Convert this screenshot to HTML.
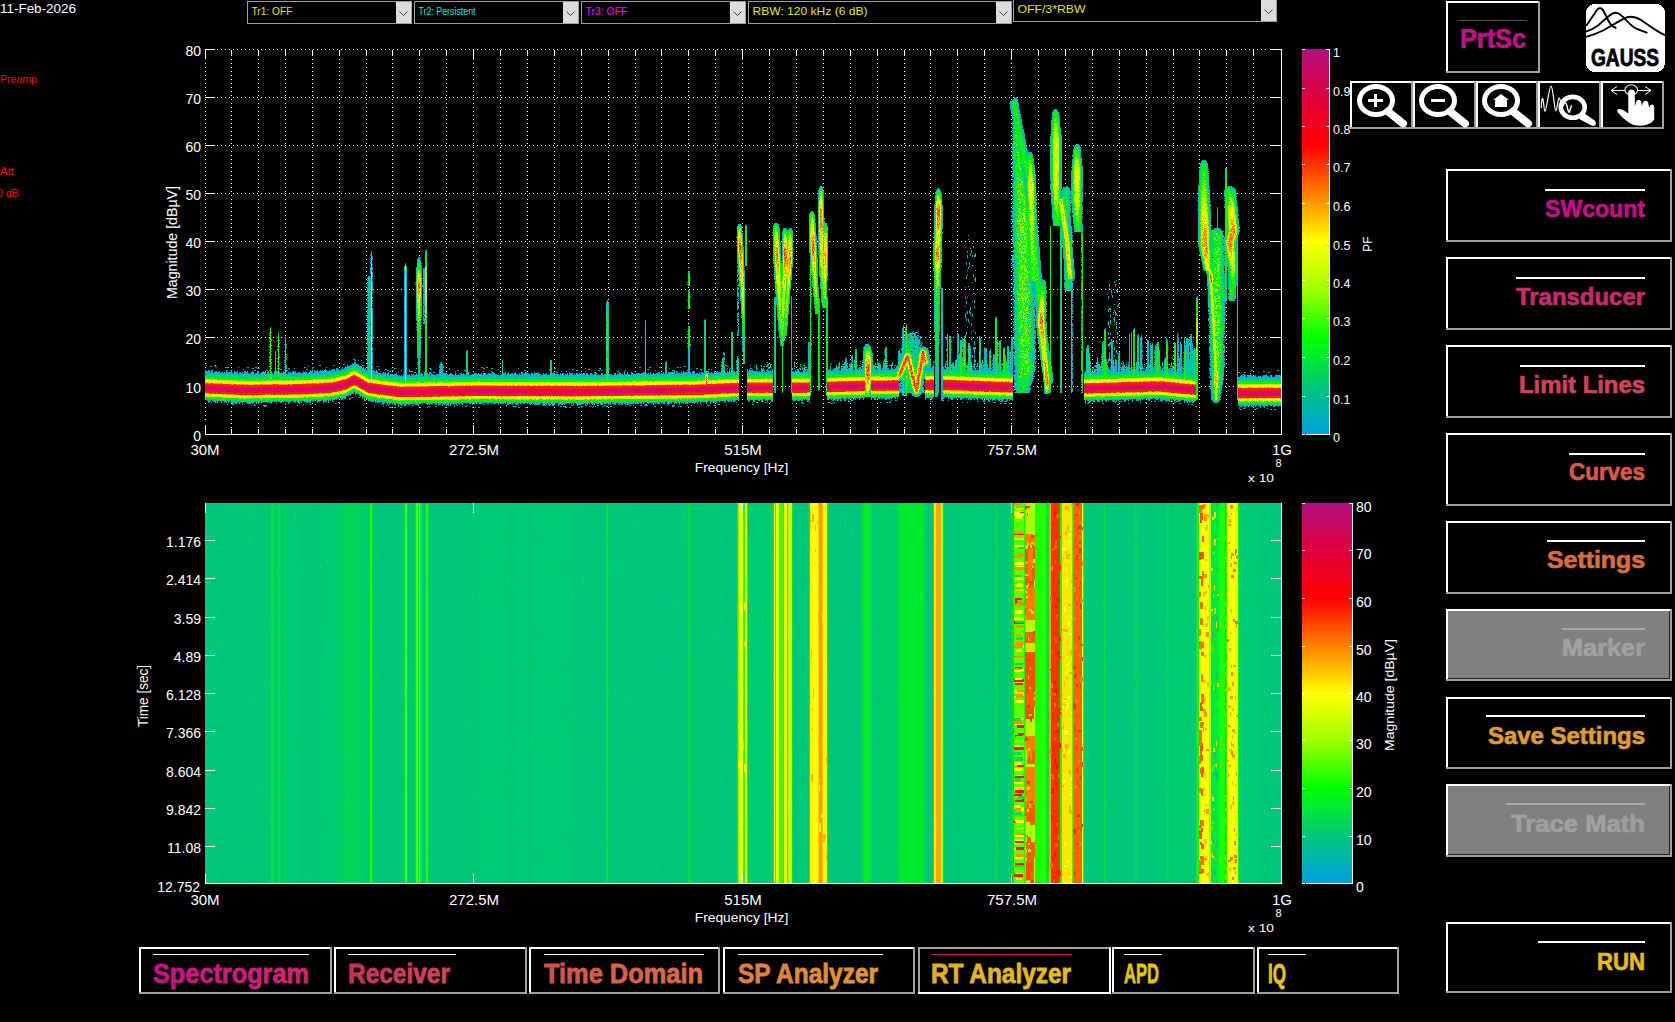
<!DOCTYPE html><html><head><meta charset="utf-8"><style>html,body{margin:0;padding:0;background:#000;width:1675px;height:1022px;overflow:hidden}svg{display:block}</style></head><body>
<svg width="1675" height="1022" viewBox="0 0 1675 1022" font-family='"Liberation Sans", sans-serif' shape-rendering="crispEdges">
<defs>
<linearGradient id="cb" x1="0" y1="0" x2="0" y2="1"><stop offset="0.000" stop-color="#b01080"/><stop offset="0.062" stop-color="#c8085e"/><stop offset="0.125" stop-color="#e0003c"/><stop offset="0.188" stop-color="#f0001e"/><stop offset="0.250" stop-color="#ff0000"/><stop offset="0.312" stop-color="#ff4000"/><stop offset="0.375" stop-color="#ff8000"/><stop offset="0.438" stop-color="#ffc000"/><stop offset="0.500" stop-color="#ffff00"/><stop offset="0.562" stop-color="#d0ff00"/><stop offset="0.625" stop-color="#a0ff00"/><stop offset="0.688" stop-color="#50ff00"/><stop offset="0.750" stop-color="#00ff00"/><stop offset="0.812" stop-color="#00e43c"/><stop offset="0.875" stop-color="#00c878"/><stop offset="0.938" stop-color="#00b4ac"/><stop offset="1.000" stop-color="#00a0e0"/></linearGradient>
<linearGradient id="tabg" gradientUnits="userSpaceOnUse" x1="150" y1="0" x2="1290" y2="0"><stop offset="0.000" stop-color="#c4108c"/><stop offset="0.140" stop-color="#cc2870"/><stop offset="0.175" stop-color="#c83064"/><stop offset="0.263" stop-color="#d04858"/><stop offset="0.346" stop-color="#d45050"/><stop offset="0.482" stop-color="#dc7040"/><stop offset="0.518" stop-color="#e07c3c"/><stop offset="0.640" stop-color="#e09c30"/><stop offset="0.684" stop-color="#e0b024"/><stop offset="0.807" stop-color="#e4c018"/><stop offset="0.855" stop-color="#e8c410"/><stop offset="1.000" stop-color="#e8c810"/></linearGradient>
<linearGradient id="rpg" gradientUnits="userSpaceOnUse" x1="0" y1="200" x2="0" y2="975"><stop offset="0" stop-color="#c40c8c"/><stop offset="0.12" stop-color="#c82870"/><stop offset="0.23" stop-color="#d0405c"/><stop offset="0.35" stop-color="#d85848"/><stop offset="0.46" stop-color="#d86c3c"/><stop offset="0.69" stop-color="#e09c2c"/><stop offset="1" stop-color="#e4c010"/></linearGradient>
</defs>
<text x="0" y="13" font-size="13.5" fill="#fff" text-anchor="start" font-weight="normal" textLength="76" lengthAdjust="spacingAndGlyphs" >11-Feb-2026</text>
<text x="0" y="83" font-size="10.5" fill="#f00" text-anchor="start" font-weight="normal" textLength="37" lengthAdjust="spacingAndGlyphs" >Preamp</text>
<text x="0" y="175" font-size="10.5" fill="#f00" text-anchor="start" font-weight="normal" textLength="14" lengthAdjust="spacingAndGlyphs" >Att</text>
<text x="-3" y="197" font-size="10.5" fill="#f00" text-anchor="start" font-weight="normal" textLength="22" lengthAdjust="spacingAndGlyphs" >0 dB</text>
<rect x="247.5" y="1.5" width="164.0" height="22.0" fill="#000" stroke="#a0a0a0" stroke-width="1"/>
<rect x="395.5" y="2.0" width="15.5" height="21.0" fill="#dcdcdc"/>
<path d="M399.5 11.5 L403.5 15.5 L407.5 11.5" stroke="#404040" stroke-width="1" fill="none" shape-rendering="auto"/>
<text x="251.5" y="15.0" font-size="11" fill="#e8e800" text-anchor="start" font-weight="normal" textLength="41" lengthAdjust="spacingAndGlyphs" >Tr1: OFF</text>
<rect x="414.5" y="1.5" width="164.0" height="22.0" fill="#000" stroke="#a0a0a0" stroke-width="1"/>
<rect x="562.5" y="2.0" width="15.5" height="21.0" fill="#dcdcdc"/>
<path d="M566.5 11.5 L570.5 15.5 L574.5 11.5" stroke="#404040" stroke-width="1" fill="none" shape-rendering="auto"/>
<text x="418.5" y="15.0" font-size="11" fill="#00e8e8" text-anchor="start" font-weight="normal" textLength="57" lengthAdjust="spacingAndGlyphs" >Tr2: Persistent</text>
<rect x="581.5" y="1.5" width="164.0" height="22.0" fill="#000" stroke="#a0a0a0" stroke-width="1"/>
<rect x="729.5" y="2.0" width="15.5" height="21.0" fill="#dcdcdc"/>
<path d="M733.5 11.5 L737.5 15.5 L741.5 11.5" stroke="#404040" stroke-width="1" fill="none" shape-rendering="auto"/>
<text x="585.5" y="15.0" font-size="11" fill="#ff00ff" text-anchor="start" font-weight="normal" textLength="42" lengthAdjust="spacingAndGlyphs" >Tr3: OFF</text>
<rect x="748.5" y="1.5" width="263.0" height="22.0" fill="#000" stroke="#a0a0a0" stroke-width="1"/>
<rect x="995.5" y="2.0" width="15.5" height="21.0" fill="#dcdcdc"/>
<path d="M999.5 11.5 L1003.5 15.5 L1007.5 11.5" stroke="#404040" stroke-width="1" fill="none" shape-rendering="auto"/>
<text x="752.5" y="15.0" font-size="11" fill="#e8e800" text-anchor="start" font-weight="normal" textLength="115" lengthAdjust="spacingAndGlyphs" >RBW: 120 kHz (6 dB)</text>
<rect x="1013.5" y="-0.5" width="263.0" height="22.0" fill="#000" stroke="#a0a0a0" stroke-width="1"/>
<rect x="1260.5" y="0.0" width="15.5" height="21.0" fill="#dcdcdc"/>
<path d="M1264.5 9.5 L1268.5 13.5 L1272.5 9.5" stroke="#404040" stroke-width="1" fill="none" shape-rendering="auto"/>
<text x="1017.5" y="13.0" font-size="11" fill="#e8e800" text-anchor="start" font-weight="normal" textLength="68" lengthAdjust="spacingAndGlyphs" >OFF/3*RBW</text>
<g fill="#fff">
<path d="M231 59h1v1h-1zM231 63h1v1h-1zM231 67h1v1h-1zM231 71h1v1h-1zM231 75h1v1h-1zM231 79h1v1h-1zM231 83h1v1h-1zM231 87h1v1h-1zM231 91h1v1h-1zM231 95h1v1h-1zM231 99h1v1h-1zM231 103h1v1h-1zM231 107h1v1h-1zM231 111h1v1h-1zM231 115h1v1h-1zM231 119h1v1h-1zM231 123h1v1h-1zM231 127h1v1h-1zM231 131h1v1h-1zM231 135h1v1h-1zM231 139h1v1h-1zM231 143h1v1h-1zM231 147h1v1h-1zM231 151h1v1h-1zM231 155h1v1h-1zM231 159h1v1h-1zM231 163h1v1h-1zM231 167h1v1h-1zM231 171h1v1h-1zM231 175h1v1h-1zM231 179h1v1h-1zM231 183h1v1h-1zM231 187h1v1h-1zM231 191h1v1h-1zM231 195h1v1h-1zM231 199h1v1h-1zM231 203h1v1h-1zM231 207h1v1h-1zM231 211h1v1h-1zM231 215h1v1h-1zM231 219h1v1h-1zM231 223h1v1h-1zM231 227h1v1h-1zM231 231h1v1h-1zM231 235h1v1h-1zM231 239h1v1h-1zM231 243h1v1h-1zM231 247h1v1h-1zM231 251h1v1h-1zM231 255h1v1h-1zM231 259h1v1h-1zM231 263h1v1h-1zM231 267h1v1h-1zM231 271h1v1h-1zM231 275h1v1h-1zM231 279h1v1h-1zM231 283h1v1h-1zM231 287h1v1h-1zM231 291h1v1h-1zM231 295h1v1h-1zM231 299h1v1h-1zM231 303h1v1h-1zM231 307h1v1h-1zM231 311h1v1h-1zM231 315h1v1h-1zM231 319h1v1h-1zM231 323h1v1h-1zM231 327h1v1h-1zM231 331h1v1h-1zM231 335h1v1h-1zM231 339h1v1h-1zM231 343h1v1h-1zM231 347h1v1h-1zM231 351h1v1h-1zM231 355h1v1h-1zM231 359h1v1h-1zM231 363h1v1h-1zM231 367h1v1h-1zM231 371h1v1h-1zM231 375h1v1h-1zM231 379h1v1h-1zM231 383h1v1h-1zM231 387h1v1h-1zM231 391h1v1h-1zM231 395h1v1h-1zM231 399h1v1h-1zM231 403h1v1h-1zM231 407h1v1h-1zM231 411h1v1h-1zM231 415h1v1h-1zM231 419h1v1h-1zM231 423h1v1h-1zM231 427h1v1h-1zM231 431h1v1h-1zM258 59h1v1h-1zM258 63h1v1h-1zM258 67h1v1h-1zM258 71h1v1h-1zM258 75h1v1h-1zM258 79h1v1h-1zM258 83h1v1h-1zM258 87h1v1h-1zM258 91h1v1h-1zM258 95h1v1h-1zM258 99h1v1h-1zM258 103h1v1h-1zM258 107h1v1h-1zM258 111h1v1h-1zM258 115h1v1h-1zM258 119h1v1h-1zM258 123h1v1h-1zM258 127h1v1h-1zM258 131h1v1h-1zM258 135h1v1h-1zM258 139h1v1h-1zM258 143h1v1h-1zM258 147h1v1h-1zM258 151h1v1h-1zM258 155h1v1h-1zM258 159h1v1h-1zM258 163h1v1h-1zM258 167h1v1h-1zM258 171h1v1h-1zM258 175h1v1h-1zM258 179h1v1h-1zM258 183h1v1h-1zM258 187h1v1h-1zM258 191h1v1h-1zM258 195h1v1h-1zM258 199h1v1h-1zM258 203h1v1h-1zM258 207h1v1h-1zM258 211h1v1h-1zM258 215h1v1h-1zM258 219h1v1h-1zM258 223h1v1h-1zM258 227h1v1h-1zM258 231h1v1h-1zM258 235h1v1h-1zM258 239h1v1h-1zM258 243h1v1h-1zM258 247h1v1h-1zM258 251h1v1h-1zM258 255h1v1h-1zM258 259h1v1h-1zM258 263h1v1h-1zM258 267h1v1h-1zM258 271h1v1h-1zM258 275h1v1h-1zM258 279h1v1h-1zM258 283h1v1h-1zM258 287h1v1h-1zM258 291h1v1h-1zM258 295h1v1h-1zM258 299h1v1h-1zM258 303h1v1h-1zM258 307h1v1h-1zM258 311h1v1h-1zM258 315h1v1h-1zM258 319h1v1h-1zM258 323h1v1h-1zM258 327h1v1h-1zM258 331h1v1h-1zM258 335h1v1h-1zM258 339h1v1h-1zM258 343h1v1h-1zM258 347h1v1h-1zM258 351h1v1h-1zM258 355h1v1h-1zM258 359h1v1h-1zM258 363h1v1h-1zM258 367h1v1h-1zM258 371h1v1h-1zM258 375h1v1h-1zM258 379h1v1h-1zM258 383h1v1h-1zM258 387h1v1h-1zM258 391h1v1h-1zM258 395h1v1h-1zM258 399h1v1h-1zM258 403h1v1h-1zM258 407h1v1h-1zM258 411h1v1h-1zM258 415h1v1h-1zM258 419h1v1h-1zM258 423h1v1h-1zM258 427h1v1h-1zM258 431h1v1h-1zM285 59h1v1h-1zM285 63h1v1h-1zM285 67h1v1h-1zM285 71h1v1h-1zM285 75h1v1h-1zM285 79h1v1h-1zM285 83h1v1h-1zM285 87h1v1h-1zM285 91h1v1h-1zM285 95h1v1h-1zM285 99h1v1h-1zM285 103h1v1h-1zM285 107h1v1h-1zM285 111h1v1h-1zM285 115h1v1h-1zM285 119h1v1h-1zM285 123h1v1h-1zM285 127h1v1h-1zM285 131h1v1h-1zM285 135h1v1h-1zM285 139h1v1h-1zM285 143h1v1h-1zM285 147h1v1h-1zM285 151h1v1h-1zM285 155h1v1h-1zM285 159h1v1h-1zM285 163h1v1h-1zM285 167h1v1h-1zM285 171h1v1h-1zM285 175h1v1h-1zM285 179h1v1h-1zM285 183h1v1h-1zM285 187h1v1h-1zM285 191h1v1h-1zM285 195h1v1h-1zM285 199h1v1h-1zM285 203h1v1h-1zM285 207h1v1h-1zM285 211h1v1h-1zM285 215h1v1h-1zM285 219h1v1h-1zM285 223h1v1h-1zM285 227h1v1h-1zM285 231h1v1h-1zM285 235h1v1h-1zM285 239h1v1h-1zM285 243h1v1h-1zM285 247h1v1h-1zM285 251h1v1h-1zM285 255h1v1h-1zM285 259h1v1h-1zM285 263h1v1h-1zM285 267h1v1h-1zM285 271h1v1h-1zM285 275h1v1h-1zM285 279h1v1h-1zM285 283h1v1h-1zM285 287h1v1h-1zM285 291h1v1h-1zM285 295h1v1h-1zM285 299h1v1h-1zM285 303h1v1h-1zM285 307h1v1h-1zM285 311h1v1h-1zM285 315h1v1h-1zM285 319h1v1h-1zM285 323h1v1h-1zM285 327h1v1h-1zM285 331h1v1h-1zM285 335h1v1h-1zM285 339h1v1h-1zM285 343h1v1h-1zM285 347h1v1h-1zM285 351h1v1h-1zM285 355h1v1h-1zM285 359h1v1h-1zM285 363h1v1h-1zM285 367h1v1h-1zM285 371h1v1h-1zM285 375h1v1h-1zM285 379h1v1h-1zM285 383h1v1h-1zM285 387h1v1h-1zM285 391h1v1h-1zM285 395h1v1h-1zM285 399h1v1h-1zM285 403h1v1h-1zM285 407h1v1h-1zM285 411h1v1h-1zM285 415h1v1h-1zM285 419h1v1h-1zM285 423h1v1h-1zM285 427h1v1h-1zM285 431h1v1h-1zM312 59h1v1h-1zM312 63h1v1h-1zM312 67h1v1h-1zM312 71h1v1h-1zM312 75h1v1h-1zM312 79h1v1h-1zM312 83h1v1h-1zM312 87h1v1h-1zM312 91h1v1h-1zM312 95h1v1h-1zM312 99h1v1h-1zM312 103h1v1h-1zM312 107h1v1h-1zM312 111h1v1h-1zM312 115h1v1h-1zM312 119h1v1h-1zM312 123h1v1h-1zM312 127h1v1h-1zM312 131h1v1h-1zM312 135h1v1h-1zM312 139h1v1h-1zM312 143h1v1h-1zM312 147h1v1h-1zM312 151h1v1h-1zM312 155h1v1h-1zM312 159h1v1h-1zM312 163h1v1h-1zM312 167h1v1h-1zM312 171h1v1h-1zM312 175h1v1h-1zM312 179h1v1h-1zM312 183h1v1h-1zM312 187h1v1h-1zM312 191h1v1h-1zM312 195h1v1h-1zM312 199h1v1h-1zM312 203h1v1h-1zM312 207h1v1h-1zM312 211h1v1h-1zM312 215h1v1h-1zM312 219h1v1h-1zM312 223h1v1h-1zM312 227h1v1h-1zM312 231h1v1h-1zM312 235h1v1h-1zM312 239h1v1h-1zM312 243h1v1h-1zM312 247h1v1h-1zM312 251h1v1h-1zM312 255h1v1h-1zM312 259h1v1h-1zM312 263h1v1h-1zM312 267h1v1h-1zM312 271h1v1h-1zM312 275h1v1h-1zM312 279h1v1h-1zM312 283h1v1h-1zM312 287h1v1h-1zM312 291h1v1h-1zM312 295h1v1h-1zM312 299h1v1h-1zM312 303h1v1h-1zM312 307h1v1h-1zM312 311h1v1h-1zM312 315h1v1h-1zM312 319h1v1h-1zM312 323h1v1h-1zM312 327h1v1h-1zM312 331h1v1h-1zM312 335h1v1h-1zM312 339h1v1h-1zM312 343h1v1h-1zM312 347h1v1h-1zM312 351h1v1h-1zM312 355h1v1h-1zM312 359h1v1h-1zM312 363h1v1h-1zM312 367h1v1h-1zM312 371h1v1h-1zM312 375h1v1h-1zM312 379h1v1h-1zM312 383h1v1h-1zM312 387h1v1h-1zM312 391h1v1h-1zM312 395h1v1h-1zM312 399h1v1h-1zM312 403h1v1h-1zM312 407h1v1h-1zM312 411h1v1h-1zM312 415h1v1h-1zM312 419h1v1h-1zM312 423h1v1h-1zM312 427h1v1h-1zM312 431h1v1h-1zM339 59h1v1h-1zM339 63h1v1h-1zM339 67h1v1h-1zM339 71h1v1h-1zM339 75h1v1h-1zM339 79h1v1h-1zM339 83h1v1h-1zM339 87h1v1h-1zM339 91h1v1h-1zM339 95h1v1h-1zM339 99h1v1h-1zM339 103h1v1h-1zM339 107h1v1h-1zM339 111h1v1h-1zM339 115h1v1h-1zM339 119h1v1h-1zM339 123h1v1h-1zM339 127h1v1h-1zM339 131h1v1h-1zM339 135h1v1h-1zM339 139h1v1h-1zM339 143h1v1h-1zM339 147h1v1h-1zM339 151h1v1h-1zM339 155h1v1h-1zM339 159h1v1h-1zM339 163h1v1h-1zM339 167h1v1h-1zM339 171h1v1h-1zM339 175h1v1h-1zM339 179h1v1h-1zM339 183h1v1h-1zM339 187h1v1h-1zM339 191h1v1h-1zM339 195h1v1h-1zM339 199h1v1h-1zM339 203h1v1h-1zM339 207h1v1h-1zM339 211h1v1h-1zM339 215h1v1h-1zM339 219h1v1h-1zM339 223h1v1h-1zM339 227h1v1h-1zM339 231h1v1h-1zM339 235h1v1h-1zM339 239h1v1h-1zM339 243h1v1h-1zM339 247h1v1h-1zM339 251h1v1h-1zM339 255h1v1h-1zM339 259h1v1h-1zM339 263h1v1h-1zM339 267h1v1h-1zM339 271h1v1h-1zM339 275h1v1h-1zM339 279h1v1h-1zM339 283h1v1h-1zM339 287h1v1h-1zM339 291h1v1h-1zM339 295h1v1h-1zM339 299h1v1h-1zM339 303h1v1h-1zM339 307h1v1h-1zM339 311h1v1h-1zM339 315h1v1h-1zM339 319h1v1h-1zM339 323h1v1h-1zM339 327h1v1h-1zM339 331h1v1h-1zM339 335h1v1h-1zM339 339h1v1h-1zM339 343h1v1h-1zM339 347h1v1h-1zM339 351h1v1h-1zM339 355h1v1h-1zM339 359h1v1h-1zM339 363h1v1h-1zM339 367h1v1h-1zM339 371h1v1h-1zM339 375h1v1h-1zM339 379h1v1h-1zM339 383h1v1h-1zM339 387h1v1h-1zM339 391h1v1h-1zM339 395h1v1h-1zM339 399h1v1h-1zM339 403h1v1h-1zM339 407h1v1h-1zM339 411h1v1h-1zM339 415h1v1h-1zM339 419h1v1h-1zM339 423h1v1h-1zM339 427h1v1h-1zM339 431h1v1h-1zM366 59h1v1h-1zM366 63h1v1h-1zM366 67h1v1h-1zM366 71h1v1h-1zM366 75h1v1h-1zM366 79h1v1h-1zM366 83h1v1h-1zM366 87h1v1h-1zM366 91h1v1h-1zM366 95h1v1h-1zM366 99h1v1h-1zM366 103h1v1h-1zM366 107h1v1h-1zM366 111h1v1h-1zM366 115h1v1h-1zM366 119h1v1h-1zM366 123h1v1h-1zM366 127h1v1h-1zM366 131h1v1h-1zM366 135h1v1h-1zM366 139h1v1h-1zM366 143h1v1h-1zM366 147h1v1h-1zM366 151h1v1h-1zM366 155h1v1h-1zM366 159h1v1h-1zM366 163h1v1h-1zM366 167h1v1h-1zM366 171h1v1h-1zM366 175h1v1h-1zM366 179h1v1h-1zM366 183h1v1h-1zM366 187h1v1h-1zM366 191h1v1h-1zM366 195h1v1h-1zM366 199h1v1h-1zM366 203h1v1h-1zM366 207h1v1h-1zM366 211h1v1h-1zM366 215h1v1h-1zM366 219h1v1h-1zM366 223h1v1h-1zM366 227h1v1h-1zM366 231h1v1h-1zM366 235h1v1h-1zM366 239h1v1h-1zM366 243h1v1h-1zM366 247h1v1h-1zM366 251h1v1h-1zM366 255h1v1h-1zM366 259h1v1h-1zM366 263h1v1h-1zM366 267h1v1h-1zM366 271h1v1h-1zM366 275h1v1h-1zM366 279h1v1h-1zM366 283h1v1h-1zM366 287h1v1h-1zM366 291h1v1h-1zM366 295h1v1h-1zM366 299h1v1h-1zM366 303h1v1h-1zM366 307h1v1h-1zM366 311h1v1h-1zM366 315h1v1h-1zM366 319h1v1h-1zM366 323h1v1h-1zM366 327h1v1h-1zM366 331h1v1h-1zM366 335h1v1h-1zM366 339h1v1h-1zM366 343h1v1h-1zM366 347h1v1h-1zM366 351h1v1h-1zM366 355h1v1h-1zM366 359h1v1h-1zM366 363h1v1h-1zM366 367h1v1h-1zM366 371h1v1h-1zM366 375h1v1h-1zM366 379h1v1h-1zM366 383h1v1h-1zM366 387h1v1h-1zM366 391h1v1h-1zM366 395h1v1h-1zM366 399h1v1h-1zM366 403h1v1h-1zM366 407h1v1h-1zM366 411h1v1h-1zM366 415h1v1h-1zM366 419h1v1h-1zM366 423h1v1h-1zM366 427h1v1h-1zM366 431h1v1h-1zM392 59h1v1h-1zM392 63h1v1h-1zM392 67h1v1h-1zM392 71h1v1h-1zM392 75h1v1h-1zM392 79h1v1h-1zM392 83h1v1h-1zM392 87h1v1h-1zM392 91h1v1h-1zM392 95h1v1h-1zM392 99h1v1h-1zM392 103h1v1h-1zM392 107h1v1h-1zM392 111h1v1h-1zM392 115h1v1h-1zM392 119h1v1h-1zM392 123h1v1h-1zM392 127h1v1h-1zM392 131h1v1h-1zM392 135h1v1h-1zM392 139h1v1h-1zM392 143h1v1h-1zM392 147h1v1h-1zM392 151h1v1h-1zM392 155h1v1h-1zM392 159h1v1h-1zM392 163h1v1h-1zM392 167h1v1h-1zM392 171h1v1h-1zM392 175h1v1h-1zM392 179h1v1h-1zM392 183h1v1h-1zM392 187h1v1h-1zM392 191h1v1h-1zM392 195h1v1h-1zM392 199h1v1h-1zM392 203h1v1h-1zM392 207h1v1h-1zM392 211h1v1h-1zM392 215h1v1h-1zM392 219h1v1h-1zM392 223h1v1h-1zM392 227h1v1h-1zM392 231h1v1h-1zM392 235h1v1h-1zM392 239h1v1h-1zM392 243h1v1h-1zM392 247h1v1h-1zM392 251h1v1h-1zM392 255h1v1h-1zM392 259h1v1h-1zM392 263h1v1h-1zM392 267h1v1h-1zM392 271h1v1h-1zM392 275h1v1h-1zM392 279h1v1h-1zM392 283h1v1h-1zM392 287h1v1h-1zM392 291h1v1h-1zM392 295h1v1h-1zM392 299h1v1h-1zM392 303h1v1h-1zM392 307h1v1h-1zM392 311h1v1h-1zM392 315h1v1h-1zM392 319h1v1h-1zM392 323h1v1h-1zM392 327h1v1h-1zM392 331h1v1h-1zM392 335h1v1h-1zM392 339h1v1h-1zM392 343h1v1h-1zM392 347h1v1h-1zM392 351h1v1h-1zM392 355h1v1h-1zM392 359h1v1h-1zM392 363h1v1h-1zM392 367h1v1h-1zM392 371h1v1h-1zM392 375h1v1h-1zM392 379h1v1h-1zM392 383h1v1h-1zM392 387h1v1h-1zM392 391h1v1h-1zM392 395h1v1h-1zM392 399h1v1h-1zM392 403h1v1h-1zM392 407h1v1h-1zM392 411h1v1h-1zM392 415h1v1h-1zM392 419h1v1h-1zM392 423h1v1h-1zM392 427h1v1h-1zM392 431h1v1h-1zM419 59h1v1h-1zM419 63h1v1h-1zM419 67h1v1h-1zM419 71h1v1h-1zM419 75h1v1h-1zM419 79h1v1h-1zM419 83h1v1h-1zM419 87h1v1h-1zM419 91h1v1h-1zM419 95h1v1h-1zM419 99h1v1h-1zM419 103h1v1h-1zM419 107h1v1h-1zM419 111h1v1h-1zM419 115h1v1h-1zM419 119h1v1h-1zM419 123h1v1h-1zM419 127h1v1h-1zM419 131h1v1h-1zM419 135h1v1h-1zM419 139h1v1h-1zM419 143h1v1h-1zM419 147h1v1h-1zM419 151h1v1h-1zM419 155h1v1h-1zM419 159h1v1h-1zM419 163h1v1h-1zM419 167h1v1h-1zM419 171h1v1h-1zM419 175h1v1h-1zM419 179h1v1h-1zM419 183h1v1h-1zM419 187h1v1h-1zM419 191h1v1h-1zM419 195h1v1h-1zM419 199h1v1h-1zM419 203h1v1h-1zM419 207h1v1h-1zM419 211h1v1h-1zM419 215h1v1h-1zM419 219h1v1h-1zM419 223h1v1h-1zM419 227h1v1h-1zM419 231h1v1h-1zM419 235h1v1h-1zM419 239h1v1h-1zM419 243h1v1h-1zM419 247h1v1h-1zM419 251h1v1h-1zM419 255h1v1h-1zM419 259h1v1h-1zM419 263h1v1h-1zM419 267h1v1h-1zM419 271h1v1h-1zM419 275h1v1h-1zM419 279h1v1h-1zM419 283h1v1h-1zM419 287h1v1h-1zM419 291h1v1h-1zM419 295h1v1h-1zM419 299h1v1h-1zM419 303h1v1h-1zM419 307h1v1h-1zM419 311h1v1h-1zM419 315h1v1h-1zM419 319h1v1h-1zM419 323h1v1h-1zM419 327h1v1h-1zM419 331h1v1h-1zM419 335h1v1h-1zM419 339h1v1h-1zM419 343h1v1h-1zM419 347h1v1h-1zM419 351h1v1h-1zM419 355h1v1h-1zM419 359h1v1h-1zM419 363h1v1h-1zM419 367h1v1h-1zM419 371h1v1h-1zM419 375h1v1h-1zM419 379h1v1h-1zM419 383h1v1h-1zM419 387h1v1h-1zM419 391h1v1h-1zM419 395h1v1h-1zM419 399h1v1h-1zM419 403h1v1h-1zM419 407h1v1h-1zM419 411h1v1h-1zM419 415h1v1h-1zM419 419h1v1h-1zM419 423h1v1h-1zM419 427h1v1h-1zM419 431h1v1h-1zM446 59h1v1h-1zM446 63h1v1h-1zM446 67h1v1h-1zM446 71h1v1h-1zM446 75h1v1h-1zM446 79h1v1h-1zM446 83h1v1h-1zM446 87h1v1h-1zM446 91h1v1h-1zM446 95h1v1h-1zM446 99h1v1h-1zM446 103h1v1h-1zM446 107h1v1h-1zM446 111h1v1h-1zM446 115h1v1h-1zM446 119h1v1h-1zM446 123h1v1h-1zM446 127h1v1h-1zM446 131h1v1h-1zM446 135h1v1h-1zM446 139h1v1h-1zM446 143h1v1h-1zM446 147h1v1h-1zM446 151h1v1h-1zM446 155h1v1h-1zM446 159h1v1h-1zM446 163h1v1h-1zM446 167h1v1h-1zM446 171h1v1h-1zM446 175h1v1h-1zM446 179h1v1h-1zM446 183h1v1h-1zM446 187h1v1h-1zM446 191h1v1h-1zM446 195h1v1h-1zM446 199h1v1h-1zM446 203h1v1h-1zM446 207h1v1h-1zM446 211h1v1h-1zM446 215h1v1h-1zM446 219h1v1h-1zM446 223h1v1h-1zM446 227h1v1h-1zM446 231h1v1h-1zM446 235h1v1h-1zM446 239h1v1h-1zM446 243h1v1h-1zM446 247h1v1h-1zM446 251h1v1h-1zM446 255h1v1h-1zM446 259h1v1h-1zM446 263h1v1h-1zM446 267h1v1h-1zM446 271h1v1h-1zM446 275h1v1h-1zM446 279h1v1h-1zM446 283h1v1h-1zM446 287h1v1h-1zM446 291h1v1h-1zM446 295h1v1h-1zM446 299h1v1h-1zM446 303h1v1h-1zM446 307h1v1h-1zM446 311h1v1h-1zM446 315h1v1h-1zM446 319h1v1h-1zM446 323h1v1h-1zM446 327h1v1h-1zM446 331h1v1h-1zM446 335h1v1h-1zM446 339h1v1h-1zM446 343h1v1h-1zM446 347h1v1h-1zM446 351h1v1h-1zM446 355h1v1h-1zM446 359h1v1h-1zM446 363h1v1h-1zM446 367h1v1h-1zM446 371h1v1h-1zM446 375h1v1h-1zM446 379h1v1h-1zM446 383h1v1h-1zM446 387h1v1h-1zM446 391h1v1h-1zM446 395h1v1h-1zM446 399h1v1h-1zM446 403h1v1h-1zM446 407h1v1h-1zM446 411h1v1h-1zM446 415h1v1h-1zM446 419h1v1h-1zM446 423h1v1h-1zM446 427h1v1h-1zM446 431h1v1h-1zM473 59h1v1h-1zM473 63h1v1h-1zM473 67h1v1h-1zM473 71h1v1h-1zM473 75h1v1h-1zM473 79h1v1h-1zM473 83h1v1h-1zM473 87h1v1h-1zM473 91h1v1h-1zM473 95h1v1h-1zM473 99h1v1h-1zM473 103h1v1h-1zM473 107h1v1h-1zM473 111h1v1h-1zM473 115h1v1h-1zM473 119h1v1h-1zM473 123h1v1h-1zM473 127h1v1h-1zM473 131h1v1h-1zM473 135h1v1h-1zM473 139h1v1h-1zM473 143h1v1h-1zM473 147h1v1h-1zM473 151h1v1h-1zM473 155h1v1h-1zM473 159h1v1h-1zM473 163h1v1h-1zM473 167h1v1h-1zM473 171h1v1h-1zM473 175h1v1h-1zM473 179h1v1h-1zM473 183h1v1h-1zM473 187h1v1h-1zM473 191h1v1h-1zM473 195h1v1h-1zM473 199h1v1h-1zM473 203h1v1h-1zM473 207h1v1h-1zM473 211h1v1h-1zM473 215h1v1h-1zM473 219h1v1h-1zM473 223h1v1h-1zM473 227h1v1h-1zM473 231h1v1h-1zM473 235h1v1h-1zM473 239h1v1h-1zM473 243h1v1h-1zM473 247h1v1h-1zM473 251h1v1h-1zM473 255h1v1h-1zM473 259h1v1h-1zM473 263h1v1h-1zM473 267h1v1h-1zM473 271h1v1h-1zM473 275h1v1h-1zM473 279h1v1h-1zM473 283h1v1h-1zM473 287h1v1h-1zM473 291h1v1h-1zM473 295h1v1h-1zM473 299h1v1h-1zM473 303h1v1h-1zM473 307h1v1h-1zM473 311h1v1h-1zM473 315h1v1h-1zM473 319h1v1h-1zM473 323h1v1h-1zM473 327h1v1h-1zM473 331h1v1h-1zM473 335h1v1h-1zM473 339h1v1h-1zM473 343h1v1h-1zM473 347h1v1h-1zM473 351h1v1h-1zM473 355h1v1h-1zM473 359h1v1h-1zM473 363h1v1h-1zM473 367h1v1h-1zM473 371h1v1h-1zM473 375h1v1h-1zM473 379h1v1h-1zM473 383h1v1h-1zM473 387h1v1h-1zM473 391h1v1h-1zM473 395h1v1h-1zM473 399h1v1h-1zM473 403h1v1h-1zM473 407h1v1h-1zM473 411h1v1h-1zM473 415h1v1h-1zM473 419h1v1h-1zM473 423h1v1h-1zM473 427h1v1h-1zM473 431h1v1h-1zM500 59h1v1h-1zM500 63h1v1h-1zM500 67h1v1h-1zM500 71h1v1h-1zM500 75h1v1h-1zM500 79h1v1h-1zM500 83h1v1h-1zM500 87h1v1h-1zM500 91h1v1h-1zM500 95h1v1h-1zM500 99h1v1h-1zM500 103h1v1h-1zM500 107h1v1h-1zM500 111h1v1h-1zM500 115h1v1h-1zM500 119h1v1h-1zM500 123h1v1h-1zM500 127h1v1h-1zM500 131h1v1h-1zM500 135h1v1h-1zM500 139h1v1h-1zM500 143h1v1h-1zM500 147h1v1h-1zM500 151h1v1h-1zM500 155h1v1h-1zM500 159h1v1h-1zM500 163h1v1h-1zM500 167h1v1h-1zM500 171h1v1h-1zM500 175h1v1h-1zM500 179h1v1h-1zM500 183h1v1h-1zM500 187h1v1h-1zM500 191h1v1h-1zM500 195h1v1h-1zM500 199h1v1h-1zM500 203h1v1h-1zM500 207h1v1h-1zM500 211h1v1h-1zM500 215h1v1h-1zM500 219h1v1h-1zM500 223h1v1h-1zM500 227h1v1h-1zM500 231h1v1h-1zM500 235h1v1h-1zM500 239h1v1h-1zM500 243h1v1h-1zM500 247h1v1h-1zM500 251h1v1h-1zM500 255h1v1h-1zM500 259h1v1h-1zM500 263h1v1h-1zM500 267h1v1h-1zM500 271h1v1h-1zM500 275h1v1h-1zM500 279h1v1h-1zM500 283h1v1h-1zM500 287h1v1h-1zM500 291h1v1h-1zM500 295h1v1h-1zM500 299h1v1h-1zM500 303h1v1h-1zM500 307h1v1h-1zM500 311h1v1h-1zM500 315h1v1h-1zM500 319h1v1h-1zM500 323h1v1h-1zM500 327h1v1h-1zM500 331h1v1h-1zM500 335h1v1h-1zM500 339h1v1h-1zM500 343h1v1h-1zM500 347h1v1h-1zM500 351h1v1h-1zM500 355h1v1h-1zM500 359h1v1h-1zM500 363h1v1h-1zM500 367h1v1h-1zM500 371h1v1h-1zM500 375h1v1h-1zM500 379h1v1h-1zM500 383h1v1h-1zM500 387h1v1h-1zM500 391h1v1h-1zM500 395h1v1h-1zM500 399h1v1h-1zM500 403h1v1h-1zM500 407h1v1h-1zM500 411h1v1h-1zM500 415h1v1h-1zM500 419h1v1h-1zM500 423h1v1h-1zM500 427h1v1h-1zM500 431h1v1h-1zM527 59h1v1h-1zM527 63h1v1h-1zM527 67h1v1h-1zM527 71h1v1h-1zM527 75h1v1h-1zM527 79h1v1h-1zM527 83h1v1h-1zM527 87h1v1h-1zM527 91h1v1h-1zM527 95h1v1h-1zM527 99h1v1h-1zM527 103h1v1h-1zM527 107h1v1h-1zM527 111h1v1h-1zM527 115h1v1h-1zM527 119h1v1h-1zM527 123h1v1h-1zM527 127h1v1h-1zM527 131h1v1h-1zM527 135h1v1h-1zM527 139h1v1h-1zM527 143h1v1h-1zM527 147h1v1h-1zM527 151h1v1h-1zM527 155h1v1h-1zM527 159h1v1h-1zM527 163h1v1h-1zM527 167h1v1h-1zM527 171h1v1h-1zM527 175h1v1h-1zM527 179h1v1h-1zM527 183h1v1h-1zM527 187h1v1h-1zM527 191h1v1h-1zM527 195h1v1h-1zM527 199h1v1h-1zM527 203h1v1h-1zM527 207h1v1h-1zM527 211h1v1h-1zM527 215h1v1h-1zM527 219h1v1h-1zM527 223h1v1h-1zM527 227h1v1h-1zM527 231h1v1h-1zM527 235h1v1h-1zM527 239h1v1h-1zM527 243h1v1h-1zM527 247h1v1h-1zM527 251h1v1h-1zM527 255h1v1h-1zM527 259h1v1h-1zM527 263h1v1h-1zM527 267h1v1h-1zM527 271h1v1h-1zM527 275h1v1h-1zM527 279h1v1h-1zM527 283h1v1h-1zM527 287h1v1h-1zM527 291h1v1h-1zM527 295h1v1h-1zM527 299h1v1h-1zM527 303h1v1h-1zM527 307h1v1h-1zM527 311h1v1h-1zM527 315h1v1h-1zM527 319h1v1h-1zM527 323h1v1h-1zM527 327h1v1h-1zM527 331h1v1h-1zM527 335h1v1h-1zM527 339h1v1h-1zM527 343h1v1h-1zM527 347h1v1h-1zM527 351h1v1h-1zM527 355h1v1h-1zM527 359h1v1h-1zM527 363h1v1h-1zM527 367h1v1h-1zM527 371h1v1h-1zM527 375h1v1h-1zM527 379h1v1h-1zM527 383h1v1h-1zM527 387h1v1h-1zM527 391h1v1h-1zM527 395h1v1h-1zM527 399h1v1h-1zM527 403h1v1h-1zM527 407h1v1h-1zM527 411h1v1h-1zM527 415h1v1h-1zM527 419h1v1h-1zM527 423h1v1h-1zM527 427h1v1h-1zM527 431h1v1h-1zM554 59h1v1h-1zM554 63h1v1h-1zM554 67h1v1h-1zM554 71h1v1h-1zM554 75h1v1h-1zM554 79h1v1h-1zM554 83h1v1h-1zM554 87h1v1h-1zM554 91h1v1h-1zM554 95h1v1h-1zM554 99h1v1h-1zM554 103h1v1h-1zM554 107h1v1h-1zM554 111h1v1h-1zM554 115h1v1h-1zM554 119h1v1h-1zM554 123h1v1h-1zM554 127h1v1h-1zM554 131h1v1h-1zM554 135h1v1h-1zM554 139h1v1h-1zM554 143h1v1h-1zM554 147h1v1h-1zM554 151h1v1h-1zM554 155h1v1h-1zM554 159h1v1h-1zM554 163h1v1h-1zM554 167h1v1h-1zM554 171h1v1h-1zM554 175h1v1h-1zM554 179h1v1h-1zM554 183h1v1h-1zM554 187h1v1h-1zM554 191h1v1h-1zM554 195h1v1h-1zM554 199h1v1h-1zM554 203h1v1h-1zM554 207h1v1h-1zM554 211h1v1h-1zM554 215h1v1h-1zM554 219h1v1h-1zM554 223h1v1h-1zM554 227h1v1h-1zM554 231h1v1h-1zM554 235h1v1h-1zM554 239h1v1h-1zM554 243h1v1h-1zM554 247h1v1h-1zM554 251h1v1h-1zM554 255h1v1h-1zM554 259h1v1h-1zM554 263h1v1h-1zM554 267h1v1h-1zM554 271h1v1h-1zM554 275h1v1h-1zM554 279h1v1h-1zM554 283h1v1h-1zM554 287h1v1h-1zM554 291h1v1h-1zM554 295h1v1h-1zM554 299h1v1h-1zM554 303h1v1h-1zM554 307h1v1h-1zM554 311h1v1h-1zM554 315h1v1h-1zM554 319h1v1h-1zM554 323h1v1h-1zM554 327h1v1h-1zM554 331h1v1h-1zM554 335h1v1h-1zM554 339h1v1h-1zM554 343h1v1h-1zM554 347h1v1h-1zM554 351h1v1h-1zM554 355h1v1h-1zM554 359h1v1h-1zM554 363h1v1h-1zM554 367h1v1h-1zM554 371h1v1h-1zM554 375h1v1h-1zM554 379h1v1h-1zM554 383h1v1h-1zM554 387h1v1h-1zM554 391h1v1h-1zM554 395h1v1h-1zM554 399h1v1h-1zM554 403h1v1h-1zM554 407h1v1h-1zM554 411h1v1h-1zM554 415h1v1h-1zM554 419h1v1h-1zM554 423h1v1h-1zM554 427h1v1h-1zM554 431h1v1h-1zM581 59h1v1h-1zM581 63h1v1h-1zM581 67h1v1h-1zM581 71h1v1h-1zM581 75h1v1h-1zM581 79h1v1h-1zM581 83h1v1h-1zM581 87h1v1h-1zM581 91h1v1h-1zM581 95h1v1h-1zM581 99h1v1h-1zM581 103h1v1h-1zM581 107h1v1h-1zM581 111h1v1h-1zM581 115h1v1h-1zM581 119h1v1h-1zM581 123h1v1h-1zM581 127h1v1h-1zM581 131h1v1h-1zM581 135h1v1h-1zM581 139h1v1h-1zM581 143h1v1h-1zM581 147h1v1h-1zM581 151h1v1h-1zM581 155h1v1h-1zM581 159h1v1h-1zM581 163h1v1h-1zM581 167h1v1h-1zM581 171h1v1h-1zM581 175h1v1h-1zM581 179h1v1h-1zM581 183h1v1h-1zM581 187h1v1h-1zM581 191h1v1h-1zM581 195h1v1h-1zM581 199h1v1h-1zM581 203h1v1h-1zM581 207h1v1h-1zM581 211h1v1h-1zM581 215h1v1h-1zM581 219h1v1h-1zM581 223h1v1h-1zM581 227h1v1h-1zM581 231h1v1h-1zM581 235h1v1h-1zM581 239h1v1h-1zM581 243h1v1h-1zM581 247h1v1h-1zM581 251h1v1h-1zM581 255h1v1h-1zM581 259h1v1h-1zM581 263h1v1h-1zM581 267h1v1h-1zM581 271h1v1h-1zM581 275h1v1h-1zM581 279h1v1h-1zM581 283h1v1h-1zM581 287h1v1h-1zM581 291h1v1h-1zM581 295h1v1h-1zM581 299h1v1h-1zM581 303h1v1h-1zM581 307h1v1h-1zM581 311h1v1h-1zM581 315h1v1h-1zM581 319h1v1h-1zM581 323h1v1h-1zM581 327h1v1h-1zM581 331h1v1h-1zM581 335h1v1h-1zM581 339h1v1h-1zM581 343h1v1h-1zM581 347h1v1h-1zM581 351h1v1h-1zM581 355h1v1h-1zM581 359h1v1h-1zM581 363h1v1h-1zM581 367h1v1h-1zM581 371h1v1h-1zM581 375h1v1h-1zM581 379h1v1h-1zM581 383h1v1h-1zM581 387h1v1h-1zM581 391h1v1h-1zM581 395h1v1h-1zM581 399h1v1h-1zM581 403h1v1h-1zM581 407h1v1h-1zM581 411h1v1h-1zM581 415h1v1h-1zM581 419h1v1h-1zM581 423h1v1h-1zM581 427h1v1h-1zM581 431h1v1h-1zM608 59h1v1h-1zM608 63h1v1h-1zM608 67h1v1h-1zM608 71h1v1h-1zM608 75h1v1h-1zM608 79h1v1h-1zM608 83h1v1h-1zM608 87h1v1h-1zM608 91h1v1h-1zM608 95h1v1h-1zM608 99h1v1h-1zM608 103h1v1h-1zM608 107h1v1h-1zM608 111h1v1h-1zM608 115h1v1h-1zM608 119h1v1h-1zM608 123h1v1h-1zM608 127h1v1h-1zM608 131h1v1h-1zM608 135h1v1h-1zM608 139h1v1h-1zM608 143h1v1h-1zM608 147h1v1h-1zM608 151h1v1h-1zM608 155h1v1h-1zM608 159h1v1h-1zM608 163h1v1h-1zM608 167h1v1h-1zM608 171h1v1h-1zM608 175h1v1h-1zM608 179h1v1h-1zM608 183h1v1h-1zM608 187h1v1h-1zM608 191h1v1h-1zM608 195h1v1h-1zM608 199h1v1h-1zM608 203h1v1h-1zM608 207h1v1h-1zM608 211h1v1h-1zM608 215h1v1h-1zM608 219h1v1h-1zM608 223h1v1h-1zM608 227h1v1h-1zM608 231h1v1h-1zM608 235h1v1h-1zM608 239h1v1h-1zM608 243h1v1h-1zM608 247h1v1h-1zM608 251h1v1h-1zM608 255h1v1h-1zM608 259h1v1h-1zM608 263h1v1h-1zM608 267h1v1h-1zM608 271h1v1h-1zM608 275h1v1h-1zM608 279h1v1h-1zM608 283h1v1h-1zM608 287h1v1h-1zM608 291h1v1h-1zM608 295h1v1h-1zM608 299h1v1h-1zM608 303h1v1h-1zM608 307h1v1h-1zM608 311h1v1h-1zM608 315h1v1h-1zM608 319h1v1h-1zM608 323h1v1h-1zM608 327h1v1h-1zM608 331h1v1h-1zM608 335h1v1h-1zM608 339h1v1h-1zM608 343h1v1h-1zM608 347h1v1h-1zM608 351h1v1h-1zM608 355h1v1h-1zM608 359h1v1h-1zM608 363h1v1h-1zM608 367h1v1h-1zM608 371h1v1h-1zM608 375h1v1h-1zM608 379h1v1h-1zM608 383h1v1h-1zM608 387h1v1h-1zM608 391h1v1h-1zM608 395h1v1h-1zM608 399h1v1h-1zM608 403h1v1h-1zM608 407h1v1h-1zM608 411h1v1h-1zM608 415h1v1h-1zM608 419h1v1h-1zM608 423h1v1h-1zM608 427h1v1h-1zM608 431h1v1h-1zM635 59h1v1h-1zM635 63h1v1h-1zM635 67h1v1h-1zM635 71h1v1h-1zM635 75h1v1h-1zM635 79h1v1h-1zM635 83h1v1h-1zM635 87h1v1h-1zM635 91h1v1h-1zM635 95h1v1h-1zM635 99h1v1h-1zM635 103h1v1h-1zM635 107h1v1h-1zM635 111h1v1h-1zM635 115h1v1h-1zM635 119h1v1h-1zM635 123h1v1h-1zM635 127h1v1h-1zM635 131h1v1h-1zM635 135h1v1h-1zM635 139h1v1h-1zM635 143h1v1h-1zM635 147h1v1h-1zM635 151h1v1h-1zM635 155h1v1h-1zM635 159h1v1h-1zM635 163h1v1h-1zM635 167h1v1h-1zM635 171h1v1h-1zM635 175h1v1h-1zM635 179h1v1h-1zM635 183h1v1h-1zM635 187h1v1h-1zM635 191h1v1h-1zM635 195h1v1h-1zM635 199h1v1h-1zM635 203h1v1h-1zM635 207h1v1h-1zM635 211h1v1h-1zM635 215h1v1h-1zM635 219h1v1h-1zM635 223h1v1h-1zM635 227h1v1h-1zM635 231h1v1h-1zM635 235h1v1h-1zM635 239h1v1h-1zM635 243h1v1h-1zM635 247h1v1h-1zM635 251h1v1h-1zM635 255h1v1h-1zM635 259h1v1h-1zM635 263h1v1h-1zM635 267h1v1h-1zM635 271h1v1h-1zM635 275h1v1h-1zM635 279h1v1h-1zM635 283h1v1h-1zM635 287h1v1h-1zM635 291h1v1h-1zM635 295h1v1h-1zM635 299h1v1h-1zM635 303h1v1h-1zM635 307h1v1h-1zM635 311h1v1h-1zM635 315h1v1h-1zM635 319h1v1h-1zM635 323h1v1h-1zM635 327h1v1h-1zM635 331h1v1h-1zM635 335h1v1h-1zM635 339h1v1h-1zM635 343h1v1h-1zM635 347h1v1h-1zM635 351h1v1h-1zM635 355h1v1h-1zM635 359h1v1h-1zM635 363h1v1h-1zM635 367h1v1h-1zM635 371h1v1h-1zM635 375h1v1h-1zM635 379h1v1h-1zM635 383h1v1h-1zM635 387h1v1h-1zM635 391h1v1h-1zM635 395h1v1h-1zM635 399h1v1h-1zM635 403h1v1h-1zM635 407h1v1h-1zM635 411h1v1h-1zM635 415h1v1h-1zM635 419h1v1h-1zM635 423h1v1h-1zM635 427h1v1h-1zM635 431h1v1h-1zM661 59h1v1h-1zM661 63h1v1h-1zM661 67h1v1h-1zM661 71h1v1h-1zM661 75h1v1h-1zM661 79h1v1h-1zM661 83h1v1h-1zM661 87h1v1h-1zM661 91h1v1h-1zM661 95h1v1h-1zM661 99h1v1h-1zM661 103h1v1h-1zM661 107h1v1h-1zM661 111h1v1h-1zM661 115h1v1h-1zM661 119h1v1h-1zM661 123h1v1h-1zM661 127h1v1h-1zM661 131h1v1h-1zM661 135h1v1h-1zM661 139h1v1h-1zM661 143h1v1h-1zM661 147h1v1h-1zM661 151h1v1h-1zM661 155h1v1h-1zM661 159h1v1h-1zM661 163h1v1h-1zM661 167h1v1h-1zM661 171h1v1h-1zM661 175h1v1h-1zM661 179h1v1h-1zM661 183h1v1h-1zM661 187h1v1h-1zM661 191h1v1h-1zM661 195h1v1h-1zM661 199h1v1h-1zM661 203h1v1h-1zM661 207h1v1h-1zM661 211h1v1h-1zM661 215h1v1h-1zM661 219h1v1h-1zM661 223h1v1h-1zM661 227h1v1h-1zM661 231h1v1h-1zM661 235h1v1h-1zM661 239h1v1h-1zM661 243h1v1h-1zM661 247h1v1h-1zM661 251h1v1h-1zM661 255h1v1h-1zM661 259h1v1h-1zM661 263h1v1h-1zM661 267h1v1h-1zM661 271h1v1h-1zM661 275h1v1h-1zM661 279h1v1h-1zM661 283h1v1h-1zM661 287h1v1h-1zM661 291h1v1h-1zM661 295h1v1h-1zM661 299h1v1h-1zM661 303h1v1h-1zM661 307h1v1h-1zM661 311h1v1h-1zM661 315h1v1h-1zM661 319h1v1h-1zM661 323h1v1h-1zM661 327h1v1h-1zM661 331h1v1h-1zM661 335h1v1h-1zM661 339h1v1h-1zM661 343h1v1h-1zM661 347h1v1h-1zM661 351h1v1h-1zM661 355h1v1h-1zM661 359h1v1h-1zM661 363h1v1h-1zM661 367h1v1h-1zM661 371h1v1h-1zM661 375h1v1h-1zM661 379h1v1h-1zM661 383h1v1h-1zM661 387h1v1h-1zM661 391h1v1h-1zM661 395h1v1h-1zM661 399h1v1h-1zM661 403h1v1h-1zM661 407h1v1h-1zM661 411h1v1h-1zM661 415h1v1h-1zM661 419h1v1h-1zM661 423h1v1h-1zM661 427h1v1h-1zM661 431h1v1h-1zM688 59h1v1h-1zM688 63h1v1h-1zM688 67h1v1h-1zM688 71h1v1h-1zM688 75h1v1h-1zM688 79h1v1h-1zM688 83h1v1h-1zM688 87h1v1h-1zM688 91h1v1h-1zM688 95h1v1h-1zM688 99h1v1h-1zM688 103h1v1h-1zM688 107h1v1h-1zM688 111h1v1h-1zM688 115h1v1h-1zM688 119h1v1h-1zM688 123h1v1h-1zM688 127h1v1h-1zM688 131h1v1h-1zM688 135h1v1h-1zM688 139h1v1h-1zM688 143h1v1h-1zM688 147h1v1h-1zM688 151h1v1h-1zM688 155h1v1h-1zM688 159h1v1h-1zM688 163h1v1h-1zM688 167h1v1h-1zM688 171h1v1h-1zM688 175h1v1h-1zM688 179h1v1h-1zM688 183h1v1h-1zM688 187h1v1h-1zM688 191h1v1h-1zM688 195h1v1h-1zM688 199h1v1h-1zM688 203h1v1h-1zM688 207h1v1h-1zM688 211h1v1h-1zM688 215h1v1h-1zM688 219h1v1h-1zM688 223h1v1h-1zM688 227h1v1h-1zM688 231h1v1h-1zM688 235h1v1h-1zM688 239h1v1h-1zM688 243h1v1h-1zM688 247h1v1h-1zM688 251h1v1h-1zM688 255h1v1h-1zM688 259h1v1h-1zM688 263h1v1h-1zM688 267h1v1h-1zM688 271h1v1h-1zM688 275h1v1h-1zM688 279h1v1h-1zM688 283h1v1h-1zM688 287h1v1h-1zM688 291h1v1h-1zM688 295h1v1h-1zM688 299h1v1h-1zM688 303h1v1h-1zM688 307h1v1h-1zM688 311h1v1h-1zM688 315h1v1h-1zM688 319h1v1h-1zM688 323h1v1h-1zM688 327h1v1h-1zM688 331h1v1h-1zM688 335h1v1h-1zM688 339h1v1h-1zM688 343h1v1h-1zM688 347h1v1h-1zM688 351h1v1h-1zM688 355h1v1h-1zM688 359h1v1h-1zM688 363h1v1h-1zM688 367h1v1h-1zM688 371h1v1h-1zM688 375h1v1h-1zM688 379h1v1h-1zM688 383h1v1h-1zM688 387h1v1h-1zM688 391h1v1h-1zM688 395h1v1h-1zM688 399h1v1h-1zM688 403h1v1h-1zM688 407h1v1h-1zM688 411h1v1h-1zM688 415h1v1h-1zM688 419h1v1h-1zM688 423h1v1h-1zM688 427h1v1h-1zM688 431h1v1h-1zM715 59h1v1h-1zM715 63h1v1h-1zM715 67h1v1h-1zM715 71h1v1h-1zM715 75h1v1h-1zM715 79h1v1h-1zM715 83h1v1h-1zM715 87h1v1h-1zM715 91h1v1h-1zM715 95h1v1h-1zM715 99h1v1h-1zM715 103h1v1h-1zM715 107h1v1h-1zM715 111h1v1h-1zM715 115h1v1h-1zM715 119h1v1h-1zM715 123h1v1h-1zM715 127h1v1h-1zM715 131h1v1h-1zM715 135h1v1h-1zM715 139h1v1h-1zM715 143h1v1h-1zM715 147h1v1h-1zM715 151h1v1h-1zM715 155h1v1h-1zM715 159h1v1h-1zM715 163h1v1h-1zM715 167h1v1h-1zM715 171h1v1h-1zM715 175h1v1h-1zM715 179h1v1h-1zM715 183h1v1h-1zM715 187h1v1h-1zM715 191h1v1h-1zM715 195h1v1h-1zM715 199h1v1h-1zM715 203h1v1h-1zM715 207h1v1h-1zM715 211h1v1h-1zM715 215h1v1h-1zM715 219h1v1h-1zM715 223h1v1h-1zM715 227h1v1h-1zM715 231h1v1h-1zM715 235h1v1h-1zM715 239h1v1h-1zM715 243h1v1h-1zM715 247h1v1h-1zM715 251h1v1h-1zM715 255h1v1h-1zM715 259h1v1h-1zM715 263h1v1h-1zM715 267h1v1h-1zM715 271h1v1h-1zM715 275h1v1h-1zM715 279h1v1h-1zM715 283h1v1h-1zM715 287h1v1h-1zM715 291h1v1h-1zM715 295h1v1h-1zM715 299h1v1h-1zM715 303h1v1h-1zM715 307h1v1h-1zM715 311h1v1h-1zM715 315h1v1h-1zM715 319h1v1h-1zM715 323h1v1h-1zM715 327h1v1h-1zM715 331h1v1h-1zM715 335h1v1h-1zM715 339h1v1h-1zM715 343h1v1h-1zM715 347h1v1h-1zM715 351h1v1h-1zM715 355h1v1h-1zM715 359h1v1h-1zM715 363h1v1h-1zM715 367h1v1h-1zM715 371h1v1h-1zM715 375h1v1h-1zM715 379h1v1h-1zM715 383h1v1h-1zM715 387h1v1h-1zM715 391h1v1h-1zM715 395h1v1h-1zM715 399h1v1h-1zM715 403h1v1h-1zM715 407h1v1h-1zM715 411h1v1h-1zM715 415h1v1h-1zM715 419h1v1h-1zM715 423h1v1h-1zM715 427h1v1h-1zM715 431h1v1h-1zM742 59h1v1h-1zM742 63h1v1h-1zM742 67h1v1h-1zM742 71h1v1h-1zM742 75h1v1h-1zM742 79h1v1h-1zM742 83h1v1h-1zM742 87h1v1h-1zM742 91h1v1h-1zM742 95h1v1h-1zM742 99h1v1h-1zM742 103h1v1h-1zM742 107h1v1h-1zM742 111h1v1h-1zM742 115h1v1h-1zM742 119h1v1h-1zM742 123h1v1h-1zM742 127h1v1h-1zM742 131h1v1h-1zM742 135h1v1h-1zM742 139h1v1h-1zM742 143h1v1h-1zM742 147h1v1h-1zM742 151h1v1h-1zM742 155h1v1h-1zM742 159h1v1h-1zM742 163h1v1h-1zM742 167h1v1h-1zM742 171h1v1h-1zM742 175h1v1h-1zM742 179h1v1h-1zM742 183h1v1h-1zM742 187h1v1h-1zM742 191h1v1h-1zM742 195h1v1h-1zM742 199h1v1h-1zM742 203h1v1h-1zM742 207h1v1h-1zM742 211h1v1h-1zM742 215h1v1h-1zM742 219h1v1h-1zM742 223h1v1h-1zM742 227h1v1h-1zM742 231h1v1h-1zM742 235h1v1h-1zM742 239h1v1h-1zM742 243h1v1h-1zM742 247h1v1h-1zM742 251h1v1h-1zM742 255h1v1h-1zM742 259h1v1h-1zM742 263h1v1h-1zM742 267h1v1h-1zM742 271h1v1h-1zM742 275h1v1h-1zM742 279h1v1h-1zM742 283h1v1h-1zM742 287h1v1h-1zM742 291h1v1h-1zM742 295h1v1h-1zM742 299h1v1h-1zM742 303h1v1h-1zM742 307h1v1h-1zM742 311h1v1h-1zM742 315h1v1h-1zM742 319h1v1h-1zM742 323h1v1h-1zM742 327h1v1h-1zM742 331h1v1h-1zM742 335h1v1h-1zM742 339h1v1h-1zM742 343h1v1h-1zM742 347h1v1h-1zM742 351h1v1h-1zM742 355h1v1h-1zM742 359h1v1h-1zM742 363h1v1h-1zM742 367h1v1h-1zM742 371h1v1h-1zM742 375h1v1h-1zM742 379h1v1h-1zM742 383h1v1h-1zM742 387h1v1h-1zM742 391h1v1h-1zM742 395h1v1h-1zM742 399h1v1h-1zM742 403h1v1h-1zM742 407h1v1h-1zM742 411h1v1h-1zM742 415h1v1h-1zM742 419h1v1h-1zM742 423h1v1h-1zM742 427h1v1h-1zM742 431h1v1h-1zM769 59h1v1h-1zM769 63h1v1h-1zM769 67h1v1h-1zM769 71h1v1h-1zM769 75h1v1h-1zM769 79h1v1h-1zM769 83h1v1h-1zM769 87h1v1h-1zM769 91h1v1h-1zM769 95h1v1h-1zM769 99h1v1h-1zM769 103h1v1h-1zM769 107h1v1h-1zM769 111h1v1h-1zM769 115h1v1h-1zM769 119h1v1h-1zM769 123h1v1h-1zM769 127h1v1h-1zM769 131h1v1h-1zM769 135h1v1h-1zM769 139h1v1h-1zM769 143h1v1h-1zM769 147h1v1h-1zM769 151h1v1h-1zM769 155h1v1h-1zM769 159h1v1h-1zM769 163h1v1h-1zM769 167h1v1h-1zM769 171h1v1h-1zM769 175h1v1h-1zM769 179h1v1h-1zM769 183h1v1h-1zM769 187h1v1h-1zM769 191h1v1h-1zM769 195h1v1h-1zM769 199h1v1h-1zM769 203h1v1h-1zM769 207h1v1h-1zM769 211h1v1h-1zM769 215h1v1h-1zM769 219h1v1h-1zM769 223h1v1h-1zM769 227h1v1h-1zM769 231h1v1h-1zM769 235h1v1h-1zM769 239h1v1h-1zM769 243h1v1h-1zM769 247h1v1h-1zM769 251h1v1h-1zM769 255h1v1h-1zM769 259h1v1h-1zM769 263h1v1h-1zM769 267h1v1h-1zM769 271h1v1h-1zM769 275h1v1h-1zM769 279h1v1h-1zM769 283h1v1h-1zM769 287h1v1h-1zM769 291h1v1h-1zM769 295h1v1h-1zM769 299h1v1h-1zM769 303h1v1h-1zM769 307h1v1h-1zM769 311h1v1h-1zM769 315h1v1h-1zM769 319h1v1h-1zM769 323h1v1h-1zM769 327h1v1h-1zM769 331h1v1h-1zM769 335h1v1h-1zM769 339h1v1h-1zM769 343h1v1h-1zM769 347h1v1h-1zM769 351h1v1h-1zM769 355h1v1h-1zM769 359h1v1h-1zM769 363h1v1h-1zM769 367h1v1h-1zM769 371h1v1h-1zM769 375h1v1h-1zM769 379h1v1h-1zM769 383h1v1h-1zM769 387h1v1h-1zM769 391h1v1h-1zM769 395h1v1h-1zM769 399h1v1h-1zM769 403h1v1h-1zM769 407h1v1h-1zM769 411h1v1h-1zM769 415h1v1h-1zM769 419h1v1h-1zM769 423h1v1h-1zM769 427h1v1h-1zM769 431h1v1h-1zM796 59h1v1h-1zM796 63h1v1h-1zM796 67h1v1h-1zM796 71h1v1h-1zM796 75h1v1h-1zM796 79h1v1h-1zM796 83h1v1h-1zM796 87h1v1h-1zM796 91h1v1h-1zM796 95h1v1h-1zM796 99h1v1h-1zM796 103h1v1h-1zM796 107h1v1h-1zM796 111h1v1h-1zM796 115h1v1h-1zM796 119h1v1h-1zM796 123h1v1h-1zM796 127h1v1h-1zM796 131h1v1h-1zM796 135h1v1h-1zM796 139h1v1h-1zM796 143h1v1h-1zM796 147h1v1h-1zM796 151h1v1h-1zM796 155h1v1h-1zM796 159h1v1h-1zM796 163h1v1h-1zM796 167h1v1h-1zM796 171h1v1h-1zM796 175h1v1h-1zM796 179h1v1h-1zM796 183h1v1h-1zM796 187h1v1h-1zM796 191h1v1h-1zM796 195h1v1h-1zM796 199h1v1h-1zM796 203h1v1h-1zM796 207h1v1h-1zM796 211h1v1h-1zM796 215h1v1h-1zM796 219h1v1h-1zM796 223h1v1h-1zM796 227h1v1h-1zM796 231h1v1h-1zM796 235h1v1h-1zM796 239h1v1h-1zM796 243h1v1h-1zM796 247h1v1h-1zM796 251h1v1h-1zM796 255h1v1h-1zM796 259h1v1h-1zM796 263h1v1h-1zM796 267h1v1h-1zM796 271h1v1h-1zM796 275h1v1h-1zM796 279h1v1h-1zM796 283h1v1h-1zM796 287h1v1h-1zM796 291h1v1h-1zM796 295h1v1h-1zM796 299h1v1h-1zM796 303h1v1h-1zM796 307h1v1h-1zM796 311h1v1h-1zM796 315h1v1h-1zM796 319h1v1h-1zM796 323h1v1h-1zM796 327h1v1h-1zM796 331h1v1h-1zM796 335h1v1h-1zM796 339h1v1h-1zM796 343h1v1h-1zM796 347h1v1h-1zM796 351h1v1h-1zM796 355h1v1h-1zM796 359h1v1h-1zM796 363h1v1h-1zM796 367h1v1h-1zM796 371h1v1h-1zM796 375h1v1h-1zM796 379h1v1h-1zM796 383h1v1h-1zM796 387h1v1h-1zM796 391h1v1h-1zM796 395h1v1h-1zM796 399h1v1h-1zM796 403h1v1h-1zM796 407h1v1h-1zM796 411h1v1h-1zM796 415h1v1h-1zM796 419h1v1h-1zM796 423h1v1h-1zM796 427h1v1h-1zM796 431h1v1h-1zM823 59h1v1h-1zM823 63h1v1h-1zM823 67h1v1h-1zM823 71h1v1h-1zM823 75h1v1h-1zM823 79h1v1h-1zM823 83h1v1h-1zM823 87h1v1h-1zM823 91h1v1h-1zM823 95h1v1h-1zM823 99h1v1h-1zM823 103h1v1h-1zM823 107h1v1h-1zM823 111h1v1h-1zM823 115h1v1h-1zM823 119h1v1h-1zM823 123h1v1h-1zM823 127h1v1h-1zM823 131h1v1h-1zM823 135h1v1h-1zM823 139h1v1h-1zM823 143h1v1h-1zM823 147h1v1h-1zM823 151h1v1h-1zM823 155h1v1h-1zM823 159h1v1h-1zM823 163h1v1h-1zM823 167h1v1h-1zM823 171h1v1h-1zM823 175h1v1h-1zM823 179h1v1h-1zM823 183h1v1h-1zM823 187h1v1h-1zM823 191h1v1h-1zM823 195h1v1h-1zM823 199h1v1h-1zM823 203h1v1h-1zM823 207h1v1h-1zM823 211h1v1h-1zM823 215h1v1h-1zM823 219h1v1h-1zM823 223h1v1h-1zM823 227h1v1h-1zM823 231h1v1h-1zM823 235h1v1h-1zM823 239h1v1h-1zM823 243h1v1h-1zM823 247h1v1h-1zM823 251h1v1h-1zM823 255h1v1h-1zM823 259h1v1h-1zM823 263h1v1h-1zM823 267h1v1h-1zM823 271h1v1h-1zM823 275h1v1h-1zM823 279h1v1h-1zM823 283h1v1h-1zM823 287h1v1h-1zM823 291h1v1h-1zM823 295h1v1h-1zM823 299h1v1h-1zM823 303h1v1h-1zM823 307h1v1h-1zM823 311h1v1h-1zM823 315h1v1h-1zM823 319h1v1h-1zM823 323h1v1h-1zM823 327h1v1h-1zM823 331h1v1h-1zM823 335h1v1h-1zM823 339h1v1h-1zM823 343h1v1h-1zM823 347h1v1h-1zM823 351h1v1h-1zM823 355h1v1h-1zM823 359h1v1h-1zM823 363h1v1h-1zM823 367h1v1h-1zM823 371h1v1h-1zM823 375h1v1h-1zM823 379h1v1h-1zM823 383h1v1h-1zM823 387h1v1h-1zM823 391h1v1h-1zM823 395h1v1h-1zM823 399h1v1h-1zM823 403h1v1h-1zM823 407h1v1h-1zM823 411h1v1h-1zM823 415h1v1h-1zM823 419h1v1h-1zM823 423h1v1h-1zM823 427h1v1h-1zM823 431h1v1h-1zM850 59h1v1h-1zM850 63h1v1h-1zM850 67h1v1h-1zM850 71h1v1h-1zM850 75h1v1h-1zM850 79h1v1h-1zM850 83h1v1h-1zM850 87h1v1h-1zM850 91h1v1h-1zM850 95h1v1h-1zM850 99h1v1h-1zM850 103h1v1h-1zM850 107h1v1h-1zM850 111h1v1h-1zM850 115h1v1h-1zM850 119h1v1h-1zM850 123h1v1h-1zM850 127h1v1h-1zM850 131h1v1h-1zM850 135h1v1h-1zM850 139h1v1h-1zM850 143h1v1h-1zM850 147h1v1h-1zM850 151h1v1h-1zM850 155h1v1h-1zM850 159h1v1h-1zM850 163h1v1h-1zM850 167h1v1h-1zM850 171h1v1h-1zM850 175h1v1h-1zM850 179h1v1h-1zM850 183h1v1h-1zM850 187h1v1h-1zM850 191h1v1h-1zM850 195h1v1h-1zM850 199h1v1h-1zM850 203h1v1h-1zM850 207h1v1h-1zM850 211h1v1h-1zM850 215h1v1h-1zM850 219h1v1h-1zM850 223h1v1h-1zM850 227h1v1h-1zM850 231h1v1h-1zM850 235h1v1h-1zM850 239h1v1h-1zM850 243h1v1h-1zM850 247h1v1h-1zM850 251h1v1h-1zM850 255h1v1h-1zM850 259h1v1h-1zM850 263h1v1h-1zM850 267h1v1h-1zM850 271h1v1h-1zM850 275h1v1h-1zM850 279h1v1h-1zM850 283h1v1h-1zM850 287h1v1h-1zM850 291h1v1h-1zM850 295h1v1h-1zM850 299h1v1h-1zM850 303h1v1h-1zM850 307h1v1h-1zM850 311h1v1h-1zM850 315h1v1h-1zM850 319h1v1h-1zM850 323h1v1h-1zM850 327h1v1h-1zM850 331h1v1h-1zM850 335h1v1h-1zM850 339h1v1h-1zM850 343h1v1h-1zM850 347h1v1h-1zM850 351h1v1h-1zM850 355h1v1h-1zM850 359h1v1h-1zM850 363h1v1h-1zM850 367h1v1h-1zM850 371h1v1h-1zM850 375h1v1h-1zM850 379h1v1h-1zM850 383h1v1h-1zM850 387h1v1h-1zM850 391h1v1h-1zM850 395h1v1h-1zM850 399h1v1h-1zM850 403h1v1h-1zM850 407h1v1h-1zM850 411h1v1h-1zM850 415h1v1h-1zM850 419h1v1h-1zM850 423h1v1h-1zM850 427h1v1h-1zM850 431h1v1h-1zM877 59h1v1h-1zM877 63h1v1h-1zM877 67h1v1h-1zM877 71h1v1h-1zM877 75h1v1h-1zM877 79h1v1h-1zM877 83h1v1h-1zM877 87h1v1h-1zM877 91h1v1h-1zM877 95h1v1h-1zM877 99h1v1h-1zM877 103h1v1h-1zM877 107h1v1h-1zM877 111h1v1h-1zM877 115h1v1h-1zM877 119h1v1h-1zM877 123h1v1h-1zM877 127h1v1h-1zM877 131h1v1h-1zM877 135h1v1h-1zM877 139h1v1h-1zM877 143h1v1h-1zM877 147h1v1h-1zM877 151h1v1h-1zM877 155h1v1h-1zM877 159h1v1h-1zM877 163h1v1h-1zM877 167h1v1h-1zM877 171h1v1h-1zM877 175h1v1h-1zM877 179h1v1h-1zM877 183h1v1h-1zM877 187h1v1h-1zM877 191h1v1h-1zM877 195h1v1h-1zM877 199h1v1h-1zM877 203h1v1h-1zM877 207h1v1h-1zM877 211h1v1h-1zM877 215h1v1h-1zM877 219h1v1h-1zM877 223h1v1h-1zM877 227h1v1h-1zM877 231h1v1h-1zM877 235h1v1h-1zM877 239h1v1h-1zM877 243h1v1h-1zM877 247h1v1h-1zM877 251h1v1h-1zM877 255h1v1h-1zM877 259h1v1h-1zM877 263h1v1h-1zM877 267h1v1h-1zM877 271h1v1h-1zM877 275h1v1h-1zM877 279h1v1h-1zM877 283h1v1h-1zM877 287h1v1h-1zM877 291h1v1h-1zM877 295h1v1h-1zM877 299h1v1h-1zM877 303h1v1h-1zM877 307h1v1h-1zM877 311h1v1h-1zM877 315h1v1h-1zM877 319h1v1h-1zM877 323h1v1h-1zM877 327h1v1h-1zM877 331h1v1h-1zM877 335h1v1h-1zM877 339h1v1h-1zM877 343h1v1h-1zM877 347h1v1h-1zM877 351h1v1h-1zM877 355h1v1h-1zM877 359h1v1h-1zM877 363h1v1h-1zM877 367h1v1h-1zM877 371h1v1h-1zM877 375h1v1h-1zM877 379h1v1h-1zM877 383h1v1h-1zM877 387h1v1h-1zM877 391h1v1h-1zM877 395h1v1h-1zM877 399h1v1h-1zM877 403h1v1h-1zM877 407h1v1h-1zM877 411h1v1h-1zM877 415h1v1h-1zM877 419h1v1h-1zM877 423h1v1h-1zM877 427h1v1h-1zM877 431h1v1h-1zM904 59h1v1h-1zM904 63h1v1h-1zM904 67h1v1h-1zM904 71h1v1h-1zM904 75h1v1h-1zM904 79h1v1h-1zM904 83h1v1h-1zM904 87h1v1h-1zM904 91h1v1h-1zM904 95h1v1h-1zM904 99h1v1h-1zM904 103h1v1h-1zM904 107h1v1h-1zM904 111h1v1h-1zM904 115h1v1h-1zM904 119h1v1h-1zM904 123h1v1h-1zM904 127h1v1h-1zM904 131h1v1h-1zM904 135h1v1h-1zM904 139h1v1h-1zM904 143h1v1h-1zM904 147h1v1h-1zM904 151h1v1h-1zM904 155h1v1h-1zM904 159h1v1h-1zM904 163h1v1h-1zM904 167h1v1h-1zM904 171h1v1h-1zM904 175h1v1h-1zM904 179h1v1h-1zM904 183h1v1h-1zM904 187h1v1h-1zM904 191h1v1h-1zM904 195h1v1h-1zM904 199h1v1h-1zM904 203h1v1h-1zM904 207h1v1h-1zM904 211h1v1h-1zM904 215h1v1h-1zM904 219h1v1h-1zM904 223h1v1h-1zM904 227h1v1h-1zM904 231h1v1h-1zM904 235h1v1h-1zM904 239h1v1h-1zM904 243h1v1h-1zM904 247h1v1h-1zM904 251h1v1h-1zM904 255h1v1h-1zM904 259h1v1h-1zM904 263h1v1h-1zM904 267h1v1h-1zM904 271h1v1h-1zM904 275h1v1h-1zM904 279h1v1h-1zM904 283h1v1h-1zM904 287h1v1h-1zM904 291h1v1h-1zM904 295h1v1h-1zM904 299h1v1h-1zM904 303h1v1h-1zM904 307h1v1h-1zM904 311h1v1h-1zM904 315h1v1h-1zM904 319h1v1h-1zM904 323h1v1h-1zM904 327h1v1h-1zM904 331h1v1h-1zM904 335h1v1h-1zM904 339h1v1h-1zM904 343h1v1h-1zM904 347h1v1h-1zM904 351h1v1h-1zM904 355h1v1h-1zM904 359h1v1h-1zM904 363h1v1h-1zM904 367h1v1h-1zM904 371h1v1h-1zM904 375h1v1h-1zM904 379h1v1h-1zM904 383h1v1h-1zM904 387h1v1h-1zM904 391h1v1h-1zM904 395h1v1h-1zM904 399h1v1h-1zM904 403h1v1h-1zM904 407h1v1h-1zM904 411h1v1h-1zM904 415h1v1h-1zM904 419h1v1h-1zM904 423h1v1h-1zM904 427h1v1h-1zM904 431h1v1h-1zM930 59h1v1h-1zM930 63h1v1h-1zM930 67h1v1h-1zM930 71h1v1h-1zM930 75h1v1h-1zM930 79h1v1h-1zM930 83h1v1h-1zM930 87h1v1h-1zM930 91h1v1h-1zM930 95h1v1h-1zM930 99h1v1h-1zM930 103h1v1h-1zM930 107h1v1h-1zM930 111h1v1h-1zM930 115h1v1h-1zM930 119h1v1h-1zM930 123h1v1h-1zM930 127h1v1h-1zM930 131h1v1h-1zM930 135h1v1h-1zM930 139h1v1h-1zM930 143h1v1h-1zM930 147h1v1h-1zM930 151h1v1h-1zM930 155h1v1h-1zM930 159h1v1h-1zM930 163h1v1h-1zM930 167h1v1h-1zM930 171h1v1h-1zM930 175h1v1h-1zM930 179h1v1h-1zM930 183h1v1h-1zM930 187h1v1h-1zM930 191h1v1h-1zM930 195h1v1h-1zM930 199h1v1h-1zM930 203h1v1h-1zM930 207h1v1h-1zM930 211h1v1h-1zM930 215h1v1h-1zM930 219h1v1h-1zM930 223h1v1h-1zM930 227h1v1h-1zM930 231h1v1h-1zM930 235h1v1h-1zM930 239h1v1h-1zM930 243h1v1h-1zM930 247h1v1h-1zM930 251h1v1h-1zM930 255h1v1h-1zM930 259h1v1h-1zM930 263h1v1h-1zM930 267h1v1h-1zM930 271h1v1h-1zM930 275h1v1h-1zM930 279h1v1h-1zM930 283h1v1h-1zM930 287h1v1h-1zM930 291h1v1h-1zM930 295h1v1h-1zM930 299h1v1h-1zM930 303h1v1h-1zM930 307h1v1h-1zM930 311h1v1h-1zM930 315h1v1h-1zM930 319h1v1h-1zM930 323h1v1h-1zM930 327h1v1h-1zM930 331h1v1h-1zM930 335h1v1h-1zM930 339h1v1h-1zM930 343h1v1h-1zM930 347h1v1h-1zM930 351h1v1h-1zM930 355h1v1h-1zM930 359h1v1h-1zM930 363h1v1h-1zM930 367h1v1h-1zM930 371h1v1h-1zM930 375h1v1h-1zM930 379h1v1h-1zM930 383h1v1h-1zM930 387h1v1h-1zM930 391h1v1h-1zM930 395h1v1h-1zM930 399h1v1h-1zM930 403h1v1h-1zM930 407h1v1h-1zM930 411h1v1h-1zM930 415h1v1h-1zM930 419h1v1h-1zM930 423h1v1h-1zM930 427h1v1h-1zM930 431h1v1h-1zM957 59h1v1h-1zM957 63h1v1h-1zM957 67h1v1h-1zM957 71h1v1h-1zM957 75h1v1h-1zM957 79h1v1h-1zM957 83h1v1h-1zM957 87h1v1h-1zM957 91h1v1h-1zM957 95h1v1h-1zM957 99h1v1h-1zM957 103h1v1h-1zM957 107h1v1h-1zM957 111h1v1h-1zM957 115h1v1h-1zM957 119h1v1h-1zM957 123h1v1h-1zM957 127h1v1h-1zM957 131h1v1h-1zM957 135h1v1h-1zM957 139h1v1h-1zM957 143h1v1h-1zM957 147h1v1h-1zM957 151h1v1h-1zM957 155h1v1h-1zM957 159h1v1h-1zM957 163h1v1h-1zM957 167h1v1h-1zM957 171h1v1h-1zM957 175h1v1h-1zM957 179h1v1h-1zM957 183h1v1h-1zM957 187h1v1h-1zM957 191h1v1h-1zM957 195h1v1h-1zM957 199h1v1h-1zM957 203h1v1h-1zM957 207h1v1h-1zM957 211h1v1h-1zM957 215h1v1h-1zM957 219h1v1h-1zM957 223h1v1h-1zM957 227h1v1h-1zM957 231h1v1h-1zM957 235h1v1h-1zM957 239h1v1h-1zM957 243h1v1h-1zM957 247h1v1h-1zM957 251h1v1h-1zM957 255h1v1h-1zM957 259h1v1h-1zM957 263h1v1h-1zM957 267h1v1h-1zM957 271h1v1h-1zM957 275h1v1h-1zM957 279h1v1h-1zM957 283h1v1h-1zM957 287h1v1h-1zM957 291h1v1h-1zM957 295h1v1h-1zM957 299h1v1h-1zM957 303h1v1h-1zM957 307h1v1h-1zM957 311h1v1h-1zM957 315h1v1h-1zM957 319h1v1h-1zM957 323h1v1h-1zM957 327h1v1h-1zM957 331h1v1h-1zM957 335h1v1h-1zM957 339h1v1h-1zM957 343h1v1h-1zM957 347h1v1h-1zM957 351h1v1h-1zM957 355h1v1h-1zM957 359h1v1h-1zM957 363h1v1h-1zM957 367h1v1h-1zM957 371h1v1h-1zM957 375h1v1h-1zM957 379h1v1h-1zM957 383h1v1h-1zM957 387h1v1h-1zM957 391h1v1h-1zM957 395h1v1h-1zM957 399h1v1h-1zM957 403h1v1h-1zM957 407h1v1h-1zM957 411h1v1h-1zM957 415h1v1h-1zM957 419h1v1h-1zM957 423h1v1h-1zM957 427h1v1h-1zM957 431h1v1h-1zM984 59h1v1h-1zM984 63h1v1h-1zM984 67h1v1h-1zM984 71h1v1h-1zM984 75h1v1h-1zM984 79h1v1h-1zM984 83h1v1h-1zM984 87h1v1h-1zM984 91h1v1h-1zM984 95h1v1h-1zM984 99h1v1h-1zM984 103h1v1h-1zM984 107h1v1h-1zM984 111h1v1h-1zM984 115h1v1h-1zM984 119h1v1h-1zM984 123h1v1h-1zM984 127h1v1h-1zM984 131h1v1h-1zM984 135h1v1h-1zM984 139h1v1h-1zM984 143h1v1h-1zM984 147h1v1h-1zM984 151h1v1h-1zM984 155h1v1h-1zM984 159h1v1h-1zM984 163h1v1h-1zM984 167h1v1h-1zM984 171h1v1h-1zM984 175h1v1h-1zM984 179h1v1h-1zM984 183h1v1h-1zM984 187h1v1h-1zM984 191h1v1h-1zM984 195h1v1h-1zM984 199h1v1h-1zM984 203h1v1h-1zM984 207h1v1h-1zM984 211h1v1h-1zM984 215h1v1h-1zM984 219h1v1h-1zM984 223h1v1h-1zM984 227h1v1h-1zM984 231h1v1h-1zM984 235h1v1h-1zM984 239h1v1h-1zM984 243h1v1h-1zM984 247h1v1h-1zM984 251h1v1h-1zM984 255h1v1h-1zM984 259h1v1h-1zM984 263h1v1h-1zM984 267h1v1h-1zM984 271h1v1h-1zM984 275h1v1h-1zM984 279h1v1h-1zM984 283h1v1h-1zM984 287h1v1h-1zM984 291h1v1h-1zM984 295h1v1h-1zM984 299h1v1h-1zM984 303h1v1h-1zM984 307h1v1h-1zM984 311h1v1h-1zM984 315h1v1h-1zM984 319h1v1h-1zM984 323h1v1h-1zM984 327h1v1h-1zM984 331h1v1h-1zM984 335h1v1h-1zM984 339h1v1h-1zM984 343h1v1h-1zM984 347h1v1h-1zM984 351h1v1h-1zM984 355h1v1h-1zM984 359h1v1h-1zM984 363h1v1h-1zM984 367h1v1h-1zM984 371h1v1h-1zM984 375h1v1h-1zM984 379h1v1h-1zM984 383h1v1h-1zM984 387h1v1h-1zM984 391h1v1h-1zM984 395h1v1h-1zM984 399h1v1h-1zM984 403h1v1h-1zM984 407h1v1h-1zM984 411h1v1h-1zM984 415h1v1h-1zM984 419h1v1h-1zM984 423h1v1h-1zM984 427h1v1h-1zM984 431h1v1h-1zM1011 59h1v1h-1zM1011 63h1v1h-1zM1011 67h1v1h-1zM1011 71h1v1h-1zM1011 75h1v1h-1zM1011 79h1v1h-1zM1011 83h1v1h-1zM1011 87h1v1h-1zM1011 91h1v1h-1zM1011 95h1v1h-1zM1011 99h1v1h-1zM1011 103h1v1h-1zM1011 107h1v1h-1zM1011 111h1v1h-1zM1011 115h1v1h-1zM1011 119h1v1h-1zM1011 123h1v1h-1zM1011 127h1v1h-1zM1011 131h1v1h-1zM1011 135h1v1h-1zM1011 139h1v1h-1zM1011 143h1v1h-1zM1011 147h1v1h-1zM1011 151h1v1h-1zM1011 155h1v1h-1zM1011 159h1v1h-1zM1011 163h1v1h-1zM1011 167h1v1h-1zM1011 171h1v1h-1zM1011 175h1v1h-1zM1011 179h1v1h-1zM1011 183h1v1h-1zM1011 187h1v1h-1zM1011 191h1v1h-1zM1011 195h1v1h-1zM1011 199h1v1h-1zM1011 203h1v1h-1zM1011 207h1v1h-1zM1011 211h1v1h-1zM1011 215h1v1h-1zM1011 219h1v1h-1zM1011 223h1v1h-1zM1011 227h1v1h-1zM1011 231h1v1h-1zM1011 235h1v1h-1zM1011 239h1v1h-1zM1011 243h1v1h-1zM1011 247h1v1h-1zM1011 251h1v1h-1zM1011 255h1v1h-1zM1011 259h1v1h-1zM1011 263h1v1h-1zM1011 267h1v1h-1zM1011 271h1v1h-1zM1011 275h1v1h-1zM1011 279h1v1h-1zM1011 283h1v1h-1zM1011 287h1v1h-1zM1011 291h1v1h-1zM1011 295h1v1h-1zM1011 299h1v1h-1zM1011 303h1v1h-1zM1011 307h1v1h-1zM1011 311h1v1h-1zM1011 315h1v1h-1zM1011 319h1v1h-1zM1011 323h1v1h-1zM1011 327h1v1h-1zM1011 331h1v1h-1zM1011 335h1v1h-1zM1011 339h1v1h-1zM1011 343h1v1h-1zM1011 347h1v1h-1zM1011 351h1v1h-1zM1011 355h1v1h-1zM1011 359h1v1h-1zM1011 363h1v1h-1zM1011 367h1v1h-1zM1011 371h1v1h-1zM1011 375h1v1h-1zM1011 379h1v1h-1zM1011 383h1v1h-1zM1011 387h1v1h-1zM1011 391h1v1h-1zM1011 395h1v1h-1zM1011 399h1v1h-1zM1011 403h1v1h-1zM1011 407h1v1h-1zM1011 411h1v1h-1zM1011 415h1v1h-1zM1011 419h1v1h-1zM1011 423h1v1h-1zM1011 427h1v1h-1zM1011 431h1v1h-1zM1038 59h1v1h-1zM1038 63h1v1h-1zM1038 67h1v1h-1zM1038 71h1v1h-1zM1038 75h1v1h-1zM1038 79h1v1h-1zM1038 83h1v1h-1zM1038 87h1v1h-1zM1038 91h1v1h-1zM1038 95h1v1h-1zM1038 99h1v1h-1zM1038 103h1v1h-1zM1038 107h1v1h-1zM1038 111h1v1h-1zM1038 115h1v1h-1zM1038 119h1v1h-1zM1038 123h1v1h-1zM1038 127h1v1h-1zM1038 131h1v1h-1zM1038 135h1v1h-1zM1038 139h1v1h-1zM1038 143h1v1h-1zM1038 147h1v1h-1zM1038 151h1v1h-1zM1038 155h1v1h-1zM1038 159h1v1h-1zM1038 163h1v1h-1zM1038 167h1v1h-1zM1038 171h1v1h-1zM1038 175h1v1h-1zM1038 179h1v1h-1zM1038 183h1v1h-1zM1038 187h1v1h-1zM1038 191h1v1h-1zM1038 195h1v1h-1zM1038 199h1v1h-1zM1038 203h1v1h-1zM1038 207h1v1h-1zM1038 211h1v1h-1zM1038 215h1v1h-1zM1038 219h1v1h-1zM1038 223h1v1h-1zM1038 227h1v1h-1zM1038 231h1v1h-1zM1038 235h1v1h-1zM1038 239h1v1h-1zM1038 243h1v1h-1zM1038 247h1v1h-1zM1038 251h1v1h-1zM1038 255h1v1h-1zM1038 259h1v1h-1zM1038 263h1v1h-1zM1038 267h1v1h-1zM1038 271h1v1h-1zM1038 275h1v1h-1zM1038 279h1v1h-1zM1038 283h1v1h-1zM1038 287h1v1h-1zM1038 291h1v1h-1zM1038 295h1v1h-1zM1038 299h1v1h-1zM1038 303h1v1h-1zM1038 307h1v1h-1zM1038 311h1v1h-1zM1038 315h1v1h-1zM1038 319h1v1h-1zM1038 323h1v1h-1zM1038 327h1v1h-1zM1038 331h1v1h-1zM1038 335h1v1h-1zM1038 339h1v1h-1zM1038 343h1v1h-1zM1038 347h1v1h-1zM1038 351h1v1h-1zM1038 355h1v1h-1zM1038 359h1v1h-1zM1038 363h1v1h-1zM1038 367h1v1h-1zM1038 371h1v1h-1zM1038 375h1v1h-1zM1038 379h1v1h-1zM1038 383h1v1h-1zM1038 387h1v1h-1zM1038 391h1v1h-1zM1038 395h1v1h-1zM1038 399h1v1h-1zM1038 403h1v1h-1zM1038 407h1v1h-1zM1038 411h1v1h-1zM1038 415h1v1h-1zM1038 419h1v1h-1zM1038 423h1v1h-1zM1038 427h1v1h-1zM1038 431h1v1h-1zM1065 59h1v1h-1zM1065 63h1v1h-1zM1065 67h1v1h-1zM1065 71h1v1h-1zM1065 75h1v1h-1zM1065 79h1v1h-1zM1065 83h1v1h-1zM1065 87h1v1h-1zM1065 91h1v1h-1zM1065 95h1v1h-1zM1065 99h1v1h-1zM1065 103h1v1h-1zM1065 107h1v1h-1zM1065 111h1v1h-1zM1065 115h1v1h-1zM1065 119h1v1h-1zM1065 123h1v1h-1zM1065 127h1v1h-1zM1065 131h1v1h-1zM1065 135h1v1h-1zM1065 139h1v1h-1zM1065 143h1v1h-1zM1065 147h1v1h-1zM1065 151h1v1h-1zM1065 155h1v1h-1zM1065 159h1v1h-1zM1065 163h1v1h-1zM1065 167h1v1h-1zM1065 171h1v1h-1zM1065 175h1v1h-1zM1065 179h1v1h-1zM1065 183h1v1h-1zM1065 187h1v1h-1zM1065 191h1v1h-1zM1065 195h1v1h-1zM1065 199h1v1h-1zM1065 203h1v1h-1zM1065 207h1v1h-1zM1065 211h1v1h-1zM1065 215h1v1h-1zM1065 219h1v1h-1zM1065 223h1v1h-1zM1065 227h1v1h-1zM1065 231h1v1h-1zM1065 235h1v1h-1zM1065 239h1v1h-1zM1065 243h1v1h-1zM1065 247h1v1h-1zM1065 251h1v1h-1zM1065 255h1v1h-1zM1065 259h1v1h-1zM1065 263h1v1h-1zM1065 267h1v1h-1zM1065 271h1v1h-1zM1065 275h1v1h-1zM1065 279h1v1h-1zM1065 283h1v1h-1zM1065 287h1v1h-1zM1065 291h1v1h-1zM1065 295h1v1h-1zM1065 299h1v1h-1zM1065 303h1v1h-1zM1065 307h1v1h-1zM1065 311h1v1h-1zM1065 315h1v1h-1zM1065 319h1v1h-1zM1065 323h1v1h-1zM1065 327h1v1h-1zM1065 331h1v1h-1zM1065 335h1v1h-1zM1065 339h1v1h-1zM1065 343h1v1h-1zM1065 347h1v1h-1zM1065 351h1v1h-1zM1065 355h1v1h-1zM1065 359h1v1h-1zM1065 363h1v1h-1zM1065 367h1v1h-1zM1065 371h1v1h-1zM1065 375h1v1h-1zM1065 379h1v1h-1zM1065 383h1v1h-1zM1065 387h1v1h-1zM1065 391h1v1h-1zM1065 395h1v1h-1zM1065 399h1v1h-1zM1065 403h1v1h-1zM1065 407h1v1h-1zM1065 411h1v1h-1zM1065 415h1v1h-1zM1065 419h1v1h-1zM1065 423h1v1h-1zM1065 427h1v1h-1zM1065 431h1v1h-1zM1092 59h1v1h-1zM1092 63h1v1h-1zM1092 67h1v1h-1zM1092 71h1v1h-1zM1092 75h1v1h-1zM1092 79h1v1h-1zM1092 83h1v1h-1zM1092 87h1v1h-1zM1092 91h1v1h-1zM1092 95h1v1h-1zM1092 99h1v1h-1zM1092 103h1v1h-1zM1092 107h1v1h-1zM1092 111h1v1h-1zM1092 115h1v1h-1zM1092 119h1v1h-1zM1092 123h1v1h-1zM1092 127h1v1h-1zM1092 131h1v1h-1zM1092 135h1v1h-1zM1092 139h1v1h-1zM1092 143h1v1h-1zM1092 147h1v1h-1zM1092 151h1v1h-1zM1092 155h1v1h-1zM1092 159h1v1h-1zM1092 163h1v1h-1zM1092 167h1v1h-1zM1092 171h1v1h-1zM1092 175h1v1h-1zM1092 179h1v1h-1zM1092 183h1v1h-1zM1092 187h1v1h-1zM1092 191h1v1h-1zM1092 195h1v1h-1zM1092 199h1v1h-1zM1092 203h1v1h-1zM1092 207h1v1h-1zM1092 211h1v1h-1zM1092 215h1v1h-1zM1092 219h1v1h-1zM1092 223h1v1h-1zM1092 227h1v1h-1zM1092 231h1v1h-1zM1092 235h1v1h-1zM1092 239h1v1h-1zM1092 243h1v1h-1zM1092 247h1v1h-1zM1092 251h1v1h-1zM1092 255h1v1h-1zM1092 259h1v1h-1zM1092 263h1v1h-1zM1092 267h1v1h-1zM1092 271h1v1h-1zM1092 275h1v1h-1zM1092 279h1v1h-1zM1092 283h1v1h-1zM1092 287h1v1h-1zM1092 291h1v1h-1zM1092 295h1v1h-1zM1092 299h1v1h-1zM1092 303h1v1h-1zM1092 307h1v1h-1zM1092 311h1v1h-1zM1092 315h1v1h-1zM1092 319h1v1h-1zM1092 323h1v1h-1zM1092 327h1v1h-1zM1092 331h1v1h-1zM1092 335h1v1h-1zM1092 339h1v1h-1zM1092 343h1v1h-1zM1092 347h1v1h-1zM1092 351h1v1h-1zM1092 355h1v1h-1zM1092 359h1v1h-1zM1092 363h1v1h-1zM1092 367h1v1h-1zM1092 371h1v1h-1zM1092 375h1v1h-1zM1092 379h1v1h-1zM1092 383h1v1h-1zM1092 387h1v1h-1zM1092 391h1v1h-1zM1092 395h1v1h-1zM1092 399h1v1h-1zM1092 403h1v1h-1zM1092 407h1v1h-1zM1092 411h1v1h-1zM1092 415h1v1h-1zM1092 419h1v1h-1zM1092 423h1v1h-1zM1092 427h1v1h-1zM1092 431h1v1h-1zM1119 59h1v1h-1zM1119 63h1v1h-1zM1119 67h1v1h-1zM1119 71h1v1h-1zM1119 75h1v1h-1zM1119 79h1v1h-1zM1119 83h1v1h-1zM1119 87h1v1h-1zM1119 91h1v1h-1zM1119 95h1v1h-1zM1119 99h1v1h-1zM1119 103h1v1h-1zM1119 107h1v1h-1zM1119 111h1v1h-1zM1119 115h1v1h-1zM1119 119h1v1h-1zM1119 123h1v1h-1zM1119 127h1v1h-1zM1119 131h1v1h-1zM1119 135h1v1h-1zM1119 139h1v1h-1zM1119 143h1v1h-1zM1119 147h1v1h-1zM1119 151h1v1h-1zM1119 155h1v1h-1zM1119 159h1v1h-1zM1119 163h1v1h-1zM1119 167h1v1h-1zM1119 171h1v1h-1zM1119 175h1v1h-1zM1119 179h1v1h-1zM1119 183h1v1h-1zM1119 187h1v1h-1zM1119 191h1v1h-1zM1119 195h1v1h-1zM1119 199h1v1h-1zM1119 203h1v1h-1zM1119 207h1v1h-1zM1119 211h1v1h-1zM1119 215h1v1h-1zM1119 219h1v1h-1zM1119 223h1v1h-1zM1119 227h1v1h-1zM1119 231h1v1h-1zM1119 235h1v1h-1zM1119 239h1v1h-1zM1119 243h1v1h-1zM1119 247h1v1h-1zM1119 251h1v1h-1zM1119 255h1v1h-1zM1119 259h1v1h-1zM1119 263h1v1h-1zM1119 267h1v1h-1zM1119 271h1v1h-1zM1119 275h1v1h-1zM1119 279h1v1h-1zM1119 283h1v1h-1zM1119 287h1v1h-1zM1119 291h1v1h-1zM1119 295h1v1h-1zM1119 299h1v1h-1zM1119 303h1v1h-1zM1119 307h1v1h-1zM1119 311h1v1h-1zM1119 315h1v1h-1zM1119 319h1v1h-1zM1119 323h1v1h-1zM1119 327h1v1h-1zM1119 331h1v1h-1zM1119 335h1v1h-1zM1119 339h1v1h-1zM1119 343h1v1h-1zM1119 347h1v1h-1zM1119 351h1v1h-1zM1119 355h1v1h-1zM1119 359h1v1h-1zM1119 363h1v1h-1zM1119 367h1v1h-1zM1119 371h1v1h-1zM1119 375h1v1h-1zM1119 379h1v1h-1zM1119 383h1v1h-1zM1119 387h1v1h-1zM1119 391h1v1h-1zM1119 395h1v1h-1zM1119 399h1v1h-1zM1119 403h1v1h-1zM1119 407h1v1h-1zM1119 411h1v1h-1zM1119 415h1v1h-1zM1119 419h1v1h-1zM1119 423h1v1h-1zM1119 427h1v1h-1zM1119 431h1v1h-1zM1146 59h1v1h-1zM1146 63h1v1h-1zM1146 67h1v1h-1zM1146 71h1v1h-1zM1146 75h1v1h-1zM1146 79h1v1h-1zM1146 83h1v1h-1zM1146 87h1v1h-1zM1146 91h1v1h-1zM1146 95h1v1h-1zM1146 99h1v1h-1zM1146 103h1v1h-1zM1146 107h1v1h-1zM1146 111h1v1h-1zM1146 115h1v1h-1zM1146 119h1v1h-1zM1146 123h1v1h-1zM1146 127h1v1h-1zM1146 131h1v1h-1zM1146 135h1v1h-1zM1146 139h1v1h-1zM1146 143h1v1h-1zM1146 147h1v1h-1zM1146 151h1v1h-1zM1146 155h1v1h-1zM1146 159h1v1h-1zM1146 163h1v1h-1zM1146 167h1v1h-1zM1146 171h1v1h-1zM1146 175h1v1h-1zM1146 179h1v1h-1zM1146 183h1v1h-1zM1146 187h1v1h-1zM1146 191h1v1h-1zM1146 195h1v1h-1zM1146 199h1v1h-1zM1146 203h1v1h-1zM1146 207h1v1h-1zM1146 211h1v1h-1zM1146 215h1v1h-1zM1146 219h1v1h-1zM1146 223h1v1h-1zM1146 227h1v1h-1zM1146 231h1v1h-1zM1146 235h1v1h-1zM1146 239h1v1h-1zM1146 243h1v1h-1zM1146 247h1v1h-1zM1146 251h1v1h-1zM1146 255h1v1h-1zM1146 259h1v1h-1zM1146 263h1v1h-1zM1146 267h1v1h-1zM1146 271h1v1h-1zM1146 275h1v1h-1zM1146 279h1v1h-1zM1146 283h1v1h-1zM1146 287h1v1h-1zM1146 291h1v1h-1zM1146 295h1v1h-1zM1146 299h1v1h-1zM1146 303h1v1h-1zM1146 307h1v1h-1zM1146 311h1v1h-1zM1146 315h1v1h-1zM1146 319h1v1h-1zM1146 323h1v1h-1zM1146 327h1v1h-1zM1146 331h1v1h-1zM1146 335h1v1h-1zM1146 339h1v1h-1zM1146 343h1v1h-1zM1146 347h1v1h-1zM1146 351h1v1h-1zM1146 355h1v1h-1zM1146 359h1v1h-1zM1146 363h1v1h-1zM1146 367h1v1h-1zM1146 371h1v1h-1zM1146 375h1v1h-1zM1146 379h1v1h-1zM1146 383h1v1h-1zM1146 387h1v1h-1zM1146 391h1v1h-1zM1146 395h1v1h-1zM1146 399h1v1h-1zM1146 403h1v1h-1zM1146 407h1v1h-1zM1146 411h1v1h-1zM1146 415h1v1h-1zM1146 419h1v1h-1zM1146 423h1v1h-1zM1146 427h1v1h-1zM1146 431h1v1h-1zM1173 59h1v1h-1zM1173 63h1v1h-1zM1173 67h1v1h-1zM1173 71h1v1h-1zM1173 75h1v1h-1zM1173 79h1v1h-1zM1173 83h1v1h-1zM1173 87h1v1h-1zM1173 91h1v1h-1zM1173 95h1v1h-1zM1173 99h1v1h-1zM1173 103h1v1h-1zM1173 107h1v1h-1zM1173 111h1v1h-1zM1173 115h1v1h-1zM1173 119h1v1h-1zM1173 123h1v1h-1zM1173 127h1v1h-1zM1173 131h1v1h-1zM1173 135h1v1h-1zM1173 139h1v1h-1zM1173 143h1v1h-1zM1173 147h1v1h-1zM1173 151h1v1h-1zM1173 155h1v1h-1zM1173 159h1v1h-1zM1173 163h1v1h-1zM1173 167h1v1h-1zM1173 171h1v1h-1zM1173 175h1v1h-1zM1173 179h1v1h-1zM1173 183h1v1h-1zM1173 187h1v1h-1zM1173 191h1v1h-1zM1173 195h1v1h-1zM1173 199h1v1h-1zM1173 203h1v1h-1zM1173 207h1v1h-1zM1173 211h1v1h-1zM1173 215h1v1h-1zM1173 219h1v1h-1zM1173 223h1v1h-1zM1173 227h1v1h-1zM1173 231h1v1h-1zM1173 235h1v1h-1zM1173 239h1v1h-1zM1173 243h1v1h-1zM1173 247h1v1h-1zM1173 251h1v1h-1zM1173 255h1v1h-1zM1173 259h1v1h-1zM1173 263h1v1h-1zM1173 267h1v1h-1zM1173 271h1v1h-1zM1173 275h1v1h-1zM1173 279h1v1h-1zM1173 283h1v1h-1zM1173 287h1v1h-1zM1173 291h1v1h-1zM1173 295h1v1h-1zM1173 299h1v1h-1zM1173 303h1v1h-1zM1173 307h1v1h-1zM1173 311h1v1h-1zM1173 315h1v1h-1zM1173 319h1v1h-1zM1173 323h1v1h-1zM1173 327h1v1h-1zM1173 331h1v1h-1zM1173 335h1v1h-1zM1173 339h1v1h-1zM1173 343h1v1h-1zM1173 347h1v1h-1zM1173 351h1v1h-1zM1173 355h1v1h-1zM1173 359h1v1h-1zM1173 363h1v1h-1zM1173 367h1v1h-1zM1173 371h1v1h-1zM1173 375h1v1h-1zM1173 379h1v1h-1zM1173 383h1v1h-1zM1173 387h1v1h-1zM1173 391h1v1h-1zM1173 395h1v1h-1zM1173 399h1v1h-1zM1173 403h1v1h-1zM1173 407h1v1h-1zM1173 411h1v1h-1zM1173 415h1v1h-1zM1173 419h1v1h-1zM1173 423h1v1h-1zM1173 427h1v1h-1zM1173 431h1v1h-1zM1199 59h1v1h-1zM1199 63h1v1h-1zM1199 67h1v1h-1zM1199 71h1v1h-1zM1199 75h1v1h-1zM1199 79h1v1h-1zM1199 83h1v1h-1zM1199 87h1v1h-1zM1199 91h1v1h-1zM1199 95h1v1h-1zM1199 99h1v1h-1zM1199 103h1v1h-1zM1199 107h1v1h-1zM1199 111h1v1h-1zM1199 115h1v1h-1zM1199 119h1v1h-1zM1199 123h1v1h-1zM1199 127h1v1h-1zM1199 131h1v1h-1zM1199 135h1v1h-1zM1199 139h1v1h-1zM1199 143h1v1h-1zM1199 147h1v1h-1zM1199 151h1v1h-1zM1199 155h1v1h-1zM1199 159h1v1h-1zM1199 163h1v1h-1zM1199 167h1v1h-1zM1199 171h1v1h-1zM1199 175h1v1h-1zM1199 179h1v1h-1zM1199 183h1v1h-1zM1199 187h1v1h-1zM1199 191h1v1h-1zM1199 195h1v1h-1zM1199 199h1v1h-1zM1199 203h1v1h-1zM1199 207h1v1h-1zM1199 211h1v1h-1zM1199 215h1v1h-1zM1199 219h1v1h-1zM1199 223h1v1h-1zM1199 227h1v1h-1zM1199 231h1v1h-1zM1199 235h1v1h-1zM1199 239h1v1h-1zM1199 243h1v1h-1zM1199 247h1v1h-1zM1199 251h1v1h-1zM1199 255h1v1h-1zM1199 259h1v1h-1zM1199 263h1v1h-1zM1199 267h1v1h-1zM1199 271h1v1h-1zM1199 275h1v1h-1zM1199 279h1v1h-1zM1199 283h1v1h-1zM1199 287h1v1h-1zM1199 291h1v1h-1zM1199 295h1v1h-1zM1199 299h1v1h-1zM1199 303h1v1h-1zM1199 307h1v1h-1zM1199 311h1v1h-1zM1199 315h1v1h-1zM1199 319h1v1h-1zM1199 323h1v1h-1zM1199 327h1v1h-1zM1199 331h1v1h-1zM1199 335h1v1h-1zM1199 339h1v1h-1zM1199 343h1v1h-1zM1199 347h1v1h-1zM1199 351h1v1h-1zM1199 355h1v1h-1zM1199 359h1v1h-1zM1199 363h1v1h-1zM1199 367h1v1h-1zM1199 371h1v1h-1zM1199 375h1v1h-1zM1199 379h1v1h-1zM1199 383h1v1h-1zM1199 387h1v1h-1zM1199 391h1v1h-1zM1199 395h1v1h-1zM1199 399h1v1h-1zM1199 403h1v1h-1zM1199 407h1v1h-1zM1199 411h1v1h-1zM1199 415h1v1h-1zM1199 419h1v1h-1zM1199 423h1v1h-1zM1199 427h1v1h-1zM1199 431h1v1h-1zM1226 59h1v1h-1zM1226 63h1v1h-1zM1226 67h1v1h-1zM1226 71h1v1h-1zM1226 75h1v1h-1zM1226 79h1v1h-1zM1226 83h1v1h-1zM1226 87h1v1h-1zM1226 91h1v1h-1zM1226 95h1v1h-1zM1226 99h1v1h-1zM1226 103h1v1h-1zM1226 107h1v1h-1zM1226 111h1v1h-1zM1226 115h1v1h-1zM1226 119h1v1h-1zM1226 123h1v1h-1zM1226 127h1v1h-1zM1226 131h1v1h-1zM1226 135h1v1h-1zM1226 139h1v1h-1zM1226 143h1v1h-1zM1226 147h1v1h-1zM1226 151h1v1h-1zM1226 155h1v1h-1zM1226 159h1v1h-1zM1226 163h1v1h-1zM1226 167h1v1h-1zM1226 171h1v1h-1zM1226 175h1v1h-1zM1226 179h1v1h-1zM1226 183h1v1h-1zM1226 187h1v1h-1zM1226 191h1v1h-1zM1226 195h1v1h-1zM1226 199h1v1h-1zM1226 203h1v1h-1zM1226 207h1v1h-1zM1226 211h1v1h-1zM1226 215h1v1h-1zM1226 219h1v1h-1zM1226 223h1v1h-1zM1226 227h1v1h-1zM1226 231h1v1h-1zM1226 235h1v1h-1zM1226 239h1v1h-1zM1226 243h1v1h-1zM1226 247h1v1h-1zM1226 251h1v1h-1zM1226 255h1v1h-1zM1226 259h1v1h-1zM1226 263h1v1h-1zM1226 267h1v1h-1zM1226 271h1v1h-1zM1226 275h1v1h-1zM1226 279h1v1h-1zM1226 283h1v1h-1zM1226 287h1v1h-1zM1226 291h1v1h-1zM1226 295h1v1h-1zM1226 299h1v1h-1zM1226 303h1v1h-1zM1226 307h1v1h-1zM1226 311h1v1h-1zM1226 315h1v1h-1zM1226 319h1v1h-1zM1226 323h1v1h-1zM1226 327h1v1h-1zM1226 331h1v1h-1zM1226 335h1v1h-1zM1226 339h1v1h-1zM1226 343h1v1h-1zM1226 347h1v1h-1zM1226 351h1v1h-1zM1226 355h1v1h-1zM1226 359h1v1h-1zM1226 363h1v1h-1zM1226 367h1v1h-1zM1226 371h1v1h-1zM1226 375h1v1h-1zM1226 379h1v1h-1zM1226 383h1v1h-1zM1226 387h1v1h-1zM1226 391h1v1h-1zM1226 395h1v1h-1zM1226 399h1v1h-1zM1226 403h1v1h-1zM1226 407h1v1h-1zM1226 411h1v1h-1zM1226 415h1v1h-1zM1226 419h1v1h-1zM1226 423h1v1h-1zM1226 427h1v1h-1zM1226 431h1v1h-1zM1253 59h1v1h-1zM1253 63h1v1h-1zM1253 67h1v1h-1zM1253 71h1v1h-1zM1253 75h1v1h-1zM1253 79h1v1h-1zM1253 83h1v1h-1zM1253 87h1v1h-1zM1253 91h1v1h-1zM1253 95h1v1h-1zM1253 99h1v1h-1zM1253 103h1v1h-1zM1253 107h1v1h-1zM1253 111h1v1h-1zM1253 115h1v1h-1zM1253 119h1v1h-1zM1253 123h1v1h-1zM1253 127h1v1h-1zM1253 131h1v1h-1zM1253 135h1v1h-1zM1253 139h1v1h-1zM1253 143h1v1h-1zM1253 147h1v1h-1zM1253 151h1v1h-1zM1253 155h1v1h-1zM1253 159h1v1h-1zM1253 163h1v1h-1zM1253 167h1v1h-1zM1253 171h1v1h-1zM1253 175h1v1h-1zM1253 179h1v1h-1zM1253 183h1v1h-1zM1253 187h1v1h-1zM1253 191h1v1h-1zM1253 195h1v1h-1zM1253 199h1v1h-1zM1253 203h1v1h-1zM1253 207h1v1h-1zM1253 211h1v1h-1zM1253 215h1v1h-1zM1253 219h1v1h-1zM1253 223h1v1h-1zM1253 227h1v1h-1zM1253 231h1v1h-1zM1253 235h1v1h-1zM1253 239h1v1h-1zM1253 243h1v1h-1zM1253 247h1v1h-1zM1253 251h1v1h-1zM1253 255h1v1h-1zM1253 259h1v1h-1zM1253 263h1v1h-1zM1253 267h1v1h-1zM1253 271h1v1h-1zM1253 275h1v1h-1zM1253 279h1v1h-1zM1253 283h1v1h-1zM1253 287h1v1h-1zM1253 291h1v1h-1zM1253 295h1v1h-1zM1253 299h1v1h-1zM1253 303h1v1h-1zM1253 307h1v1h-1zM1253 311h1v1h-1zM1253 315h1v1h-1zM1253 319h1v1h-1zM1253 323h1v1h-1zM1253 327h1v1h-1zM1253 331h1v1h-1zM1253 335h1v1h-1zM1253 339h1v1h-1zM1253 343h1v1h-1zM1253 347h1v1h-1zM1253 351h1v1h-1zM1253 355h1v1h-1zM1253 359h1v1h-1zM1253 363h1v1h-1zM1253 367h1v1h-1zM1253 371h1v1h-1zM1253 375h1v1h-1zM1253 379h1v1h-1zM1253 383h1v1h-1zM1253 387h1v1h-1zM1253 391h1v1h-1zM1253 395h1v1h-1zM1253 399h1v1h-1zM1253 403h1v1h-1zM1253 407h1v1h-1zM1253 411h1v1h-1zM1253 415h1v1h-1zM1253 419h1v1h-1zM1253 423h1v1h-1zM1253 427h1v1h-1zM1253 431h1v1h-1zM209 49h1v1h-1zM213 49h1v1h-1zM217 49h1v1h-1zM221 49h1v1h-1zM225 49h1v1h-1zM229 49h1v1h-1zM233 49h1v1h-1zM237 49h1v1h-1zM241 49h1v1h-1zM245 49h1v1h-1zM249 49h1v1h-1zM253 49h1v1h-1zM257 49h1v1h-1zM261 49h1v1h-1zM265 49h1v1h-1zM269 49h1v1h-1zM273 49h1v1h-1zM277 49h1v1h-1zM281 49h1v1h-1zM285 49h1v1h-1zM289 49h1v1h-1zM293 49h1v1h-1zM297 49h1v1h-1zM301 49h1v1h-1zM305 49h1v1h-1zM309 49h1v1h-1zM313 49h1v1h-1zM317 49h1v1h-1zM321 49h1v1h-1zM325 49h1v1h-1zM329 49h1v1h-1zM333 49h1v1h-1zM337 49h1v1h-1zM341 49h1v1h-1zM345 49h1v1h-1zM349 49h1v1h-1zM353 49h1v1h-1zM357 49h1v1h-1zM361 49h1v1h-1zM365 49h1v1h-1zM369 49h1v1h-1zM373 49h1v1h-1zM377 49h1v1h-1zM381 49h1v1h-1zM385 49h1v1h-1zM389 49h1v1h-1zM393 49h1v1h-1zM397 49h1v1h-1zM401 49h1v1h-1zM405 49h1v1h-1zM409 49h1v1h-1zM413 49h1v1h-1zM417 49h1v1h-1zM421 49h1v1h-1zM425 49h1v1h-1zM429 49h1v1h-1zM433 49h1v1h-1zM437 49h1v1h-1zM441 49h1v1h-1zM445 49h1v1h-1zM449 49h1v1h-1zM453 49h1v1h-1zM457 49h1v1h-1zM461 49h1v1h-1zM465 49h1v1h-1zM469 49h1v1h-1zM473 49h1v1h-1zM477 49h1v1h-1zM481 49h1v1h-1zM485 49h1v1h-1zM489 49h1v1h-1zM493 49h1v1h-1zM497 49h1v1h-1zM501 49h1v1h-1zM505 49h1v1h-1zM509 49h1v1h-1zM513 49h1v1h-1zM517 49h1v1h-1zM521 49h1v1h-1zM525 49h1v1h-1zM529 49h1v1h-1zM533 49h1v1h-1zM537 49h1v1h-1zM541 49h1v1h-1zM545 49h1v1h-1zM549 49h1v1h-1zM553 49h1v1h-1zM557 49h1v1h-1zM561 49h1v1h-1zM565 49h1v1h-1zM569 49h1v1h-1zM573 49h1v1h-1zM577 49h1v1h-1zM581 49h1v1h-1zM585 49h1v1h-1zM589 49h1v1h-1zM593 49h1v1h-1zM597 49h1v1h-1zM601 49h1v1h-1zM605 49h1v1h-1zM609 49h1v1h-1zM613 49h1v1h-1zM617 49h1v1h-1zM621 49h1v1h-1zM625 49h1v1h-1zM629 49h1v1h-1zM633 49h1v1h-1zM637 49h1v1h-1zM641 49h1v1h-1zM645 49h1v1h-1zM649 49h1v1h-1zM653 49h1v1h-1zM657 49h1v1h-1zM661 49h1v1h-1zM665 49h1v1h-1zM669 49h1v1h-1zM673 49h1v1h-1zM677 49h1v1h-1zM681 49h1v1h-1zM685 49h1v1h-1zM689 49h1v1h-1zM693 49h1v1h-1zM697 49h1v1h-1zM701 49h1v1h-1zM705 49h1v1h-1zM709 49h1v1h-1zM713 49h1v1h-1zM717 49h1v1h-1zM721 49h1v1h-1zM725 49h1v1h-1zM729 49h1v1h-1zM733 49h1v1h-1zM737 49h1v1h-1zM741 49h1v1h-1zM745 49h1v1h-1zM749 49h1v1h-1zM753 49h1v1h-1zM757 49h1v1h-1zM761 49h1v1h-1zM765 49h1v1h-1zM769 49h1v1h-1zM773 49h1v1h-1zM777 49h1v1h-1zM781 49h1v1h-1zM785 49h1v1h-1zM789 49h1v1h-1zM793 49h1v1h-1zM797 49h1v1h-1zM801 49h1v1h-1zM805 49h1v1h-1zM809 49h1v1h-1zM813 49h1v1h-1zM817 49h1v1h-1zM821 49h1v1h-1zM825 49h1v1h-1zM829 49h1v1h-1zM833 49h1v1h-1zM837 49h1v1h-1zM841 49h1v1h-1zM845 49h1v1h-1zM849 49h1v1h-1zM853 49h1v1h-1zM857 49h1v1h-1zM861 49h1v1h-1zM865 49h1v1h-1zM869 49h1v1h-1zM873 49h1v1h-1zM877 49h1v1h-1zM881 49h1v1h-1zM885 49h1v1h-1zM889 49h1v1h-1zM893 49h1v1h-1zM897 49h1v1h-1zM901 49h1v1h-1zM905 49h1v1h-1zM909 49h1v1h-1zM913 49h1v1h-1zM917 49h1v1h-1zM921 49h1v1h-1zM925 49h1v1h-1zM929 49h1v1h-1zM933 49h1v1h-1zM937 49h1v1h-1zM941 49h1v1h-1zM945 49h1v1h-1zM949 49h1v1h-1zM953 49h1v1h-1zM957 49h1v1h-1zM961 49h1v1h-1zM965 49h1v1h-1zM969 49h1v1h-1zM973 49h1v1h-1zM977 49h1v1h-1zM981 49h1v1h-1zM985 49h1v1h-1zM989 49h1v1h-1zM993 49h1v1h-1zM997 49h1v1h-1zM1001 49h1v1h-1zM1005 49h1v1h-1zM1009 49h1v1h-1zM1013 49h1v1h-1zM1017 49h1v1h-1zM1021 49h1v1h-1zM1025 49h1v1h-1zM1029 49h1v1h-1zM1033 49h1v1h-1zM1037 49h1v1h-1zM1041 49h1v1h-1zM1045 49h1v1h-1zM1049 49h1v1h-1zM1053 49h1v1h-1zM1057 49h1v1h-1zM1061 49h1v1h-1zM1065 49h1v1h-1zM1069 49h1v1h-1zM1073 49h1v1h-1zM1077 49h1v1h-1zM1081 49h1v1h-1zM1085 49h1v1h-1zM1089 49h1v1h-1zM1093 49h1v1h-1zM1097 49h1v1h-1zM1101 49h1v1h-1zM1105 49h1v1h-1zM1109 49h1v1h-1zM1113 49h1v1h-1zM1117 49h1v1h-1zM1121 49h1v1h-1zM1125 49h1v1h-1zM1129 49h1v1h-1zM1133 49h1v1h-1zM1137 49h1v1h-1zM1141 49h1v1h-1zM1145 49h1v1h-1zM1149 49h1v1h-1zM1153 49h1v1h-1zM1157 49h1v1h-1zM1161 49h1v1h-1zM1165 49h1v1h-1zM1169 49h1v1h-1zM1173 49h1v1h-1zM1177 49h1v1h-1zM1181 49h1v1h-1zM1185 49h1v1h-1zM1189 49h1v1h-1zM1193 49h1v1h-1zM1197 49h1v1h-1zM1201 49h1v1h-1zM1205 49h1v1h-1zM1209 49h1v1h-1zM1213 49h1v1h-1zM1217 49h1v1h-1zM1221 49h1v1h-1zM1225 49h1v1h-1zM1229 49h1v1h-1zM1233 49h1v1h-1zM1237 49h1v1h-1zM1241 49h1v1h-1zM1245 49h1v1h-1zM1249 49h1v1h-1zM1253 49h1v1h-1zM1257 49h1v1h-1zM1261 49h1v1h-1zM1265 49h1v1h-1zM209 97h1v1h-1zM213 97h1v1h-1zM217 97h1v1h-1zM221 97h1v1h-1zM225 97h1v1h-1zM229 97h1v1h-1zM233 97h1v1h-1zM237 97h1v1h-1zM241 97h1v1h-1zM245 97h1v1h-1zM249 97h1v1h-1zM253 97h1v1h-1zM257 97h1v1h-1zM261 97h1v1h-1zM265 97h1v1h-1zM269 97h1v1h-1zM273 97h1v1h-1zM277 97h1v1h-1zM281 97h1v1h-1zM285 97h1v1h-1zM289 97h1v1h-1zM293 97h1v1h-1zM297 97h1v1h-1zM301 97h1v1h-1zM305 97h1v1h-1zM309 97h1v1h-1zM313 97h1v1h-1zM317 97h1v1h-1zM321 97h1v1h-1zM325 97h1v1h-1zM329 97h1v1h-1zM333 97h1v1h-1zM337 97h1v1h-1zM341 97h1v1h-1zM345 97h1v1h-1zM349 97h1v1h-1zM353 97h1v1h-1zM357 97h1v1h-1zM361 97h1v1h-1zM365 97h1v1h-1zM369 97h1v1h-1zM373 97h1v1h-1zM377 97h1v1h-1zM381 97h1v1h-1zM385 97h1v1h-1zM389 97h1v1h-1zM393 97h1v1h-1zM397 97h1v1h-1zM401 97h1v1h-1zM405 97h1v1h-1zM409 97h1v1h-1zM413 97h1v1h-1zM417 97h1v1h-1zM421 97h1v1h-1zM425 97h1v1h-1zM429 97h1v1h-1zM433 97h1v1h-1zM437 97h1v1h-1zM441 97h1v1h-1zM445 97h1v1h-1zM449 97h1v1h-1zM453 97h1v1h-1zM457 97h1v1h-1zM461 97h1v1h-1zM465 97h1v1h-1zM469 97h1v1h-1zM473 97h1v1h-1zM477 97h1v1h-1zM481 97h1v1h-1zM485 97h1v1h-1zM489 97h1v1h-1zM493 97h1v1h-1zM497 97h1v1h-1zM501 97h1v1h-1zM505 97h1v1h-1zM509 97h1v1h-1zM513 97h1v1h-1zM517 97h1v1h-1zM521 97h1v1h-1zM525 97h1v1h-1zM529 97h1v1h-1zM533 97h1v1h-1zM537 97h1v1h-1zM541 97h1v1h-1zM545 97h1v1h-1zM549 97h1v1h-1zM553 97h1v1h-1zM557 97h1v1h-1zM561 97h1v1h-1zM565 97h1v1h-1zM569 97h1v1h-1zM573 97h1v1h-1zM577 97h1v1h-1zM581 97h1v1h-1zM585 97h1v1h-1zM589 97h1v1h-1zM593 97h1v1h-1zM597 97h1v1h-1zM601 97h1v1h-1zM605 97h1v1h-1zM609 97h1v1h-1zM613 97h1v1h-1zM617 97h1v1h-1zM621 97h1v1h-1zM625 97h1v1h-1zM629 97h1v1h-1zM633 97h1v1h-1zM637 97h1v1h-1zM641 97h1v1h-1zM645 97h1v1h-1zM649 97h1v1h-1zM653 97h1v1h-1zM657 97h1v1h-1zM661 97h1v1h-1zM665 97h1v1h-1zM669 97h1v1h-1zM673 97h1v1h-1zM677 97h1v1h-1zM681 97h1v1h-1zM685 97h1v1h-1zM689 97h1v1h-1zM693 97h1v1h-1zM697 97h1v1h-1zM701 97h1v1h-1zM705 97h1v1h-1zM709 97h1v1h-1zM713 97h1v1h-1zM717 97h1v1h-1zM721 97h1v1h-1zM725 97h1v1h-1zM729 97h1v1h-1zM733 97h1v1h-1zM737 97h1v1h-1zM741 97h1v1h-1zM745 97h1v1h-1zM749 97h1v1h-1zM753 97h1v1h-1zM757 97h1v1h-1zM761 97h1v1h-1zM765 97h1v1h-1zM769 97h1v1h-1zM773 97h1v1h-1zM777 97h1v1h-1zM781 97h1v1h-1zM785 97h1v1h-1zM789 97h1v1h-1zM793 97h1v1h-1zM797 97h1v1h-1zM801 97h1v1h-1zM805 97h1v1h-1zM809 97h1v1h-1zM813 97h1v1h-1zM817 97h1v1h-1zM821 97h1v1h-1zM825 97h1v1h-1zM829 97h1v1h-1zM833 97h1v1h-1zM837 97h1v1h-1zM841 97h1v1h-1zM845 97h1v1h-1zM849 97h1v1h-1zM853 97h1v1h-1zM857 97h1v1h-1zM861 97h1v1h-1zM865 97h1v1h-1zM869 97h1v1h-1zM873 97h1v1h-1zM877 97h1v1h-1zM881 97h1v1h-1zM885 97h1v1h-1zM889 97h1v1h-1zM893 97h1v1h-1zM897 97h1v1h-1zM901 97h1v1h-1zM905 97h1v1h-1zM909 97h1v1h-1zM913 97h1v1h-1zM917 97h1v1h-1zM921 97h1v1h-1zM925 97h1v1h-1zM929 97h1v1h-1zM933 97h1v1h-1zM937 97h1v1h-1zM941 97h1v1h-1zM945 97h1v1h-1zM949 97h1v1h-1zM953 97h1v1h-1zM957 97h1v1h-1zM961 97h1v1h-1zM965 97h1v1h-1zM969 97h1v1h-1zM973 97h1v1h-1zM977 97h1v1h-1zM981 97h1v1h-1zM985 97h1v1h-1zM989 97h1v1h-1zM993 97h1v1h-1zM997 97h1v1h-1zM1001 97h1v1h-1zM1005 97h1v1h-1zM1009 97h1v1h-1zM1013 97h1v1h-1zM1017 97h1v1h-1zM1021 97h1v1h-1zM1025 97h1v1h-1zM1029 97h1v1h-1zM1033 97h1v1h-1zM1037 97h1v1h-1zM1041 97h1v1h-1zM1045 97h1v1h-1zM1049 97h1v1h-1zM1053 97h1v1h-1zM1057 97h1v1h-1zM1061 97h1v1h-1zM1065 97h1v1h-1zM1069 97h1v1h-1zM1073 97h1v1h-1zM1077 97h1v1h-1zM1081 97h1v1h-1zM1085 97h1v1h-1zM1089 97h1v1h-1zM1093 97h1v1h-1zM1097 97h1v1h-1zM1101 97h1v1h-1zM1105 97h1v1h-1zM1109 97h1v1h-1zM1113 97h1v1h-1zM1117 97h1v1h-1zM1121 97h1v1h-1zM1125 97h1v1h-1zM1129 97h1v1h-1zM1133 97h1v1h-1zM1137 97h1v1h-1zM1141 97h1v1h-1zM1145 97h1v1h-1zM1149 97h1v1h-1zM1153 97h1v1h-1zM1157 97h1v1h-1zM1161 97h1v1h-1zM1165 97h1v1h-1zM1169 97h1v1h-1zM1173 97h1v1h-1zM1177 97h1v1h-1zM1181 97h1v1h-1zM1185 97h1v1h-1zM1189 97h1v1h-1zM1193 97h1v1h-1zM1197 97h1v1h-1zM1201 97h1v1h-1zM1205 97h1v1h-1zM1209 97h1v1h-1zM1213 97h1v1h-1zM1217 97h1v1h-1zM1221 97h1v1h-1zM1225 97h1v1h-1zM1229 97h1v1h-1zM1233 97h1v1h-1zM1237 97h1v1h-1zM1241 97h1v1h-1zM1245 97h1v1h-1zM1249 97h1v1h-1zM1253 97h1v1h-1zM1257 97h1v1h-1zM1261 97h1v1h-1zM1265 97h1v1h-1zM209 145h1v1h-1zM213 145h1v1h-1zM217 145h1v1h-1zM221 145h1v1h-1zM225 145h1v1h-1zM229 145h1v1h-1zM233 145h1v1h-1zM237 145h1v1h-1zM241 145h1v1h-1zM245 145h1v1h-1zM249 145h1v1h-1zM253 145h1v1h-1zM257 145h1v1h-1zM261 145h1v1h-1zM265 145h1v1h-1zM269 145h1v1h-1zM273 145h1v1h-1zM277 145h1v1h-1zM281 145h1v1h-1zM285 145h1v1h-1zM289 145h1v1h-1zM293 145h1v1h-1zM297 145h1v1h-1zM301 145h1v1h-1zM305 145h1v1h-1zM309 145h1v1h-1zM313 145h1v1h-1zM317 145h1v1h-1zM321 145h1v1h-1zM325 145h1v1h-1zM329 145h1v1h-1zM333 145h1v1h-1zM337 145h1v1h-1zM341 145h1v1h-1zM345 145h1v1h-1zM349 145h1v1h-1zM353 145h1v1h-1zM357 145h1v1h-1zM361 145h1v1h-1zM365 145h1v1h-1zM369 145h1v1h-1zM373 145h1v1h-1zM377 145h1v1h-1zM381 145h1v1h-1zM385 145h1v1h-1zM389 145h1v1h-1zM393 145h1v1h-1zM397 145h1v1h-1zM401 145h1v1h-1zM405 145h1v1h-1zM409 145h1v1h-1zM413 145h1v1h-1zM417 145h1v1h-1zM421 145h1v1h-1zM425 145h1v1h-1zM429 145h1v1h-1zM433 145h1v1h-1zM437 145h1v1h-1zM441 145h1v1h-1zM445 145h1v1h-1zM449 145h1v1h-1zM453 145h1v1h-1zM457 145h1v1h-1zM461 145h1v1h-1zM465 145h1v1h-1zM469 145h1v1h-1zM473 145h1v1h-1zM477 145h1v1h-1zM481 145h1v1h-1zM485 145h1v1h-1zM489 145h1v1h-1zM493 145h1v1h-1zM497 145h1v1h-1zM501 145h1v1h-1zM505 145h1v1h-1zM509 145h1v1h-1zM513 145h1v1h-1zM517 145h1v1h-1zM521 145h1v1h-1zM525 145h1v1h-1zM529 145h1v1h-1zM533 145h1v1h-1zM537 145h1v1h-1zM541 145h1v1h-1zM545 145h1v1h-1zM549 145h1v1h-1zM553 145h1v1h-1zM557 145h1v1h-1zM561 145h1v1h-1zM565 145h1v1h-1zM569 145h1v1h-1zM573 145h1v1h-1zM577 145h1v1h-1zM581 145h1v1h-1zM585 145h1v1h-1zM589 145h1v1h-1zM593 145h1v1h-1zM597 145h1v1h-1zM601 145h1v1h-1zM605 145h1v1h-1zM609 145h1v1h-1zM613 145h1v1h-1zM617 145h1v1h-1zM621 145h1v1h-1zM625 145h1v1h-1zM629 145h1v1h-1zM633 145h1v1h-1zM637 145h1v1h-1zM641 145h1v1h-1zM645 145h1v1h-1zM649 145h1v1h-1zM653 145h1v1h-1zM657 145h1v1h-1zM661 145h1v1h-1zM665 145h1v1h-1zM669 145h1v1h-1zM673 145h1v1h-1zM677 145h1v1h-1zM681 145h1v1h-1zM685 145h1v1h-1zM689 145h1v1h-1zM693 145h1v1h-1zM697 145h1v1h-1zM701 145h1v1h-1zM705 145h1v1h-1zM709 145h1v1h-1zM713 145h1v1h-1zM717 145h1v1h-1zM721 145h1v1h-1zM725 145h1v1h-1zM729 145h1v1h-1zM733 145h1v1h-1zM737 145h1v1h-1zM741 145h1v1h-1zM745 145h1v1h-1zM749 145h1v1h-1zM753 145h1v1h-1zM757 145h1v1h-1zM761 145h1v1h-1zM765 145h1v1h-1zM769 145h1v1h-1zM773 145h1v1h-1zM777 145h1v1h-1zM781 145h1v1h-1zM785 145h1v1h-1zM789 145h1v1h-1zM793 145h1v1h-1zM797 145h1v1h-1zM801 145h1v1h-1zM805 145h1v1h-1zM809 145h1v1h-1zM813 145h1v1h-1zM817 145h1v1h-1zM821 145h1v1h-1zM825 145h1v1h-1zM829 145h1v1h-1zM833 145h1v1h-1zM837 145h1v1h-1zM841 145h1v1h-1zM845 145h1v1h-1zM849 145h1v1h-1zM853 145h1v1h-1zM857 145h1v1h-1zM861 145h1v1h-1zM865 145h1v1h-1zM869 145h1v1h-1zM873 145h1v1h-1zM877 145h1v1h-1zM881 145h1v1h-1zM885 145h1v1h-1zM889 145h1v1h-1zM893 145h1v1h-1zM897 145h1v1h-1zM901 145h1v1h-1zM905 145h1v1h-1zM909 145h1v1h-1zM913 145h1v1h-1zM917 145h1v1h-1zM921 145h1v1h-1zM925 145h1v1h-1zM929 145h1v1h-1zM933 145h1v1h-1zM937 145h1v1h-1zM941 145h1v1h-1zM945 145h1v1h-1zM949 145h1v1h-1zM953 145h1v1h-1zM957 145h1v1h-1zM961 145h1v1h-1zM965 145h1v1h-1zM969 145h1v1h-1zM973 145h1v1h-1zM977 145h1v1h-1zM981 145h1v1h-1zM985 145h1v1h-1zM989 145h1v1h-1zM993 145h1v1h-1zM997 145h1v1h-1zM1001 145h1v1h-1zM1005 145h1v1h-1zM1009 145h1v1h-1zM1013 145h1v1h-1zM1017 145h1v1h-1zM1021 145h1v1h-1zM1025 145h1v1h-1zM1029 145h1v1h-1zM1033 145h1v1h-1zM1037 145h1v1h-1zM1041 145h1v1h-1zM1045 145h1v1h-1zM1049 145h1v1h-1zM1053 145h1v1h-1zM1057 145h1v1h-1zM1061 145h1v1h-1zM1065 145h1v1h-1zM1069 145h1v1h-1zM1073 145h1v1h-1zM1077 145h1v1h-1zM1081 145h1v1h-1zM1085 145h1v1h-1zM1089 145h1v1h-1zM1093 145h1v1h-1zM1097 145h1v1h-1zM1101 145h1v1h-1zM1105 145h1v1h-1zM1109 145h1v1h-1zM1113 145h1v1h-1zM1117 145h1v1h-1zM1121 145h1v1h-1zM1125 145h1v1h-1zM1129 145h1v1h-1zM1133 145h1v1h-1zM1137 145h1v1h-1zM1141 145h1v1h-1zM1145 145h1v1h-1zM1149 145h1v1h-1zM1153 145h1v1h-1zM1157 145h1v1h-1zM1161 145h1v1h-1zM1165 145h1v1h-1zM1169 145h1v1h-1zM1173 145h1v1h-1zM1177 145h1v1h-1zM1181 145h1v1h-1zM1185 145h1v1h-1zM1189 145h1v1h-1zM1193 145h1v1h-1zM1197 145h1v1h-1zM1201 145h1v1h-1zM1205 145h1v1h-1zM1209 145h1v1h-1zM1213 145h1v1h-1zM1217 145h1v1h-1zM1221 145h1v1h-1zM1225 145h1v1h-1zM1229 145h1v1h-1zM1233 145h1v1h-1zM1237 145h1v1h-1zM1241 145h1v1h-1zM1245 145h1v1h-1zM1249 145h1v1h-1zM1253 145h1v1h-1zM1257 145h1v1h-1zM1261 145h1v1h-1zM1265 145h1v1h-1zM209 193h1v1h-1zM213 193h1v1h-1zM217 193h1v1h-1zM221 193h1v1h-1zM225 193h1v1h-1zM229 193h1v1h-1zM233 193h1v1h-1zM237 193h1v1h-1zM241 193h1v1h-1zM245 193h1v1h-1zM249 193h1v1h-1zM253 193h1v1h-1zM257 193h1v1h-1zM261 193h1v1h-1zM265 193h1v1h-1zM269 193h1v1h-1zM273 193h1v1h-1zM277 193h1v1h-1zM281 193h1v1h-1zM285 193h1v1h-1zM289 193h1v1h-1zM293 193h1v1h-1zM297 193h1v1h-1zM301 193h1v1h-1zM305 193h1v1h-1zM309 193h1v1h-1zM313 193h1v1h-1zM317 193h1v1h-1zM321 193h1v1h-1zM325 193h1v1h-1zM329 193h1v1h-1zM333 193h1v1h-1zM337 193h1v1h-1zM341 193h1v1h-1zM345 193h1v1h-1zM349 193h1v1h-1zM353 193h1v1h-1zM357 193h1v1h-1zM361 193h1v1h-1zM365 193h1v1h-1zM369 193h1v1h-1zM373 193h1v1h-1zM377 193h1v1h-1zM381 193h1v1h-1zM385 193h1v1h-1zM389 193h1v1h-1zM393 193h1v1h-1zM397 193h1v1h-1zM401 193h1v1h-1zM405 193h1v1h-1zM409 193h1v1h-1zM413 193h1v1h-1zM417 193h1v1h-1zM421 193h1v1h-1zM425 193h1v1h-1zM429 193h1v1h-1zM433 193h1v1h-1zM437 193h1v1h-1zM441 193h1v1h-1zM445 193h1v1h-1zM449 193h1v1h-1zM453 193h1v1h-1zM457 193h1v1h-1zM461 193h1v1h-1zM465 193h1v1h-1zM469 193h1v1h-1zM473 193h1v1h-1zM477 193h1v1h-1zM481 193h1v1h-1zM485 193h1v1h-1zM489 193h1v1h-1zM493 193h1v1h-1zM497 193h1v1h-1zM501 193h1v1h-1zM505 193h1v1h-1zM509 193h1v1h-1zM513 193h1v1h-1zM517 193h1v1h-1zM521 193h1v1h-1zM525 193h1v1h-1zM529 193h1v1h-1zM533 193h1v1h-1zM537 193h1v1h-1zM541 193h1v1h-1zM545 193h1v1h-1zM549 193h1v1h-1zM553 193h1v1h-1zM557 193h1v1h-1zM561 193h1v1h-1zM565 193h1v1h-1zM569 193h1v1h-1zM573 193h1v1h-1zM577 193h1v1h-1zM581 193h1v1h-1zM585 193h1v1h-1zM589 193h1v1h-1zM593 193h1v1h-1zM597 193h1v1h-1zM601 193h1v1h-1zM605 193h1v1h-1zM609 193h1v1h-1zM613 193h1v1h-1zM617 193h1v1h-1zM621 193h1v1h-1zM625 193h1v1h-1zM629 193h1v1h-1zM633 193h1v1h-1zM637 193h1v1h-1zM641 193h1v1h-1zM645 193h1v1h-1zM649 193h1v1h-1zM653 193h1v1h-1zM657 193h1v1h-1zM661 193h1v1h-1zM665 193h1v1h-1zM669 193h1v1h-1zM673 193h1v1h-1zM677 193h1v1h-1zM681 193h1v1h-1zM685 193h1v1h-1zM689 193h1v1h-1zM693 193h1v1h-1zM697 193h1v1h-1zM701 193h1v1h-1zM705 193h1v1h-1zM709 193h1v1h-1zM713 193h1v1h-1zM717 193h1v1h-1zM721 193h1v1h-1zM725 193h1v1h-1zM729 193h1v1h-1zM733 193h1v1h-1zM737 193h1v1h-1zM741 193h1v1h-1zM745 193h1v1h-1zM749 193h1v1h-1zM753 193h1v1h-1zM757 193h1v1h-1zM761 193h1v1h-1zM765 193h1v1h-1zM769 193h1v1h-1zM773 193h1v1h-1zM777 193h1v1h-1zM781 193h1v1h-1zM785 193h1v1h-1zM789 193h1v1h-1zM793 193h1v1h-1zM797 193h1v1h-1zM801 193h1v1h-1zM805 193h1v1h-1zM809 193h1v1h-1zM813 193h1v1h-1zM817 193h1v1h-1zM821 193h1v1h-1zM825 193h1v1h-1zM829 193h1v1h-1zM833 193h1v1h-1zM837 193h1v1h-1zM841 193h1v1h-1zM845 193h1v1h-1zM849 193h1v1h-1zM853 193h1v1h-1zM857 193h1v1h-1zM861 193h1v1h-1zM865 193h1v1h-1zM869 193h1v1h-1zM873 193h1v1h-1zM877 193h1v1h-1zM881 193h1v1h-1zM885 193h1v1h-1zM889 193h1v1h-1zM893 193h1v1h-1zM897 193h1v1h-1zM901 193h1v1h-1zM905 193h1v1h-1zM909 193h1v1h-1zM913 193h1v1h-1zM917 193h1v1h-1zM921 193h1v1h-1zM925 193h1v1h-1zM929 193h1v1h-1zM933 193h1v1h-1zM937 193h1v1h-1zM941 193h1v1h-1zM945 193h1v1h-1zM949 193h1v1h-1zM953 193h1v1h-1zM957 193h1v1h-1zM961 193h1v1h-1zM965 193h1v1h-1zM969 193h1v1h-1zM973 193h1v1h-1zM977 193h1v1h-1zM981 193h1v1h-1zM985 193h1v1h-1zM989 193h1v1h-1zM993 193h1v1h-1zM997 193h1v1h-1zM1001 193h1v1h-1zM1005 193h1v1h-1zM1009 193h1v1h-1zM1013 193h1v1h-1zM1017 193h1v1h-1zM1021 193h1v1h-1zM1025 193h1v1h-1zM1029 193h1v1h-1zM1033 193h1v1h-1zM1037 193h1v1h-1zM1041 193h1v1h-1zM1045 193h1v1h-1zM1049 193h1v1h-1zM1053 193h1v1h-1zM1057 193h1v1h-1zM1061 193h1v1h-1zM1065 193h1v1h-1zM1069 193h1v1h-1zM1073 193h1v1h-1zM1077 193h1v1h-1zM1081 193h1v1h-1zM1085 193h1v1h-1zM1089 193h1v1h-1zM1093 193h1v1h-1zM1097 193h1v1h-1zM1101 193h1v1h-1zM1105 193h1v1h-1zM1109 193h1v1h-1zM1113 193h1v1h-1zM1117 193h1v1h-1zM1121 193h1v1h-1zM1125 193h1v1h-1zM1129 193h1v1h-1zM1133 193h1v1h-1zM1137 193h1v1h-1zM1141 193h1v1h-1zM1145 193h1v1h-1zM1149 193h1v1h-1zM1153 193h1v1h-1zM1157 193h1v1h-1zM1161 193h1v1h-1zM1165 193h1v1h-1zM1169 193h1v1h-1zM1173 193h1v1h-1zM1177 193h1v1h-1zM1181 193h1v1h-1zM1185 193h1v1h-1zM1189 193h1v1h-1zM1193 193h1v1h-1zM1197 193h1v1h-1zM1201 193h1v1h-1zM1205 193h1v1h-1zM1209 193h1v1h-1zM1213 193h1v1h-1zM1217 193h1v1h-1zM1221 193h1v1h-1zM1225 193h1v1h-1zM1229 193h1v1h-1zM1233 193h1v1h-1zM1237 193h1v1h-1zM1241 193h1v1h-1zM1245 193h1v1h-1zM1249 193h1v1h-1zM1253 193h1v1h-1zM1257 193h1v1h-1zM1261 193h1v1h-1zM1265 193h1v1h-1zM209 241h1v1h-1zM213 241h1v1h-1zM217 241h1v1h-1zM221 241h1v1h-1zM225 241h1v1h-1zM229 241h1v1h-1zM233 241h1v1h-1zM237 241h1v1h-1zM241 241h1v1h-1zM245 241h1v1h-1zM249 241h1v1h-1zM253 241h1v1h-1zM257 241h1v1h-1zM261 241h1v1h-1zM265 241h1v1h-1zM269 241h1v1h-1zM273 241h1v1h-1zM277 241h1v1h-1zM281 241h1v1h-1zM285 241h1v1h-1zM289 241h1v1h-1zM293 241h1v1h-1zM297 241h1v1h-1zM301 241h1v1h-1zM305 241h1v1h-1zM309 241h1v1h-1zM313 241h1v1h-1zM317 241h1v1h-1zM321 241h1v1h-1zM325 241h1v1h-1zM329 241h1v1h-1zM333 241h1v1h-1zM337 241h1v1h-1zM341 241h1v1h-1zM345 241h1v1h-1zM349 241h1v1h-1zM353 241h1v1h-1zM357 241h1v1h-1zM361 241h1v1h-1zM365 241h1v1h-1zM369 241h1v1h-1zM373 241h1v1h-1zM377 241h1v1h-1zM381 241h1v1h-1zM385 241h1v1h-1zM389 241h1v1h-1zM393 241h1v1h-1zM397 241h1v1h-1zM401 241h1v1h-1zM405 241h1v1h-1zM409 241h1v1h-1zM413 241h1v1h-1zM417 241h1v1h-1zM421 241h1v1h-1zM425 241h1v1h-1zM429 241h1v1h-1zM433 241h1v1h-1zM437 241h1v1h-1zM441 241h1v1h-1zM445 241h1v1h-1zM449 241h1v1h-1zM453 241h1v1h-1zM457 241h1v1h-1zM461 241h1v1h-1zM465 241h1v1h-1zM469 241h1v1h-1zM473 241h1v1h-1zM477 241h1v1h-1zM481 241h1v1h-1zM485 241h1v1h-1zM489 241h1v1h-1zM493 241h1v1h-1zM497 241h1v1h-1zM501 241h1v1h-1zM505 241h1v1h-1zM509 241h1v1h-1zM513 241h1v1h-1zM517 241h1v1h-1zM521 241h1v1h-1zM525 241h1v1h-1zM529 241h1v1h-1zM533 241h1v1h-1zM537 241h1v1h-1zM541 241h1v1h-1zM545 241h1v1h-1zM549 241h1v1h-1zM553 241h1v1h-1zM557 241h1v1h-1zM561 241h1v1h-1zM565 241h1v1h-1zM569 241h1v1h-1zM573 241h1v1h-1zM577 241h1v1h-1zM581 241h1v1h-1zM585 241h1v1h-1zM589 241h1v1h-1zM593 241h1v1h-1zM597 241h1v1h-1zM601 241h1v1h-1zM605 241h1v1h-1zM609 241h1v1h-1zM613 241h1v1h-1zM617 241h1v1h-1zM621 241h1v1h-1zM625 241h1v1h-1zM629 241h1v1h-1zM633 241h1v1h-1zM637 241h1v1h-1zM641 241h1v1h-1zM645 241h1v1h-1zM649 241h1v1h-1zM653 241h1v1h-1zM657 241h1v1h-1zM661 241h1v1h-1zM665 241h1v1h-1zM669 241h1v1h-1zM673 241h1v1h-1zM677 241h1v1h-1zM681 241h1v1h-1zM685 241h1v1h-1zM689 241h1v1h-1zM693 241h1v1h-1zM697 241h1v1h-1zM701 241h1v1h-1zM705 241h1v1h-1zM709 241h1v1h-1zM713 241h1v1h-1zM717 241h1v1h-1zM721 241h1v1h-1zM725 241h1v1h-1zM729 241h1v1h-1zM733 241h1v1h-1zM737 241h1v1h-1zM741 241h1v1h-1zM745 241h1v1h-1zM749 241h1v1h-1zM753 241h1v1h-1zM757 241h1v1h-1zM761 241h1v1h-1zM765 241h1v1h-1zM769 241h1v1h-1zM773 241h1v1h-1zM777 241h1v1h-1zM781 241h1v1h-1zM785 241h1v1h-1zM789 241h1v1h-1zM793 241h1v1h-1zM797 241h1v1h-1zM801 241h1v1h-1zM805 241h1v1h-1zM809 241h1v1h-1zM813 241h1v1h-1zM817 241h1v1h-1zM821 241h1v1h-1zM825 241h1v1h-1zM829 241h1v1h-1zM833 241h1v1h-1zM837 241h1v1h-1zM841 241h1v1h-1zM845 241h1v1h-1zM849 241h1v1h-1zM853 241h1v1h-1zM857 241h1v1h-1zM861 241h1v1h-1zM865 241h1v1h-1zM869 241h1v1h-1zM873 241h1v1h-1zM877 241h1v1h-1zM881 241h1v1h-1zM885 241h1v1h-1zM889 241h1v1h-1zM893 241h1v1h-1zM897 241h1v1h-1zM901 241h1v1h-1zM905 241h1v1h-1zM909 241h1v1h-1zM913 241h1v1h-1zM917 241h1v1h-1zM921 241h1v1h-1zM925 241h1v1h-1zM929 241h1v1h-1zM933 241h1v1h-1zM937 241h1v1h-1zM941 241h1v1h-1zM945 241h1v1h-1zM949 241h1v1h-1zM953 241h1v1h-1zM957 241h1v1h-1zM961 241h1v1h-1zM965 241h1v1h-1zM969 241h1v1h-1zM973 241h1v1h-1zM977 241h1v1h-1zM981 241h1v1h-1zM985 241h1v1h-1zM989 241h1v1h-1zM993 241h1v1h-1zM997 241h1v1h-1zM1001 241h1v1h-1zM1005 241h1v1h-1zM1009 241h1v1h-1zM1013 241h1v1h-1zM1017 241h1v1h-1zM1021 241h1v1h-1zM1025 241h1v1h-1zM1029 241h1v1h-1zM1033 241h1v1h-1zM1037 241h1v1h-1zM1041 241h1v1h-1zM1045 241h1v1h-1zM1049 241h1v1h-1zM1053 241h1v1h-1zM1057 241h1v1h-1zM1061 241h1v1h-1zM1065 241h1v1h-1zM1069 241h1v1h-1zM1073 241h1v1h-1zM1077 241h1v1h-1zM1081 241h1v1h-1zM1085 241h1v1h-1zM1089 241h1v1h-1zM1093 241h1v1h-1zM1097 241h1v1h-1zM1101 241h1v1h-1zM1105 241h1v1h-1zM1109 241h1v1h-1zM1113 241h1v1h-1zM1117 241h1v1h-1zM1121 241h1v1h-1zM1125 241h1v1h-1zM1129 241h1v1h-1zM1133 241h1v1h-1zM1137 241h1v1h-1zM1141 241h1v1h-1zM1145 241h1v1h-1zM1149 241h1v1h-1zM1153 241h1v1h-1zM1157 241h1v1h-1zM1161 241h1v1h-1zM1165 241h1v1h-1zM1169 241h1v1h-1zM1173 241h1v1h-1zM1177 241h1v1h-1zM1181 241h1v1h-1zM1185 241h1v1h-1zM1189 241h1v1h-1zM1193 241h1v1h-1zM1197 241h1v1h-1zM1201 241h1v1h-1zM1205 241h1v1h-1zM1209 241h1v1h-1zM1213 241h1v1h-1zM1217 241h1v1h-1zM1221 241h1v1h-1zM1225 241h1v1h-1zM1229 241h1v1h-1zM1233 241h1v1h-1zM1237 241h1v1h-1zM1241 241h1v1h-1zM1245 241h1v1h-1zM1249 241h1v1h-1zM1253 241h1v1h-1zM1257 241h1v1h-1zM1261 241h1v1h-1zM1265 241h1v1h-1zM209 289h1v1h-1zM213 289h1v1h-1zM217 289h1v1h-1zM221 289h1v1h-1zM225 289h1v1h-1zM229 289h1v1h-1zM233 289h1v1h-1zM237 289h1v1h-1zM241 289h1v1h-1zM245 289h1v1h-1zM249 289h1v1h-1zM253 289h1v1h-1zM257 289h1v1h-1zM261 289h1v1h-1zM265 289h1v1h-1zM269 289h1v1h-1zM273 289h1v1h-1zM277 289h1v1h-1zM281 289h1v1h-1zM285 289h1v1h-1zM289 289h1v1h-1zM293 289h1v1h-1zM297 289h1v1h-1zM301 289h1v1h-1zM305 289h1v1h-1zM309 289h1v1h-1zM313 289h1v1h-1zM317 289h1v1h-1zM321 289h1v1h-1zM325 289h1v1h-1zM329 289h1v1h-1zM333 289h1v1h-1zM337 289h1v1h-1zM341 289h1v1h-1zM345 289h1v1h-1zM349 289h1v1h-1zM353 289h1v1h-1zM357 289h1v1h-1zM361 289h1v1h-1zM365 289h1v1h-1zM369 289h1v1h-1zM373 289h1v1h-1zM377 289h1v1h-1zM381 289h1v1h-1zM385 289h1v1h-1zM389 289h1v1h-1zM393 289h1v1h-1zM397 289h1v1h-1zM401 289h1v1h-1zM405 289h1v1h-1zM409 289h1v1h-1zM413 289h1v1h-1zM417 289h1v1h-1zM421 289h1v1h-1zM425 289h1v1h-1zM429 289h1v1h-1zM433 289h1v1h-1zM437 289h1v1h-1zM441 289h1v1h-1zM445 289h1v1h-1zM449 289h1v1h-1zM453 289h1v1h-1zM457 289h1v1h-1zM461 289h1v1h-1zM465 289h1v1h-1zM469 289h1v1h-1zM473 289h1v1h-1zM477 289h1v1h-1zM481 289h1v1h-1zM485 289h1v1h-1zM489 289h1v1h-1zM493 289h1v1h-1zM497 289h1v1h-1zM501 289h1v1h-1zM505 289h1v1h-1zM509 289h1v1h-1zM513 289h1v1h-1zM517 289h1v1h-1zM521 289h1v1h-1zM525 289h1v1h-1zM529 289h1v1h-1zM533 289h1v1h-1zM537 289h1v1h-1zM541 289h1v1h-1zM545 289h1v1h-1zM549 289h1v1h-1zM553 289h1v1h-1zM557 289h1v1h-1zM561 289h1v1h-1zM565 289h1v1h-1zM569 289h1v1h-1zM573 289h1v1h-1zM577 289h1v1h-1zM581 289h1v1h-1zM585 289h1v1h-1zM589 289h1v1h-1zM593 289h1v1h-1zM597 289h1v1h-1zM601 289h1v1h-1zM605 289h1v1h-1zM609 289h1v1h-1zM613 289h1v1h-1zM617 289h1v1h-1zM621 289h1v1h-1zM625 289h1v1h-1zM629 289h1v1h-1zM633 289h1v1h-1zM637 289h1v1h-1zM641 289h1v1h-1zM645 289h1v1h-1zM649 289h1v1h-1zM653 289h1v1h-1zM657 289h1v1h-1zM661 289h1v1h-1zM665 289h1v1h-1zM669 289h1v1h-1zM673 289h1v1h-1zM677 289h1v1h-1zM681 289h1v1h-1zM685 289h1v1h-1zM689 289h1v1h-1zM693 289h1v1h-1zM697 289h1v1h-1zM701 289h1v1h-1zM705 289h1v1h-1zM709 289h1v1h-1zM713 289h1v1h-1zM717 289h1v1h-1zM721 289h1v1h-1zM725 289h1v1h-1zM729 289h1v1h-1zM733 289h1v1h-1zM737 289h1v1h-1zM741 289h1v1h-1zM745 289h1v1h-1zM749 289h1v1h-1zM753 289h1v1h-1zM757 289h1v1h-1zM761 289h1v1h-1zM765 289h1v1h-1zM769 289h1v1h-1zM773 289h1v1h-1zM777 289h1v1h-1zM781 289h1v1h-1zM785 289h1v1h-1zM789 289h1v1h-1zM793 289h1v1h-1zM797 289h1v1h-1zM801 289h1v1h-1zM805 289h1v1h-1zM809 289h1v1h-1zM813 289h1v1h-1zM817 289h1v1h-1zM821 289h1v1h-1zM825 289h1v1h-1zM829 289h1v1h-1zM833 289h1v1h-1zM837 289h1v1h-1zM841 289h1v1h-1zM845 289h1v1h-1zM849 289h1v1h-1zM853 289h1v1h-1zM857 289h1v1h-1zM861 289h1v1h-1zM865 289h1v1h-1zM869 289h1v1h-1zM873 289h1v1h-1zM877 289h1v1h-1zM881 289h1v1h-1zM885 289h1v1h-1zM889 289h1v1h-1zM893 289h1v1h-1zM897 289h1v1h-1zM901 289h1v1h-1zM905 289h1v1h-1zM909 289h1v1h-1zM913 289h1v1h-1zM917 289h1v1h-1zM921 289h1v1h-1zM925 289h1v1h-1zM929 289h1v1h-1zM933 289h1v1h-1zM937 289h1v1h-1zM941 289h1v1h-1zM945 289h1v1h-1zM949 289h1v1h-1zM953 289h1v1h-1zM957 289h1v1h-1zM961 289h1v1h-1zM965 289h1v1h-1zM969 289h1v1h-1zM973 289h1v1h-1zM977 289h1v1h-1zM981 289h1v1h-1zM985 289h1v1h-1zM989 289h1v1h-1zM993 289h1v1h-1zM997 289h1v1h-1zM1001 289h1v1h-1zM1005 289h1v1h-1zM1009 289h1v1h-1zM1013 289h1v1h-1zM1017 289h1v1h-1zM1021 289h1v1h-1zM1025 289h1v1h-1zM1029 289h1v1h-1zM1033 289h1v1h-1zM1037 289h1v1h-1zM1041 289h1v1h-1zM1045 289h1v1h-1zM1049 289h1v1h-1zM1053 289h1v1h-1zM1057 289h1v1h-1zM1061 289h1v1h-1zM1065 289h1v1h-1zM1069 289h1v1h-1zM1073 289h1v1h-1zM1077 289h1v1h-1zM1081 289h1v1h-1zM1085 289h1v1h-1zM1089 289h1v1h-1zM1093 289h1v1h-1zM1097 289h1v1h-1zM1101 289h1v1h-1zM1105 289h1v1h-1zM1109 289h1v1h-1zM1113 289h1v1h-1zM1117 289h1v1h-1zM1121 289h1v1h-1zM1125 289h1v1h-1zM1129 289h1v1h-1zM1133 289h1v1h-1zM1137 289h1v1h-1zM1141 289h1v1h-1zM1145 289h1v1h-1zM1149 289h1v1h-1zM1153 289h1v1h-1zM1157 289h1v1h-1zM1161 289h1v1h-1zM1165 289h1v1h-1zM1169 289h1v1h-1zM1173 289h1v1h-1zM1177 289h1v1h-1zM1181 289h1v1h-1zM1185 289h1v1h-1zM1189 289h1v1h-1zM1193 289h1v1h-1zM1197 289h1v1h-1zM1201 289h1v1h-1zM1205 289h1v1h-1zM1209 289h1v1h-1zM1213 289h1v1h-1zM1217 289h1v1h-1zM1221 289h1v1h-1zM1225 289h1v1h-1zM1229 289h1v1h-1zM1233 289h1v1h-1zM1237 289h1v1h-1zM1241 289h1v1h-1zM1245 289h1v1h-1zM1249 289h1v1h-1zM1253 289h1v1h-1zM1257 289h1v1h-1zM1261 289h1v1h-1zM1265 289h1v1h-1zM209 337h1v1h-1zM213 337h1v1h-1zM217 337h1v1h-1zM221 337h1v1h-1zM225 337h1v1h-1zM229 337h1v1h-1zM233 337h1v1h-1zM237 337h1v1h-1zM241 337h1v1h-1zM245 337h1v1h-1zM249 337h1v1h-1zM253 337h1v1h-1zM257 337h1v1h-1zM261 337h1v1h-1zM265 337h1v1h-1zM269 337h1v1h-1zM273 337h1v1h-1zM277 337h1v1h-1zM281 337h1v1h-1zM285 337h1v1h-1zM289 337h1v1h-1zM293 337h1v1h-1zM297 337h1v1h-1zM301 337h1v1h-1zM305 337h1v1h-1zM309 337h1v1h-1zM313 337h1v1h-1zM317 337h1v1h-1zM321 337h1v1h-1zM325 337h1v1h-1zM329 337h1v1h-1zM333 337h1v1h-1zM337 337h1v1h-1zM341 337h1v1h-1zM345 337h1v1h-1zM349 337h1v1h-1zM353 337h1v1h-1zM357 337h1v1h-1zM361 337h1v1h-1zM365 337h1v1h-1zM369 337h1v1h-1zM373 337h1v1h-1zM377 337h1v1h-1zM381 337h1v1h-1zM385 337h1v1h-1zM389 337h1v1h-1zM393 337h1v1h-1zM397 337h1v1h-1zM401 337h1v1h-1zM405 337h1v1h-1zM409 337h1v1h-1zM413 337h1v1h-1zM417 337h1v1h-1zM421 337h1v1h-1zM425 337h1v1h-1zM429 337h1v1h-1zM433 337h1v1h-1zM437 337h1v1h-1zM441 337h1v1h-1zM445 337h1v1h-1zM449 337h1v1h-1zM453 337h1v1h-1zM457 337h1v1h-1zM461 337h1v1h-1zM465 337h1v1h-1zM469 337h1v1h-1zM473 337h1v1h-1zM477 337h1v1h-1zM481 337h1v1h-1zM485 337h1v1h-1zM489 337h1v1h-1zM493 337h1v1h-1zM497 337h1v1h-1zM501 337h1v1h-1zM505 337h1v1h-1zM509 337h1v1h-1zM513 337h1v1h-1zM517 337h1v1h-1zM521 337h1v1h-1zM525 337h1v1h-1zM529 337h1v1h-1zM533 337h1v1h-1zM537 337h1v1h-1zM541 337h1v1h-1zM545 337h1v1h-1zM549 337h1v1h-1zM553 337h1v1h-1zM557 337h1v1h-1zM561 337h1v1h-1zM565 337h1v1h-1zM569 337h1v1h-1zM573 337h1v1h-1zM577 337h1v1h-1zM581 337h1v1h-1zM585 337h1v1h-1zM589 337h1v1h-1zM593 337h1v1h-1zM597 337h1v1h-1zM601 337h1v1h-1zM605 337h1v1h-1zM609 337h1v1h-1zM613 337h1v1h-1zM617 337h1v1h-1zM621 337h1v1h-1zM625 337h1v1h-1zM629 337h1v1h-1zM633 337h1v1h-1zM637 337h1v1h-1zM641 337h1v1h-1zM645 337h1v1h-1zM649 337h1v1h-1zM653 337h1v1h-1zM657 337h1v1h-1zM661 337h1v1h-1zM665 337h1v1h-1zM669 337h1v1h-1zM673 337h1v1h-1zM677 337h1v1h-1zM681 337h1v1h-1zM685 337h1v1h-1zM689 337h1v1h-1zM693 337h1v1h-1zM697 337h1v1h-1zM701 337h1v1h-1zM705 337h1v1h-1zM709 337h1v1h-1zM713 337h1v1h-1zM717 337h1v1h-1zM721 337h1v1h-1zM725 337h1v1h-1zM729 337h1v1h-1zM733 337h1v1h-1zM737 337h1v1h-1zM741 337h1v1h-1zM745 337h1v1h-1zM749 337h1v1h-1zM753 337h1v1h-1zM757 337h1v1h-1zM761 337h1v1h-1zM765 337h1v1h-1zM769 337h1v1h-1zM773 337h1v1h-1zM777 337h1v1h-1zM781 337h1v1h-1zM785 337h1v1h-1zM789 337h1v1h-1zM793 337h1v1h-1zM797 337h1v1h-1zM801 337h1v1h-1zM805 337h1v1h-1zM809 337h1v1h-1zM813 337h1v1h-1zM817 337h1v1h-1zM821 337h1v1h-1zM825 337h1v1h-1zM829 337h1v1h-1zM833 337h1v1h-1zM837 337h1v1h-1zM841 337h1v1h-1zM845 337h1v1h-1zM849 337h1v1h-1zM853 337h1v1h-1zM857 337h1v1h-1zM861 337h1v1h-1zM865 337h1v1h-1zM869 337h1v1h-1zM873 337h1v1h-1zM877 337h1v1h-1zM881 337h1v1h-1zM885 337h1v1h-1zM889 337h1v1h-1zM893 337h1v1h-1zM897 337h1v1h-1zM901 337h1v1h-1zM905 337h1v1h-1zM909 337h1v1h-1zM913 337h1v1h-1zM917 337h1v1h-1zM921 337h1v1h-1zM925 337h1v1h-1zM929 337h1v1h-1zM933 337h1v1h-1zM937 337h1v1h-1zM941 337h1v1h-1zM945 337h1v1h-1zM949 337h1v1h-1zM953 337h1v1h-1zM957 337h1v1h-1zM961 337h1v1h-1zM965 337h1v1h-1zM969 337h1v1h-1zM973 337h1v1h-1zM977 337h1v1h-1zM981 337h1v1h-1zM985 337h1v1h-1zM989 337h1v1h-1zM993 337h1v1h-1zM997 337h1v1h-1zM1001 337h1v1h-1zM1005 337h1v1h-1zM1009 337h1v1h-1zM1013 337h1v1h-1zM1017 337h1v1h-1zM1021 337h1v1h-1zM1025 337h1v1h-1zM1029 337h1v1h-1zM1033 337h1v1h-1zM1037 337h1v1h-1zM1041 337h1v1h-1zM1045 337h1v1h-1zM1049 337h1v1h-1zM1053 337h1v1h-1zM1057 337h1v1h-1zM1061 337h1v1h-1zM1065 337h1v1h-1zM1069 337h1v1h-1zM1073 337h1v1h-1zM1077 337h1v1h-1zM1081 337h1v1h-1zM1085 337h1v1h-1zM1089 337h1v1h-1zM1093 337h1v1h-1zM1097 337h1v1h-1zM1101 337h1v1h-1zM1105 337h1v1h-1zM1109 337h1v1h-1zM1113 337h1v1h-1zM1117 337h1v1h-1zM1121 337h1v1h-1zM1125 337h1v1h-1zM1129 337h1v1h-1zM1133 337h1v1h-1zM1137 337h1v1h-1zM1141 337h1v1h-1zM1145 337h1v1h-1zM1149 337h1v1h-1zM1153 337h1v1h-1zM1157 337h1v1h-1zM1161 337h1v1h-1zM1165 337h1v1h-1zM1169 337h1v1h-1zM1173 337h1v1h-1zM1177 337h1v1h-1zM1181 337h1v1h-1zM1185 337h1v1h-1zM1189 337h1v1h-1zM1193 337h1v1h-1zM1197 337h1v1h-1zM1201 337h1v1h-1zM1205 337h1v1h-1zM1209 337h1v1h-1zM1213 337h1v1h-1zM1217 337h1v1h-1zM1221 337h1v1h-1zM1225 337h1v1h-1zM1229 337h1v1h-1zM1233 337h1v1h-1zM1237 337h1v1h-1zM1241 337h1v1h-1zM1245 337h1v1h-1zM1249 337h1v1h-1zM1253 337h1v1h-1zM1257 337h1v1h-1zM1261 337h1v1h-1zM1265 337h1v1h-1zM209 386h1v1h-1zM213 386h1v1h-1zM217 386h1v1h-1zM221 386h1v1h-1zM225 386h1v1h-1zM229 386h1v1h-1zM233 386h1v1h-1zM237 386h1v1h-1zM241 386h1v1h-1zM245 386h1v1h-1zM249 386h1v1h-1zM253 386h1v1h-1zM257 386h1v1h-1zM261 386h1v1h-1zM265 386h1v1h-1zM269 386h1v1h-1zM273 386h1v1h-1zM277 386h1v1h-1zM281 386h1v1h-1zM285 386h1v1h-1zM289 386h1v1h-1zM293 386h1v1h-1zM297 386h1v1h-1zM301 386h1v1h-1zM305 386h1v1h-1zM309 386h1v1h-1zM313 386h1v1h-1zM317 386h1v1h-1zM321 386h1v1h-1zM325 386h1v1h-1zM329 386h1v1h-1zM333 386h1v1h-1zM337 386h1v1h-1zM341 386h1v1h-1zM345 386h1v1h-1zM349 386h1v1h-1zM353 386h1v1h-1zM357 386h1v1h-1zM361 386h1v1h-1zM365 386h1v1h-1zM369 386h1v1h-1zM373 386h1v1h-1zM377 386h1v1h-1zM381 386h1v1h-1zM385 386h1v1h-1zM389 386h1v1h-1zM393 386h1v1h-1zM397 386h1v1h-1zM401 386h1v1h-1zM405 386h1v1h-1zM409 386h1v1h-1zM413 386h1v1h-1zM417 386h1v1h-1zM421 386h1v1h-1zM425 386h1v1h-1zM429 386h1v1h-1zM433 386h1v1h-1zM437 386h1v1h-1zM441 386h1v1h-1zM445 386h1v1h-1zM449 386h1v1h-1zM453 386h1v1h-1zM457 386h1v1h-1zM461 386h1v1h-1zM465 386h1v1h-1zM469 386h1v1h-1zM473 386h1v1h-1zM477 386h1v1h-1zM481 386h1v1h-1zM485 386h1v1h-1zM489 386h1v1h-1zM493 386h1v1h-1zM497 386h1v1h-1zM501 386h1v1h-1zM505 386h1v1h-1zM509 386h1v1h-1zM513 386h1v1h-1zM517 386h1v1h-1zM521 386h1v1h-1zM525 386h1v1h-1zM529 386h1v1h-1zM533 386h1v1h-1zM537 386h1v1h-1zM541 386h1v1h-1zM545 386h1v1h-1zM549 386h1v1h-1zM553 386h1v1h-1zM557 386h1v1h-1zM561 386h1v1h-1zM565 386h1v1h-1zM569 386h1v1h-1zM573 386h1v1h-1zM577 386h1v1h-1zM581 386h1v1h-1zM585 386h1v1h-1zM589 386h1v1h-1zM593 386h1v1h-1zM597 386h1v1h-1zM601 386h1v1h-1zM605 386h1v1h-1zM609 386h1v1h-1zM613 386h1v1h-1zM617 386h1v1h-1zM621 386h1v1h-1zM625 386h1v1h-1zM629 386h1v1h-1zM633 386h1v1h-1zM637 386h1v1h-1zM641 386h1v1h-1zM645 386h1v1h-1zM649 386h1v1h-1zM653 386h1v1h-1zM657 386h1v1h-1zM661 386h1v1h-1zM665 386h1v1h-1zM669 386h1v1h-1zM673 386h1v1h-1zM677 386h1v1h-1zM681 386h1v1h-1zM685 386h1v1h-1zM689 386h1v1h-1zM693 386h1v1h-1zM697 386h1v1h-1zM701 386h1v1h-1zM705 386h1v1h-1zM709 386h1v1h-1zM713 386h1v1h-1zM717 386h1v1h-1zM721 386h1v1h-1zM725 386h1v1h-1zM729 386h1v1h-1zM733 386h1v1h-1zM737 386h1v1h-1zM741 386h1v1h-1zM745 386h1v1h-1zM749 386h1v1h-1zM753 386h1v1h-1zM757 386h1v1h-1zM761 386h1v1h-1zM765 386h1v1h-1zM769 386h1v1h-1zM773 386h1v1h-1zM777 386h1v1h-1zM781 386h1v1h-1zM785 386h1v1h-1zM789 386h1v1h-1zM793 386h1v1h-1zM797 386h1v1h-1zM801 386h1v1h-1zM805 386h1v1h-1zM809 386h1v1h-1zM813 386h1v1h-1zM817 386h1v1h-1zM821 386h1v1h-1zM825 386h1v1h-1zM829 386h1v1h-1zM833 386h1v1h-1zM837 386h1v1h-1zM841 386h1v1h-1zM845 386h1v1h-1zM849 386h1v1h-1zM853 386h1v1h-1zM857 386h1v1h-1zM861 386h1v1h-1zM865 386h1v1h-1zM869 386h1v1h-1zM873 386h1v1h-1zM877 386h1v1h-1zM881 386h1v1h-1zM885 386h1v1h-1zM889 386h1v1h-1zM893 386h1v1h-1zM897 386h1v1h-1zM901 386h1v1h-1zM905 386h1v1h-1zM909 386h1v1h-1zM913 386h1v1h-1zM917 386h1v1h-1zM921 386h1v1h-1zM925 386h1v1h-1zM929 386h1v1h-1zM933 386h1v1h-1zM937 386h1v1h-1zM941 386h1v1h-1zM945 386h1v1h-1zM949 386h1v1h-1zM953 386h1v1h-1zM957 386h1v1h-1zM961 386h1v1h-1zM965 386h1v1h-1zM969 386h1v1h-1zM973 386h1v1h-1zM977 386h1v1h-1zM981 386h1v1h-1zM985 386h1v1h-1zM989 386h1v1h-1zM993 386h1v1h-1zM997 386h1v1h-1zM1001 386h1v1h-1zM1005 386h1v1h-1zM1009 386h1v1h-1zM1013 386h1v1h-1zM1017 386h1v1h-1zM1021 386h1v1h-1zM1025 386h1v1h-1zM1029 386h1v1h-1zM1033 386h1v1h-1zM1037 386h1v1h-1zM1041 386h1v1h-1zM1045 386h1v1h-1zM1049 386h1v1h-1zM1053 386h1v1h-1zM1057 386h1v1h-1zM1061 386h1v1h-1zM1065 386h1v1h-1zM1069 386h1v1h-1zM1073 386h1v1h-1zM1077 386h1v1h-1zM1081 386h1v1h-1zM1085 386h1v1h-1zM1089 386h1v1h-1zM1093 386h1v1h-1zM1097 386h1v1h-1zM1101 386h1v1h-1zM1105 386h1v1h-1zM1109 386h1v1h-1zM1113 386h1v1h-1zM1117 386h1v1h-1zM1121 386h1v1h-1zM1125 386h1v1h-1zM1129 386h1v1h-1zM1133 386h1v1h-1zM1137 386h1v1h-1zM1141 386h1v1h-1zM1145 386h1v1h-1zM1149 386h1v1h-1zM1153 386h1v1h-1zM1157 386h1v1h-1zM1161 386h1v1h-1zM1165 386h1v1h-1zM1169 386h1v1h-1zM1173 386h1v1h-1zM1177 386h1v1h-1zM1181 386h1v1h-1zM1185 386h1v1h-1zM1189 386h1v1h-1zM1193 386h1v1h-1zM1197 386h1v1h-1zM1201 386h1v1h-1zM1205 386h1v1h-1zM1209 386h1v1h-1zM1213 386h1v1h-1zM1217 386h1v1h-1zM1221 386h1v1h-1zM1225 386h1v1h-1zM1229 386h1v1h-1zM1233 386h1v1h-1zM1237 386h1v1h-1zM1241 386h1v1h-1zM1245 386h1v1h-1zM1249 386h1v1h-1zM1253 386h1v1h-1zM1257 386h1v1h-1zM1261 386h1v1h-1zM1265 386h1v1h-1z"/>
<path d="M205 63h1v1h-1zM205 67h1v1h-1zM205 71h1v1h-1zM205 75h1v1h-1zM205 79h1v1h-1zM205 83h1v1h-1zM205 87h1v1h-1zM205 91h1v1h-1zM205 95h1v1h-1zM205 99h1v1h-1zM205 103h1v1h-1zM205 107h1v1h-1zM205 111h1v1h-1zM205 115h1v1h-1zM205 119h1v1h-1zM205 123h1v1h-1zM205 127h1v1h-1zM205 131h1v1h-1zM205 135h1v1h-1zM205 139h1v1h-1zM205 143h1v1h-1zM205 147h1v1h-1zM205 151h1v1h-1zM205 155h1v1h-1zM205 159h1v1h-1zM205 163h1v1h-1zM205 167h1v1h-1zM205 171h1v1h-1zM205 175h1v1h-1zM205 179h1v1h-1zM205 183h1v1h-1zM205 187h1v1h-1zM205 191h1v1h-1zM205 195h1v1h-1zM205 199h1v1h-1zM205 203h1v1h-1zM205 207h1v1h-1zM205 211h1v1h-1zM205 215h1v1h-1zM205 219h1v1h-1zM205 223h1v1h-1zM205 227h1v1h-1zM205 231h1v1h-1zM205 235h1v1h-1zM205 239h1v1h-1zM205 243h1v1h-1zM205 247h1v1h-1zM205 251h1v1h-1zM205 255h1v1h-1zM205 259h1v1h-1zM205 263h1v1h-1zM205 267h1v1h-1zM205 271h1v1h-1zM205 275h1v1h-1zM205 279h1v1h-1zM205 283h1v1h-1zM205 287h1v1h-1zM205 291h1v1h-1zM205 295h1v1h-1zM205 299h1v1h-1zM205 303h1v1h-1zM205 307h1v1h-1zM205 311h1v1h-1zM205 315h1v1h-1zM205 319h1v1h-1zM205 323h1v1h-1zM205 327h1v1h-1zM205 331h1v1h-1zM205 335h1v1h-1zM205 339h1v1h-1zM205 343h1v1h-1zM205 347h1v1h-1zM205 351h1v1h-1zM205 355h1v1h-1zM205 359h1v1h-1zM205 363h1v1h-1zM205 367h1v1h-1zM205 371h1v1h-1zM205 375h1v1h-1zM205 379h1v1h-1zM205 383h1v1h-1zM205 387h1v1h-1zM205 391h1v1h-1zM205 395h1v1h-1zM205 399h1v1h-1zM205 403h1v1h-1zM205 407h1v1h-1zM205 411h1v1h-1zM205 415h1v1h-1zM205 419h1v1h-1z"/>
</g>
<g fill="#fff">
<rect x="205" y="49" width="1" height="10"/>
<rect x="205" y="425" width="1" height="10"/>
<rect x="231" y="50" width="1" height="6"/>
<rect x="231" y="429" width="1" height="6"/>
<rect x="258" y="50" width="1" height="6"/>
<rect x="258" y="429" width="1" height="6"/>
<rect x="285" y="50" width="1" height="6"/>
<rect x="285" y="429" width="1" height="6"/>
<rect x="312" y="50" width="1" height="6"/>
<rect x="312" y="429" width="1" height="6"/>
<rect x="339" y="50" width="1" height="6"/>
<rect x="339" y="429" width="1" height="6"/>
<rect x="366" y="50" width="1" height="6"/>
<rect x="366" y="429" width="1" height="6"/>
<rect x="392" y="50" width="1" height="6"/>
<rect x="392" y="429" width="1" height="6"/>
<rect x="419" y="50" width="1" height="6"/>
<rect x="419" y="429" width="1" height="6"/>
<rect x="446" y="50" width="1" height="6"/>
<rect x="446" y="429" width="1" height="6"/>
<rect x="473" y="49" width="1" height="10"/>
<rect x="473" y="425" width="1" height="10"/>
<rect x="500" y="50" width="1" height="6"/>
<rect x="500" y="429" width="1" height="6"/>
<rect x="527" y="50" width="1" height="6"/>
<rect x="527" y="429" width="1" height="6"/>
<rect x="554" y="50" width="1" height="6"/>
<rect x="554" y="429" width="1" height="6"/>
<rect x="581" y="50" width="1" height="6"/>
<rect x="581" y="429" width="1" height="6"/>
<rect x="608" y="50" width="1" height="6"/>
<rect x="608" y="429" width="1" height="6"/>
<rect x="635" y="50" width="1" height="6"/>
<rect x="635" y="429" width="1" height="6"/>
<rect x="661" y="50" width="1" height="6"/>
<rect x="661" y="429" width="1" height="6"/>
<rect x="688" y="50" width="1" height="6"/>
<rect x="688" y="429" width="1" height="6"/>
<rect x="715" y="50" width="1" height="6"/>
<rect x="715" y="429" width="1" height="6"/>
<rect x="742" y="49" width="1" height="10"/>
<rect x="742" y="425" width="1" height="10"/>
<rect x="769" y="50" width="1" height="6"/>
<rect x="769" y="429" width="1" height="6"/>
<rect x="796" y="50" width="1" height="6"/>
<rect x="796" y="429" width="1" height="6"/>
<rect x="823" y="50" width="1" height="6"/>
<rect x="823" y="429" width="1" height="6"/>
<rect x="850" y="50" width="1" height="6"/>
<rect x="850" y="429" width="1" height="6"/>
<rect x="877" y="50" width="1" height="6"/>
<rect x="877" y="429" width="1" height="6"/>
<rect x="904" y="50" width="1" height="6"/>
<rect x="904" y="429" width="1" height="6"/>
<rect x="930" y="50" width="1" height="6"/>
<rect x="930" y="429" width="1" height="6"/>
<rect x="957" y="50" width="1" height="6"/>
<rect x="957" y="429" width="1" height="6"/>
<rect x="984" y="50" width="1" height="6"/>
<rect x="984" y="429" width="1" height="6"/>
<rect x="1011" y="49" width="1" height="10"/>
<rect x="1011" y="425" width="1" height="10"/>
<rect x="1038" y="50" width="1" height="6"/>
<rect x="1038" y="429" width="1" height="6"/>
<rect x="1065" y="50" width="1" height="6"/>
<rect x="1065" y="429" width="1" height="6"/>
<rect x="1092" y="50" width="1" height="6"/>
<rect x="1092" y="429" width="1" height="6"/>
<rect x="1119" y="50" width="1" height="6"/>
<rect x="1119" y="429" width="1" height="6"/>
<rect x="1146" y="50" width="1" height="6"/>
<rect x="1146" y="429" width="1" height="6"/>
<rect x="1173" y="50" width="1" height="6"/>
<rect x="1173" y="429" width="1" height="6"/>
<rect x="1199" y="50" width="1" height="6"/>
<rect x="1199" y="429" width="1" height="6"/>
<rect x="1226" y="50" width="1" height="6"/>
<rect x="1226" y="429" width="1" height="6"/>
<rect x="1253" y="50" width="1" height="6"/>
<rect x="1253" y="429" width="1" height="6"/>
<rect x="1281" y="49" width="1" height="10"/>
<rect x="1281" y="425" width="1" height="10"/>
<rect x="205" y="49" width="10" height="1"/>
<rect x="1270" y="49" width="12" height="1"/>
<rect x="205" y="97" width="10" height="1"/>
<rect x="1270" y="97" width="12" height="1"/>
<rect x="205" y="145" width="10" height="1"/>
<rect x="1270" y="145" width="12" height="1"/>
<rect x="205" y="193" width="10" height="1"/>
<rect x="1270" y="193" width="12" height="1"/>
<rect x="205" y="241" width="10" height="1"/>
<rect x="1270" y="241" width="12" height="1"/>
<rect x="205" y="289" width="10" height="1"/>
<rect x="1270" y="289" width="12" height="1"/>
<rect x="205" y="337" width="10" height="1"/>
<rect x="1270" y="337" width="12" height="1"/>
<rect x="205" y="386" width="10" height="1"/>
<rect x="1270" y="386" width="12" height="1"/>
<rect x="205" y="434" width="10" height="1"/>
<rect x="1270" y="434" width="12" height="1"/>
</g>
<path d="M205 370H206V371H208V370H210V372H211V370H213V373H214V372H215V371H217V372H218V371H220V373H221V372H223V373H224V372H225V373H226V371H227V372H231V371H232V373H234V371H235V372H237V371H238V374H239V372H241V373H242V372H243V374H244V372H245V371H246V372H248V373H249V374H250V373H251V372H252V371H253V372H254V374H255V373H257V371H259V374H260V373H261V372H263V371H264V372H265V371H266V374H267V372H268V371H269V373H270V372H271V371H272V373H273V374H274V371H275V373H276V371H279V372H280V373H281V372H282V373H283V371H284V372H285V371H286V374H288V372H291V373H292V371H294V372H295V371H296V373H298V372H300V373H303V371H304V372H305V371H306V372H307V373H309V372H310V370H311V371H312V370H313V373H314V370H315V371H317V370H318V372H319V371H320V370H321V371H322V370H323V371H324V370H325V369H326V370H327V371H329V370H330V371H331V370H332V369H335V371H336V368H338V369H339V370H341V369H342V367H343V369H344V368H345V366H346V367H347V365H348V366H350V365H352V363H353V364H354V362H356V364H359V366H362V368H363V367H364V369H365V368H366V370H368V371H371V370H372V373H373V370H374V371H375V372H376V370H377V371H378V373H381V374H382V373H383V372H384V373H385V372H386V374H387V373H388V372H389V375H390V374H393V375H394V374H396V373H397V375H398V376H399V375H400V376H401V375H402V376H403V374H404V376H405V374H406V373H407V375H409V374H410V376H411V374H412V375H413V374H414V375H416V373H417V375H418V376H419V373H422V374H423V376H424V373H425V376H426V374H427V373H428V374H429V373H430V375H431V374H434V375H436V374H438V375H439V376H440V373H442V374H444V373H447V374H448V375H449V374H450V373H452V374H453V375H455V373H456V375H458V374H459V375H460V373H462V374H463V373H464V374H465V375H467V374H468V373H469V375H472V374H474V373H477V374H478V373H479V374H481V373H482V375H483V373H486V375H487V374H488V373H490V374H491V373H492V372H494V373H495V374H497V375H501V374H503V373H505V372H506V375H507V373H508V372H509V374H511V373H513V374H514V373H515V372H516V374H518V375H519V373H520V375H521V372H523V374H524V373H525V372H526V373H529V374H530V375H531V373H533V374H534V372H535V373H538V372H539V374H541V375H543V373H544V374H546V373H547V375H552V373H553V372H554V373H555V374H559V375H560V373H561V374H562V373H564V375H565V374H567V373H568V375H569V373H573V375H574V373H575V375H576V373H578V374H579V373H580V374H581V373H582V374H583V373H585V375H586V373H588V374H589V375H590V373H592V374H593V375H594V374H595V373H597V375H598V374H599V375H601V373H603V375H604V374H607V373H609V374H612V375H614V373H616V375H617V373H618V374H619V372H620V373H621V374H623V375H624V372H625V374H627V372H628V374H630V375H631V372H632V373H634V374H636V373H640V374H641V373H643V372H645V375H646V373H647V374H648V373H649V375H650V372H651V374H653V373H654V374H656V373H658V372H660V374H661V373H662V374H663V372H664V374H668V372H674V371H675V374H676V372H677V373H680V374H681V372H682V373H683V371H684V372H688V373H689V372H691V374H692V371H695V374H696V373H698V374H699V372H700V374H701V372H703V373H705V371H706V372H707V371H709V373H711V372H712V373H714V371H715V373H716V372H717V371H718V372H722V370H723V372H724V373H725V372H726V373H727V371H728V372H729V370H730V372H731V371H732V372H733V370H734V371H735V372H736V371H738V372H739V401H738V400H736V401H735V402H733V400H732V402H731V401H730V402H728V401H727V400H726V402H725V403H724V401H720V402H719V401H717V403H716V402H715V403H713V402H711V404H710V401H708V402H707V404H706V402H701V404H700V401H699V402H698V404H697V402H696V403H695V404H694V403H689V402H688V403H686V404H685V402H684V404H683V403H681V402H680V405H679V403H678V402H677V404H676V403H674V402H672V404H671V403H670V404H669V405H668V404H667V402H665V404H663V403H662V404H661V402H660V404H657V403H656V404H655V403H654V405H653V403H652V404H651V403H649V404H648V403H647V402H645V403H644V404H643V402H642V404H640V403H639V404H635V403H634V404H629V405H627V403H626V405H625V404H624V403H623V405H621V403H620V404H619V405H618V403H616V405H614V404H612V402H611V405H610V404H609V405H608V403H607V404H604V403H603V405H600V403H599V404H596V403H595V405H594V404H593V405H592V404H591V403H590V404H589V403H588V405H587V404H586V405H585V403H584V404H582V405H577V404H576V403H574V405H573V403H572V404H571V403H570V404H569V403H567V404H565V405H564V404H563V405H561V404H560V405H559V406H558V403H555V405H554V406H552V404H551V403H550V406H549V405H548V403H547V405H546V404H545V406H544V405H542V403H541V404H540V405H534V404H533V403H532V404H531V405H530V404H529V403H528V404H527V403H525V404H523V403H522V404H520V403H519V404H518V405H516V404H515V403H513V405H512V404H509V405H507V402H506V404H505V403H504V404H500V403H499V405H498V403H496V404H493V403H492V404H491V403H489V404H487V403H483V404H479V403H477V404H476V403H475V404H474V403H473V405H472V403H471V404H469V403H467V404H466V403H463V405H462V404H461V403H460V404H458V403H457V405H456V404H454V405H453V404H451V405H450V403H449V406H448V405H447V406H446V404H445V405H444V404H443V406H442V403H441V405H438V403H437V405H435V404H434V403H433V404H430V405H429V404H428V405H427V404H426V403H423V404H422V403H421V404H419V406H418V405H415V404H410V405H408V404H407V405H406V406H404V404H403V405H402V406H401V405H400V404H399V406H398V404H397V403H396V405H394V403H393V404H392V403H391V404H390V405H389V403H388V405H387V403H386V402H385V404H382V402H380V403H377V402H376V403H375V401H374V402H371V401H368V399H366V398H365V400H364V397H363V399H362V396H361V397H360V396H359V394H356V395H355V392H354V394H351V396H350V395H349V396H346V399H344V398H343V400H341V398H339V399H337V400H336V399H335V400H333V401H332V399H331V401H330V400H329V402H328V400H327V402H323V400H322V401H320V402H318V403H317V400H316V401H313V402H312V401H311V402H310V403H309V402H308V403H306V402H304V401H302V403H301V402H300V403H298V402H297V401H296V403H295V402H293V401H291V402H290V403H289V404H288V402H285V401H284V402H282V403H280V402H278V401H277V402H274V401H273V402H272V404H271V403H269V402H268V403H267V402H263V403H261V401H260V403H259V404H258V402H257V404H256V402H254V403H253V404H252V403H251V404H247V403H246V402H243V403H242V402H241V403H240V404H239V402H238V403H237V404H235V403H234V404H232V403H231V401H230V402H229V403H228V401H227V403H226V402H225V403H224V401H222V403H221V401H218V403H217V401H216V402H213V401H212V400H211V401H210V402H209V403H208V401H207V400H205ZM747 369H748V371H749V369H750V371H751V370H752V369H753V371H758V372H759V371H760V372H761V369H763V372H764V370H765V372H767V371H768V370H769V371H772V369H773V402H771V400H768V402H767V400H766V401H765V399H763V402H761V400H760V401H758V400H755V402H753V400H750V401H748V400H747ZM792 371H794V372H795V370H796V371H797V369H799V371H800V372H803V370H805V372H806V371H807V369H809V370H810V400H809V402H807V400H806V399H805V400H804V399H803V401H801V400H800V401H797V400H796V401H794V402H793V400H792ZM827 370H829V369H830V370H831V371H832V370H834V369H835V368H836V369H838V368H839V370H840V371H841V370H844V369H846V370H847V369H848V368H850V369H851V370H852V368H853V369H854V370H855V368H856V370H857V369H858V370H859V367H860V368H861V369H862V368H863V369H865V398H864V400H863V398H861V399H860V400H859V398H858V399H857V398H856V400H855V399H854V400H853V398H852V399H851V398H850V400H849V399H848V398H847V399H846V401H844V399H843V398H842V399H841V401H840V399H839V401H837V399H836V401H835V400H833V399H832V400H831V399H829V400H827ZM871 370H873V369H874V367H875V368H876V369H877V368H879V367H881V370H882V368H883V367H884V368H885V369H888V368H889V370H890V369H891V367H892V369H895V368H899V397H898V399H897V397H896V399H895V398H894V397H893V398H892V399H891V398H890V400H889V399H887V400H885V399H884V398H883V399H881V398H880V399H878V398H877V397H876V400H874V398H872V400H871ZM925 369H926V367H929V369H931V368H932V366H933V367H934V397H933V399H932V400H931V398H930V399H929V398H926V400H925ZM943 367H944V369H946V367H947V366H948V368H949V369H950V367H951V369H952V368H953V369H954V367H956V369H957V367H958V370H959V367H961V368H962V370H963V368H964V367H966V369H967V367H968V370H971V368H973V370H975V369H976V370H980V369H982V370H983V368H984V370H986V368H989V371H990V370H991V371H992V369H996V368H997V370H998V369H999V371H1000V369H1001V370H1002V369H1003V371H1004V369H1005V370H1006V371H1009V370H1010V369H1012V371H1013V401H1012V400H1010V401H1009V399H1008V401H1007V402H1006V399H1004V400H1003V402H1002V401H1001V400H1000V401H998V400H997V399H996V401H995V400H993V401H992V399H991V400H990V399H989V400H986V399H984V398H983V400H982V399H980V398H978V400H977V399H976V398H975V400H974V399H973V398H972V400H970V399H969V400H968V398H967V399H966V398H964V399H962V400H960V398H958V397H957V399H956V398H954V399H953V400H951V399H950V398H949V399H948V397H945V398H944V399H943ZM1084 372H1085V371H1087V372H1088V370H1089V372H1090V370H1091V372H1094V370H1095V371H1096V372H1097V371H1098V372H1099V370H1101V369H1102V371H1103V372H1104V370H1105V372H1106V370H1107V371H1108V370H1109V369H1110V371H1111V370H1112V372H1113V371H1114V372H1115V370H1116V371H1117V372H1118V369H1119V370H1120V371H1122V369H1123V370H1124V369H1125V370H1126V369H1127V371H1128V369H1129V371H1132V369H1134V370H1135V369H1136V370H1137V368H1138V369H1139V371H1140V369H1141V371H1143V370H1144V371H1145V370H1146V368H1147V369H1151V370H1152V369H1153V370H1154V368H1156V369H1158V368H1159V369H1160V370H1162V368H1163V371H1164V370H1166V369H1170V370H1172V372H1173V371H1174V369H1175V370H1176V371H1178V370H1179V371H1180V370H1181V371H1182V373H1183V371H1184V370H1185V371H1187V373H1188V372H1189V371H1190V373H1192V372H1194V371H1195V373H1196V401H1195V402H1194V403H1192V402H1190V403H1189V401H1188V403H1187V402H1186V401H1185V403H1184V400H1181V401H1180V402H1179V401H1178V402H1177V400H1176V401H1175V402H1174V400H1173V399H1172V401H1171V399H1170V401H1165V400H1163V401H1162V400H1161V401H1160V398H1159V399H1158V400H1156V399H1154V398H1153V399H1150V401H1148V399H1146V398H1145V399H1143V400H1142V399H1141V401H1140V400H1139V401H1136V399H1133V402H1132V399H1131V400H1130V399H1129V401H1128V400H1126V402H1124V400H1122V399H1121V400H1119V401H1118V400H1117V402H1116V400H1115V402H1113V401H1112V400H1109V401H1108V400H1107V402H1106V401H1105V400H1103V402H1102V401H1101V400H1100V402H1098V401H1097V400H1095V402H1093V401H1091V402H1089V401H1087V400H1086V403H1085V400H1084ZM1238 377H1240V376H1241V375H1243V376H1244V374H1245V375H1246V377H1247V375H1250V374H1251V375H1252V376H1255V375H1256V377H1258V376H1261V377H1262V376H1263V375H1266V374H1267V376H1269V377H1270V375H1272V377H1275V375H1281V406H1279V407H1278V406H1275V407H1273V405H1272V406H1270V405H1268V407H1267V406H1265V408H1264V407H1263V406H1262V405H1261V408H1260V406H1259V407H1258V405H1257V406H1256V407H1255V405H1254V406H1253V407H1251V405H1250V406H1249V407H1248V406H1246V408H1245V407H1244V406H1242V407H1240V406H1238Z" fill="#00b4d0"/>
<path d="M205 375H206V374H207V375H209V374H212V375H215V374H217V376H218V374H219V375H221V374H222V375H224V376H228V375H229V376H231V375H232V376H233V375H234V376H235V375H237V376H239V377H240V376H245V377H246V376H247V377H248V375H249V376H250V377H251V376H253V377H254V376H257V377H259V376H260V375H261V376H262V375H263V376H264V377H265V375H267V376H272V377H273V376H274V375H275V376H279V375H280V376H287V375H290V376H301V375H303V376H304V375H308V374H309V376H310V375H312V376H313V375H318V374H320V375H322V374H326V375H327V374H333V373H335V372H336V373H338V372H341V371H342V372H344V371H346V370H347V369H349V368H352V366H355V367H357V368H358V369H361V371H362V370H363V372H366V373H368V374H370V375H375V376H376V375H378V376H379V375H380V376H384V377H388V376H389V377H390V378H391V377H396V379H397V378H399V379H401V378H410V379H411V378H417V377H418V379H419V378H420V377H421V379H422V377H423V378H425V377H426V378H429V377H430V378H433V377H435V378H436V377H437V378H440V377H441V378H442V377H444V378H445V377H446V378H448V377H449V378H450V377H451V378H452V377H454V378H455V377H457V378H458V377H462V378H464V377H469V378H470V377H474V376H475V378H477V377H478V378H479V377H484V376H485V378H486V377H490V378H491V377H493V376H495V377H499V378H500V377H502V378H507V377H508V378H509V376H510V378H511V377H515V378H518V377H521V378H522V376H523V377H525V378H527V377H528V378H529V377H530V378H531V377H537V378H539V377H545V378H546V377H547V378H548V377H555V378H556V377H558V378H559V377H561V378H562V377H563V378H565V377H568V378H570V377H575V378H581V377H582V378H583V377H585V378H586V377H588V378H589V377H593V378H594V377H595V378H596V377H597V378H599V377H600V378H601V377H604V376H605V377H607V378H609V377H610V378H611V377H614V378H615V377H616V376H617V378H618V377H620V376H621V377H627V376H628V377H636V376H637V377H639V376H640V377H643V376H645V377H647V376H649V377H652V376H653V377H655V376H658V377H659V376H661V377H664V376H665V377H666V376H667V377H671V376H674V377H675V376H677V375H678V376H689V375H690V377H691V376H694V375H695V377H698V376H699V377H700V376H702V375H703V376H710V375H714V376H715V375H717V376H718V374H719V375H721V374H722V375H727V374H729V375H730V374H732V375H733V374H734V375H735V374H737V373H738V374H739V400H738V399H736V400H724V401H722V400H721V401H720V400H717V401H705V402H704V401H701V402H700V401H697V402H695V401H694V402H693V401H689V402H688V401H685V402H681V401H680V402H677V401H676V402H672V401H671V402H668V401H667V402H665V401H664V402H659V401H658V402H657V403H656V402H654V403H653V402H647V401H646V402H638V403H637V402H633V403H632V402H622V403H621V402H617V403H615V402H613V403H612V402H611V403H610V402H607V403H604V402H602V403H599V402H598V403H597V402H596V403H595V402H593V403H591V402H589V403H588V402H587V403H584V402H583V403H578V402H577V403H570V402H569V403H566V402H562V403H559V402H558V403H556V402H555V403H554V402H553V403H552V402H551V403H549V402H548V403H543V402H541V403H539V402H538V403H537V402H535V403H534V402H533V403H532V402H531V403H527V402H526V403H522V402H520V403H519V402H518V403H517V402H514V403H512V402H511V403H508V402H504V403H502V402H501V403H500V402H499V403H497V402H495V403H494V402H493V403H492V402H489V403H488V402H486V403H483V402H481V403H480V402H479V403H478V402H477V403H476V402H474V403H473V402H471V403H469V402H468V403H467V402H463V403H453V402H452V403H439V404H438V403H433V404H431V403H420V404H419V403H417V404H416V403H415V404H414V403H411V404H404V403H403V404H399V403H391V402H384V401H383V402H382V401H378V400H376V401H375V400H374V401H373V399H372V400H369V399H367V398H365V397H362V396H361V394H358V393H357V392H352V393H350V394H348V395H346V397H345V396H344V397H339V398H338V397H337V398H336V399H333V398H332V399H331V400H319V401H318V400H314V401H313V400H311V401H302V400H300V401H281V402H280V401H273V402H272V401H270V402H264V401H263V402H261V401H260V402H258V401H257V402H255V401H253V402H252V401H251V402H250V401H248V402H246V401H245V402H241V401H234V402H233V401H230V400H229V401H225V400H224V401H222V400H221V401H219V400H208V399H207V400H205ZM747 374H748V375H749V374H752V375H753V374H756V375H758V374H759V373H760V374H761V375H762V374H764V373H765V374H771V375H772V374H773V399H767V400H766V399H763V400H761V399H760V400H758V399H757V400H756V399H755V400H754V399H753V400H751V399H749V400H748V399H747ZM792 375H793V374H795V375H796V374H799V373H800V374H803V373H804V374H807V373H810V399H808V400H807V399H805V400H804V399H800V400H799V399H796V400H792ZM827 373H829V374H830V373H831V372H833V374H834V373H836V372H837V373H840V372H841V373H844V372H845V373H846V372H847V373H850V372H851V373H858V372H859V373H860V372H861V373H862V372H865V397H860V398H858V397H854V398H840V399H839V398H837V399H834V398H832V399H828V398H827ZM871 373H872V372H877V373H878V371H879V372H880V371H881V372H884V373H885V371H886V372H887V371H889V372H892V371H893V372H894V371H895V372H896V371H897V372H899V397H895V398H894V397H893V398H892V397H884V398H883V397H882V398H878V397H875V398H873V397H871ZM925 372H926V371H930V372H931V371H933V372H934V397H927V396H926V397H925ZM943 371H948V372H949V371H951V372H952V371H955V372H959V371H960V372H962V371H963V373H964V371H965V372H967V373H969V372H973V373H974V372H975V373H976V372H981V373H985V372H988V373H990V372H992V373H998V374H999V373H1000V374H1001V373H1005V374H1006V373H1007V374H1008V373H1010V374H1013V399H1009V398H1008V399H1007V398H1006V399H1001V398H1000V399H998V398H997V399H996V398H995V399H991V398H989V399H988V398H986V399H985V398H982V397H981V398H979V397H978V398H977V397H975V398H969V397H964V398H963V397H957V398H956V397H950V396H949V397H947V396H946V397H945V396H944V397H943ZM1084 375H1085V374H1086V375H1087V374H1088V375H1090V374H1091V375H1092V374H1093V375H1094V374H1096V375H1098V374H1100V375H1101V374H1104V375H1106V374H1107V375H1108V374H1110V373H1111V374H1112V373H1113V374H1115V373H1116V375H1117V374H1118V373H1120V374H1121V373H1123V374H1126V373H1131V374H1133V373H1136V374H1138V373H1139V374H1140V373H1141V372H1142V373H1147V372H1149V373H1152V374H1154V373H1155V372H1156V373H1162V372H1163V373H1164V372H1166V373H1169V374H1170V373H1171V374H1173V373H1174V375H1176V374H1178V375H1180V374H1182V375H1183V374H1184V375H1185V376H1188V375H1191V376H1194V375H1195V376H1196V401H1193V402H1192V401H1189V400H1186V401H1185V400H1176V399H1175V400H1174V399H1167V398H1166V399H1162V398H1157V399H1156V398H1149V399H1148V398H1144V399H1143V398H1141V399H1138V398H1137V399H1135V398H1133V399H1127V398H1126V399H1125V400H1124V399H1117V400H1116V399H1109V400H1108V399H1107V400H1101V399H1099V400H1096V399H1093V400H1092V399H1091V400H1084ZM1238 380H1240V379H1242V380H1244V379H1246V380H1247V379H1248V380H1250V379H1251V380H1252V379H1256V380H1257V379H1258V380H1259V379H1263V380H1266V379H1270V380H1271V379H1272V380H1274V379H1276V380H1277V379H1281V405H1280V404H1279V405H1278V404H1277V405H1273V404H1270V405H1268V404H1267V405H1264V404H1262V405H1261V404H1258V405H1257V404H1255V405H1250V404H1249V405H1247V404H1246V405H1242V404H1240V405H1239V404H1238Z" fill="#00d278"/>
<path d="M205 377H212V376H214V377H221V378H223V377H227V378H228V377H229V378H231V377H232V378H236V377H237V378H243V379H246V378H249V379H250V378H254V379H255V378H273V377H274V378H282V377H283V378H285V377H286V378H290V377H291V378H302V377H307V378H308V377H309V378H310V377H320V376H321V377H323V376H324V377H326V376H327V377H328V376H334V375H337V374H342V373H343V374H344V373H345V372H349V371H350V370H352V369H353V368H354V369H355V368H356V370H359V371H361V372H362V373H363V374H364V373H365V374H366V375H368V377H369V376H370V377H376V378H377V377H381V378H386V379H391V380H392V379H393V380H394V379H395V380H396V379H397V380H404V381H405V380H416V381H417V380H424V379H425V380H433V379H436V380H439V379H440V380H445V379H446V380H447V379H449V380H451V379H452V380H453V379H455V380H457V379H458V380H459V379H461V380H462V379H464V380H465V379H469V380H470V379H500V380H501V379H517V380H518V379H520V380H521V379H524V380H525V379H526V380H527V379H532V380H533V379H539V380H540V379H542V380H543V379H545V380H546V379H547V380H548V379H556V380H557V379H558V380H559V379H562V380H563V379H566V380H567V379H569V380H571V379H573V380H574V379H576V380H578V379H580V380H582V379H584V380H585V379H588V380H589V379H591V380H593V379H594V380H595V379H599V380H601V379H634V378H635V379H642V378H643V379H644V378H645V379H647V378H648V379H652V378H653V379H654V378H657V379H659V378H662V379H666V378H668V379H669V378H674V379H675V378H676V379H677V378H689V379H690V378H691V379H692V378H693V379H694V378H702V377H704V378H707V377H708V378H710V377H711V378H713V377H714V378H715V377H726V376H727V377H730V376H731V377H732V376H739V398H738V399H736V398H730V399H729V398H728V399H713V400H712V399H708V400H706V399H704V400H703V399H702V400H701V401H700V400H687V401H686V400H683V401H681V400H679V401H678V400H676V401H675V400H674V401H672V400H671V401H670V400H669V401H667V400H665V401H664V400H663V401H662V400H661V401H656V400H655V401H654V400H652V401H650V400H649V401H647V400H645V401H615V402H614V401H607V402H606V401H605V402H604V401H600V402H599V401H596V402H594V401H593V402H591V401H587V402H584V401H580V402H579V401H576V402H575V401H574V402H569V401H568V402H566V401H565V402H564V401H563V402H561V401H558V402H555V401H553V402H552V401H548V402H546V401H544V402H542V401H539V402H537V401H536V402H534V401H532V402H530V401H528V402H527V401H521V402H520V401H517V402H515V401H509V402H505V401H491V402H489V401H485V402H484V401H475V402H474V401H466V402H463V401H457V402H451V401H450V402H447V401H446V402H413V403H411V402H409V403H406V402H401V403H400V402H394V401H392V402H390V401H388V400H379V399H377V400H376V399H374V398H373V399H370V398H369V399H368V398H367V397H366V396H363V395H362V394H360V393H358V392H356V391H355V390H354V391H352V392H350V393H348V394H346V395H344V396H342V395H341V396H339V397H338V396H337V397H334V398H326V399H325V398H324V399H322V398H321V399H320V398H319V399H308V400H307V399H303V400H302V399H301V400H300V399H298V400H295V399H294V400H293V399H289V400H268V401H267V400H264V401H263V400H257V401H256V400H253V401H252V400H245V401H243V400H234V399H232V400H228V399H226V400H222V399H208V398H205ZM747 376H773V398H768V399H767V398H766V399H765V398H755V399H754V398H753V399H752V398H747ZM792 376H803V375H805V376H808V375H809V376H810V397H809V398H792ZM827 375H845V374H846V375H848V374H849V375H851V374H854V375H855V374H863V375H864V374H865V396H864V397H862V396H860V397H858V396H857V397H854V396H853V397H851V396H849V397H827ZM871 374H879V373H880V374H888V373H889V374H891V373H892V374H893V373H894V374H896V373H897V374H899V396H892V395H891V396H884V395H883V396H874V397H873V396H871ZM925 373H927V374H930V373H932V374H933V373H934V395H932V396H929V395H925ZM943 374H944V373H946V374H947V373H948V374H949V373H954V374H955V373H956V374H957V373H958V374H960V373H961V374H969V375H970V374H972V375H973V374H976V375H980V374H981V375H983V374H984V375H998V376H1000V375H1001V376H1002V375H1007V376H1010V375H1011V376H1012V375H1013V398H1011V397H1010V398H1008V397H1007V398H1005V397H1004V398H1002V397H1000V398H998V397H997V398H996V397H995V398H994V397H981V396H980V397H978V396H974V397H972V396H970V397H969V396H968V397H967V396H959V395H956V396H954V395H951V396H950V395H943ZM1084 377H1085V376H1086V377H1087V376H1089V377H1090V376H1092V377H1094V376H1099V377H1100V376H1116V375H1117V376H1119V375H1121V376H1122V375H1123V376H1124V375H1127V376H1129V375H1130V376H1131V375H1133V376H1134V375H1151V374H1152V375H1154V374H1156V375H1157V374H1158V375H1160V374H1162V375H1164V376H1165V375H1167V376H1168V375H1170V376H1175V377H1176V376H1178V377H1189V378H1191V377H1192V378H1196V400H1192V399H1191V400H1190V399H1189V400H1188V399H1180V398H1179V399H1178V398H1177V399H1176V398H1167V397H1161V396H1159V397H1139V398H1138V397H1137V398H1136V397H1135V398H1133V397H1132V398H1130V397H1127V398H1125V397H1124V398H1122V397H1118V398H1102V399H1101V398H1100V399H1098V398H1097V399H1096V398H1095V399H1093V398H1090V399H1088V398H1087V399H1086V398H1085V399H1084ZM1238 381H1240V382H1241V381H1243V382H1244V381H1245V382H1247V381H1250V382H1251V381H1254V382H1255V381H1259V382H1263V381H1267V382H1268V381H1269V382H1270V381H1279V382H1280V381H1281V404H1280V403H1279V404H1278V403H1277V404H1276V403H1274V404H1273V403H1271V404H1269V403H1263V404H1262V403H1261V404H1260V403H1254V404H1253V403H1252V404H1250V403H1249V404H1247V403H1246V404H1245V403H1243V404H1242V403H1238Z" fill="#10f000"/>
<path d="M205 379H211V380H212V379H214V380H215V379H217V380H229V381H230V380H233V381H234V380H236V381H237V380H238V381H241V380H242V381H263V380H264V381H267V380H270V381H273V380H275V381H276V380H277V381H278V380H283V381H284V380H285V381H286V380H288V381H289V380H292V381H293V380H313V379H316V380H317V379H331V378H336V377H340V376H346V375H348V374H350V372H353V371H355V372H358V373H359V374H361V375H363V376H365V377H366V378H368V379H374V380H375V379H376V380H380V381H388V382H396V383H397V382H398V383H417V382H418V383H419V382H420V383H424V382H426V383H427V382H431V383H433V382H435V383H437V382H443V383H444V382H445V383H447V382H449V383H450V382H477V381H480V382H485V381H486V382H494V381H495V382H615V381H616V382H623V381H624V382H626V381H627V382H628V381H629V382H632V381H636V382H639V381H641V382H642V381H648V382H649V381H653V382H654V381H699V380H700V381H702V380H706V381H708V380H719V379H720V380H721V379H722V380H724V379H725V380H726V379H739V396H737V397H736V396H734V397H733V396H731V397H716V398H714V397H713V398H712V397H711V398H696V399H695V398H692V399H691V398H690V399H689V398H688V399H687V398H685V399H684V398H682V399H680V398H678V399H670V398H669V399H665V398H664V399H613V400H611V399H607V400H606V399H605V400H604V399H601V400H600V399H599V400H596V399H593V400H592V399H590V400H587V399H585V400H575V399H574V400H573V399H572V400H570V399H568V400H564V399H563V400H561V399H560V400H559V399H558V400H556V399H555V400H550V399H548V400H547V399H546V400H543V399H539V400H536V399H535V400H532V399H529V400H525V399H524V400H522V399H521V400H518V399H517V400H516V399H515V400H514V399H511V400H509V399H508V400H506V399H505V400H504V399H501V400H500V399H497V400H495V399H490V400H489V399H479V400H478V399H476V400H475V399H471V400H469V399H466V400H465V399H461V400H459V399H458V400H446V399H445V400H416V401H415V400H405V401H404V400H401V401H398V400H393V399H385V398H377V397H373V396H372V397H371V396H367V395H365V394H363V393H362V392H360V391H359V390H356V389H354V388H353V389H352V390H350V391H348V392H347V393H345V394H339V395H334V396H329V397H328V396H324V397H308V398H306V397H304V398H301V397H300V398H262V399H260V398H249V399H248V398H247V399H246V398H245V399H243V398H241V399H239V398H224V397H223V398H222V397H205ZM747 379H750V378H751V379H765V378H767V379H769V378H770V379H773V396H759V397H758V396H747ZM792 379H793V378H795V379H796V378H798V379H801V378H802V379H803V378H804V379H806V378H808V379H809V378H810V396H799V397H798V396H794V397H793V396H792ZM827 378H835V377H836V378H837V377H838V378H839V377H842V378H846V377H865V395H864V394H863V395H860V394H859V395H856V394H855V395H852V394H851V395H835V396H833V395H829V396H827ZM871 377H872V376H873V377H874V376H880V377H884V376H885V377H887V376H888V377H889V376H890V377H896V376H899V394H871ZM925 376H934V393H933V394H929V393H928V394H927V393H926V394H925ZM943 376H956V377H957V376H958V377H960V376H963V377H964V376H965V377H968V376H969V377H982V378H983V377H985V378H987V377H989V378H992V377H994V378H1009V379H1011V378H1013V396H1006V395H1001V396H999V395H974V394H949V393H948V394H946V393H945V394H944V393H943ZM1084 379H1086V380H1087V379H1088V380H1089V379H1109V378H1110V379H1118V378H1125V379H1126V378H1144V377H1145V378H1148V377H1149V378H1153V377H1157V378H1158V377H1162V378H1170V379H1171V378H1172V379H1173V378H1174V379H1183V380H1184V379H1185V380H1192V381H1196V398H1191V397H1188V398H1185V397H1176V396H1167V395H1143V396H1142V395H1140V396H1137V395H1135V396H1133V395H1132V396H1126V395H1125V396H1105V397H1101V396H1095V397H1093V396H1092V397H1084ZM1238 384H1281V402H1280V401H1279V402H1278V401H1277V402H1274V401H1271V402H1269V401H1264V402H1261V401H1259V402H1257V401H1256V402H1255V401H1253V402H1252V401H1251V402H1248V401H1244V402H1243V401H1242V402H1240V401H1238Z" fill="#a8f800"/>
<path d="M205 380H215V381H218V380H220V381H221V380H222V381H223V380H224V381H236V382H237V381H239V382H242V381H243V382H249V381H250V382H262V381H263V382H266V381H268V382H270V381H276V382H277V381H308V380H309V381H310V380H312V381H314V380H316V381H317V380H330V379H336V378H341V377H344V376H347V375H349V374H350V373H352V372H354V371H355V373H357V374H360V375H361V376H363V377H365V378H366V379H369V380H374V381H381V382H382V381H383V382H389V383H391V382H392V383H397V384H419V383H465V382H466V383H472V382H473V383H474V382H475V383H479V382H480V383H482V382H483V383H488V382H490V383H501V382H502V383H503V382H504V383H508V382H510V383H511V382H513V383H518V382H519V383H527V382H528V383H603V382H604V383H606V382H608V383H609V382H611V383H612V382H614V383H623V382H624V383H628V382H630V383H631V382H632V383H633V382H639V383H640V382H686V381H687V382H698V381H699V382H700V381H701V382H702V381H718V380H719V381H720V380H721V381H722V380H724V381H725V380H738V379H739V395H734V396H733V395H732V396H731V395H730V396H729V395H728V396H715V397H714V396H710V397H679V398H678V397H677V398H675V397H674V398H671V397H670V398H668V397H667V398H665V397H664V398H663V397H662V398H661V397H660V398H656V397H655V398H648V397H647V398H600V399H597V398H596V399H595V398H593V399H591V398H590V399H589V398H587V399H586V398H583V399H582V398H581V399H579V398H578V399H576V398H574V399H569V398H567V399H566V398H565V399H563V398H562V399H561V398H556V399H555V398H549V399H548V398H547V399H544V398H539V399H536V398H534V399H533V398H531V399H529V398H524V399H523V398H520V399H519V398H518V399H517V398H512V399H511V398H470V399H468V398H458V399H449V398H447V399H439V398H438V399H403V400H402V399H394V398H385V397H379V396H378V397H377V396H372V395H367V394H365V393H364V392H362V391H360V390H358V389H357V388H355V387H354V388H352V389H350V390H348V391H346V392H344V393H339V394H338V393H337V394H333V395H328V396H327V395H323V396H322V395H321V396H302V397H298V396H297V397H252V398H250V397H226V396H225V397H223V396H211V395H209V396H208V395H207V396H206V395H205ZM747 380H748V379H751V380H754V379H757V380H758V379H759V380H760V379H761V380H762V379H763V380H765V379H767V380H768V379H770V380H772V379H773V395H747ZM792 379H794V380H795V379H796V380H797V379H798V380H799V379H800V380H802V379H810V395H792ZM827 378H828V379H830V378H831V379H832V378H834V379H837V378H839V379H840V378H863V377H864V378H865V393H863V394H862V393H858V394H855V393H851V394H850V393H849V394H829V395H828V394H827ZM871 377H875V378H879V377H882V378H883V377H884V378H885V377H886V378H888V377H889V378H890V377H899V393H871ZM925 377H934V393H933V392H930V393H929V392H927V393H926V392H925ZM943 376H944V377H962V378H963V377H969V378H994V379H999V378H1000V379H1013V395H1011V394H1010V395H1007V394H1004V395H1002V394H999V395H998V394H984V393H983V394H979V393H976V394H974V393H954V392H953V393H950V392H945V393H944V392H943ZM1084 380H1101V379H1102V380H1104V379H1105V380H1108V379H1110V380H1112V379H1114V380H1115V379H1138V378H1139V379H1143V378H1163V379H1164V378H1165V379H1174V380H1176V379H1177V380H1184V381H1193V382H1194V381H1196V397H1190V396H1178V395H1177V396H1176V395H1169V394H1167V395H1165V394H1139V395H1138V394H1132V395H1130V394H1129V395H1127V394H1126V395H1125V394H1124V395H1099V396H1098V395H1097V396H1096V395H1095V396H1086V395H1085V396H1084ZM1238 384H1239V385H1281V400H1280V401H1278V400H1274V401H1273V400H1271V401H1267V400H1265V401H1263V400H1256V401H1255V400H1251V401H1250V400H1241V401H1240V400H1238Z" fill="#ffee00"/>
<path d="M205 383H206V382H207V383H208V382H209V383H223V384H245V385H246V384H249V385H251V384H252V385H253V384H258V385H259V384H303V383H304V384H305V383H319V382H321V383H324V382H333V381H334V382H335V381H339V380H342V379H347V378H348V377H350V376H352V375H354V374H355V375H356V376H358V377H360V378H361V379H363V380H365V381H367V382H368V383H369V382H371V383H377V384H383V385H393V386H400V387H401V386H402V387H404V386H455V385H457V386H458V385H459V386H460V385H464V386H465V385H471V386H472V385H498V386H499V385H500V386H501V385H508V386H509V385H511V386H512V385H515V386H517V385H520V386H521V385H525V386H526V385H530V386H533V385H536V386H538V385H540V386H542V385H543V386H544V385H546V386H547V385H550V386H554V385H557V386H558V385H559V386H561V385H563V386H565V385H567V386H576V385H577V386H579V385H580V386H583V385H584V386H587V385H589V386H590V385H591V386H593V385H594V386H596V385H599V386H601V385H602V386H603V385H604V386H605V385H661V384H662V385H665V384H666V385H667V384H668V385H669V384H670V385H672V384H673V385H674V384H675V385H677V384H679V385H682V384H689V385H691V384H693V385H694V384H711V383H712V384H716V383H737V382H738V383H739V393H738V394H735V393H734V394H733V393H732V394H717V395H715V394H714V395H687V396H686V395H684V396H683V395H681V396H680V395H676V396H674V395H673V396H671V395H669V396H667V395H666V396H665V395H664V396H663V395H662V396H657V395H656V396H612V397H611V396H608V397H607V396H603V397H602V396H597V397H596V396H595V397H594V396H591V397H588V396H587V397H586V396H585V397H584V396H583V397H581V396H580V397H577V396H576V397H569V396H568V397H564V396H563V397H562V396H561V397H559V396H557V397H556V396H555V397H554V396H551V397H550V396H549V397H548V396H546V397H545V396H544V397H543V396H542V397H539V396H537V397H536V396H531V397H530V396H529V397H528V396H526V397H525V396H523V397H522V396H518V397H517V396H516V397H514V396H511V397H510V396H509V397H508V396H507V397H506V396H503V397H502V396H501V397H500V396H498V397H497V396H492V397H491V396H489V397H488V396H471V397H470V396H465V397H461V396H460V397H459V396H458V397H454V396H452V397H404V398H403V397H402V398H401V397H392V396H385V395H377V394H371V393H367V392H365V391H364V390H362V389H360V388H358V387H356V386H352V387H350V388H348V389H347V390H343V391H339V392H333V393H329V394H328V393H326V394H321V393H320V394H309V395H308V394H307V395H305V394H303V395H258V396H256V395H255V396H252V395H247V396H245V395H241V396H240V395H226V394H224V395H222V394H208V393H207V394H206V393H205ZM747 382H773V393H747ZM792 382H810V393H792ZM827 381H828V382H829V381H856V380H857V381H860V380H861V381H862V380H864V381H865V391H859V392H858V391H857V392H831V393H830V392H827ZM871 380H899V391H871ZM925 379H926V380H929V379H933V380H934V391H933V390H932V391H928V390H926V391H925ZM943 379H945V380H947V379H949V380H950V379H951V380H969V381H971V380H975V381H977V380H979V381H996V382H997V381H998V382H999V381H1000V382H1001V381H1003V382H1005V381H1007V382H1008V381H1009V382H1013V393H1006V392H1005V393H1004V392H1003V393H1000V392H981V391H980V392H974V391H973V392H970V391H950V390H948V391H947V390H946V391H943ZM1084 383H1094V382H1095V383H1100V382H1101V383H1103V382H1107V383H1109V382H1128V381H1130V382H1134V381H1135V382H1136V381H1137V382H1139V381H1141V382H1142V381H1166V382H1167V381H1168V382H1176V383H1177V382H1179V383H1185V384H1187V383H1189V384H1196V395H1189V394H1186V395H1185V394H1177V393H1167V392H1166V393H1165V392H1143V393H1142V392H1141V393H1139V392H1137V393H1132V392H1131V393H1128V392H1126V393H1106V394H1105V393H1103V394H1101V393H1094V394H1084ZM1238 388H1239V387H1241V388H1246V387H1247V388H1248V387H1252V388H1257V387H1258V388H1259V387H1262V388H1264V387H1266V388H1267V387H1270V388H1271V387H1273V388H1274V387H1275V388H1277V387H1278V388H1279V387H1280V388H1281V399H1280V398H1274V399H1273V398H1265V399H1264V398H1263V399H1262V398H1258V399H1256V398H1254V399H1252V398H1250V399H1246V398H1245V399H1243V398H1242V399H1239V398H1238Z" fill="#ff8c00"/>
<path d="M205 383H206V384H207V383H208V384H210V383H213V384H229V385H230V384H231V385H234V384H236V385H273V384H275V385H276V384H278V385H288V384H289V385H293V384H312V383H313V384H315V383H316V384H320V383H321V384H322V383H333V382H337V381H341V380H345V379H348V378H350V377H351V376H353V375H355V376H357V377H359V378H361V379H363V380H364V381H366V382H367V383H373V384H381V385H387V386H397V387H421V386H422V387H428V386H430V387H431V386H433V387H434V386H448V387H450V386H575V387H576V386H579V387H580V386H623V385H624V386H625V385H626V386H632V385H634V386H646V385H649V386H650V385H655V386H656V385H661V386H662V385H702V384H703V385H706V384H724V383H726V384H727V383H728V384H729V383H739V393H728V394H727V393H721V394H704V395H659V396H658V395H655V396H654V395H643V396H642V395H640V396H639V395H634V396H630V395H628V396H627V395H626V396H625V395H624V396H623V395H622V396H440V397H438V396H437V397H436V396H434V397H433V396H432V397H429V396H428V397H427V396H426V397H423V396H421V397H396V396H389V395H383V394H382V395H381V394H380V395H379V394H375V393H374V394H373V393H368V392H366V391H365V390H363V389H361V388H359V387H358V386H356V385H353V386H351V387H349V388H348V389H345V390H341V391H337V392H332V393H318V394H317V393H316V394H315V393H314V394H311V393H310V394H290V395H289V394H288V395H287V394H285V395H283V394H281V395H280V394H279V395H278V394H276V395H273V394H272V395H271V394H269V395H268V394H265V395H237V394H236V395H235V394H217V393H216V394H214V393H212V394H210V393H205ZM747 383H773V393H768V392H766V393H758V392H757V393H752V392H751V393H750V392H749V393H747ZM792 383H809V382H810V392H807V393H804V392H803V393H793V392H792ZM827 382H837V381H838V382H839V381H840V382H841V381H843V382H844V381H845V382H846V381H847V382H848V381H865V391H845V392H827ZM871 381H872V380H873V381H888V380H889V381H892V380H895V381H897V380H898V381H899V391H898V390H897V391H895V390H893V391H892V390H890V391H889V390H886V391H882V390H881V391H880V390H879V391H878V390H877V391H875V390H874V391H872V390H871ZM925 380H934V390H925ZM943 380H957V381H959V380H960V381H961V380H962V381H982V382H983V381H984V382H987V381H988V382H989V381H990V382H1010V383H1012V382H1013V392H991V391H989V392H984V391H982V392H981V391H968V390H967V391H966V390H965V391H963V390H943ZM1084 384H1085V383H1118V382H1119V383H1121V382H1151V381H1152V382H1153V381H1154V382H1155V381H1156V382H1160V381H1161V382H1162V381H1164V382H1171V383H1173V382H1174V383H1180V384H1182V383H1183V384H1189V385H1190V384H1191V385H1192V384H1193V385H1196V395H1194V394H1192V395H1191V394H1181V393H1171V392H1161V391H1154V392H1152V391H1148V392H1125V393H1124V392H1122V393H1120V392H1116V393H1113V392H1111V393H1108V392H1107V393H1088V394H1087V393H1084ZM1238 388H1281V398H1238Z" fill="#ff1a00"/>
<path d="M205 386H211V387H212V386H216V387H218V386H220V387H234V388H235V387H237V388H263V387H266V388H268V387H269V388H270V387H272V388H275V387H276V388H277V387H280V388H282V387H313V386H314V387H316V386H330V385H336V384H339V383H341V384H342V383H345V382H347V381H348V380H351V379H352V378H356V379H357V380H360V381H361V382H362V383H364V384H367V385H369V386H374V387H375V386H376V387H381V388H390V389H398V390H411V389H413V390H417V389H418V390H420V389H421V390H425V389H426V390H427V389H434V390H436V389H437V390H438V389H473V388H474V389H475V388H478V389H480V388H481V389H487V388H489V389H490V388H491V389H498V388H499V389H502V388H503V389H610V388H611V389H612V388H613V389H621V388H624V389H625V388H626V389H627V388H628V389H630V388H632V389H633V388H634V389H635V388H636V389H637V388H645V389H646V388H699V387H705V388H706V387H718V386H721V387H723V386H737V385H739V391H738V390H737V391H735V390H734V391H722V392H721V391H718V392H717V391H716V392H694V393H693V392H692V393H691V392H684V393H683V392H682V393H680V392H678V393H677V392H673V393H670V392H669V393H619V394H618V393H616V394H615V393H612V394H611V393H610V394H609V393H608V394H607V393H605V394H604V393H603V394H602V393H600V394H598V393H596V394H595V393H594V394H591V393H590V394H588V393H587V394H557V393H556V394H555V393H554V394H552V393H551V394H548V393H547V394H546V393H545V394H541V393H539V394H537V393H536V394H531V393H530V394H529V393H527V394H526V393H525V394H524V393H518V394H516V393H515V394H513V393H511V394H509V393H508V394H506V393H498V394H497V393H496V394H495V393H488V394H487V393H484V394H483V393H481V394H479V393H474V394H473V393H470V394H421V395H420V394H419V395H418V394H416V395H415V394H411V395H409V394H408V395H407V394H406V395H405V394H403V395H400V394H398V395H397V394H392V393H386V392H385V393H384V392H378V391H370V390H367V389H365V388H363V387H362V386H360V385H358V384H356V383H354V382H353V383H352V384H350V385H348V386H346V387H344V388H339V389H335V390H331V391H330V390H328V391H310V392H309V391H305V392H303V391H302V392H269V393H268V392H264V393H262V392H256V393H255V392H254V393H253V392H250V393H247V392H243V393H240V392H225V391H224V392H221V391H220V392H219V391H205ZM747 386H748V385H750V386H751V385H752V386H754V385H755V386H772V385H773V390H762V391H760V390H758V391H757V390H752V391H751V390H748V391H747ZM792 385H793V386H798V385H801V386H802V385H804V386H805V385H808V386H809V385H810V390H792ZM827 385H834V384H837V385H841V384H842V385H843V384H865V388H864V389H862V388H861V389H860V388H859V389H831V390H829V389H828V390H827ZM871 384H877V383H880V384H881V383H882V384H883V383H885V384H886V383H887V384H888V383H890V384H892V383H894V384H895V383H899V388H871ZM925 383H934V388H933V387H929V388H925ZM943 383H961V384H963V383H964V384H988V385H994V384H996V385H1013V390H1003V389H1001V390H1000V389H974V388H971V389H970V388H969V389H968V388H944V387H943ZM1084 386H1108V385H1110V386H1111V385H1112V386H1113V385H1114V386H1117V385H1118V386H1119V385H1141V384H1142V385H1146V384H1147V385H1149V384H1153V385H1155V384H1156V385H1157V384H1160V385H1161V384H1166V385H1173V386H1174V385H1175V386H1182V387H1184V386H1185V387H1193V388H1196V392H1186V391H1177V390H1176V391H1175V390H1166V389H1145V390H1144V389H1142V390H1141V389H1140V390H1139V389H1138V390H1137V389H1136V390H1135V389H1133V390H1109V391H1108V390H1105V391H1104V390H1102V391H1101V390H1099V391H1097V390H1096V391H1084ZM1238 391H1281V396H1280V395H1279V396H1278V395H1277V396H1275V395H1274V396H1272V395H1271V396H1269V395H1268V396H1262V395H1261V396H1259V395H1258V396H1246V395H1244V396H1241V395H1238Z" fill="#d40a6e"/>
<path d="M206.5 365v1M210.5 366v1M211.5 366v1m0 35v1M214.5 365v1M215.5 365v2m0 35v1M216.5 366v1m0 35v1M225.5 367v1M226.5 367v1m0 2v1M227.5 367v1m0 2v1m0 33v1M228.5 367v1M230.5 370v1M231.5 370v1M232.5 404v1M233.5 404v1M238.5 367v1M242.5 404v1M243.5 369v1M244.5 371v1M247.5 367v1m0 3v1M248.5 367v1M251.5 405v1M252.5 368v1M253.5 368v1M254.5 370v1m0 33v2M255.5 367v1m0 2v1m0 34v1M256.5 367v1M257.5 368v1M258.5 368v1M263.5 405v1M264.5 405v2M265.5 405v2M266.5 370v1m0 34v1M267.5 370v1M269.5 333v1m0 1v1m0 2v1m0 2v1m0 2v1m0 1v2m0 1v1m0 2v2m0 2v2m0 1v3m0 2v1m0 1v1m0 3v1M270.5 327v51M271.5 332v1m0 6v2m0 4v1m0 2v1m0 2v1m0 2v1m0 4v1m0 2v2m0 1v1m0 2v1M275.5 351v27M276.5 403v1M277.5 337v1m0 2v1m0 5v1m0 2v2m0 7v1m0 2v1m0 4v1m0 1v1M278.5 332v46M279.5 340v1m0 2v1m0 2v1m0 7v1m0 1v2m0 4v1m0 1v1m0 3v1M280.5 369v1M281.5 369v1M284.5 344v1m0 6v1m0 5v1m0 2v1m0 1v1m0 1v1m0 2v1m0 1v1M285.5 337v40m0 26v2M286.5 344v1m0 1v2m0 6v1m0 1v1m0 1v2m0 5v4m0 1v2M287.5 370v1M288.5 368v1M289.5 368v1M294.5 368v1M297.5 405v1M299.5 403v1M303.5 404v1M304.5 367v1M305.5 367v1M306.5 369v1M307.5 369v1M308.5 366v1M310.5 402v1m0 1v1M312.5 367v2M313.5 367v1M315.5 404v1M319.5 365v1M320.5 365v1M323.5 402v1M326.5 367v1M328.5 402v1M332.5 401v1M333.5 365v1m0 35v1M334.5 365v1M335.5 403v1M336.5 403v1M338.5 402v1M339.5 402v1M343.5 364v1M344.5 364v1M349.5 398v2M350.5 398v1M351.5 397v1M352.5 397v1M353.5 359v1M354.5 359v2M355.5 360v1M358.5 360v1m0 36v1M359.5 397v1M361.5 360v1M362.5 365v1M363.5 362v1m0 2v1M364.5 400v1M365.5 400v1M367.5 278v1m0 1v1m0 1v1m0 1v2m0 1v6m0 1v2m0 1v2m0 1v2m0 1v2m0 1v2m0 1v5m0 1v7m0 1v9m0 1v13m0 1v4m0 1v18M368.5 276v100M369.5 276v99M370.5 255v1m0 2v1m0 1v1m0 1v2m0 1v1m0 1v7m0 2v1m0 1v12m0 1v33m0 1v10m0 1v35M371.5 251v128M372.5 256v1m0 1v2m0 4v1m0 2v3m0 2v7m0 2v10m0 1v2m0 3v2m0 1v2m0 1v1m0 1v1m0 2v34m0 1v1m0 3v4m0 1v12m0 1v4m0 1v3M374.5 405v1M377.5 366v1M378.5 366v1m0 2v1M379.5 369v1M381.5 404v1M383.5 404v1m0 1v1M385.5 369v1M386.5 369v1m0 35v1M387.5 370v1M388.5 370v1m0 34v1M389.5 371v1m0 35v1M390.5 371v1m0 35v1M391.5 407v1M392.5 370v1M393.5 370v1M394.5 368v1m0 38v1M395.5 368v1m0 38v1M398.5 372v1m0 33v1M400.5 407v1M401.5 370v1m0 36v1M403.5 372v1M404.5 266v110M405.5 263v120M406.5 266v107M409.5 370v2M410.5 371v1M411.5 371v1M412.5 371v1m0 33v1M413.5 405v1M414.5 372v1M415.5 282v1m0 1v1m0 87v1M416.5 267v54m0 2v1m0 3v1m0 1v1m0 38v1M417.5 259v99m0 4v1m0 1v1M418.5 257v122M419.5 257v121M420.5 258v1m0 1v95m0 1v2m0 2v1m0 1v1m0 4v1m0 1v1m0 37v1M421.5 263v1m0 1v53m0 1v1m0 2v1m0 2v1m0 2v1M422.5 278v1m0 6v2M423.5 268v24m0 1v11m0 1v10m0 1v5m0 1v2M424.5 268v40m0 1v4m0 1v3m0 1v6m0 48v1M425.5 250v130M426.5 250v130M427.5 407v1M428.5 406v1M429.5 368v1m0 3v1m0 33v1M430.5 368v2m0 2v2M431.5 369v1m0 3v1M433.5 372v1M434.5 372v1M435.5 406v1M436.5 406v1M438.5 374v1M439.5 364v1m0 1v2m0 1v7M440.5 363v10M441.5 362v11M442.5 364v10M443.5 366v2m0 2v1m0 2v1M445.5 407v1M449.5 368v2M450.5 405v1M454.5 405v2M455.5 371v1M457.5 370v1m0 34v1M458.5 370v1M462.5 406v1M464.5 370v1M465.5 370v1m0 35v1M466.5 351v25m0 30v1M467.5 350v26m0 29v1M468.5 372v1M469.5 372v1M472.5 407v1M475.5 407v1M478.5 407v1M479.5 407v1M481.5 367v1M482.5 367v1M483.5 368v1m0 2v1m0 32v1M484.5 368v1m0 35v1M486.5 367v1M487.5 367v1M491.5 368v1m0 2v1M492.5 368v1M498.5 369v1M502.5 360v18M506.5 405v2M513.5 406v1M514.5 406v1M515.5 406v1M516.5 406v1M518.5 368v1m0 36v1m0 1v1M519.5 407v1M524.5 370v1M525.5 370v1m0 36v1M526.5 372v1m0 34v1M543.5 405v1M545.5 405v1M549.5 369v1M550.5 360v17m0 27v1M551.5 360v17M554.5 368v1M555.5 368v1M556.5 372v1M557.5 372v1M560.5 406v1M561.5 371v1m0 34v1M563.5 406v1M564.5 406v1M565.5 406v2M566.5 371v1m0 35v1M569.5 372v1m0 34v1M570.5 407v1M571.5 405v1M572.5 369v1m0 35v1M573.5 369v1M576.5 370v1M577.5 370v1m0 34v1M578.5 407v1M579.5 407v1M581.5 406v2M582.5 406v1M585.5 368v1m0 2v1m0 33v1M586.5 405v1M588.5 369v1M589.5 369v1m0 36v1M591.5 406v1M592.5 407v1M593.5 406v1M594.5 372v1M595.5 372v1m0 33v1M597.5 405v1M598.5 370v1m0 34v1M599.5 368v1m0 1v1M600.5 368v2M601.5 370v1M602.5 406v1M603.5 406v1M604.5 405v1M605.5 405v1M606.5 302v75m0 29v1M607.5 300v79m0 27v1M608.5 302v76M609.5 368v1M610.5 406v1M611.5 406v1M617.5 371v1M618.5 371v1M620.5 404v1M624.5 371v1M625.5 370v1M629.5 405v1M630.5 405v1M633.5 405v1M639.5 367v1M640.5 367v1m0 37v1M641.5 405v1M644.5 405v1M645.5 320v59m0 25v2M646.5 404v2M647.5 369v1m0 35v1M648.5 369v1M649.5 367v1M650.5 367v1M654.5 406v1M655.5 370v1m0 35v1M659.5 367v1M660.5 367v1M665.5 362v13M666.5 361v13M667.5 405v1M669.5 368v1M672.5 370v1m0 34v2M673.5 370v1m0 34v2M674.5 370v1m0 32v1m0 1v1M676.5 371v1M677.5 367v1m0 3v1M678.5 367v1m0 38v1M680.5 367v1m0 38v1M681.5 406v1M684.5 366v1M685.5 366v1M686.5 403v1M687.5 282v1m0 1v1m0 15v1m0 6v1m0 23v1m0 2v1m0 2v2m0 4v1m0 2v1m0 23v1m0 32v1m0 1v1M688.5 271v15m0 4v19m0 17v47m0 30v1M689.5 271v15m0 4v19m0 17v46M690.5 278v1m0 17v1m0 10v1m0 22v1m0 5v1m0 7v2M691.5 405v1M696.5 368v1M697.5 368v1M700.5 369v1M701.5 369v2m0 33v1M704.5 320v53m0 1v2M705.5 319v62M706.5 371v13M707.5 373v8m0 1v1m0 21v1M708.5 369v1m0 35v1M709.5 369v1m0 35v1M711.5 369v1M714.5 405v1M715.5 405v1M718.5 404v1M719.5 404v1M721.5 362v1m0 1v3m0 1v4M722.5 358v17M723.5 352v3m0 2v15m0 2v1M724.5 353v3m0 1v3m0 1v1m0 2v1m0 1v7M725.5 365v1M726.5 365v1m0 3v1m0 34v1M727.5 366v1m0 1v1M728.5 366v1M729.5 369v1M730.5 368v1M731.5 332v42M732.5 332v43M736.5 237v1m0 3v1m0 3v1m0 114v3m0 1v2m0 1v2m0 33v1M737.5 226v38m0 2v2m0 1v4m0 1v3m0 2v3m0 1v1m0 1v1m0 1v10m0 2v1m0 1v9m0 3v5m0 1v2m0 1v1m0 2v1m0 4v1m0 1v4m0 20v20M738.5 224v51m0 2v3m0 4v2m0 1v3m0 2v5m0 1v1m0 1v1m0 1v2m0 1v4m0 3v3m0 1v1m0 1v4m0 1v2m0 1v7m0 1v2m0 22v16m0 30v1M739.5 224v63M740.5 224v77M741.5 226v88m0 1v3M742.5 233v113m0 1v5M743.5 247v117M744.5 266v1m0 1v1m0 1v94M745.5 225v41M746.5 225v41M748.5 401v1M750.5 365v1m0 2v1m0 1v1M751.5 368v1M752.5 402v1m0 1v1M753.5 404v1M754.5 366v1M756.5 364v6m0 32v1M757.5 368v1m0 33v1M761.5 365v2m0 1v3M763.5 366v1m0 1v3M764.5 366v1M765.5 402v1M766.5 366v1m0 3v1m0 31v1M767.5 362v1m0 1v3m0 2v2M768.5 364v2m0 1v2m0 1v1M769.5 368v1M770.5 364v4m0 2v1m0 31v1M771.5 364v1m0 4v1M772.5 232v1m0 2v1M773.5 225v39m0 2v1M774.5 223v57m0 2v1m0 14v96M775.5 223v71m0 3v96M776.5 223v82m0 1v1M777.5 223v95m0 1v1M778.5 224v107M779.5 228v110M780.5 242v3m0 1v100M781.5 261v1m0 1v83M782.5 231v162M783.5 228v114m0 1v3M784.5 228v113M785.5 228v108M786.5 228v108M787.5 230v97M788.5 229v86M789.5 228v76M790.5 228v62M791.5 228v52m0 16v97M792.5 230v38m0 100v2m0 33v1M793.5 249v1m0 8v1M794.5 362v5m0 1v1M795.5 370v1M797.5 366v1M799.5 368v1M800.5 364v1m0 1v1m0 1v2M801.5 402v1M802.5 367v3m0 32v2M803.5 365v1m0 2v1m0 34v1M804.5 363v1m0 1v6M805.5 367v1m0 1v2M806.5 367v1m0 1v1M808.5 342v28M809.5 213v40m0 13v1m0 7v1m0 4v1m0 7v1m0 7v1m0 15v1m0 25v1m0 4v28m0 32v1M810.5 212v184m0 6v1M811.5 211v64m0 1v1m0 4v1m0 3v1m0 2v1m0 1v1m0 2v2m0 1v1m0 2v1m0 1v1m0 6v1m0 4v2m0 1v1m0 6v1m0 7v1m0 2v1m0 5v1m0 2v3m0 3v1m0 3v1m0 9v1m0 2v1m0 9v1m0 5v1m0 6v1m0 1v1M812.5 211v76M813.5 212v85M814.5 214v91m0 1v2M815.5 219v1m0 3v91M816.5 234v1m0 1v78M817.5 211v1m0 39v1m0 1v1m0 4v56M818.5 190v59m0 1v2m0 1v2m0 2v1m0 27v1m0 1v103M819.5 187v90m0 21v92M820.5 186v103M821.5 186v117M822.5 187v121M823.5 190v118M824.5 218v2m0 1v87M825.5 223v85M826.5 223v173M827.5 226v51m0 1v3m0 16v78M828.5 402v1M829.5 402v1M830.5 363v1m0 2v4M831.5 364v1m0 38v1M832.5 400v1m0 2v1M833.5 369v1m0 30v1m0 1v1M834.5 368v1m0 33v1M836.5 365v4M837.5 367v2m0 2v2M838.5 364v1m0 1v2m0 1v1M839.5 362v7M841.5 366v4m0 30v1M842.5 361v1m0 2v1m0 1v1m0 1v2M843.5 364v1m0 1v4M844.5 362v3m0 1v3M845.5 357v1m0 1v11M846.5 358v12M847.5 363v1m0 1v3M848.5 400v2M849.5 364v3m0 34v1M850.5 363v9M851.5 356v3m0 1v1m0 1v11m0 27v1M852.5 355v8m0 1v4m0 32v1M854.5 360v3m0 1v4M855.5 349v24M856.5 349v24M857.5 365v1M858.5 368v1M859.5 365v1M860.5 361v1m0 5v1M861.5 366v1M862.5 360v1m0 1v1m0 1v4M863.5 347v2m0 1v19M864.5 346v28M865.5 344v53M866.5 344v53M867.5 344v53M868.5 344v53M869.5 345v52M870.5 346v51M871.5 350v24M872.5 353v17M873.5 365v4M874.5 365v4M875.5 363v2m0 1v2M876.5 366v1M877.5 360v1m0 1v3m0 1v1M878.5 363v7M879.5 363v9M880.5 364v4m0 34v1M883.5 361v7M884.5 349v1m0 1v2m0 1v1m0 4v3m0 1v6M885.5 347v24M886.5 347v22m0 1v2m0 30v1M887.5 361v1m0 1v1m0 1v2m0 1v1m0 33v1M889.5 365v1m0 35v2M890.5 365v1m0 36v1M891.5 364v4m0 32v1M892.5 362v4m0 2v1M894.5 365v1m0 1v1M895.5 365v1m0 34v1M896.5 366v2m0 32v1M897.5 365v11M898.5 351v26M899.5 350v32m0 1v10M900.5 348v1m0 4v28m0 1v5m0 1v5M901.5 345v1m0 2v3m0 2v31m0 1v8M902.5 328v68M903.5 325v71M904.5 334v1m0 2v1m0 1v54M905.5 327v69M906.5 324v72M907.5 334v59M908.5 334v3m0 1v55M909.5 333v60M910.5 332v9m0 1v51M911.5 333v18m0 1v42M912.5 332v3m0 1v60M913.5 331v1m0 1v1m0 2v60M914.5 333v5m0 2v8m0 1v48M915.5 332v12m0 1v52M916.5 332v1m0 3v61M917.5 332v1m0 2v1m0 1v60M918.5 333v1m0 1v1m0 1v1m0 1v58M919.5 336v1m0 2v6m0 1v50M920.5 336v3m0 2v1m0 1v1m0 1v50M921.5 342v1m0 1v2m0 1v47M922.5 343v1m0 2v47M923.5 346v39m0 2v6M924.5 347v32m0 3v1m0 2v1m0 4v1m0 1v1M925.5 347v22M926.5 348v19M927.5 348v19M928.5 350v17M929.5 354v15m0 1v1M930.5 360v9m0 32v1M932.5 401v1M933.5 233v1m0 3v1m0 5v22m0 1v1m0 1v3m0 90v2m0 1v4M934.5 204v128m0 3v3m0 1v1m0 5v1m0 16v1M935.5 192v2m0 1v190m0 1v11M936.5 190v207M937.5 188v209M938.5 188v205m0 1v1M939.5 189v133m0 1v9m0 1v2m0 4v2m0 1v1m0 8v1M940.5 190v99m0 2v1M941.5 193v70m0 2v3m0 20v113M942.5 205v24m0 3v2m0 3v1m0 50v113M943.5 400v1M944.5 366v1M945.5 363v5M946.5 337v3m0 9v2m0 4v1m0 5v2m0 1v1M947.5 334v32m0 1v4M948.5 367v1m0 32v1M949.5 336v33M950.5 336v35M951.5 341v1m0 7v1m0 14v4M952.5 363v8M953.5 362v9M954.5 366v1m0 1v1M955.5 360v7m0 1v4M956.5 359v13M957.5 333v36M958.5 334v19m0 1v16M959.5 353v16m0 1v1M960.5 340v33M961.5 340v34M962.5 338v9m0 2v3m0 1v1m0 3v16m0 29v1M963.5 339v29M964.5 336v38M965.5 247v1m0 39v1m0 9v2m0 7v1m0 7v4m0 17v2m0 2v29M966.5 262v3m0 11v3m0 22v3m0 9v1m0 4v3m0 11v3m0 28v1m0 1v3M967.5 251v2m0 2v3m0 12v1m0 4v1m0 21v1m0 13v3m0 13v1m0 21v1m0 12v1m0 1v5m0 33v1M968.5 235v1m0 3v1m0 27v2m0 17v1m0 32v3m0 21v31M969.5 262v3m0 1v1m0 43v3m0 9v1m0 20v32M970.5 248v1m0 4v3m0 51v3m0 2v3m0 31v26m0 29v1M971.5 250v3m0 70v3m0 5v1m0 5v3m0 22v10M972.5 243v1m0 11v2m0 8v2m0 15v1m0 18v1m0 12v3m0 38v3m0 8v1M973.5 246v2m0 26v3m0 16v1m0 36v1m0 16v3m0 14v1m0 1v2M974.5 255v2m0 22v1m0 20v3m0 3v2m0 33v4m0 2v7m0 1v3m0 1v10M975.5 253v4m0 13v1m0 6v5m0 12v1m0 37v2m0 13v2m0 11v2m0 2v1m0 3v1M976.5 366v1M977.5 363v4m0 1v1m0 32v1M978.5 401v1M979.5 336v39M980.5 338v34M981.5 363v7M982.5 360v4m0 1v5M983.5 362v1m0 1v3m0 33v2M984.5 347v23m0 30v2M985.5 348v22m0 1v1M986.5 348v21M987.5 364v4m0 1v1M988.5 400v2M989.5 351v20m0 29v2M990.5 349v23M991.5 356v1m0 8v1m0 2v1M992.5 360v1m0 2v2m0 2v1M993.5 354v17m0 1v1m0 29v1M994.5 355v14m0 33v1M995.5 317v58m0 27v1M996.5 317v58M997.5 340v33M998.5 343v2m0 1v1m0 2v1m0 1v1m0 2v2m0 2v1m0 4v6M999.5 341v32m0 2v1M1000.5 340v34m0 27v1m0 1v1M1001.5 364v1m0 2v2m0 32v1m0 1v1M1002.5 363v3M1003.5 348v27M1004.5 347v28m0 26v1m0 1v1M1005.5 355v15m0 31v1m0 1v1M1006.5 361v12m0 1v1M1007.5 346v28M1008.5 346v27M1009.5 103v1m0 246v1m0 1v2m0 1v1m0 1v2m0 1v4m0 1v5m0 33v1M1010.5 101v9m0 241v7m0 1v10m0 34v1M1011.5 101v13m0 101v2m0 10v1m0 86v1m0 22v32M1012.5 100v19m0 3v4m0 2v3m0 1v1m0 1v1m0 1v1m0 1v1m0 2v1m0 1v7m0 1v8m0 2v4m0 1v4m0 1v1m0 1v5m0 1v1m0 1v1m0 1v5m0 2v1m0 1v1m0 2v2m0 1v1m0 2v2m0 2v2m0 1v2m0 1v7m0 1v4m0 2v3m0 1v2m0 2v1m0 1v1m0 1v5m0 1v1m0 3v1m0 3v1m0 3v8m0 1v3m0 2v1m0 8v1m0 4v2m0 6v1m0 6v2m0 4v1m0 5v1m0 2v1m0 1v1m0 5v1m0 15v34M1013.5 99v79m0 1v68m0 2v4m0 1v9m0 1v5m0 1v1m0 1v6m0 1v4m0 2v1m0 1v2m0 1v5m0 1v1m0 1v2m0 1v2m0 3v2m0 1v1m0 1v2m0 1v1m0 3v2m0 2v1m0 1v2m0 2v3m0 1v1m0 5v1m0 2v1m0 1v1m0 1v1m0 1v1m0 4v1m0 2v1m0 4v1m0 10v1m0 3v1m0 14v1M1014.5 97v163m0 1v37m0 2v32m0 1v16m0 3v2m0 1v11m0 4v2m0 2v7m0 1v6m0 1v1m0 2v1M1015.5 98v142m0 1v84m0 1v64m0 2v1M1016.5 97v296M1017.5 99v294M1018.5 103v290M1019.5 109v265m0 1v18M1020.5 114v279M1021.5 119v274M1022.5 125v268M1023.5 129v264M1024.5 133v260M1025.5 139v254M1026.5 145v248M1027.5 150v164m0 1v78M1028.5 152v241M1029.5 152v155m0 1v85M1030.5 152v234m0 1v3M1031.5 152v175m0 1v56M1032.5 154v228M1033.5 158v143m0 1v45m0 1v27m0 1v1m0 1v1M1034.5 165v133m0 1v9m0 1v8m0 1v11m0 1v4m0 1v9m0 1v18m0 1v1m0 1v6m0 4v1M1035.5 174v133m0 1v1m0 1v1m0 4v3m0 1v2m0 4v1m0 1v1m0 2v9m0 3v3m0 4v4m0 1v1m0 1v4m0 2v2m0 1v1m0 1v1m0 1v1M1036.5 194v1m0 1v2m0 1v2m0 1v3m0 2v1m0 1v4m0 1v114m0 33v1M1037.5 225v111M1038.5 237v106M1039.5 247v104M1040.5 260v100M1041.5 273v94M1042.5 279v94M1043.5 280v102M1044.5 280v114M1045.5 281v113M1046.5 287v1m0 2v4m0 2v1m0 1v1m0 2v4m0 1v1m0 2v3m0 2v2m0 1v1m0 4v72M1047.5 335v1m0 1v57M1048.5 343v51M1049.5 351v42M1050.5 134v1m0 1v46m0 1v7m0 3v1m0 32v167M1051.5 118v1m0 1v85m0 161v18M1052.5 112v108m0 152v11M1053.5 110v116m0 153v1M1054.5 109v117M1055.5 109v117M1056.5 109v117M1057.5 110v116M1058.5 112v114M1059.5 115v2m0 1v108M1060.5 127v266M1061.5 135v54m0 2v202M1062.5 189v55m0 1v3M1063.5 187v72M1064.5 187v93m0 2v6m0 1v1M1065.5 187v104M1066.5 186v105M1067.5 186v105M1068.5 187v104M1069.5 188v103M1070.5 191v4m0 1v3m0 1v1m0 1v2m0 1v2m0 1v5m0 2v76M1071.5 167v1m0 2v34m0 1v1m0 20v167M1072.5 155v2m0 2v54m0 2v2m0 12v1m0 2v1m0 2v2m0 1v1m0 1v4m0 3v34m0 1v7m0 1v8m0 1v2m0 1v1m0 1v4m0 1v5m0 2v2m0 1v1m0 3v4m0 1v2m0 1v6m0 2v2m0 1v1m0 1v3m0 1v2m0 1v1m0 1v8m0 1v5m0 1v3m0 1v7m0 2v4m0 3v4M1073.5 149v75m0 1v1m0 32v23M1074.5 146v86m0 36v1m0 1v9M1075.5 145v87M1076.5 144v88M1077.5 144v88M1078.5 144v88M1079.5 145v87M1080.5 147v85M1081.5 158v74m0 1v10m0 1v2m0 1v6m0 2v1m0 1v4m0 1v1m0 1v2m0 3v4m0 1v1m0 1v3m0 1v1m0 1v9m0 1v8m0 2v1m0 3v3m0 1v5m0 1v3m0 1v2m0 1v3m0 1v5m0 1v1m0 1v2m0 2v1m0 1v2m0 1v1m0 1v3m0 1v21m0 3v9m0 1v1m0 1v2m0 2v1m0 1v1M1082.5 166v24m0 1v11m0 3v1m0 1v3m0 1v1m0 1v1m0 2v1m0 1v1m0 5v169M1085.5 403v1M1086.5 348v23M1087.5 345v31m0 27v1M1088.5 345v30m0 27v2M1089.5 353v23m0 26v1M1090.5 361v3m0 1v2m0 1v2m0 1v1M1092.5 369v2M1093.5 367v2M1094.5 366v1m0 2v1M1095.5 365v2m0 2v2M1096.5 362v2m0 1v3m0 1v2M1097.5 357v18m0 26v1M1098.5 362v1m0 1v8M1099.5 364v6M1100.5 366v4M1101.5 354v1m0 1v2m0 1v1m0 1v7m0 2v1M1102.5 342v32m0 29v1M1103.5 341v32m0 30v1M1104.5 329v47M1105.5 328v48M1106.5 359v15m0 1v1M1107.5 362v2m0 1v6M1108.5 296v3m0 7v1m0 2v3m0 9v5m0 6v3m0 2v2m0 5v3m0 12v3m0 5v4M1109.5 284v3m0 1v1m0 19v2m0 16v2m0 15v3m0 2v1m0 3v9m0 9v1M1110.5 289v1m0 18v2m0 1v1m0 3v3m0 2v4m0 9v2m0 7v3m0 14v2m0 6v2m0 1v1M1111.5 290v3m0 1v1m0 44v35M1112.5 295v3m0 43v31M1113.5 312v1m0 1v1m0 4v1m0 20v2m0 18v14M1114.5 281v2m0 9v1m0 11v1m0 5v2m0 5v5m0 2v1m0 22v3m0 5v2m0 6v1m0 2v6M1115.5 284v2m0 26v4m0 14v1m0 28v14m0 29v1M1116.5 280v1m0 9v2m0 21v2m0 7v3m0 1v3m0 11v3m0 7v3m0 7v11M1117.5 290v3m0 13v1m0 8v1m0 16v3m0 1v2m0 5v1m0 9v1m0 50v1M1118.5 304v3m0 46v16m0 1v1m0 1v1m0 31v1M1119.5 352v21m0 28v1M1120.5 365v1m0 1v1m0 1v1m0 31v1M1121.5 363v1m0 3v4m0 30v1M1122.5 361v1m0 2v1m0 1v4M1123.5 362v8M1124.5 365v6M1125.5 367v1m0 1v2M1126.5 364v1m0 1v3M1127.5 367v4M1128.5 362v1m0 1v9m0 30v1M1129.5 334v37M1130.5 368v1M1131.5 332v42M1132.5 367v1M1133.5 329v47M1134.5 328v47M1135.5 367v1m0 1v1M1136.5 362v8M1137.5 335v39M1138.5 334v39M1139.5 366v2M1140.5 337v32m0 33v1M1141.5 335v38M1142.5 338v1m0 7v1m0 3v2m0 3v2m0 1v1m0 5v1m0 1v4M1143.5 368v1M1144.5 364v1m0 1v1m0 1v1M1145.5 365v1m0 3v1m0 32v1M1146.5 402v1M1147.5 340v29M1148.5 340v29M1149.5 364v4M1150.5 343v27M1151.5 345v25m0 2v1m0 28v1M1152.5 343v31M1153.5 367v3M1154.5 350v1m0 1v2m0 2v2m0 2v1m0 1v1m0 1v1m0 1v2m0 33v1M1155.5 345v27m0 29v1M1156.5 344v1m0 1v27M1157.5 342v32M1158.5 342v33m0 26v1M1159.5 350v20m0 1v2M1160.5 366v4M1161.5 400v2M1162.5 362v5m0 2v1M1163.5 367v2M1164.5 359v12M1165.5 357v18M1166.5 338v37m0 26v1M1167.5 340v36M1168.5 364v1m0 4v1m0 33v1M1169.5 364v1m0 3v2m0 31v1M1170.5 366v1m0 1v1m0 32v1M1171.5 357v1m0 4v5m0 1v3m0 30v1M1172.5 358v1m0 7v6m0 29v1M1173.5 366v1m0 1v2M1174.5 342v34M1175.5 343v34m0 25v1M1176.5 365v1m0 35v1M1177.5 333v1m0 1v36M1178.5 334v1m0 2v6m0 1v8m0 1v9m0 1v7M1179.5 358v13m0 32v1M1180.5 342v28m0 33v1M1181.5 344v27M1182.5 367v2m0 1v2M1183.5 352v1m0 5v1m0 2v1m0 2v1m0 1v1m0 1v2M1184.5 337v40M1185.5 343v1m0 1v32M1186.5 338v33M1187.5 338v36m0 1v1M1188.5 339v37m0 28v1M1189.5 339v2m0 1v4m0 6v3m0 4v16M1190.5 334v1m0 1v37M1191.5 334v41m0 29v1M1192.5 343v30m0 31v1M1193.5 350v26m0 29v1M1194.5 348v26M1195.5 349v24m0 33v1M1196.5 297v103m0 6v1M1197.5 200v1m0 8v1m0 86v104M1198.5 185v62M1199.5 169v83M1200.5 163v93M1201.5 161v100M1202.5 160v105m0 1v1M1203.5 160v110M1204.5 160v111M1205.5 160v111M1206.5 161v113M1207.5 163v124m0 1v1M1208.5 169v1m0 1v1m0 1v135m0 1v3m0 1v1m0 4v3m0 4v1m0 9v1m0 2v1M1209.5 186v2m0 1v136m0 1v2m0 1v1m0 1v1m0 1v1m0 1v2m0 2v4m0 3v8m0 2v1m0 7v1m0 3v3m0 2v1m0 2v2M1210.5 201v1m0 2v3m0 1v1m0 1v142m0 1v14m0 1v8m0 1v1m0 2v5m0 1v3M1211.5 225v1m0 4v149m0 1v20M1212.5 230v27m0 1v143M1213.5 229v173M1214.5 228v175M1215.5 228v175M1216.5 228v175M1217.5 207v196M1218.5 228v174M1219.5 228v173M1220.5 229v166m0 1v2m0 1v1M1221.5 230v161m0 1v1m0 2v1M1222.5 231v154m0 1v1M1223.5 231v1m0 3v3m0 1v5m0 1v8m0 1v84m0 1v2m0 1v1m0 1v5m0 1v27m0 1v2M1224.5 190v7m0 1v1m0 1v1m0 3v1m0 1v2m0 29v14m0 1v2m0 1v2m0 1v2m0 1v5m0 1v1m0 3v1m0 1v15m0 1v41m0 1v4m0 2v1m0 1v1m0 1v1m0 3v8m0 3v1m0 1v3m0 1v5M1225.5 168v135m0 4v1m0 1v1m0 2v1m0 1v1m0 3v1m0 1v1m0 15v1m0 3v1M1226.5 168v133M1227.5 187v80m0 2v1M1228.5 186v104m0 3v2m0 1v3M1229.5 186v115M1230.5 186v115M1231.5 186v115M1232.5 187v114M1233.5 187v114M1234.5 188v113M1235.5 189v110M1236.5 193v2m0 1v1m0 1v1m0 1v86M1237.5 203v1m0 2v194M1238.5 214v2m0 2v17m0 137v1M1239.5 226v3m0 1v2m0 140v1m0 34v2M1240.5 409v1M1241.5 409v1M1243.5 374v1m0 33v1M1244.5 372v1m0 35v1M1245.5 372v1M1249.5 409v1M1250.5 373v1M1251.5 370v1M1252.5 370v1M1254.5 409v1M1255.5 409v1M1256.5 408v1M1257.5 408v1M1258.5 372v1M1263.5 371v1M1264.5 371v1M1267.5 408v1M1268.5 372v1M1269.5 372v1M1270.5 409v1M1271.5 409v1M1274.5 409v1M1275.5 409v1M1277.5 370v1M1278.5 370v1" stroke="#00b4d0" stroke-width="1" fill="none"/>
<path d="M270.5 328v50M275.5 352v26M278.5 333v45M285.5 338v39M368.5 278v2m0 2v15m0 1v11m0 1v66M369.5 278v9m0 1v5m0 1v81M371.5 252v127M405.5 264v119M406.5 271v1m0 28v1M416.5 272v27M417.5 262v73m0 1v1m0 1v2m0 1v1M418.5 259v120M419.5 260v118M420.5 262v1m0 1v72m0 1v1m0 4v1M421.5 271v1m0 1v25m0 1v1M425.5 252v128M426.5 251v129M466.5 352v1m0 1v2m0 1v1m0 3v3m0 1v3m0 1v7M467.5 353v2m0 2v2m0 1v7m0 1v8M502.5 362v16M550.5 362v15M551.5 362v15M606.5 307v2m0 1v3m0 1v63M607.5 301v78M608.5 307v1m0 1v2m0 4v63M645.5 322v57M665.5 364v1m0 1v1m0 1v1m0 2v1m0 1v2M666.5 366v1m0 2v5M688.5 273v13m0 6v17m0 18v21M689.5 273v13m0 6v17m0 18v21M704.5 321v15m0 1v10m0 1v25m0 1v2M705.5 321v20m0 1v9m0 1v10m0 1v1m0 1v16M706.5 372v12M707.5 373v8m0 1v1M722.5 360v15M723.5 366v3m0 2v1m0 2v1M731.5 333v5m0 1v7m0 1v16m0 1v10M732.5 334v17m0 1v6m0 1v16M737.5 227v26m0 32v1m0 2v1m0 15v1m0 17v1m0 35v18M738.5 226v41m0 29v1m0 34v1m0 29v4m0 1v8M739.5 225v55M740.5 225v67M741.5 227v84M742.5 238v95m0 1v1m0 2v1M743.5 254v1m0 1v108M744.5 281v1m0 3v79M745.5 226v40M746.5 226v40M750.5 365v1m0 2v1M756.5 364v1m0 2v1m0 1v1M761.5 366v1m0 2v2M763.5 368v1m0 1v1M766.5 366v1m0 3v1M767.5 364v1m0 5v1M768.5 364v2m0 1v2m0 1v1M770.5 365v1m0 1v1m0 2v1M773.5 226v23m0 3v1m0 1v1M774.5 224v46m0 29v94M775.5 224v60m0 1v3m0 11v33m0 1v36m0 1v23M776.5 224v74m0 1v1M777.5 224v87M778.5 226v96M779.5 235v98M780.5 254v87M781.5 276v69M782.5 233v2m0 1v1m0 1v8m0 1v1m0 1v2m0 5v137M783.5 230v111M784.5 229v109m0 1v1M785.5 229v107M786.5 230v104M787.5 232v90M788.5 230v79M789.5 229v68M790.5 229v57M791.5 230v44m0 25v31m0 1v62M792.5 232v1m0 1v28m0 1v1M794.5 366v1m0 1v1M795.5 370v1M800.5 364v1m0 3v2M802.5 367v1m0 1v1M803.5 365v1m0 2v1M804.5 368v3M805.5 370v1M808.5 364v2m0 1v3M809.5 215v1m0 2v1m0 2v3m0 1v1m0 1v7m0 2v1m0 1v3m0 1v5m0 118v2m0 1v2M810.5 213v44m0 6v133M811.5 212v60M812.5 212v70M813.5 213v78M814.5 215v87M815.5 230v80m0 1v1M816.5 247v2m0 1v64M817.5 274v1m0 2v37M818.5 201v24m0 1v1m0 1v1m0 1v2m0 63v95M819.5 189v78m0 109v1M820.5 188v93m0 2v1M821.5 187v108M822.5 189v119M823.5 202v106M824.5 225v83M825.5 224v84M826.5 225v71m0 1v99M827.5 227v37m0 1v2m0 31v77M830.5 363v1m0 2v1m0 1v1M833.5 369v1M836.5 365v4M837.5 368v1m0 2v2M838.5 364v1m0 1v2m0 1v1M839.5 362v1m0 1v1m0 2v2M841.5 369v1M842.5 361v1m0 2v1m0 1v1M843.5 367v3M844.5 363v1m0 3v2M845.5 360v10M847.5 366v2M849.5 364v1m0 1v1M850.5 365v7M851.5 364v9M852.5 364v4M854.5 361v1m0 2v1m0 1v2M855.5 351v22M856.5 351v22M858.5 368v1M862.5 362v1m0 1v1m0 1v1M864.5 351v23M865.5 347v50M866.5 346v51M867.5 346v51M868.5 346v51M869.5 347v50M870.5 348v49M871.5 353v21M872.5 364v2m0 2v1M873.5 366v2M874.5 367v2M875.5 363v2m0 2v1M877.5 360v1m0 2v2M878.5 368v2M879.5 365v7M880.5 365v1m0 1v1M883.5 361v1m0 1v5M884.5 366v3M885.5 349v13m0 1v8M886.5 350v1m0 1v1m0 5v3m0 1v2m0 1v3m0 2v2M887.5 361v1m0 3v1M891.5 364v4M892.5 362v1m0 1v2M897.5 368v8M898.5 361v1m0 3v12M899.5 352v28M900.5 361v19M901.5 358v21M902.5 332v1m0 1v1m0 2v1m0 1v1m0 6v1m0 1v2m0 6v24m0 1v5m0 3v4M903.5 326v70M904.5 349v1m0 3v24m0 1v4m0 3v1m0 1v2m0 3v1M905.5 346v1m0 5v22m0 1v3m0 1v2m0 2v1m0 1v2m0 1v5M906.5 325v71M907.5 338v1m0 2v5m0 2v2m0 1v38m0 1v3M908.5 336v1m0 7v37m0 1v5m0 1v5M909.5 337v1m0 3v3m0 5v1m0 1v38m0 2v2M910.5 335v1m0 4v1m0 1v2m0 1v2m0 1v42m0 1v2M911.5 335v1m0 1v2m0 2v6m0 1v3m0 1v39m0 1v1M912.5 336v1m0 1v1m0 1v2m0 2v3m0 2v2m0 1v42M913.5 336v1m0 2v1m0 1v3m0 4v1m0 2v4m0 1v39M914.5 334v2m0 5v1m0 1v3m0 1v1m0 2v2m0 1v1m0 2v5m0 1v33M915.5 339v1m0 2v1m0 2v2m0 1v1m0 1v3m0 2v4m0 1v35M916.5 344v4m0 2v3m0 2v1m0 1v1m0 3v1m0 1v33M917.5 347v1m0 3v2m0 2v41M918.5 341v1m0 5v1m0 3v44M919.5 348v46M920.5 348v45M921.5 348v41M922.5 348v35M923.5 348v28M924.5 348v23M925.5 348v19M926.5 349v17M927.5 351v16M928.5 357v8M929.5 361v4m0 1v3m0 1v1M930.5 364v1m0 1v1M933.5 366v2M934.5 226v1m0 2v3m0 1v42m0 1v1m0 1v6m0 1v4m0 4v1m0 3v1M935.5 199v149m0 1v3m0 1v1m0 1v1m0 1v1m0 3v1m0 6v1M936.5 191v206M937.5 190v194m0 1v12M938.5 190v164m0 1v4m0 2v1m0 1v1m0 2v2M939.5 190v108M940.5 192v82m0 1v1M941.5 198v45m0 1v4m0 1v1m0 40v1m0 2v1m0 1v1m0 8v1m0 3v2m0 16v1m0 2v1m0 2v1m0 7v1m0 10v1m0 9v1m0 3v1m0 26v1m0 3v1m0 1v1M942.5 211v1m0 79v1m0 20v1m0 1v1m0 6v1m0 3v2m0 5v1m0 1v1m0 3v2m0 15v1m0 9v1m0 8v1m0 3v2m0 4v2m0 1v1M945.5 367v1M946.5 361v1M947.5 337v4m0 2v1m0 2v1m0 3v1m0 2v1m0 1v1m0 1v1m0 1v3m0 2v2m0 1v4M949.5 340v2m0 1v2m0 7v2m0 1v2m0 1v1m0 2v3m0 2v2M950.5 337v4m0 1v29M951.5 364v1M952.5 365v6M953.5 364v7M954.5 366v1m0 1v1M955.5 362v5m0 1v4M956.5 361v11M957.5 364v2m0 1v2M958.5 366v1m0 1v1M959.5 356v3m0 1v9m0 1v1M960.5 342v31M961.5 342v32M962.5 359v14M963.5 361v1m0 1v1M964.5 337v37M965.5 365v1m0 1v1M966.5 366v1M967.5 362v1m0 1v1m0 1v3M968.5 345v29M969.5 344v31M970.5 359v13M971.5 365v7M973.5 364v1m0 2v1M974.5 364v1M975.5 361v1m0 2v1m0 3v1M976.5 366v1M977.5 363v1m0 1v2M979.5 337v38M980.5 339v33M981.5 366v1m0 2v1M982.5 360v1m0 2v1m0 3v1M983.5 366v1M984.5 366v1M985.5 351v1m0 4v1m0 3v1m0 3v2m0 1v3m0 1v1M986.5 351v1m0 8v3m0 5v1M987.5 364v1m0 4v1M990.5 351v21M993.5 360v1m0 1v1m0 1v2m0 1v4m0 1v1M995.5 318v57M996.5 319v56M997.5 346v2m0 2v2m0 1v4m0 1v15M999.5 343v30m0 2v1M1000.5 342v32M1001.5 368v1M1002.5 364v1M1003.5 348v27M1004.5 349v26M1005.5 359v1m0 4v1m0 3v1M1006.5 363v10m0 1v1M1007.5 353v3m0 2v2m0 2v3m0 1v8M1008.5 349v14m0 1v5m0 1v3M1011.5 103v3m0 236v2m0 3v1m0 1v3m0 4v1m0 3v1m0 5v1m0 1v1M1012.5 102v11M1013.5 101v17m0 1v1m0 1v2m0 2v1m0 1v2m0 3v1m0 2v2m0 1v3m0 1v2m0 1v5m0 1v2m0 1v1m0 1v4m0 1v1m0 1v1m0 2v1m0 1v1m0 2v1m0 3v2m0 17v1m0 9v1m0 11v2m0 1v1m0 5v1m0 5v1m0 20v1M1014.5 100v25m0 1v3m0 1v19m0 1v10m0 1v4m0 1v14m0 1v12m0 1v2m0 2v1m0 1v4m0 3v3m0 2v6m0 4v1m0 1v1m0 1v5m0 2v2m0 1v1m0 2v1m0 1v1m0 1v1m0 3v5m0 1v1m0 3v2m0 9v2m0 12v2m0 2v2m0 2v1m0 5v2m0 3v1m0 7v1M1015.5 99v49m0 1v11m0 1v37m0 2v11m0 1v4m0 1v23m0 1v7m0 1v2m0 1v9m0 2v1m0 1v1m0 2v2m0 1v2m0 2v3m0 1v2m0 2v4m0 1v2m0 1v2m0 2v1m0 1v1m0 1v1m0 1v2m0 2v2m0 1v1m0 1v1m0 2v1m0 1v6m0 1v3m0 7v2m0 1v1m0 2v2m0 4v1m0 5v1m0 2v2m0 23v1m0 6v1M1016.5 100v57m0 1v116m0 1v3m0 1v16m0 1v6m0 1v10m0 1v7m0 1v7m0 1v2m0 1v4m0 1v11m0 1v1m0 1v1m0 1v1m0 1v4m0 1v6m0 2v1m0 1v1m0 1v1m0 4v1m0 3v1m0 6v1m0 2v1M1017.5 100v1m0 1v99m0 1v51m0 1v28m0 1v42m0 1v17m0 1v1m0 1v12m0 1v3m0 1v2m0 1v2m0 1v4m0 2v11m0 1v1m0 1v4M1018.5 111v143m0 1v7m0 1v71m0 1v19m0 1v3m0 1v19m0 1v14M1019.5 116v33m0 1v1m0 1v12m0 1v6m0 1v13m0 1v149m0 1v38m0 1v18M1020.5 120v1m0 1v45m0 1v71m0 1v137m0 1v15M1021.5 126v31m0 1v1m0 1v7m0 1v35m0 1v76m0 1v112M1022.5 131v262M1023.5 137v30m0 4v140m0 1v9m0 1v71M1024.5 141v31m0 3v2m0 1v1m0 1v9m0 1v130m0 1v72M1025.5 146v32m0 6v3m0 1v2m0 1v26m0 1v85m0 1v87m0 1v1M1026.5 152v35m0 7v2m0 1v7m0 1v2m0 1v84m0 1v11m0 1v15m0 1v66m0 1v3m0 1v1M1027.5 155v66m0 1v8m0 1v37m0 1v45m0 1v66m0 1v8m0 2v1M1028.5 154v91m0 1v34m0 1v42m0 1v9m0 1v17m0 1v34m0 2v2m0 1v1M1029.5 154v115m0 1v11m0 1v25m0 1v70m0 1v5m0 5v1M1030.5 153v199m0 1v1m0 1v1m0 1v19m0 1v3m0 3v1M1031.5 154v130m0 1v15m0 1v2m0 1v2m0 1v10m0 1v9m0 1v3m0 1v41m0 1v4M1032.5 155v126m0 2v2m0 7v6m0 1v4m0 1v2m0 1v3m0 3v2m0 1v1m0 1v4m0 1v7m0 1v1m0 1v5m0 1v1m0 2v1m0 1v3m0 1v1m0 1v3m0 1v5m0 1v1m0 1v2m0 1v4m0 1v2M1033.5 165v116m0 14v1m0 2v2m0 8v1m0 3v1m0 7v1m0 8v1m0 1v2m0 1v1m0 1v1m0 3v4m0 1v1m0 6v1m0 1v1m0 3v1m0 1v2m0 1v1m0 2v1m0 1v4m0 1v1M1034.5 174v107m0 72v1M1035.5 190v2m0 1v7m0 1v87m0 1v2M1036.5 231v71m0 1v1m0 13v1m0 2v3M1037.5 240v1m0 1v88M1038.5 253v86M1039.5 265v79m0 1v1M1040.5 278v76M1041.5 282v79M1042.5 281v89M1043.5 281v96M1044.5 281v106M1045.5 285v109M1046.5 331v63M1047.5 345v49M1048.5 354v40M1049.5 361v26M1050.5 227v166M1051.5 130v1m0 2v58m0 1v1m0 183v5M1052.5 117v1m0 1v84m0 1v2m0 3v1M1053.5 112v110M1054.5 111v115M1055.5 110v116M1056.5 111v115M1057.5 112v114M1058.5 113v1m0 1v111M1059.5 124v102M1060.5 133v2m0 2v43m0 1v41m0 7v164M1061.5 197v196M1062.5 190v1m0 7v38M1063.5 189v56M1064.5 188v67m0 1v1M1065.5 188v83m0 1v13m0 1v2M1066.5 187v104M1067.5 188v103M1068.5 189v102M1069.5 197v1m0 4v1m0 1v1m0 4v6m0 1v2m0 1v1m0 1v3m0 1v2m0 2v62M1070.5 238v43m0 1v1m0 4v2M1071.5 227v166M1072.5 165v39m0 1v1m0 56v18M1073.5 154v1m0 2v60m0 55v4m0 1v2M1074.5 148v76m0 1v2M1075.5 146v86M1076.5 145v87M1077.5 146v86M1078.5 146v86M1079.5 147v85M1080.5 157v75M1081.5 165v1m0 1v47m0 1v1m0 1v1m0 3v1m0 2v1M1082.5 227v166M1087.5 347v29M1088.5 348v27M1089.5 356v20M1090.5 368v2m0 1v1M1093.5 368v1M1094.5 366v1m0 2v1M1095.5 370v1M1096.5 365v3M1097.5 359v16M1098.5 362v1m0 1v2M1099.5 365v2m0 2v1M1100.5 366v3M1101.5 367v1m0 2v1M1102.5 351v14m0 1v8M1103.5 344v1m0 7v1m0 1v5m0 1v1m0 1v1m0 2v1m0 1v6M1104.5 329v47M1105.5 330v46M1106.5 361v13m0 1v1M1107.5 365v1m0 2v1m0 1v1M1108.5 367v1m0 2v1M1109.5 370v1M1110.5 370v1M1111.5 341v8m0 1v24M1112.5 369v2M1113.5 362v12M1115.5 363v10M1118.5 355v2m0 1v6m0 1v1m0 1v1m0 2v1m0 1v1M1119.5 354v19M1120.5 367v1m0 1v1M1121.5 367v1M1122.5 364v1m0 3v2M1123.5 368v1M1124.5 365v1m0 3v2M1125.5 367v1m0 2v1M1126.5 364v1m0 2v2M1127.5 368v1m0 1v1M1128.5 367v6M1129.5 368v1M1130.5 368v1M1131.5 335v39M1133.5 330v46M1134.5 330v45M1135.5 369v1M1136.5 364v1m0 1v1M1137.5 337v37M1138.5 336v27m0 1v9M1139.5 366v1M1140.5 365v1M1141.5 337v36M1142.5 364v1m0 1v1m0 1v2M1144.5 364v1M1145.5 365v1m0 3v1M1148.5 351v1m0 16v1M1149.5 366v2M1150.5 360v1m0 3v1m0 1v1m0 1v2M1151.5 362v1m0 2v2m0 2v1m0 2v1M1152.5 345v29M1155.5 350v1m0 1v1m0 1v3m0 1v6m0 1v2m0 1v4M1156.5 350v1m0 1v21M1157.5 343v31M1158.5 344v31M1159.5 352v3m0 1v1m0 2v11m0 1v2M1160.5 367v1M1162.5 362v1m0 2v1m0 3v1M1163.5 367v2M1164.5 361v2m0 1v7M1165.5 359v16M1166.5 342v33M1167.5 342v34M1168.5 369v1M1169.5 369v1M1170.5 366v1M1171.5 362v1m0 7v1M1172.5 369v1M1173.5 369v1M1174.5 344v32M1175.5 344v33M1177.5 369v1M1178.5 368v1M1179.5 366v1m0 1v1M1182.5 367v1M1183.5 366v1m0 1v2M1184.5 338v1m0 1v37M1185.5 346v31M1187.5 339v1m0 1v1m0 3v3m0 1v2m0 2v2m0 1v1m0 1v4m0 1v2m0 1v2m0 2v4m0 1v1M1188.5 347v29M1189.5 361v6m0 1v7M1190.5 366v1m0 1v1m0 2v1M1191.5 345v1m0 2v2m0 5v4m0 2v3m0 1v1m0 3v6M1192.5 365v1m0 1v1m0 4v1M1193.5 362v14M1194.5 350v1m0 1v5m0 1v16M1195.5 352v1m0 1v1m0 7v2m0 1v1m0 2v1m0 2v1M1196.5 298v102M1197.5 298v102M1198.5 205v1m0 7v1M1199.5 185v3m0 1v58M1200.5 167v1m0 1v83M1201.5 163v93M1202.5 161v100M1203.5 161v106M1204.5 162v109M1205.5 162v109M1206.5 163v108M1207.5 166v1m0 1v1m0 2v102M1208.5 186v4m0 1v3m0 1v89m0 2v1M1209.5 205v99m0 1v2m0 12v1M1210.5 228v1m0 3v1m0 1v89m0 1v1m0 1v2m0 3v2m0 1v3m0 1v1m0 3v2m0 3v1m0 11v1m0 11v1M1211.5 233v1m0 1v1m0 1v2m0 1v1m0 1v1m0 1v1m0 2v8m0 1v88m0 2v1m0 1v1m0 2v1m0 5v1m0 1v1m0 1v2m0 2v2m0 1v1m0 3v1m0 9v1M1212.5 230v7m0 1v19m0 1v2m0 1v5m0 1v96m0 1v21m0 1v7m0 1v1m0 3v1M1213.5 230v16m0 1v154M1214.5 230v172M1215.5 230v35m0 1v136M1216.5 229v1m0 1v1m0 1v9m0 1v40m0 1v35m0 1v82M1217.5 208v193M1218.5 229v111m0 1v60M1219.5 230v41m0 1v121m0 2v2M1220.5 230v32m0 1v26m0 1v5m0 1v61m0 1v18m0 1v8m0 2v1m0 2v1m0 1v1M1221.5 232v1m0 1v13m0 1v27m0 1v12m0 1v14m0 1v4m0 1v69m0 3v2M1222.5 232v1m0 1v3m0 2v2m0 3v1m0 2v5m0 1v13m0 1v9m0 1v25m0 1v3m0 1v10m0 1v7m0 1v6m0 1v3m0 1v3m0 1v7m0 1v2m0 1v2m0 2v1m0 1v1m0 1v1m0 2v1m0 1v2m0 2v2m0 2v2m0 1v1m0 1v1M1223.5 247v2m0 6v2m0 1v2m0 6v2m0 1v3m0 1v1m0 3v7m0 1v5m0 1v2m0 1v1m0 1v2m0 2v1m0 1v4m0 2v3m0 2v2m0 2v1m0 1v2m0 3v1m0 1v1m0 12v2m0 10v1m0 1v1m0 1v2m0 10v1M1224.5 241v3m0 41v1M1225.5 169v132M1226.5 169v132M1227.5 188v74M1228.5 187v81M1229.5 187v108m0 1v3M1230.5 188v113M1231.5 187v114M1232.5 188v113M1233.5 189v112M1234.5 190v107m0 2v2M1235.5 198v90m0 1v1M1236.5 206v34m0 13v24m0 1v1M1237.5 218v182M1238.5 225v1m0 2v5" stroke="#00d278" stroke-width="1" fill="none"/>
<path d="M270.5 329v49M275.5 355v2m0 1v4m0 1v4m0 1v1m0 1v8M278.5 334v44M285.5 340v37M368.5 338v1m0 16v1m0 3v1m0 9v1m0 1v5M369.5 344v1m0 1v1m0 4v1m0 2v1m0 4v1m0 1v1m0 1v2m0 6v1m0 2v1M371.5 253v126M405.5 265v118M416.5 279v1m0 2v5m0 3v1M417.5 267v49m0 1v4m0 1v1m0 9v1M418.5 264v75m0 1v1m0 1v3m0 1v4M419.5 264v82m0 1v1m0 1v1m0 1v1m0 1v3M420.5 269v51m0 1v1m0 3v1m0 2v1M421.5 279v1m0 2v7M425.5 254v126M426.5 253v127M606.5 345v1m0 13v1m0 12v1M607.5 304v1m0 1v6m0 1v66M608.5 363v1M645.5 323v15m0 1v19m0 1v20M688.5 274v12m0 7v16m0 21v18M689.5 275v10m0 9v15m0 20v2m0 1v16M705.5 374v7M706.5 373v11M707.5 373v8m0 1v1M722.5 362v1m0 2v4m0 1v1m0 1v1m0 1v1M737.5 233v1m0 2v5m0 1v6m0 113v1m0 1v1m0 1v5m0 1v5M738.5 227v34M739.5 227v48M740.5 227v61M741.5 232v73M742.5 244v1m0 1v79m0 1v1M743.5 261v83m0 1v2m0 1v11m0 1v1M744.5 291v1m0 1v1m0 1v2m0 3v1m0 1v1m0 3v1m0 1v1m0 1v1m0 1v5m0 1v2m0 1v2m0 1v3m0 1v3m0 1v1m0 1v2m0 1v4m0 3v3m0 3v2m0 6v1M745.5 228v5m0 1v6m0 2v2m0 1v3m0 1v5m0 2v3m0 1v2m0 1v2M746.5 228v5m0 1v2m0 1v1m0 1v6m0 2v5m0 1v4m0 2v5m0 1v1M773.5 233v1M774.5 226v38m0 1v1M775.5 226v50m0 1v2M776.5 225v65m0 1v2M777.5 226v79M778.5 228v1m0 1v1m0 1v85M779.5 242v1m0 3v84M780.5 262v74m0 1v1M781.5 282v1m0 2v6m0 1v49M782.5 265v2m0 2v124M783.5 232v109M784.5 231v98m0 1v6M785.5 231v105M786.5 231v96m0 1v2M787.5 241v74m0 1v2M788.5 231v73m0 2v1M789.5 231v61m0 1v1M790.5 231v49m0 1v2M791.5 231v40M792.5 245v1m0 2v1m0 1v1m0 1v1m0 1v1m0 2v2M810.5 214v39m0 12v19m0 1v42m0 1v68M811.5 213v54M812.5 213v64M813.5 214v72M814.5 221v73m0 1v2M815.5 234v73M816.5 253v1m0 2v58M817.5 288v26M818.5 210v4m0 1v1m0 83v91M819.5 191v60m0 1v1m0 1v1m0 1v2M820.5 189v87M821.5 188v100m0 2v1M822.5 191v111M823.5 208v1m0 2v2m0 4v91M824.5 226v82M825.5 225v76M826.5 226v62m0 2v1m0 9v6m0 3v2m0 3v1m0 3v2m0 4v1m0 1v2m0 1v1m0 3v2m0 1v1m0 1v4m0 1v1m0 4v2m0 2v5m0 3v1m0 7v1m0 1v1m0 2v2m0 3v2m0 1v2m0 2v1m0 2v3m0 2v1M827.5 244v1m0 1v2m0 1v1m0 1v2m0 1v1m0 45v1m0 2v3m0 5v2m0 1v1m0 2v6m0 7v2m0 1v1m0 1v1m0 2v1m0 1v5m0 1v1m0 1v3m0 1v3m0 1v3m0 1v2m0 2v2m0 1v3m0 3v2M850.5 366v1m0 3v1M851.5 368v1M864.5 364v1m0 1v8M865.5 349v44M866.5 348v49M867.5 348v49M868.5 348v49M869.5 349v48M870.5 352v39m0 2v1M871.5 359v5m0 2v6m0 1v1M897.5 371v5M898.5 368v9M899.5 359v1m0 6v13M900.5 363v16M901.5 360v18M902.5 358v19M903.5 328v68M904.5 353v21m0 13v1M905.5 353v18M906.5 326v70M907.5 349v1m0 2v21m0 1v2m0 3v1m0 1v1m0 4v1M908.5 346v1m0 1v1m0 3v24m0 3v1m0 3v1M909.5 353v26m0 9v1M910.5 353v30m0 3v1m0 2v1M911.5 356v30m0 1v2M912.5 360v31M913.5 351v1m0 4v1m0 3v2m0 2v29M914.5 362v1m0 4v27M915.5 361v1m0 7v2m0 1v23M916.5 346v1m0 10v1m0 3v1m0 6v27M917.5 357v2m0 3v1m0 1v31M918.5 356v38M919.5 351v42M920.5 349v41M921.5 349v35M922.5 348v31M923.5 348v23M924.5 349v18M925.5 350v16M926.5 351v14M927.5 355v10M928.5 360v4M934.5 243v2m0 1v20M935.5 203v1m0 1v99m0 1v5m0 2v2m0 1v1M936.5 195v130m0 1v8m0 1v3m0 2v3m0 1v1m0 1v4m0 3v3m0 2v1m0 5v1m0 17v1M937.5 191v146m0 2v2m0 1v2m0 3v1m0 2v1m0 4v1m0 1v1m0 14v2M938.5 191v111m0 1v1m0 3v5m0 1v2m0 2v1m0 2v1m0 1v1m0 4v1m0 1v1M939.5 192v87m0 1v3m0 5v1M940.5 195v1m0 1v66m0 1v3M941.5 204v1m0 1v24M960.5 344v29M961.5 343v31M962.5 364v1m0 2v1m0 2v3M964.5 338v36M968.5 346v1m0 3v4m0 2v1m0 1v1m0 4v2m0 4v1m0 2v2M969.5 346v10m0 1v13m0 1v4M971.5 366v3m0 2v1M979.5 338v37M990.5 364v1M995.5 320v55M996.5 320v55M997.5 372v1M999.5 375v1M1000.5 343v4m0 1v1m0 1v1m0 3v1m0 2v1m0 1v2m0 2v1m0 1v3m0 1v1m0 3v1M1003.5 350v25M1004.5 350v25M1006.5 364v4m0 1v1m0 1v2m0 1v1M1012.5 103v2m0 1v1M1013.5 102v10m0 15v1M1014.5 102v14m0 2v1m0 1v2m0 1v1m0 3v2m0 1v2m0 1v1m0 2v2m0 1v1m0 2v3m0 2v2m0 1v1m0 1v4m0 1v2m0 10v3m0 13v1m0 1v1m0 19v1M1015.5 100v4m0 1v16m0 1v1m0 1v2m0 1v3m0 1v7m0 3v3m0 1v3m0 1v4m0 2v3m0 1v1m0 1v1m0 1v2m0 1v3m0 1v3m0 1v1m0 2v1m0 2v2m0 2v2m0 1v2m0 1v1m0 1v1m0 1v4m0 2v2m0 1v1m0 5v2m0 3v1m0 4v1m0 1v1m0 1v1m0 1v2m0 2v1m0 2v1m0 5v1m0 2v1m0 15v1m0 58v1M1016.5 102v1m0 3v19m0 1v5m0 1v10m0 1v4m0 2v4m0 3v1m0 1v11m0 1v4m0 1v1m0 2v1m0 1v1m0 1v6m0 2v1m0 2v9m0 1v2m0 2v1m0 2v1m0 1v3m0 1v1m0 1v1m0 1v2m0 1v1m0 2v4m0 1v1m0 1v1m0 1v1m0 1v1m0 3v3m0 1v3m0 2v1m0 1v1m0 1v1m0 1v3m0 6v1m0 2v1m0 3v1m0 2v1m0 4v3m0 2v1m0 2v1m0 2v1m0 15v1m0 6v1m0 5v1m0 15v1m0 15v1M1017.5 102v2m0 5v27m0 1v1m0 1v4m0 1v6m0 1v7m0 2v1m0 2v2m0 1v4m0 1v2m0 1v27m0 1v10m0 2v2m0 1v8m0 3v9m0 1v11m0 1v3m0 3v4m0 1v2m0 4v3m0 1v3m0 1v3m0 1v3m0 2v1m0 1v1m0 3v6m0 2v1m0 1v1m0 1v2m0 1v1m0 1v3m0 1v1m0 3v5m0 3v2m0 3v1m0 3v1m0 3v2m0 3v2m0 1v1m0 3v1m0 3v1m0 2v1m0 1v1m0 1v1m0 7v1m0 4v1m0 8v1m0 5v1m0 1v1M1018.5 117v19m0 1v1m0 1v1m0 1v5m0 1v1m0 2v7m0 1v9m0 1v1m0 1v2m0 1v3m0 1v11m0 1v4m0 1v3m0 1v8m0 2v1m0 1v16m0 1v6m0 1v2m0 1v12m0 1v4m0 1v2m0 1v4m0 1v7m0 2v4m0 1v4m0 2v1m0 1v6m0 1v4m0 1v10m0 2v2m0 1v5m0 1v1m0 1v3m0 1v4m0 1v1m0 1v1m0 1v1m0 1v1m0 1v1m0 1v3m0 3v1m0 1v1m0 1v1m0 5v3m0 2v2m0 2v2m0 2v3m0 1v1m0 2v3m0 1v3m0 3v2m0 2v1M1019.5 122v20m0 2v1m0 3v1m0 7v1m0 1v2m0 2v2m0 1v6m0 3v11m0 1v1m0 1v16m0 1v2m0 1v6m0 1v1m0 1v5m0 1v1m0 1v2m0 2v2m0 1v21m0 2v10m0 1v2m0 1v1m0 1v11m0 1v7m0 3v13m0 1v1m0 1v2m0 1v4m0 2v14m0 1v2m0 1v2m0 1v4m0 1v7m0 2v1m0 1v4m0 1v1m0 1v2m0 1v3m0 1v4m0 2v2m0 3v1m0 3v1m0 2v1m0 1v3M1020.5 127v20m0 9v8m0 1v1m0 2v9m0 2v2m0 2v12m0 1v4m0 1v7m0 1v30m0 1v23m0 1v23m0 1v4m0 2v4m0 1v3m0 1v4m0 1v2m0 1v3m0 1v11m0 1v1m0 1v3m0 1v3m0 1v11m0 1v4m0 1v1m0 1v1m0 1v2m0 1v3m0 1v4m0 1v5m0 1v1m0 2v1m0 1v1m0 2v1m0 2v1m0 1v1m0 1v2M1021.5 132v19m0 13v1m0 3v1m0 1v1m0 1v2m0 2v3m0 1v6m0 2v8m0 1v4m0 1v1m0 2v3m0 1v2m0 1v13m0 2v6m0 1v11m0 1v1m0 1v24m0 1v5m0 1v1m0 1v1m0 1v9m0 1v7m0 1v5m0 1v1m0 2v3m0 1v17m0 1v26m0 1v3m0 1v4m0 1v1m0 1v6m0 1v4m0 1v1m0 1v1m0 1v1m0 3v3M1022.5 137v1m0 1v17m0 18v4m0 3v2m0 1v17m0 1v3m0 1v2m0 2v2m0 1v12m0 1v8m0 3v11m0 1v4m0 1v5m0 1v1m0 1v12m0 1v4m0 1v15m0 1v11m0 1v5m0 1v4m0 1v35m0 1v19m0 1v2m0 1v1m0 1v3m0 1v1m0 1v1m0 1v5M1023.5 142v20m0 13v1m0 7v3m0 1v4m0 1v5m0 1v7m0 2v4m0 1v7m0 1v1m0 2v15m0 1v8m0 1v2m0 1v4m0 1v5m0 2v48m0 1v9m0 1v5m0 1v14m0 1v5m0 1v3m0 1v4m0 1v5m0 1v2m0 1v2m0 3v3m0 1v2m0 1v5m0 1v4m0 1v2M1024.5 146v2m0 1v18m0 20v2m0 1v1m0 1v2m0 1v27m0 1v4m0 1v26m0 1v30m0 2v24m0 1v8m0 1v3m0 1v7m0 1v10m0 1v6m0 1v6m0 1v1m0 1v17m0 1v3m0 1v3m0 1v2m0 1v1m0 2v1M1025.5 153v19m0 24v2m0 2v6m0 1v1m0 1v3m0 1v4m0 1v3m0 2v1m0 1v5m0 1v1m0 1v19m0 1v1m0 1v7m0 1v1m0 1v8m0 1v4m0 1v12m0 1v11m0 1v4m0 1v10m0 1v18m0 1v9m0 1v3m0 1v6m0 1v4m0 1v1m0 1v3m0 1v1m0 1v6m0 1v1m0 1v2m0 1v2m0 3v1M1026.5 158v20m0 22v1m0 5v1m0 1v8m0 1v1m0 1v8m0 1v3m0 1v3m0 2v4m0 1v5m0 1v18m0 1v2m0 1v12m0 1v9m0 1v7m0 2v2m0 1v6m0 1v2m0 1v1m0 1v3m0 1v16m0 1v1m0 2v5m0 2v17m0 1v1m0 1v7m0 1v2m0 1v3m0 1v1m0 1v1m0 2v2M1027.5 163v28m0 1v1m0 8v1m0 10v1m0 1v3m0 1v1m0 1v1m0 2v7m0 3v5m0 1v6m0 1v1m0 1v4m0 2v4m0 1v3m0 1v2m0 1v2m0 1v4m0 1v26m0 1v13m0 1v3m0 1v2m0 2v4m0 1v4m0 1v14m0 1v11m0 1v9m0 1v1m0 1v3m0 1v5m0 2v2M1028.5 155v71m0 2v3m0 3v1m0 1v2m0 6v1m0 1v3m0 1v3m0 1v1m0 2v1m0 1v2m0 1v1m0 1v3m0 2v2m0 1v2m0 1v1m0 1v3m0 1v2m0 1v1m0 2v2m0 1v1m0 1v9m0 1v8m0 1v2m0 1v5m0 1v1m0 1v1m0 2v1m0 1v6m0 2v6m0 1v2m0 1v1m0 1v4m0 2v2m0 2v1m0 1v10m0 1v2m0 8v1M1029.5 155v96m0 2v2m0 3v2m0 2v1m0 2v1m0 4v4m0 1v1m0 1v2m0 1v1m0 2v7m0 1v8m0 1v3m0 1v1m0 1v1m0 1v8m0 2v3m0 1v6m0 2v2m0 2v2m0 1v1m0 1v15m0 2v1m0 2v1m0 1v12m0 1v1m0 2v1M1030.5 155v110m0 2v2m0 1v3m0 1v1m0 3v1m0 3v1m0 2v1m0 1v1m0 3v1m0 3v2m0 3v2m0 1v1m0 2v1m0 1v1m0 3v1m0 1v4m0 1v3m0 2v5m0 1v3m0 1v1m0 2v2m0 5v3m0 1v2m0 3v1m0 1v1m0 1v4m0 2v1m0 1v4m0 1v2m0 1v1m0 4v1M1031.5 156v125m0 5v1m0 4v2m0 5v1m0 2v1m0 2v2m0 8v1m0 3v1m0 7v1m0 1v2m0 6v1m0 3v2m0 3v7m0 3v2m0 1v1m0 2v1m0 1v3m0 1v2m0 2v1m0 2v1M1032.5 159v1m0 1v1m0 1v118m0 61v1m0 9v1m0 12v2M1033.5 169v2m0 2v108M1034.5 182v99M1035.5 223v1m0 6v51M1036.5 241v2m0 1v47M1037.5 253v1m0 2v45m0 1v1m0 12v2m0 1v8M1038.5 268v66M1039.5 277v63M1040.5 290v58M1041.5 286v70m0 1v1M1042.5 283v1m0 1v80M1043.5 283v92M1044.5 284v1m0 2v1m0 1v94M1045.5 326v68M1046.5 340v1m0 1v52M1047.5 353v41M1048.5 362v30M1049.5 370v14M1050.5 229v4m0 1v159M1052.5 126v2m0 1v1m0 1v6m0 1v52m0 1v1m0 3v1M1053.5 113v2m0 1v1m0 1v5m0 1v85m0 1v1M1054.5 112v98m0 1v8m0 1v2M1055.5 112v114M1056.5 112v114M1057.5 114v2m0 1v109M1058.5 122v1m0 1v102M1059.5 132v46m0 1v34m0 2v2m0 2v1M1060.5 198v21m0 20v1m0 4v1m0 6v1m0 7v1m0 4v1m0 16v1m0 13v1m0 40v1m0 27v1m0 4v1m0 7v1M1061.5 198v27m0 7v1m0 11v1m0 15v3m0 5v1m0 25v1m0 11v1m0 4v1m0 2v1m0 20v3m0 3v1m0 26v1m0 8v1m0 1v1M1062.5 198v32M1063.5 199v37m0 1v1M1064.5 198v2m0 4v43M1065.5 189v1m0 1v2m0 2v1m0 1v7m0 1v1m0 2v50m0 1v1M1066.5 191v1m0 1v5m0 1v5m0 1v1m0 1v1m0 1v2m0 1v4m0 1v52m0 1v1m0 1v3m0 8v3M1067.5 190v1m0 6v1m0 3v1m0 1v1m0 2v1m0 3v1m0 1v2m0 1v4m0 1v3m0 1v55m0 4v2M1068.5 209v2m0 4v1m0 13v51m0 3v6M1069.5 237v43m0 3v1m0 2v1m0 2v2M1070.5 244v1m0 1v2m0 1v31M1071.5 229v17m0 1v66m0 1v79M1072.5 172v1m0 97v2m0 1v5M1073.5 164v38m0 1v2m0 1v1M1074.5 153v62m0 1v3m0 1v1M1075.5 147v79m0 1v1m0 1v1M1076.5 147v85M1077.5 147v85M1078.5 148v84M1079.5 152v80M1080.5 162v1m0 1v45m0 1v3m0 1v4m0 1v4m0 3v1M1082.5 229v59m0 1v104M1087.5 349v3m0 2v1m0 2v8m0 1v7m0 1v2M1088.5 360v2M1089.5 357v2m0 1v2m0 1v4m0 2v4m0 1v2M1097.5 364v2m0 6v1M1104.5 331v45M1105.5 331v18m0 1v26M1106.5 362v12m0 1v1M1131.5 342v1m0 5v1m0 9v2m0 8v1m0 1v1M1133.5 331v45M1134.5 332v43M1141.5 343v1m0 5v1m0 2v1m0 3v1m0 5v2m0 8v1M1152.5 363v1m0 5v1m0 2v1M1156.5 354v1m0 2v1m0 1v4m0 1v2m0 2v4M1157.5 345v29M1158.5 345v14m0 1v15M1165.5 361v14M1166.5 343v32M1167.5 343v33M1174.5 345v31M1175.5 345v32M1184.5 352v25M1185.5 348v29M1188.5 350v1m0 2v1m0 4v2m0 3v1m0 1v1m0 7v3M1196.5 300v1m0 1v97M1197.5 299v97m0 1v1m0 1v1M1199.5 199v2m0 5v1m0 3v1m0 1v1m0 5v1m0 2v1m0 4v1M1200.5 184v1m0 1v1m0 2v58M1201.5 166v2m0 1v83M1202.5 163v95M1203.5 163v101M1204.5 163v105M1205.5 163v108M1206.5 169v2m0 1v99M1207.5 183v1m0 3v84M1208.5 199v1m0 1v1m0 3v1m0 1v69M1209.5 220v1m0 3v65m0 1v3M1210.5 252v1m0 1v53M1211.5 263v1m0 3v1m0 1v64m0 4v1m0 1v1m0 2v1m0 5v1M1212.5 232v2m0 10v3m0 2v1m0 9v1m0 2v4m0 1v2m0 1v1m0 1v76m0 1v4m0 3v1m0 3v2m0 2v4m0 3v1m0 1v1m0 1v1m0 7v2M1213.5 231v4m0 2v5m0 1v1m0 1v1m0 2v1m0 2v7m0 1v4m0 1v3m0 1v2m0 1v1m0 1v7m0 1v2m0 1v93m0 1v8m0 3v3m0 5v1M1214.5 231v10m0 1v3m0 3v3m0 1v10m0 1v11m0 1v4m0 1v9m0 1v2m0 1v1m0 1v106M1215.5 231v5m0 1v1m0 1v3m0 1v1m0 1v2m0 1v12m0 1v3m0 2v21m0 1v113M1216.5 231v1m0 1v2m0 1v2m0 2v1m0 3v1m0 1v1m0 1v7m0 1v9m0 1v1m0 2v8m0 1v5m0 1v10m0 1v1m0 1v6m0 1v6m0 1v8m0 1v10m0 1v6m0 1v5m0 1v57M1217.5 209v1m0 1v1m0 1v2m0 3v1m0 2v1m0 1v2m0 1v1m0 3v1m0 1v6m0 1v19m0 1v21m0 1v30m0 1v34m0 1v54M1218.5 232v3m0 1v9m0 2v5m0 1v20m0 1v13m0 2v10m0 2v1m0 1v11m0 2v8m0 1v1m0 1v9m0 1v2m0 2v7m0 1v26m0 1v2m0 1v6m0 1v2m0 1v2m0 3v1M1219.5 232v2m0 1v4m0 1v1m0 1v3m0 1v14m0 1v6m0 1v3m0 1v2m0 1v6m0 2v9m0 2v5m0 1v17m0 1v1m0 1v20m0 1v10m0 1v2m0 1v4m0 1v6m0 1v3m0 1v1m0 2v6m0 1v7m0 3v1M1220.5 231v2m0 2v1m0 2v1m0 1v1m0 2v2m0 1v3m0 1v12m0 1v16m0 1v6m0 1v2m0 1v1m0 1v3m0 1v4m0 1v4m0 1v6m0 1v7m0 1v1m0 1v4m0 1v12m0 1v12m0 2v2m0 3v3m0 2v9m0 1v1m0 1v1m0 1v1m0 4v1M1221.5 232v1m0 2v1m0 7v2m0 5v4m0 3v1m0 6v4m0 2v1m0 1v1m0 1v1m0 1v3m0 1v1m0 2v5m0 2v2m0 1v7m0 1v2m0 1v2m0 1v1m0 1v4m0 1v3m0 1v2m0 1v1m0 1v1m0 1v6m0 1v3m0 1v1m0 1v8m0 3v4m0 1v1m0 1v4m0 1v2m0 3v1m0 2v1m0 4v1m0 7v1M1222.5 261v1m0 2v1m0 6v1m0 11v1m0 2v1m0 1v1m0 1v2m0 1v4m0 6v1m0 1v1m0 2v1m0 6v2m0 1v1m0 1v1m0 1v1m0 5v3m0 6v1m0 3v1m0 2v1M1225.5 170v2m0 2v1m0 2v2m0 1v2m0 1v2m0 1v5m0 1v6m0 1v1m0 1v8m0 1v1m0 1v5m0 2v1m0 1v7m0 3v5m0 1v1m0 2v4m0 1v6m0 2v1m0 1v1m0 1v2m0 2v3m0 2v4m0 1v2m0 1v1m0 1v1m0 3v3m0 1v8m0 3v2m0 1v3M1226.5 170v3m0 1v1m0 1v5m0 3v3m0 1v1m0 1v14m0 1v14m0 1v7m0 1v5m0 2v20m0 1v2m0 1v5m0 5v9m0 1v2m0 1v1m0 2v3m0 1v1m0 4v4m0 2v1M1227.5 189v34m0 3v1m0 6v25M1228.5 189v74M1229.5 189v80m0 1v1M1230.5 189v97m0 1v5m0 1v1m0 1v1m0 4v1M1231.5 189v103m0 1v8M1232.5 189v1m0 1v108M1233.5 192v2m0 1v98m0 2v1m0 3v1M1234.5 195v1m0 4v89M1235.5 204v1m0 1v1m0 1v33m0 4v1m0 4v6m0 1v19M1236.5 215v22M1237.5 226v174" stroke="#10f000" stroke-width="1" fill="none"/>
<path d="M270.5 331v1m0 6v1m0 4v1m0 1v1m0 4v1m0 5v1m0 3v1m0 6v1m0 6v2m0 1v1M278.5 340v1m0 3v1m0 1v1m0 4v1m0 6v2m0 1v1m0 3v1m0 2v1m0 3v1m0 2v1M285.5 371v1M371.5 254v1m0 2v1m0 1v1m0 1v2m0 1v3m0 1v2m0 1v7m0 1v100M405.5 266v6m0 1v2m0 1v16m0 1v16m0 1v2m0 1v3m0 1v36m0 1v5m0 1v6m0 1v16M417.5 273v1m0 1v23m0 1v4m0 3v2M418.5 270v45m0 1v2m0 2v2M419.5 271v43m0 1v1m0 1v1m0 1v1M420.5 274v2m0 1v21m0 4v1M425.5 266v37m0 1v2m0 1v7m0 1v3M426.5 267v4m0 1v38m0 1v1m0 1v1m0 2v1m0 5v1M607.5 325v1m0 4v1m0 2v1m0 5v1m0 1v1m0 4v1m0 1v1m0 10v1m0 4v1m0 5v1m0 7v1M705.5 375v6M706.5 374v10M707.5 375v6m0 1v1M738.5 230v24m0 1v2M739.5 228v40m0 2v1M740.5 228v2m0 1v50m0 1v1M741.5 235v56m0 1v2m0 1v3M742.5 250v1m0 1v59m0 1v1M743.5 273v4m0 2v1m0 2v27m0 1v6m0 2v1M774.5 235v1m0 1v1m0 1v1m0 1v2m0 1v3m0 1v2m0 1v1m0 1v2M775.5 228v40m0 1v1M776.5 227v1m0 2v53M777.5 232v60m0 1v1M778.5 240v60m0 1v1m0 1v2m0 2v1M779.5 254v53m0 1v3m0 1v2m0 3v3M780.5 276v1m0 1v1m0 2v13m0 1v1m0 1v5m0 1v4m0 1v2m0 1v1m0 2v1m0 1v3m0 1v1m0 1v2m0 1v1m0 1v1M781.5 315v1m0 3v2m0 1v1m0 5v1m0 2v1M782.5 279v1m0 1v4m0 1v2m0 1v1m0 1v1m0 1v1m0 1v1m0 2v20m0 1v1m0 1v1m0 2v4m0 1v1m0 1v1m0 1v1m0 1v1m0 4v1M783.5 239v1m0 1v1m0 2v2m0 1v4m0 1v66m0 3v3m0 1v2m0 1v1m0 11v1M784.5 234v64m0 1v2m0 1v2m0 2v1m0 1v3m0 2v1M785.5 234v57m0 2v1m0 23v1m0 3v1m0 1v2m0 3v1M786.5 237v41m0 14v1m0 6v7m0 1v4m0 2v4M787.5 251v9m0 6v1m0 1v36m0 1v3m0 1v1m0 1v1M788.5 238v1m0 1v2m0 1v53m0 1v1M789.5 235v1m0 1v50M790.5 234v43M791.5 238v26M810.5 224v1m0 3v2m0 1v7m0 1v7m0 2v1M811.5 217v1m0 1v41M812.5 215v1m0 1v54M813.5 219v60M814.5 228v1m0 3v59M815.5 243v46m0 1v4m0 1v2M816.5 274v2m0 2v1m0 1v3m0 1v2m0 1v10m0 1v2m0 2v1M819.5 200v1m0 1v30m0 1v2m0 1v3m0 4v1M820.5 191v1m0 1v2m0 1v57m0 1v12m0 1v1M821.5 192v77m0 1v8m0 1v1M822.5 200v75m0 1v3m0 1v3m0 3v3M823.5 231v1m0 3v2m0 3v1m0 10v2m0 1v5m0 3v2m0 2v4m0 1v6m0 1v1m0 1v1m0 1v3m0 2v1m0 1v1m0 1v1m0 1v1M824.5 233v2m0 1v49m0 1v5m0 1v1m0 1v1m0 1v2M825.5 230v1m0 1v57m0 1v1m0 1v7M826.5 233v45M865.5 354v2m0 3v20m0 1v3m0 3v1M866.5 351v42M867.5 353v1m0 1v38m0 1v1M868.5 351v44M869.5 352v38M870.5 357v27M897.5 372v4M898.5 371v6M899.5 368v10M900.5 365v12M901.5 363v14M902.5 361v14M903.5 337v1m0 20v15m0 6v1M904.5 355v16M905.5 354v15M906.5 332v1m0 4v1m0 8v1m0 3v1m0 2v13m0 5v1m0 4v2m0 4v1m0 2v1M907.5 353v14M908.5 353v17M909.5 354v21M910.5 355v24M911.5 359v25M912.5 363v25M913.5 367v24M914.5 372v21M915.5 375v19M916.5 374v20M917.5 367v27M918.5 361v32M919.5 354v36M920.5 351v35M921.5 350v28M922.5 349v24M923.5 350v17M924.5 350v15M925.5 351v14M926.5 353v1m0 2v8M927.5 360v4M935.5 227v1m0 1v1m0 7v1m0 1v1m0 2v27m0 1v1m0 5v1M936.5 201v79m0 2v1m0 1v1m0 1v3m0 2v2m0 1v1M937.5 196v77m0 1v11m0 1v1m0 3v1m0 3v1m0 8v1M938.5 195v82m0 2v7M939.5 197v1m0 1v68m0 1v1m0 2v1M940.5 200v34m0 3v1m0 1v2m0 7v1M941.5 214v1M964.5 345v1m0 11v1m0 2v1m0 2v2M979.5 345v1m0 6v3m0 11v2M1014.5 143v1M1015.5 135v1M1016.5 114v1m0 20v1m0 8v1m0 20v1m0 12v1m0 8v1M1017.5 137v1m0 14v1m0 2v1m0 18v1m0 6v1m0 9v1m0 1v1m0 10v1m0 1v1m0 8v1m0 4v2m0 7v1m0 3v1m0 2v1m0 4v3m0 12v1m0 10v1m0 23v1M1018.5 152v1m0 1v1m0 3v1m0 1v1m0 2v1m0 1v1m0 12v1m0 5v3m0 3v3m0 2v1m0 2v2m0 8v1m0 2v1m0 1v1m0 3v1m0 3v3m0 3v1m0 3v1m0 2v2m0 6v2m0 3v1m0 3v1m0 11v1m0 9v1m0 19v2m0 3v2m0 16v1M1019.5 162v1m0 3v2m0 1v1m0 20v2m0 2v1m0 1v1m0 2v1m0 2v1m0 3v1m0 1v2m0 2v1m0 2v1m0 3v3m0 1v1m0 14v2m0 4v2m0 2v3m0 1v1m0 4v1m0 2v2m0 1v1m0 10v2m0 1v1m0 1v1m0 1v1m0 2v2m0 2v1m0 5v1m0 3v1m0 3v1m0 4v1m0 4v2m0 1v1m0 2v1m0 9v1m0 2v1m0 7v1m0 16v1m0 15v1m0 3v1M1020.5 168v2m0 2v1m0 6v2m0 3v1m0 1v1m0 1v1m0 3v1m0 1v1m0 6v3m0 5v1m0 2v1m0 2v1m0 2v3m0 2v2m0 1v2m0 1v2m0 2v1m0 1v1m0 4v1m0 2v3m0 2v1m0 3v1m0 8v1m0 3v2m0 1v1m0 1v1m0 6v4m0 2v1m0 4v2m0 4v2m0 4v1m0 3v1m0 6v2m0 3v1m0 2v1m0 7v1m0 1v1m0 1v1m0 11v1m0 7v1m0 24v1M1021.5 178v1m0 2v4m0 9v2m0 1v1m0 1v2m0 11v1m0 3v1m0 1v1m0 5v1m0 2v2m0 1v3m0 1v1m0 2v1m0 3v3m0 2v1m0 2v1m0 1v7m0 2v2m0 4v3m0 4v2m0 1v2m0 1v1m0 6v1m0 7v1m0 1v2m0 12v3m0 1v1m0 2v2m0 2v1m0 2v3m0 9v1m0 2v3m0 1v1m0 10v1m0 2v1m0 5v1m0 2v1m0 1v1m0 3v2m0 3v1M1022.5 182v1m0 3v2m0 2v1m0 4v1m0 1v1m0 8v1m0 7v1m0 5v2m0 1v2m0 1v3m0 1v1m0 1v1m0 6v1m0 6v2m0 1v1m0 1v2m0 3v1m0 5v1m0 2v4m0 3v2m0 6v4m0 1v1m0 1v2m0 3v3m0 2v4m0 1v1m0 3v1m0 1v1m0 2v1m0 5v1m0 8v1m0 9v1m0 1v4m0 2v1m0 5v2m0 5v1m0 3v1m0 7v1M1023.5 193v1m0 5v1m0 1v1m0 2v1m0 4v2m0 1v4m0 1v2m0 4v1m0 2v2m0 1v4m0 1v2m0 5v2m0 1v3m0 1v1m0 3v2m0 2v1m0 1v2m0 5v1m0 8v1m0 2v1m0 3v1m0 1v1m0 5v2m0 4v1m0 2v1m0 1v1m0 1v1m0 1v1m0 1v1m0 5v7m0 1v1m0 13v1m0 5v2m0 3v2m0 4v1m0 1v1m0 2v1m0 7v2m0 21v1M1024.5 197v1m0 2v3m0 1v1m0 3v1m0 2v1m0 2v8m0 2v1m0 1v1m0 5v3m0 1v1m0 1v2m0 1v1m0 3v2m0 2v1m0 1v2m0 5v1m0 3v1m0 2v2m0 1v1m0 1v1m0 2v1m0 3v4m0 2v2m0 3v2m0 4v1m0 1v1m0 1v1m0 4v1m0 2v2m0 1v1m0 3v2m0 1v1m0 4v1m0 4v2m0 1v1m0 3v1m0 4v1m0 1v1m0 4v1m0 8v1m0 1v1m0 1v1m0 3v1m0 5v1m0 4v2M1025.5 209v1m0 3v1m0 2v1m0 1v1m0 9v2m0 3v2m0 2v1m0 1v1m0 3v1m0 1v1m0 1v2m0 2v1m0 1v1m0 5v3m0 5v1m0 1v3m0 2v1m0 1v2m0 9v1m0 4v2m0 2v1m0 1v4m0 7v2m0 2v1m0 4v1m0 1v1m0 2v2m0 2v2m0 2v1m0 1v1m0 3v1m0 2v1m0 2v1m0 7v1m0 2v1m0 2v2m0 1v2m0 9v1m0 2v1M1026.5 221v2m0 1v1m0 5v1m0 2v1m0 3v1m0 2v1m0 1v2m0 1v2m0 4v1m0 5v1m0 4v1m0 5v1m0 1v1m0 4v1m0 2v1m0 5v1m0 3v2m0 3v1m0 1v1m0 1v1m0 1v1m0 7v4m0 1v1m0 2v1m0 2v2m0 1v1m0 1v1m0 5v4m0 2v2m0 4v1m0 3v1m0 2v1m0 1v2m0 2v1m0 6v3M1027.5 227v1m0 38v1m0 4v2m0 1v1m0 1v2m0 1v2m0 13v4m0 3v2m0 2v1m0 1v2m0 1v1m0 1v2m0 6v1m0 3v1m0 1v1m0 1v1m0 4v1m0 1v1m0 3v1m0 2v1m0 1v1m0 6v2m0 2v2m0 4v1m0 1v1m0 3v2m0 1v1m0 2v1M1028.5 167v1m0 8v3m0 1v12m0 1v4m0 1v1m0 55v1m0 17v1m0 8v1m0 2v1m0 7v1m0 3v1m0 3v1m0 2v1m0 13v1m0 12v1m0 7v1m0 1v1m0 2v1m0 4v2m0 3v1m0 3v1m0 1v1m0 7v1m0 2v2M1029.5 160v1m0 2v1m0 1v1m0 1v43m0 1v1m0 1v3m0 1v1m0 1v1m0 2v1m0 5v1m0 55v1m0 6v3m0 19v1m0 12v1m0 4v1m0 11v1m0 2v1m0 14v1m0 4v1M1030.5 161v1m0 2v5m0 1v40m0 1v1m0 1v12m0 3v5m0 2v2m0 1v1m0 4v1m0 75v1m0 6v1M1031.5 165v75m0 1v6m0 1v2m0 1v3m0 1v1m0 1v1m0 1v1m0 1v2M1032.5 174v51m0 1v5m0 1v3m0 1v4m0 1v3m0 1v5m0 1v4m0 4v1m0 1v1m0 5v2m0 8v1M1033.5 178v1m0 3v21m0 2v4m0 1v1m0 1v2m0 1v6m0 1v9m0 1v1m0 1v2m0 1v6m0 2v3m0 2v2m0 1v2m0 1v4m0 2v1m0 7v1m0 1v1m0 5v1M1034.5 211v1m0 7v1m0 6v1m0 9v1m0 14v1m0 3v1m0 2v2m0 4v2m0 1v1m0 1v1m0 3v1m0 3v1m0 2v1M1035.5 248v2m0 10v1m0 1v1m0 13v1m0 2v1M1036.5 259v1m0 3v1m0 4v1M1037.5 275v1m0 3v1M1038.5 295v1m0 2v1m0 12v1m0 1v15M1039.5 305v1m0 1v29M1040.5 297v1m0 1v40m0 1v2m0 2v1M1041.5 294v55M1042.5 292v2m0 3v63M1043.5 293v1m0 2v2m0 1v72M1044.5 304v2m0 1v1m0 1v1m0 1v1m0 5v1m0 4v1m0 1v56M1045.5 335v1m0 1v52M1046.5 349v1m0 2v1m0 1v38M1047.5 360v32M1048.5 373v17M1052.5 152v1m0 19v1M1053.5 129v1m0 2v1m0 1v1m0 1v1m0 1v18m0 1v24m0 1v8m0 1v2M1054.5 120v1m0 2v2m0 1v1m0 1v72m0 1v3M1055.5 119v2m0 1v1m0 1v77m0 1v4m0 1v3M1056.5 123v1m0 1v6m0 1v69m0 1v1m0 1v1m0 1v3m0 2v2M1057.5 124v1m0 1v4m0 1v73m0 1v1m0 3v2m0 3v1m0 1v1M1058.5 134v1m0 2v36m0 1v1m0 1v1m0 1v7m0 1v4m0 2v1m0 3v2m0 1v1m0 2v1M1059.5 140v1m0 58v6M1060.5 199v13M1061.5 199v18m0 1v1M1062.5 199v1m0 1v24M1063.5 205v26M1064.5 210v29M1065.5 216v30m0 1v1M1066.5 222v37M1067.5 228v2m0 1v38m0 1v2M1068.5 235v44M1069.5 242v3m0 1v33M1070.5 256v1m0 2v20M1071.5 270v8M1073.5 183v1M1074.5 162v1m0 2v19m0 1v6m0 3v9m0 5v1M1075.5 158v49m0 1v3m0 1v1m0 1v1M1076.5 153v1m0 2v3m0 1v51m0 1v3m0 2v1m0 2v1M1077.5 155v1m0 2v58m0 2v2m0 1v1M1078.5 159v51m0 1v2m0 1v1m0 1v2m0 1v1M1079.5 164v2m0 1v15m0 1v2m0 1v3m0 1v2m0 1v6m0 1v3m0 1v3m0 2v1M1196.5 313v1m0 4v3m0 1v8m0 1v14m0 3v4m0 2v1m0 1v1m0 2v1M1197.5 313v2m0 1v1m0 1v27m0 4v2m0 2v2m0 1v1m0 1v1m0 7v1M1200.5 210v1m0 3v1m0 2v1m0 1v1m0 3v1m0 3v1m0 2v1m0 6v1m0 7v1M1201.5 181v1m0 9v2m0 1v1m0 2v3m0 1v47M1202.5 183v1m0 1v2m0 1v2m0 1v2m0 2v59m0 1v1M1203.5 173v1m0 1v1m0 2v1m0 1v1m0 1v1m0 2v2m0 2v7m0 1v61M1204.5 174v1m0 5v1m0 2v2m0 1v3m0 1v2m0 1v71M1205.5 181v1m0 2v1m0 3v3m0 1v14m0 1v62M1206.5 190v1m0 1v1m0 2v2m0 1v3m0 2v68M1207.5 207v2m0 3v59M1208.5 220v2m0 1v1m0 2v45M1209.5 250v3m0 1v6m0 1v22M1210.5 269v22m0 1v3M1211.5 271v42M1212.5 274v10m0 2v37m0 1v1m0 1v3m0 2v2M1213.5 279v1m0 7v3m0 2v1m0 6v51m0 1v1M1214.5 237v2m0 31v1m0 2v1m0 3v1m0 5v1m0 6v1m0 2v1m0 2v3m0 2v1m0 3v1m0 1v1m0 2v1m0 4v2m0 1v45m0 1v5m0 1v17m0 4v2M1215.5 239v1m0 9v1m0 3v1m0 2v1m0 4v1m0 6v2m0 2v1m0 8v1m0 1v1m0 5v3m0 4v1m0 2v5m0 4v1m0 2v2m0 2v4m0 1v4m0 1v1m0 2v1m0 1v1m0 2v3m0 3v61M1216.5 233v2m0 5v1m0 3v1m0 6v1m0 2v1m0 8v1m0 14v2m0 2v1m0 1v1m0 4v3m0 6v2m0 1v1m0 3v4m0 2v3m0 1v1m0 9v1m0 1v1m0 4v1m0 1v2m0 4v2m0 4v2m0 3v2m0 2v1m0 1v2m0 1v40M1217.5 235v1m0 11v1m0 3v2m0 6v1m0 6v1m0 2v1m0 1v1m0 6v1m0 5v2m0 3v3m0 3v1m0 2v1m0 2v1m0 3v2m0 5v1m0 1v1m0 1v1m0 5v1m0 1v2m0 2v1m0 3v2m0 1v1m0 5v5m0 1v4m0 2v2m0 1v1m0 1v1m0 3v1m0 2v2m0 4v17m0 2v1m0 1v1m0 4v1M1218.5 249v2m0 7v2m0 1v1m0 2v2m0 1v1m0 1v1m0 1v1m0 2v1m0 1v1m0 4v1m0 3v1m0 11v1m0 3v1m0 3v1m0 7v1m0 2v1m0 2v4m0 2v1m0 2v3m0 1v2m0 3v2m0 4v1m0 2v1m0 4v6m0 2v1m0 8v1m0 1v1m0 1v1m0 1v1m0 1v2m0 1v1m0 7v1M1219.5 237v1m0 4v1m0 5v1m0 5v1m0 7v1m0 1v1m0 8v1m0 4v1m0 6v2m0 7v1m0 1v3m0 1v1m0 2v1m0 1v1m0 8v2m0 2v1m0 1v1m0 1v1m0 2v1m0 3v1m0 7v1m0 4v1m0 18v2m0 2v1m0 11v1m0 8v1M1220.5 282v1m0 5v1m0 17v2m0 7v1m0 1v1m0 10v1m0 2v1m0 12v1m0 7v1m0 3v1M1226.5 240v6M1227.5 236v1m0 1v14M1228.5 197v1m0 7v17m0 1v2m0 1v1m0 6v25M1229.5 193v2m0 2v3m0 1v60m0 1v1M1230.5 195v1m0 2v5m0 2v61m0 1v1M1231.5 197v72m0 2v3m0 1v1m0 1v1M1232.5 198v1m0 2v76M1233.5 202v69m0 1v5m0 1v1m0 3v2M1234.5 207v34m0 11v11m0 1v9M1235.5 215v23M1236.5 224v11" stroke="#a8f800" stroke-width="1" fill="none"/>
<path d="M371.5 296v3m0 6v1m0 2v2m0 1v1m0 1v8m0 2v11m0 1v2m0 1v2m0 2v1m0 1v1m0 2v3m0 5v2m0 9v1m0 6v1M405.5 345v1m0 34v1M417.5 280v1m0 1v9m0 2v1M418.5 276v26m0 3v2m0 7v1M419.5 273v1m0 1v23m0 1v2m0 3v2m0 1v1M420.5 279v1m0 3v9m0 3v1M425.5 278v1m0 3v1m0 1v3m0 1v5m0 1v1M426.5 281v1m0 4v6m0 1v1m0 2v1m0 3v1m0 2v1M705.5 376v5M706.5 375v9M707.5 376v4m0 2v1M738.5 237v14M739.5 232v1m0 1v30M740.5 234v1m0 1v21m0 1v20M741.5 241v35m0 1v10M742.5 257v1m0 1v4m0 1v5m0 1v4m0 1v13m0 1v7m0 6v1M743.5 283v1m0 3v2m0 1v1m0 5v1m0 2v1m0 4v2M775.5 237v1m0 1v1m0 1v19m0 1v3M776.5 237v32m0 1v1m0 4v1m0 1v2M777.5 239v1m0 1v44M778.5 247v9m0 1v21m0 1v3m0 2v2m0 7v1m0 1v1M779.5 263v1m0 3v2m0 2v3m0 1v1m0 3v1m0 1v4m0 1v1m0 3v1m0 1v1M783.5 247v1m0 7v1m0 1v1m0 2v5m0 2v2m0 1v15m0 2v1m0 1v1m0 2v1m0 20v1M784.5 241v42m0 1v1m0 1v2m0 1v1m0 4v1m0 2v1M785.5 236v1m0 1v1m0 1v39m0 1v3M786.5 239v1m0 2v28M787.5 282v2m0 1v2m0 8v1m0 2v1M788.5 246v2m0 1v30m0 1v5m0 3v2m0 1v1M789.5 241v40M790.5 242v32M791.5 248v1m0 3v5m0 1v2m0 1v2M811.5 223v1m0 3v1m0 1v21m0 2v1M812.5 224v1m0 1v38m0 1v1M813.5 224v2m0 1v1m0 1v42m0 3v1M814.5 234v1m0 1v42M815.5 253v1m0 2v1m0 1v1m0 1v16m0 1v2m0 1v1M819.5 203v1m0 2v2m0 1v1m0 1v2m0 1v5m0 2v3M820.5 196v2m0 1v1m0 1v45m0 1v1m0 3v1M821.5 197v54m0 1v2m0 1v1m0 1v1m0 1v1m0 1v1m0 1v1m0 1v1M822.5 208v1m0 1v28m0 1v5m0 1v6m0 1v3m0 1v2m0 3v1m0 7v1M824.5 239v1m0 3v30m0 1v4M825.5 237v1m0 1v2m0 1v41M826.5 242v1m0 1v22m0 1v1M865.5 364v1m0 3v3m0 1v2M866.5 357v27m0 1v3M867.5 355v33m0 1v2M868.5 355v36M869.5 356v32M870.5 362v5m0 1v4M897.5 375v1M898.5 372v5M899.5 369v8M900.5 367v10M901.5 365v11M902.5 362v11M903.5 361v11M904.5 357v12M905.5 355v12M906.5 354v10M907.5 354v10M908.5 353v16M909.5 355v18M910.5 359v17M911.5 361v18m0 1v1M912.5 366v18M913.5 369v20M914.5 375v17M915.5 377v16M916.5 377v1m0 1v14M917.5 370v23M918.5 366v24M919.5 360v26M920.5 354v1m0 1v25M921.5 350v25M922.5 350v18M923.5 350v14M924.5 351v13M925.5 353v11M926.5 358v1m0 1v4M935.5 245v1m0 2v4m0 1v3m0 2v2M936.5 204v2m0 1v9m0 1v4m0 1v4m0 2v5m0 3v1m0 1v1m0 1v28m0 1v1M937.5 196v1m0 3v35m0 1v32m0 1v1M938.5 199v2m0 1v33m0 1v33m0 2v1M939.5 200v35m0 1v7m0 1v12m0 1v1m0 2v2M940.5 205v4m0 1v8m0 1v4M1018.5 163v1m0 35v1M1019.5 196v1m0 26v1m0 20v2m0 48v1m0 44v1M1020.5 202v1m0 21v1m0 4v2m0 13v1m0 44v1M1021.5 194v1m0 33v1m0 2v1m0 2v1m0 41v1m0 17v1m0 23v1M1022.5 214v1m0 6v1m0 8v1m0 20v1m0 15v1m0 20v1m0 4v1m0 3v1m0 71v1M1023.5 209v1m0 3v1m0 3v1m0 8v2m0 24v1m0 5v1m0 39v1m0 1v1m0 11v1m0 5v1m0 15v1m0 16v1M1024.5 208v1m0 10v1m0 1v1m0 14v1m0 4v1m0 7v1m0 8v1m0 9v1m0 4v1m0 15v1m0 23v1M1025.5 233v1m0 13v1m0 12v1m0 37v1m0 1v2m0 8v1m0 7v1m0 38v1M1026.5 275v1m0 56v1M1027.5 272v1m0 21v1m0 12v1M1028.5 184v1M1029.5 181v1m0 1v1m0 1v3m0 1v5m0 2v2m0 1v1m0 166v1M1030.5 175v1m0 3v2m0 1v10m0 1v3m0 5v1m0 1v3m0 2v1m0 4v1m0 6v1M1031.5 178v1m0 1v3m0 1v10m0 2v4m0 2v2m0 2v1m0 1v1m0 1v1M1032.5 180v1m0 3v3m0 1v1m0 1v1m0 1v2m0 1v3m0 4v2m0 1v1m0 4v2m0 3v1m0 2v2m0 1v1m0 1v1m0 4v1m0 10v1M1038.5 315v1m0 3v6M1039.5 308v1m0 2v1m0 1v18M1040.5 302v1m0 3v29M1041.5 302v3m0 1v38m0 3v1M1042.5 300v1m0 1v1m0 2v45m0 1v1m0 1v1m0 2v1M1043.5 301v1m0 1v1m0 5v2m0 2v1m0 1v12m0 1v16m0 2v1m0 1v1m0 1v11m0 2v2m0 1v1M1044.5 334v1m0 1v8m0 1v1m0 1v3m0 1v25M1045.5 341v1m0 1v1m0 6v6m0 1v29M1046.5 356v33M1047.5 367v1m0 1v20M1048.5 377v1m0 1v2m0 1v2M1053.5 145v1M1054.5 138v1m0 1v4m0 1v2m0 1v3m0 1v1m0 1v3m0 2v1m0 1v1m0 3v3m0 3v1m0 1v1m0 1v1m0 3v1m0 1v1m0 1v3m0 1v1M1055.5 133v6m0 1v2m0 1v6m0 1v2m0 1v7m0 2v3m0 1v1m0 1v2m0 1v1m0 1v3m0 1v2m0 1v1m0 1v1m0 3v2m0 2v2m0 1v1m0 2v1m0 2v1M1056.5 138v1m0 1v1m0 1v4m0 1v1m0 2v1m0 2v2m0 2v1m0 3v3m0 1v6m0 1v4m0 1v4m0 1v3m0 1v1m0 4v1M1057.5 135v2m0 1v3m0 2v1m0 1v3m0 4v5m0 1v2m0 1v2m0 2v1m0 1v2m0 1v2m0 10v1m0 4v1M1058.5 176v1m0 7v1M1060.5 199v9M1061.5 200v13m0 1v1M1062.5 204v15m0 1v1M1063.5 209v18M1064.5 214v1m0 1v14m0 2v1m0 1v1M1065.5 222v13m0 1v1M1066.5 227v1m0 1v18m0 2v4M1067.5 232v4m0 1v25m0 1v1m0 1v1M1068.5 241v2m0 1v32M1069.5 252v1m0 2v5m0 1v17M1070.5 262v2m0 1v2m0 1v10M1074.5 179v1m0 1v1M1075.5 168v14m0 2v2M1076.5 161v1m0 4v1m0 3v5m0 1v2m0 1v2m0 1v3m0 1v1m0 1v3m0 4v1m0 5v1M1077.5 167v4m0 1v2m0 1v9m0 1v3m0 7v1m0 1v3m0 1v1M1078.5 167v1m0 3v3m0 3v1m0 1v1m0 1v1m0 1v2m0 2v1m0 1v3m0 1v1m0 7v1M1079.5 169v1m0 5v1m0 1v1M1201.5 207v1m0 7v2m0 4v2m0 8v1m0 1v2m0 4v6M1202.5 206v2m0 2v35m0 1v2M1203.5 201v1m0 3v1m0 1v1m0 1v1m0 1v9m0 1v4m0 1v29M1204.5 203v2m0 1v2m0 2v48m0 1v1M1205.5 205v1m0 2v1m0 1v1m0 2v4m0 1v48M1206.5 204v1m0 5v3m0 2v1m0 1v46m0 1v2m0 2v1M1207.5 226v1m0 1v1m0 1v1m0 1v25m0 1v11M1208.5 232v1m0 1v1m0 4v1m0 7v2m0 2v3m0 2v3m0 1v8m0 1v2M1209.5 262v1m0 6v1m0 7v1M1210.5 272v1m0 1v9M1211.5 274v10m0 1v1m0 3v1m0 1v1m0 4v1M1212.5 274v1m0 4v1m0 15v1m0 1v1m0 2v1m0 3v1m0 4v1m0 1v1m0 6v1m0 1v1m0 1v1M1213.5 314v1m0 2v1m0 2v2m0 1v4m0 3v2m0 1v1M1214.5 238v1m0 90v1m0 4v2m0 4v1m0 4v1m0 4v2m0 1v1m0 3v1m0 1v1m0 1v1m0 12v1m0 3v1m0 1v3m0 3v1M1215.5 299v1m0 8v1m0 2v1m0 5v1m0 7v1m0 20v1m0 5v2m0 5v1m0 4v1m0 4v18m0 2v1m0 2v2m0 1v1m0 1v1M1216.5 279v1m0 2v1m0 6v1m0 18v1m0 43v1m0 18v17m0 6v2m0 1v3M1217.5 289v1m0 32v1m0 49v1m0 1v1m0 1v1m0 1v1m0 4v1m0 2v1M1218.5 267v1m0 45v1m0 11v1m0 42v1M1219.5 237v1m0 99v1M1226.5 241v1M1227.5 239v6m0 1v2M1228.5 207v1m0 27v18M1229.5 206v1m0 3v1m0 4v1m0 1v6m0 1v2m0 1v4m0 1v25M1230.5 205v1m0 2v9m0 1v5m0 1v33m0 1v3M1231.5 203v1m0 3v1m0 2v51m0 1v2M1232.5 207v52m0 1v4m0 1v2M1233.5 210v2m0 2v31m0 1v16m0 1v1M1234.5 217v1m0 1v16m0 1v3m0 13v1m0 12v1M1235.5 219v1m0 2v1m0 1v10" stroke="#ffee00" stroke-width="1" fill="none"/>
<path d="M418.5 277v1m0 1v16m0 1v1M419.5 282v7m0 2v2M420.5 285v1m0 1v1M705.5 380v1M706.5 376v4m0 1v3M707.5 382v1M738.5 240v1m0 3v1m0 2v1M739.5 238v2m0 1v13m0 3v1M740.5 238v1m0 1v2m0 1v14m0 1v5m0 3v1m0 3v1m0 1v1M741.5 246v9m0 1v4m0 4v1m0 2v2m0 4v2m0 2v1M742.5 284v1M775.5 243v1m0 3v2m0 2v1m0 3v1M776.5 238v1m0 1v1m0 6v9m0 1v7m0 4v1M777.5 244v1m0 3v1m0 1v12m0 2v4m0 2v1m0 2v2M778.5 261v1m0 1v3m0 1v2m0 1v3M783.5 268v1m0 5v1M784.5 243v1m0 3v22m0 1v1m0 2v1m0 2v1m0 3v3M785.5 243v2m0 1v1m0 1v2m0 1v16m0 2v5m0 3v1M786.5 249v15m0 1v1M788.5 259v2m0 2v1m0 3v1m0 5v1M789.5 245v1m0 2v1m0 1v5m0 2v3m0 1v6m0 1v2m0 1v1m0 5v1M790.5 247v1m0 2v2m0 1v1m0 2v7m0 1v1m0 2v1M791.5 254v1M811.5 230v1m0 6v1m0 2v2m0 2v2M812.5 227v1m0 5v1m0 1v1m0 1v19m0 1v2m0 1v1M813.5 235v4m0 1v9m0 1v6m0 5v1m0 3v1m0 1v1M814.5 237v1m0 5v3m0 1v4m0 1v1m0 1v1m0 1v1m0 1v4m0 2v1m0 3v1m0 1v1M820.5 205v1m0 2v21m0 1v1m0 5v1m0 4v2M821.5 209v19m0 2v2m0 1v1m0 1v1m0 1v1m0 5v1M822.5 221v1m0 3v3m0 1v2M824.5 252v1m0 1v2m0 8v1M825.5 243v1m0 3v1m0 1v1m0 1v1m0 1v4m0 1v7m0 3v1m0 1v1m0 1v1M826.5 254v1m0 2v1M866.5 361v4m0 1v9m0 4v1M867.5 357v1m0 1v1m0 1v1m0 1v16m0 1v3M868.5 359v3m0 2v17m0 1v2M869.5 361v1m0 1v9m0 1v3m0 1v2M898.5 374v2M899.5 371v6M900.5 369v7M901.5 367v7M902.5 365v8M903.5 361v9M904.5 359v8M905.5 357v7m0 1v1M906.5 356v7M907.5 354v8M908.5 355v7m0 1v1M909.5 356v12m0 1v2M910.5 362v1m0 1v10M911.5 365v13M912.5 371v9m0 2v1M913.5 373v1m0 1v11M914.5 376v13M915.5 383v9M916.5 380v2m0 1v10M917.5 375v17M918.5 368v21M919.5 363v2m0 1v15m0 2v1M920.5 357v1m0 1v17M921.5 353v18M922.5 351v13M923.5 351v12M924.5 352v11M925.5 358v1m0 1v4M926.5 360v1M935.5 255v1M936.5 208v2m0 3v1m0 30v1m0 3v2m0 1v9m0 1v1m0 1v1M937.5 205v1m0 1v9m0 1v11m0 1v2m0 9v1m0 3v1m0 2v1m0 1v8m0 2v3M938.5 204v2m0 1v11m0 1v4m0 1v6m0 15v6m0 1v8M939.5 205v16m0 1v4m0 1v1m0 18v1M940.5 221v1M1026.5 332v1M1030.5 183v1M1031.5 182v1m0 2v1m0 2v1M1039.5 315v1m0 5v1m0 1v1M1040.5 309v1m0 2v1m0 1v10m0 2v3m0 3v1M1041.5 310v1m0 2v17m0 1v4M1042.5 312v1m0 3v2m0 1v4m0 1v6m0 1v7m0 2v1m0 1v1m0 1v1M1043.5 313v1m0 15v1m0 1v3m0 1v1m0 1v2m0 2v1m0 15v1M1044.5 343v1m0 9v1m0 7v3m0 2v1M1045.5 355v1m0 2v1m0 3v5m0 1v11m0 1v1m0 1v1M1046.5 360v1m0 2v1m0 3v4m0 1v6m0 1v7M1047.5 371v4m0 1v9m0 1v1M1048.5 380v1m0 1v2M1055.5 140v1m0 18v1M1056.5 161v1M1060.5 200v1M1061.5 201v3M1062.5 207v1m0 3v1m0 2v1M1063.5 214v2m0 2v1m0 1v2M1065.5 228v2m0 1v1m0 1v1M1066.5 233v1m0 1v1m0 7v1M1067.5 237v1m0 4v1m0 1v1m0 1v1m0 2v1m0 1v3m0 2v1m0 1v1M1068.5 251v1m0 1v1m0 6v1m0 1v1M1069.5 261v1m0 3v2m0 3v1m0 3v4M1070.5 276v1M1075.5 177v1M1202.5 216v1m0 4v1m0 3v1m0 1v1m0 1v1m0 5v1m0 2v2m0 2v3m0 1v1M1203.5 223v1m0 5v1m0 2v3m0 1v6m0 1v1m0 1v2m0 1v1M1204.5 217v2m0 2v1m0 3v1m0 1v10m0 1v4m0 1v4m0 3v3m0 1v2m0 1v1m0 1v1M1205.5 224v1m0 1v1m0 1v1m0 1v11m0 1v1m0 1v2m0 2v3m0 1v5M1206.5 228v2m0 1v1m0 2v2m0 1v4m0 1v11m0 1v2m0 1v1M1207.5 246v1m0 1v1m0 1v4m0 7v1M1208.5 262v1M1210.5 274v6m0 1v2M1211.5 276v7M1215.5 371v2m0 3v2m0 1v3m0 1v4M1216.5 373v2m0 2v1m0 1v3M1218.5 313v1M1227.5 241v1m0 1v1M1228.5 239v1m0 1v6m0 2v1M1229.5 219v1m0 15v1m0 1v5m0 1v8M1230.5 220v1m0 8v3m0 1v19m0 4v1M1231.5 219v1m0 1v4m0 3v4m0 1v8m0 1v5m0 1v1m0 2v4M1232.5 220v5m0 1v4m0 1v2m0 1v1m0 1v4m0 1v1m0 1v1m0 1v1m0 2v1m0 1v1M1233.5 218v1m0 1v1m0 3v15m0 1v1M1234.5 225v2m0 1v5M1235.5 233v1" stroke="#ff8c00" stroke-width="1" fill="none"/>
<path d="M418.5 285v2M419.5 284v1m0 2v1M706.5 377v1m0 1v1m0 1v1m0 1v1M739.5 243v1m0 2v1m0 2v1M740.5 243v1m0 1v5m0 4v2m0 2v1M776.5 254v1M777.5 248v1m0 6v2m0 1v1M784.5 249v2m0 2v3m0 2v1M785.5 249v1m0 2v1m0 4v2m0 1v1M786.5 257v1M789.5 253v1M790.5 257v3M812.5 247v1m0 1v2M813.5 242v1m0 1v2m0 1v2m0 2v2M820.5 216v1M821.5 210v1m0 12v2M866.5 367v1m0 6v1M867.5 367v1m0 2v2m0 2v2m0 1v1M868.5 365v6m0 4v1m0 2v1M899.5 373v1M900.5 370v4M901.5 368v2m0 1v1M902.5 365v2m0 1v2M903.5 363v2M904.5 362v3M905.5 358v5M906.5 356v4M907.5 356v1m0 1v1M908.5 357v1m0 1v2M909.5 362v3M910.5 365v1m0 1v1m0 1v1M911.5 366v1m0 1v2m0 2v3m0 1v1M912.5 372v2m0 2v2m0 1v1M913.5 377v2m0 2v1m0 3v1M914.5 380v6M915.5 386v1m0 1v1M916.5 383v1m0 1v1m0 1v1m0 1v2M917.5 378v1m0 1v1m0 2v2m0 2v1M918.5 375v4m0 1v5M919.5 368v1m0 4v3M920.5 362v1m0 1v3m0 1v3m0 1v1M921.5 355v1m0 1v1m0 1v1m0 2v1m0 1v1m0 1v2M922.5 351v3m0 2v4m0 1v1M923.5 351v4m0 3v1M924.5 355v1m0 1v1m0 1v1M925.5 360v1M936.5 252v1m0 1v1M937.5 212v1m0 1v1m0 3v2m0 4v1m0 24v1M938.5 210v2m0 1v2m0 38v1m0 2v1M939.5 210v1m0 1v1m0 2v2m0 6v1M1040.5 314v1m0 7v2M1041.5 317v1m0 1v1M1042.5 320v3M1045.5 366v1m0 3v1M1047.5 378v1m0 1v1m0 1v1M1203.5 245v1M1205.5 242v1M1206.5 248v1M1210.5 275v1m0 1v1M1211.5 280v2M1229.5 241v1M1230.5 237v1m0 1v1m0 4v1M1231.5 234v1m0 11v1M1232.5 229v1M1233.5 235v1M1234.5 231v2" stroke="#ff1a00" stroke-width="1" fill="none"/>
<path d="M868.5 369v1" stroke="#d40a6e" stroke-width="1" fill="none"/>
<g fill="#fff">
<rect x="205" y="434" width="1077" height="1"/>
<rect x="1281" y="49" width="1" height="385"/>
</g>
<text x="201" y="55.5" font-size="14" fill="#fff" text-anchor="end" font-weight="normal" >80</text>
<text x="201" y="103.5" font-size="14" fill="#fff" text-anchor="end" font-weight="normal" >70</text>
<text x="201" y="151.5" font-size="14" fill="#fff" text-anchor="end" font-weight="normal" >60</text>
<text x="201" y="199.5" font-size="14" fill="#fff" text-anchor="end" font-weight="normal" >50</text>
<text x="201" y="247.5" font-size="14" fill="#fff" text-anchor="end" font-weight="normal" >40</text>
<text x="201" y="295.5" font-size="14" fill="#fff" text-anchor="end" font-weight="normal" >30</text>
<text x="201" y="343.5" font-size="14" fill="#fff" text-anchor="end" font-weight="normal" >20</text>
<text x="201" y="392.5" font-size="14" fill="#fff" text-anchor="end" font-weight="normal" >10</text>
<text x="201" y="440.5" font-size="14" fill="#fff" text-anchor="end" font-weight="normal" >0</text>
<text x="205" y="454.5" font-size="15" fill="#fff" text-anchor="middle" font-weight="normal" >30M</text>
<text x="474" y="454.5" font-size="15" fill="#fff" text-anchor="middle" font-weight="normal" >272.5M</text>
<text x="743" y="454.5" font-size="15" fill="#fff" text-anchor="middle" font-weight="normal" >515M</text>
<text x="1012" y="454.5" font-size="15" fill="#fff" text-anchor="middle" font-weight="normal" >757.5M</text>
<text x="1282" y="454.5" font-size="15" fill="#fff" text-anchor="middle" font-weight="normal" >1G</text>
<text x="741.5" y="472" font-size="13.5" fill="#fff" text-anchor="middle" font-weight="normal" textLength="93.5" lengthAdjust="spacingAndGlyphs" >Frequency [Hz]</text>
<text x="1278.5" y="467" font-size="11" fill="#fff" text-anchor="middle" font-weight="normal" >8</text>
<text x="1248" y="482" font-size="11.5" fill="#fff" text-anchor="start" font-weight="normal" textLength="26" lengthAdjust="spacingAndGlyphs" >x 10</text>
<text transform="translate(177 242.5) rotate(-90)" font-size="14" fill="#fff" text-anchor="middle" textLength="113" lengthAdjust="spacingAndGlyphs">Magnitude [dBµV]</text>
<rect x="1302" y="49" width="27" height="385" fill="url(#cb)"/>
<rect x="1329" y="49" width="1" height="386" fill="#fff"/>
<rect x="1306" y="434" width="23" height="1" fill="#fff"/>
<rect x="1302" y="434" width="3" height="1" fill="#fff"/>
<rect x="1326" y="434" width="3" height="1" fill="#fff"/>
<text x="1333" y="441.5" font-size="12.5" fill="#fff" text-anchor="start" font-weight="normal" >0</text>
<rect x="1302" y="396" width="3" height="1" fill="#fff"/>
<rect x="1326" y="396" width="3" height="1" fill="#fff"/>
<text x="1333" y="403.5" font-size="12.5" fill="#fff" text-anchor="start" font-weight="normal" >0.1</text>
<rect x="1302" y="357" width="3" height="1" fill="#fff"/>
<rect x="1326" y="357" width="3" height="1" fill="#fff"/>
<text x="1333" y="364.5" font-size="12.5" fill="#fff" text-anchor="start" font-weight="normal" >0.2</text>
<rect x="1302" y="318" width="3" height="1" fill="#fff"/>
<rect x="1326" y="318" width="3" height="1" fill="#fff"/>
<text x="1333" y="325.5" font-size="12.5" fill="#fff" text-anchor="start" font-weight="normal" >0.3</text>
<rect x="1302" y="280" width="3" height="1" fill="#fff"/>
<rect x="1326" y="280" width="3" height="1" fill="#fff"/>
<text x="1333" y="287.5" font-size="12.5" fill="#fff" text-anchor="start" font-weight="normal" >0.4</text>
<rect x="1302" y="242" width="3" height="1" fill="#fff"/>
<rect x="1326" y="242" width="3" height="1" fill="#fff"/>
<text x="1333" y="249.5" font-size="12.5" fill="#fff" text-anchor="start" font-weight="normal" >0.5</text>
<rect x="1302" y="203" width="3" height="1" fill="#fff"/>
<rect x="1326" y="203" width="3" height="1" fill="#fff"/>
<text x="1333" y="210.5" font-size="12.5" fill="#fff" text-anchor="start" font-weight="normal" >0.6</text>
<rect x="1302" y="164" width="3" height="1" fill="#fff"/>
<rect x="1326" y="164" width="3" height="1" fill="#fff"/>
<text x="1333" y="171.5" font-size="12.5" fill="#fff" text-anchor="start" font-weight="normal" >0.7</text>
<rect x="1302" y="126" width="3" height="1" fill="#fff"/>
<rect x="1326" y="126" width="3" height="1" fill="#fff"/>
<text x="1333" y="133.5" font-size="12.5" fill="#fff" text-anchor="start" font-weight="normal" >0.8</text>
<rect x="1302" y="88" width="3" height="1" fill="#fff"/>
<rect x="1326" y="88" width="3" height="1" fill="#fff"/>
<text x="1333" y="95.5" font-size="12.5" fill="#fff" text-anchor="start" font-weight="normal" >0.9</text>
<rect x="1302" y="49" width="3" height="1" fill="#fff"/>
<rect x="1326" y="49" width="3" height="1" fill="#fff"/>
<text x="1333" y="56.5" font-size="12.5" fill="#fff" text-anchor="start" font-weight="normal" >1</text>
<text transform="translate(1372 244) rotate(-90)" font-size="12" fill="#fff" text-anchor="middle">PF</text>
<defs><linearGradient id="spg" gradientUnits="userSpaceOnUse" x1="205" y1="0" x2="1281" y2="0"><stop offset="0.0005" stop-color="#00c878"/><stop offset="0.0070" stop-color="#00c878"/><stop offset="0.0079" stop-color="#00c877"/><stop offset="0.0116" stop-color="#00c877"/><stop offset="0.0125" stop-color="#00c878"/><stop offset="0.0218" stop-color="#00c878"/><stop offset="0.0228" stop-color="#00c879"/><stop offset="0.0414" stop-color="#00c879"/><stop offset="0.0423" stop-color="#00c878"/><stop offset="0.0460" stop-color="#00c878"/><stop offset="0.0469" stop-color="#00c877"/><stop offset="0.0479" stop-color="#00c877"/><stop offset="0.0488" stop-color="#00c977"/><stop offset="0.0497" stop-color="#00c977"/><stop offset="0.0507" stop-color="#00c976"/><stop offset="0.0525" stop-color="#00c976"/><stop offset="0.0534" stop-color="#00c975"/><stop offset="0.0553" stop-color="#00c975"/><stop offset="0.0562" stop-color="#00ca75"/><stop offset="0.0572" stop-color="#00ca74"/><stop offset="0.0599" stop-color="#00ca74"/><stop offset="0.0609" stop-color="#00d65a"/><stop offset="0.0618" stop-color="#00e43c"/><stop offset="0.0627" stop-color="#00e43c"/><stop offset="0.0637" stop-color="#00d65a"/><stop offset="0.0646" stop-color="#00ca73"/><stop offset="0.0655" stop-color="#00cb73"/><stop offset="0.0664" stop-color="#00cb72"/><stop offset="0.0674" stop-color="#00d360"/><stop offset="0.0683" stop-color="#00de48"/><stop offset="0.0692" stop-color="#00de48"/><stop offset="0.0702" stop-color="#00d360"/><stop offset="0.0711" stop-color="#00cb72"/><stop offset="0.0720" stop-color="#00cb72"/><stop offset="0.0730" stop-color="#00ce6c"/><stop offset="0.0739" stop-color="#00d360"/><stop offset="0.0748" stop-color="#00d360"/><stop offset="0.0757" stop-color="#00ce6c"/><stop offset="0.0767" stop-color="#00ca73"/><stop offset="0.0813" stop-color="#00ca73"/><stop offset="0.0822" stop-color="#00ca74"/><stop offset="0.0850" stop-color="#00ca74"/><stop offset="0.0860" stop-color="#00ca75"/><stop offset="0.0869" stop-color="#00c975"/><stop offset="0.0897" stop-color="#00c975"/><stop offset="0.0906" stop-color="#00c976"/><stop offset="0.0934" stop-color="#00c976"/><stop offset="0.0943" stop-color="#00c977"/><stop offset="0.0962" stop-color="#00c977"/><stop offset="0.0971" stop-color="#00c877"/><stop offset="0.1018" stop-color="#00c877"/><stop offset="0.1027" stop-color="#00c878"/><stop offset="0.1055" stop-color="#00c878"/><stop offset="0.1064" stop-color="#00c877"/><stop offset="0.1101" stop-color="#00c877"/><stop offset="0.1111" stop-color="#00c977"/><stop offset="0.1120" stop-color="#00c976"/><stop offset="0.1138" stop-color="#00c976"/><stop offset="0.1148" stop-color="#00c975"/><stop offset="0.1157" stop-color="#00ca75"/><stop offset="0.1166" stop-color="#00ca74"/><stop offset="0.1176" stop-color="#00ca73"/><stop offset="0.1185" stop-color="#00cb72"/><stop offset="0.1194" stop-color="#00cb71"/><stop offset="0.1204" stop-color="#00cc70"/><stop offset="0.1213" stop-color="#00cc6f"/><stop offset="0.1222" stop-color="#00cd6e"/><stop offset="0.1231" stop-color="#00cd6c"/><stop offset="0.1241" stop-color="#00ce6b"/><stop offset="0.1250" stop-color="#00cf69"/><stop offset="0.1259" stop-color="#00d067"/><stop offset="0.1269" stop-color="#00d165"/><stop offset="0.1278" stop-color="#00d163"/><stop offset="0.1287" stop-color="#00d262"/><stop offset="0.1296" stop-color="#00d360"/><stop offset="0.1306" stop-color="#00d45e"/><stop offset="0.1315" stop-color="#00d55c"/><stop offset="0.1324" stop-color="#00d55b"/><stop offset="0.1334" stop-color="#00d65a"/><stop offset="0.1343" stop-color="#00d659"/><stop offset="0.1352" stop-color="#00d758"/><stop offset="0.1380" stop-color="#00d758"/><stop offset="0.1389" stop-color="#00d659"/><stop offset="0.1399" stop-color="#00d65a"/><stop offset="0.1408" stop-color="#00d55b"/><stop offset="0.1417" stop-color="#00d55d"/><stop offset="0.1427" stop-color="#00d45e"/><stop offset="0.1436" stop-color="#00d360"/><stop offset="0.1445" stop-color="#00d262"/><stop offset="0.1454" stop-color="#00d164"/><stop offset="0.1464" stop-color="#00d066"/><stop offset="0.1473" stop-color="#00cf69"/><stop offset="0.1482" stop-color="#00ce6b"/><stop offset="0.1492" stop-color="#00cd6d"/><stop offset="0.1501" stop-color="#00cc6f"/><stop offset="0.1510" stop-color="#00cb70"/><stop offset="0.1520" stop-color="#00cb72"/><stop offset="0.1529" stop-color="#00d854"/><stop offset="0.1538" stop-color="#20ff00"/><stop offset="0.1547" stop-color="#20ff00"/><stop offset="0.1557" stop-color="#00d854"/><stop offset="0.1566" stop-color="#00c878"/><stop offset="0.1575" stop-color="#00c879"/><stop offset="0.1585" stop-color="#00c77a"/><stop offset="0.1594" stop-color="#00c77a"/><stop offset="0.1603" stop-color="#00c77b"/><stop offset="0.1612" stop-color="#00c77b"/><stop offset="0.1622" stop-color="#00c77c"/><stop offset="0.1631" stop-color="#00c77c"/><stop offset="0.1640" stop-color="#00c67c"/><stop offset="0.1668" stop-color="#00c67c"/><stop offset="0.1678" stop-color="#00c67d"/><stop offset="0.1715" stop-color="#00c67d"/><stop offset="0.1724" stop-color="#00c67c"/><stop offset="0.1770" stop-color="#00c67c"/><stop offset="0.1780" stop-color="#00c77c"/><stop offset="0.1789" stop-color="#00c77c"/><stop offset="0.1798" stop-color="#00c77b"/><stop offset="0.1845" stop-color="#00c77b"/><stop offset="0.1854" stop-color="#00db4e"/><stop offset="0.1863" stop-color="#40ff00"/><stop offset="0.1873" stop-color="#40ff00"/><stop offset="0.1882" stop-color="#00db4e"/><stop offset="0.1891" stop-color="#00c77a"/><stop offset="0.1910" stop-color="#00c77a"/><stop offset="0.1919" stop-color="#00c779"/><stop offset="0.1928" stop-color="#00c879"/><stop offset="0.1947" stop-color="#00c879"/><stop offset="0.1956" stop-color="#00e43c"/><stop offset="0.1966" stop-color="#50ff00"/><stop offset="0.1975" stop-color="#50ff00"/><stop offset="0.1984" stop-color="#00e43c"/><stop offset="0.1993" stop-color="#a0ff00"/><stop offset="0.2003" stop-color="#00e43c"/><stop offset="0.2012" stop-color="#00e43c"/><stop offset="0.2021" stop-color="#00c879"/><stop offset="0.2040" stop-color="#00c879"/><stop offset="0.2049" stop-color="#00de48"/><stop offset="0.2059" stop-color="#20ff00"/><stop offset="0.2068" stop-color="#20ff00"/><stop offset="0.2077" stop-color="#00de48"/><stop offset="0.2086" stop-color="#00c77a"/><stop offset="0.2151" stop-color="#00c77a"/><stop offset="0.2161" stop-color="#00c77b"/><stop offset="0.2347" stop-color="#00c77b"/><stop offset="0.2356" stop-color="#00c77a"/><stop offset="0.2393" stop-color="#00c77a"/><stop offset="0.2402" stop-color="#00c779"/><stop offset="0.2412" stop-color="#00c879"/><stop offset="0.2430" stop-color="#00c879"/><stop offset="0.2440" stop-color="#00c878"/><stop offset="0.2458" stop-color="#00c878"/><stop offset="0.2467" stop-color="#00c877"/><stop offset="0.2477" stop-color="#00c877"/><stop offset="0.2486" stop-color="#00c977"/><stop offset="0.2495" stop-color="#00c976"/><stop offset="0.2523" stop-color="#00c976"/><stop offset="0.2533" stop-color="#00c975"/><stop offset="0.2551" stop-color="#00c975"/><stop offset="0.2560" stop-color="#00ca75"/><stop offset="0.2570" stop-color="#00ca74"/><stop offset="0.2635" stop-color="#00ca74"/><stop offset="0.2644" stop-color="#00ca73"/><stop offset="0.2681" stop-color="#00ca73"/><stop offset="0.2691" stop-color="#00ca74"/><stop offset="0.2756" stop-color="#00ca74"/><stop offset="0.2765" stop-color="#00ca75"/><stop offset="0.2774" stop-color="#00ca75"/><stop offset="0.2783" stop-color="#00c975"/><stop offset="0.2811" stop-color="#00c975"/><stop offset="0.2821" stop-color="#00c976"/><stop offset="0.2886" stop-color="#00c976"/><stop offset="0.2895" stop-color="#00c977"/><stop offset="0.2997" stop-color="#00c977"/><stop offset="0.3007" stop-color="#00c976"/><stop offset="0.3062" stop-color="#00c976"/><stop offset="0.3072" stop-color="#00c975"/><stop offset="0.3099" stop-color="#00c975"/><stop offset="0.3109" stop-color="#00ca75"/><stop offset="0.3118" stop-color="#00ca74"/><stop offset="0.3174" stop-color="#00ca74"/><stop offset="0.3183" stop-color="#00ca73"/><stop offset="0.3276" stop-color="#00ca73"/><stop offset="0.3285" stop-color="#00ca74"/><stop offset="0.3332" stop-color="#00ca74"/><stop offset="0.3341" stop-color="#00ca75"/><stop offset="0.3350" stop-color="#00c975"/><stop offset="0.3369" stop-color="#00c975"/><stop offset="0.3378" stop-color="#00c976"/><stop offset="0.3397" stop-color="#00c976"/><stop offset="0.3406" stop-color="#00c977"/><stop offset="0.3415" stop-color="#00c977"/><stop offset="0.3425" stop-color="#00c877"/><stop offset="0.3434" stop-color="#00c877"/><stop offset="0.3443" stop-color="#00c878"/><stop offset="0.3462" stop-color="#00c878"/><stop offset="0.3471" stop-color="#00c879"/><stop offset="0.3490" stop-color="#00c879"/><stop offset="0.3499" stop-color="#00c779"/><stop offset="0.3508" stop-color="#00c77a"/><stop offset="0.3555" stop-color="#00c77a"/><stop offset="0.3564" stop-color="#00c77b"/><stop offset="0.3704" stop-color="#00c77b"/><stop offset="0.3713" stop-color="#00c77a"/><stop offset="0.3722" stop-color="#00c77a"/><stop offset="0.3731" stop-color="#00d263"/><stop offset="0.3741" stop-color="#00ee24"/><stop offset="0.3750" stop-color="#00d263"/><stop offset="0.3759" stop-color="#00c77a"/><stop offset="0.3787" stop-color="#00c77a"/><stop offset="0.3796" stop-color="#00c779"/><stop offset="0.3806" stop-color="#00c879"/><stop offset="0.3964" stop-color="#00c879"/><stop offset="0.3973" stop-color="#00c779"/><stop offset="0.3982" stop-color="#00c77a"/><stop offset="0.4029" stop-color="#00c77a"/><stop offset="0.4038" stop-color="#00c77b"/><stop offset="0.4085" stop-color="#00c77b"/><stop offset="0.4094" stop-color="#00c77c"/><stop offset="0.4103" stop-color="#00c77c"/><stop offset="0.4112" stop-color="#00c67c"/><stop offset="0.4150" stop-color="#00c67c"/><stop offset="0.4159" stop-color="#00c67d"/><stop offset="0.4252" stop-color="#00c67d"/><stop offset="0.4261" stop-color="#00c67c"/><stop offset="0.4298" stop-color="#00c67c"/><stop offset="0.4308" stop-color="#00c77c"/><stop offset="0.4317" stop-color="#00c77c"/><stop offset="0.4326" stop-color="#00c77b"/><stop offset="0.4354" stop-color="#00c77b"/><stop offset="0.4363" stop-color="#00c77a"/><stop offset="0.4391" stop-color="#00c77a"/><stop offset="0.4401" stop-color="#00c779"/><stop offset="0.4410" stop-color="#00c879"/><stop offset="0.4428" stop-color="#00c879"/><stop offset="0.4438" stop-color="#00c878"/><stop offset="0.4466" stop-color="#00c878"/><stop offset="0.4475" stop-color="#00c877"/><stop offset="0.4484" stop-color="#00c877"/><stop offset="0.4493" stop-color="#00d263"/><stop offset="0.4503" stop-color="#00ee24"/><stop offset="0.4512" stop-color="#00d263"/><stop offset="0.4521" stop-color="#00c976"/><stop offset="0.4698" stop-color="#00c976"/><stop offset="0.4707" stop-color="#00c977"/><stop offset="0.4726" stop-color="#00c977"/><stop offset="0.4735" stop-color="#00c877"/><stop offset="0.4772" stop-color="#00c877"/><stop offset="0.4782" stop-color="#00c878"/><stop offset="0.4893" stop-color="#00c878"/><stop offset="0.4902" stop-color="#00c877"/><stop offset="0.4930" stop-color="#00c877"/><stop offset="0.4940" stop-color="#00c977"/><stop offset="0.4949" stop-color="#00fa0c"/><stop offset="0.4958" stop-color="#80ff00"/><stop offset="0.4967" stop-color="#ffff00"/><stop offset="0.4995" stop-color="#ffff00"/><stop offset="0.5005" stop-color="#20ff00"/><stop offset="0.5014" stop-color="#20ff00"/><stop offset="0.5023" stop-color="#f6ff00"/><stop offset="0.5033" stop-color="#f6ff00"/><stop offset="0.5042" stop-color="#00f810"/><stop offset="0.5051" stop-color="#00ca74"/><stop offset="0.5070" stop-color="#00ca74"/><stop offset="0.5079" stop-color="#00ca73"/><stop offset="0.5116" stop-color="#00ca73"/><stop offset="0.5125" stop-color="#00cb73"/><stop offset="0.5135" stop-color="#00cb72"/><stop offset="0.5237" stop-color="#00cb72"/><stop offset="0.5246" stop-color="#00ca73"/><stop offset="0.5274" stop-color="#00ca73"/><stop offset="0.5283" stop-color="#00f613"/><stop offset="0.5293" stop-color="#ecff00"/><stop offset="0.5302" stop-color="#20ff00"/><stop offset="0.5311" stop-color="#d9ff00"/><stop offset="0.5330" stop-color="#d9ff00"/><stop offset="0.5339" stop-color="#30ff00"/><stop offset="0.5367" stop-color="#30ff00"/><stop offset="0.5376" stop-color="#00f810"/><stop offset="0.5386" stop-color="#f6ff00"/><stop offset="0.5404" stop-color="#f6ff00"/><stop offset="0.5414" stop-color="#30ff00"/><stop offset="0.5423" stop-color="#a0ff00"/><stop offset="0.5432" stop-color="#d0ff00"/><stop offset="0.5451" stop-color="#d0ff00"/><stop offset="0.5460" stop-color="#00f11e"/><stop offset="0.5469" stop-color="#00c878"/><stop offset="0.5479" stop-color="#00c878"/><stop offset="0.5488" stop-color="#00c879"/><stop offset="0.5609" stop-color="#00c879"/><stop offset="0.5618" stop-color="#00fa0c"/><stop offset="0.5627" stop-color="#ffff00"/><stop offset="0.5692" stop-color="#ffff00"/><stop offset="0.5702" stop-color="#ffcc00"/><stop offset="0.5711" stop-color="#ff9900"/><stop offset="0.5730" stop-color="#ff9900"/><stop offset="0.5739" stop-color="#ffcc00"/><stop offset="0.5748" stop-color="#ffff00"/><stop offset="0.5776" stop-color="#ffff00"/><stop offset="0.5785" stop-color="#00fa0c"/><stop offset="0.5795" stop-color="#00c877"/><stop offset="0.5841" stop-color="#00c877"/><stop offset="0.5850" stop-color="#00c878"/><stop offset="0.5906" stop-color="#00c878"/><stop offset="0.5915" stop-color="#00c879"/><stop offset="0.5943" stop-color="#00c879"/><stop offset="0.5953" stop-color="#00c779"/><stop offset="0.5962" stop-color="#00c77a"/><stop offset="0.5990" stop-color="#00c77a"/><stop offset="0.5999" stop-color="#00c77b"/><stop offset="0.6027" stop-color="#00c77b"/><stop offset="0.6036" stop-color="#00c77c"/><stop offset="0.6046" stop-color="#00c77c"/><stop offset="0.6055" stop-color="#00c67c"/><stop offset="0.6092" stop-color="#00c67c"/><stop offset="0.6101" stop-color="#00d361"/><stop offset="0.6111" stop-color="#00cc70"/><stop offset="0.6120" stop-color="#00ec2a"/><stop offset="0.6176" stop-color="#00ec2a"/><stop offset="0.6185" stop-color="#00da51"/><stop offset="0.6194" stop-color="#00d361"/><stop offset="0.6204" stop-color="#00c878"/><stop offset="0.6213" stop-color="#00c877"/><stop offset="0.6222" stop-color="#00c976"/><stop offset="0.6231" stop-color="#00ca74"/><stop offset="0.6241" stop-color="#00ca73"/><stop offset="0.6250" stop-color="#00cb71"/><stop offset="0.6259" stop-color="#00cc70"/><stop offset="0.6269" stop-color="#00cc6f"/><stop offset="0.6278" stop-color="#00cd6d"/><stop offset="0.6287" stop-color="#00cd6c"/><stop offset="0.6296" stop-color="#00ce6b"/><stop offset="0.6306" stop-color="#00ce6a"/><stop offset="0.6315" stop-color="#00cf6a"/><stop offset="0.6324" stop-color="#00cf69"/><stop offset="0.6343" stop-color="#00cf69"/><stop offset="0.6352" stop-color="#00cf6a"/><stop offset="0.6362" stop-color="#00ce6a"/><stop offset="0.6371" stop-color="#00ce6b"/><stop offset="0.6380" stop-color="#00ce6c"/><stop offset="0.6389" stop-color="#00cd6d"/><stop offset="0.6399" stop-color="#00cd6e"/><stop offset="0.6408" stop-color="#00cc6f"/><stop offset="0.6417" stop-color="#00cc70"/><stop offset="0.6427" stop-color="#00d262"/><stop offset="0.6436" stop-color="#00cf6a"/><stop offset="0.6445" stop-color="#00e930"/><stop offset="0.6510" stop-color="#00e930"/><stop offset="0.6520" stop-color="#00fa0c"/><stop offset="0.6529" stop-color="#00e930"/><stop offset="0.6640" stop-color="#00e930"/><stop offset="0.6650" stop-color="#00fa0c"/><stop offset="0.6659" stop-color="#00e930"/><stop offset="0.6678" stop-color="#00e930"/><stop offset="0.6687" stop-color="#00d854"/><stop offset="0.6696" stop-color="#00d262"/><stop offset="0.6705" stop-color="#00c77a"/><stop offset="0.6761" stop-color="#00c77a"/><stop offset="0.6770" stop-color="#00fb08"/><stop offset="0.6780" stop-color="#fff200"/><stop offset="0.6789" stop-color="#fff200"/><stop offset="0.6798" stop-color="#ffa600"/><stop offset="0.6836" stop-color="#ffa600"/><stop offset="0.6845" stop-color="#fff200"/><stop offset="0.6854" stop-color="#8aff00"/><stop offset="0.6863" stop-color="#00fb08"/><stop offset="0.6873" stop-color="#00c878"/><stop offset="0.6901" stop-color="#00c878"/><stop offset="0.6910" stop-color="#00c877"/><stop offset="0.6919" stop-color="#00c877"/><stop offset="0.6928" stop-color="#00c977"/><stop offset="0.6938" stop-color="#00c977"/><stop offset="0.6947" stop-color="#00c976"/><stop offset="0.6966" stop-color="#00c976"/><stop offset="0.6975" stop-color="#00c975"/><stop offset="0.6993" stop-color="#00c975"/><stop offset="0.7003" stop-color="#00ca75"/><stop offset="0.7012" stop-color="#00ca74"/><stop offset="0.7040" stop-color="#00ca74"/><stop offset="0.7049" stop-color="#00ca73"/><stop offset="0.7096" stop-color="#00ca73"/><stop offset="0.7105" stop-color="#00cb72"/><stop offset="0.7170" stop-color="#00cb72"/><stop offset="0.7179" stop-color="#00ca73"/><stop offset="0.7235" stop-color="#00ca73"/><stop offset="0.7244" stop-color="#00ca74"/><stop offset="0.7282" stop-color="#00ca74"/><stop offset="0.7291" stop-color="#00ca75"/><stop offset="0.7300" stop-color="#00c975"/><stop offset="0.7319" stop-color="#00c975"/><stop offset="0.7328" stop-color="#00c976"/><stop offset="0.7337" stop-color="#00c976"/><stop offset="0.7347" stop-color="#00d066"/><stop offset="0.7356" stop-color="#00e930"/><stop offset="0.7365" stop-color="#00d066"/><stop offset="0.7375" stop-color="#00c976"/><stop offset="0.7384" stop-color="#00c977"/><stop offset="0.7402" stop-color="#00c977"/><stop offset="0.7412" stop-color="#00c877"/><stop offset="0.7495" stop-color="#00c877"/><stop offset="0.7505" stop-color="#00e23e"/><stop offset="0.7514" stop-color="#00d165"/><stop offset="0.7523" stop-color="#60ff00"/><stop offset="0.7607" stop-color="#60ff00"/><stop offset="0.7616" stop-color="#10ff00"/><stop offset="0.7625" stop-color="#56ff00"/><stop offset="0.7635" stop-color="#b3ff00"/><stop offset="0.7709" stop-color="#b3ff00"/><stop offset="0.7718" stop-color="#20ff00"/><stop offset="0.7811" stop-color="#20ff00"/><stop offset="0.7821" stop-color="#00e43c"/><stop offset="0.7839" stop-color="#00e43c"/><stop offset="0.7849" stop-color="#3dff00"/><stop offset="0.7858" stop-color="#ffa900"/><stop offset="0.7867" stop-color="#ff3300"/><stop offset="0.7941" stop-color="#ff3300"/><stop offset="0.7951" stop-color="#20ff00"/><stop offset="0.7960" stop-color="#20ff00"/><stop offset="0.7969" stop-color="#ffe600"/><stop offset="0.8053" stop-color="#ffe600"/><stop offset="0.8062" stop-color="#40ff00"/><stop offset="0.8072" stop-color="#ff6600"/><stop offset="0.8146" stop-color="#ff6600"/><stop offset="0.8155" stop-color="#f9ff00"/><stop offset="0.8164" stop-color="#2aff00"/><stop offset="0.8174" stop-color="#00c67c"/><stop offset="0.8183" stop-color="#00c77c"/><stop offset="0.8202" stop-color="#00c77c"/><stop offset="0.8211" stop-color="#00c77b"/><stop offset="0.8267" stop-color="#00c77b"/><stop offset="0.8276" stop-color="#00c77a"/><stop offset="0.8332" stop-color="#00c77a"/><stop offset="0.8341" stop-color="#00c779"/><stop offset="0.8350" stop-color="#00d066"/><stop offset="0.8360" stop-color="#00e930"/><stop offset="0.8369" stop-color="#00d066"/><stop offset="0.8378" stop-color="#00c879"/><stop offset="0.8462" stop-color="#00c879"/><stop offset="0.8471" stop-color="#00c779"/><stop offset="0.8480" stop-color="#00c779"/><stop offset="0.8490" stop-color="#00c77a"/><stop offset="0.8555" stop-color="#00c77a"/><stop offset="0.8564" stop-color="#00c77b"/><stop offset="0.8629" stop-color="#00c77b"/><stop offset="0.8638" stop-color="#00d066"/><stop offset="0.8648" stop-color="#00d854"/><stop offset="0.8657" stop-color="#00d854"/><stop offset="0.8666" stop-color="#00d066"/><stop offset="0.8676" stop-color="#00c77c"/><stop offset="0.8731" stop-color="#00c77c"/><stop offset="0.8741" stop-color="#00c77b"/><stop offset="0.8796" stop-color="#00c77b"/><stop offset="0.8806" stop-color="#00c77a"/><stop offset="0.8834" stop-color="#00c77a"/><stop offset="0.8843" stop-color="#00c779"/><stop offset="0.8852" stop-color="#00c879"/><stop offset="0.8871" stop-color="#00c879"/><stop offset="0.8880" stop-color="#00c878"/><stop offset="0.8899" stop-color="#00c878"/><stop offset="0.8908" stop-color="#00c877"/><stop offset="0.8917" stop-color="#00c877"/><stop offset="0.8927" stop-color="#00ce6c"/><stop offset="0.8936" stop-color="#00d360"/><stop offset="0.8945" stop-color="#00d360"/><stop offset="0.8954" stop-color="#00ce6c"/><stop offset="0.8964" stop-color="#00c976"/><stop offset="0.8973" stop-color="#00c975"/><stop offset="0.8992" stop-color="#00c975"/><stop offset="0.9001" stop-color="#00cc6f"/><stop offset="0.9010" stop-color="#00d854"/><stop offset="0.9020" stop-color="#00cc6f"/><stop offset="0.9029" stop-color="#00ca74"/><stop offset="0.9085" stop-color="#00ca74"/><stop offset="0.9094" stop-color="#00cc6f"/><stop offset="0.9103" stop-color="#00d066"/><stop offset="0.9112" stop-color="#00d066"/><stop offset="0.9122" stop-color="#00cc6f"/><stop offset="0.9131" stop-color="#00ca74"/><stop offset="0.9159" stop-color="#00ca74"/><stop offset="0.9168" stop-color="#00ca75"/><stop offset="0.9178" stop-color="#00ca75"/><stop offset="0.9187" stop-color="#00c975"/><stop offset="0.9205" stop-color="#00c975"/><stop offset="0.9215" stop-color="#00dc4d"/><stop offset="0.9224" stop-color="#20ff00"/><stop offset="0.9233" stop-color="#00fd05"/><stop offset="0.9243" stop-color="#ffff00"/><stop offset="0.9326" stop-color="#ffff00"/><stop offset="0.9336" stop-color="#a0ff00"/><stop offset="0.9345" stop-color="#a0ff00"/><stop offset="0.9354" stop-color="#00e43c"/><stop offset="0.9419" stop-color="#00e43c"/><stop offset="0.9428" stop-color="#20ff00"/><stop offset="0.9438" stop-color="#20ff00"/><stop offset="0.9447" stop-color="#ff9900"/><stop offset="0.9456" stop-color="#20ff00"/><stop offset="0.9475" stop-color="#20ff00"/><stop offset="0.9484" stop-color="#ff4d00"/><stop offset="0.9493" stop-color="#20ff00"/><stop offset="0.9503" stop-color="#c6ff00"/><stop offset="0.9512" stop-color="#ffff00"/><stop offset="0.9596" stop-color="#ffff00"/><stop offset="0.9605" stop-color="#00fa0c"/><stop offset="0.9614" stop-color="#00ca73"/><stop offset="0.9735" stop-color="#00ca73"/><stop offset="0.9744" stop-color="#00ca74"/><stop offset="0.9772" stop-color="#00ca74"/><stop offset="0.9782" stop-color="#00ca75"/><stop offset="0.9791" stop-color="#00c975"/><stop offset="0.9809" stop-color="#00c975"/><stop offset="0.9819" stop-color="#00c976"/><stop offset="0.9837" stop-color="#00c976"/><stop offset="0.9847" stop-color="#00c977"/><stop offset="0.9856" stop-color="#00c977"/><stop offset="0.9865" stop-color="#00c877"/><stop offset="0.9875" stop-color="#00c877"/><stop offset="0.9884" stop-color="#00c878"/><stop offset="0.9902" stop-color="#00c878"/><stop offset="0.9912" stop-color="#00c879"/><stop offset="0.9940" stop-color="#00c879"/><stop offset="0.9949" stop-color="#00c779"/><stop offset="0.9958" stop-color="#00c77a"/><stop offset="0.9995" stop-color="#00c77a"/></linearGradient></defs>
<rect x="205" y="503" width="1076" height="380" fill="url(#spg)"/>
<path d="M926.5 804v4M253.5 503v2M673.5 601v6M1141.5 630v3M966.5 791v2M332.5 558v4M269.5 622v4M1114.5 672v3M431.5 853v5M463.5 620v5M1246.5 585v5M320.5 563v5M236.5 769v2M1272.5 733v5M326.5 560v4M1117.5 855v4M583.5 739v5M640.5 630v2M963.5 542v5M572.5 591v6M1129.5 582v3M1191.5 725v4M1260.5 584v2M512.5 757v4M1142.5 541v4M259.5 591v2M730.5 681v6M1153.5 726v5M266.5 873v5M275.5 686v2M614.5 690v2M852.5 528v6M531.5 731v4M499.5 787v5M724.5 614v3M238.5 642v5M326.5 774v4M957.5 836v3M1183.5 654v5M548.5 857v6M804.5 846v5M713.5 633v4M1280.5 669v6M488.5 576v5M267.5 739v2M448.5 599v3M845.5 579v3M599.5 675v4M1247.5 608v6M986.5 805v6M667.5 616v4M497.5 597v3M837.5 669v3M970.5 875v6M562.5 727v4M685.5 536v6M765.5 509v4M769.5 673v3M1165.5 780v6M709.5 552v3M432.5 616v5M408.5 805v4M800.5 794v6M763.5 536v3M470.5 720v6M611.5 567v6M1090.5 727v2M871.5 775v2M449.5 563v2M431.5 558v3M319.5 755v2M396.5 575v6M368.5 715v3M456.5 736v4M1245.5 566v2M851.5 689v4M770.5 541v4M1160.5 668v3M211.5 518v2M519.5 812v5M249.5 699v4M254.5 870v2M1113.5 729v3M1113.5 757v2M466.5 545v5M651.5 612v4M978.5 652v3M929.5 689v6M946.5 768v2M1271.5 711v5M483.5 549v6M273.5 808v5M793.5 850v6M313.5 514v3M998.5 551v3M268.5 685v4M479.5 593v4M1138.5 674v6M638.5 615v2M399.5 541v2M314.5 569v4M258.5 815v4M490.5 774v3M1113.5 810v4M994.5 611v5M856.5 591v3M295.5 513v6M673.5 721v2M394.5 735v3M1119.5 822v2M872.5 785v5M702.5 815v6M646.5 543v5M961.5 591v5M312.5 631v6M691.5 773v3M512.5 506v3M336.5 688v5M629.5 769v2M250.5 514v5M601.5 840v4M476.5 862v3M1178.5 772v6M218.5 644v3M339.5 554v3M1251.5 568v5M474.5 796v6M762.5 617v6M760.5 795v5M802.5 874v5M585.5 551v4M378.5 820v6M700.5 639v4M280.5 837v6M638.5 660v3M1187.5 519v4M403.5 508v2M625.5 746v2M798.5 805v4M1268.5 522v6M549.5 568v3M1255.5 606v3M529.5 844v3M362.5 876v2M724.5 572v6M860.5 592v5M950.5 777v2M673.5 648v4M991.5 725v2M483.5 817v6M517.5 551v6M632.5 710v5M495.5 851v3M1190.5 715v2M489.5 840v3M958.5 724v4M1157.5 629v5M1186.5 580v2M312.5 515v2M681.5 869v5M668.5 687v2M802.5 562v4M806.5 539v5M216.5 632v4M482.5 524v5M1122.5 575v3M493.5 683v3M533.5 865v3M664.5 772v5M757.5 808v2M222.5 775v2M264.5 684v2M454.5 759v6M282.5 504v5M799.5 759v5M949.5 807v4M960.5 682v3M401.5 652v3M1126.5 815v5M954.5 841v3M328.5 821v4M236.5 612v5M496.5 778v5M239.5 554v2M568.5 554v3M1141.5 542v5M311.5 872v4M1123.5 796v3M276.5 512v2M531.5 737v6M500.5 563v6M216.5 519v5M1123.5 832v4M389.5 566v6M494.5 595v3M434.5 732v2M831.5 748v6M479.5 590v4M296.5 598v5M1164.5 675v4M929.5 842v3M1132.5 718v5M483.5 657v6M230.5 655v4M1196.5 581v5M287.5 781v6M754.5 754v4M887.5 763v3M412.5 586v2M281.5 627v4M544.5 517v5M233.5 660v3M539.5 757v2M931.5 817v5M1183.5 640v2M503.5 539v6M1137.5 605v3M400.5 519v4M972.5 657v6M343.5 530v2M618.5 740v3M982.5 815v6M467.5 715v4M657.5 864v6M683.5 514v6M658.5 753v5M534.5 560v2M647.5 731v6M531.5 667v5M891.5 538v6M860.5 610v4M547.5 521v5M964.5 595v3M1128.5 538v6M254.5 804v2M1087.5 865v6M338.5 598v4M666.5 504v4M1123.5 546v4M384.5 861v4M843.5 851v6M385.5 710v6M456.5 719v4M507.5 580v6M1277.5 621v2M443.5 686v6M970.5 517v4M638.5 521v6M437.5 687v5M1275.5 699v2M1278.5 755v5M588.5 614v6M629.5 697v6M978.5 711v5M1188.5 522v4M1107.5 804v5M832.5 580v4M1010.5 629v3M700.5 607v5M223.5 642v3M250.5 695v4M573.5 716v5M948.5 791v3M828.5 794v4M582.5 515v4M1264.5 866v5M631.5 855v3M1280.5 600v2M1239.5 852v2M707.5 694v5M599.5 646v5M217.5 829v6M389.5 588v2M583.5 576v6M845.5 525v4M887.5 544v5M1177.5 559v6M1088.5 667v2M256.5 785v3M762.5 679v5M290.5 739v5M642.5 507v6M327.5 742v2M275.5 586v6M436.5 750v6M331.5 605v5M582.5 622v6M506.5 532v3M448.5 825v4M557.5 676v2M1131.5 711v5M703.5 689v2M248.5 538v4M796.5 802v4M928.5 832v2M1007.5 768v3M261.5 512v2M630.5 520v5M251.5 837v4M767.5 616v5M376.5 555v6M248.5 519v6M250.5 536v4M680.5 555v3M959.5 768v3M401.5 692v5M1096.5 603v6M859.5 660v2M733.5 614v2M236.5 624v5M587.5 727v5M722.5 664v4M252.5 509v5M955.5 507v3M585.5 551v2M801.5 537v5M508.5 580v6M487.5 790v3M1275.5 619v5M473.5 749v6M755.5 585v6M498.5 790v6M1126.5 624v2M1118.5 721v3M316.5 823v6M462.5 761v2M525.5 687v3M1247.5 551v3M726.5 773v3M736.5 622v2M845.5 520v6M715.5 503v2M772.5 743v4M223.5 598v3M1254.5 593v2M527.5 832v4M338.5 809v4M376.5 671v5M861.5 708v5M550.5 750v6" stroke="#08d460" stroke-width="1" fill="none"/>
<path d="M759.5 738v3M504.5 646v2M410.5 746v3M329.5 649v5M270.5 861v4M593.5 831v3M1156.5 829v5M565.5 666v4M554.5 613v6M687.5 566v5M750.5 611v4M542.5 852v6M559.5 801v2M625.5 561v5M852.5 861v4M637.5 559v2M557.5 623v6M1098.5 810v5M1100.5 812v3M772.5 875v3M504.5 667v4M1005.5 504v5M409.5 682v2M948.5 798v5M995.5 517v3M434.5 705v3M1158.5 795v3M609.5 829v5M222.5 811v5M1011.5 621v5M226.5 735v4M769.5 812v4M840.5 733v3M799.5 629v5M521.5 870v4M226.5 520v2M470.5 609v6M629.5 760v2M692.5 543v3M235.5 847v2M993.5 666v3M378.5 624v4M597.5 711v2M227.5 583v4M314.5 875v6M351.5 795v6M878.5 614v4M655.5 799v3M794.5 606v3M680.5 596v2M553.5 552v2M1122.5 510v6M485.5 696v4M281.5 845v4M972.5 590v2M242.5 662v4M565.5 704v4M952.5 803v2M545.5 718v6M254.5 861v3M999.5 695v2M573.5 589v6M624.5 796v3M409.5 817v3M299.5 529v4M400.5 783v6M678.5 811v5M642.5 808v4M1272.5 680v4M732.5 528v5M278.5 610v4M926.5 531v4M1267.5 535v3M891.5 529v4M808.5 670v2M666.5 598v3M1240.5 609v6M446.5 527v5M697.5 833v4M474.5 862v6M409.5 714v2M536.5 536v3M728.5 630v4M1120.5 730v6M424.5 649v5M1167.5 634v3M578.5 585v4M694.5 643v6M1269.5 596v5M978.5 536v5M626.5 836v4M884.5 788v2M718.5 653v6M436.5 801v5M636.5 800v6M424.5 557v5M641.5 852v3M207.5 660v6M391.5 653v6M533.5 503v2M229.5 595v6M730.5 670v6M501.5 717v6M1129.5 684v3M315.5 681v6M1127.5 775v5M223.5 623v4M666.5 663v4M217.5 764v4M523.5 546v6M208.5 629v5M1248.5 631v2M479.5 613v3M1242.5 550v5M836.5 685v5M425.5 577v6M280.5 689v6M541.5 856v5M702.5 780v5M290.5 511v2M436.5 527v6M1136.5 508v6M751.5 520v6M346.5 835v5M527.5 584v6M1174.5 576v4M564.5 714v2M714.5 561v2M1003.5 626v5M978.5 563v2M1149.5 785v2M695.5 822v2M658.5 518v5M340.5 767v2M361.5 747v6M714.5 709v4M1010.5 604v4M760.5 650v4M463.5 590v6M833.5 723v2M220.5 614v6M718.5 651v2M613.5 780v5M1087.5 642v6M542.5 631v5M693.5 855v2M493.5 657v6M703.5 665v5M562.5 566v5M1270.5 845v2M514.5 798v4M229.5 660v4M592.5 772v3M932.5 532v6M294.5 530v5M718.5 691v5M1178.5 678v6M1084.5 876v3M241.5 574v6M1184.5 574v4M994.5 783v3M563.5 506v2M1254.5 606v5M1001.5 852v3M265.5 847v5M686.5 777v6M448.5 765v6M350.5 755v4M474.5 847v2M658.5 570v3M1000.5 736v5M219.5 503v4M341.5 745v2M1135.5 679v6M1253.5 712v3M248.5 705v4M1173.5 801v3M965.5 507v5M975.5 687v4M925.5 592v4M377.5 509v6M325.5 708v5M1240.5 799v2M1246.5 512v2M265.5 819v4M234.5 573v2M508.5 562v3M458.5 712v2M514.5 841v3M655.5 847v3M485.5 526v3M680.5 847v2M372.5 575v5M878.5 696v6M1128.5 810v2M304.5 831v6M586.5 512v6M472.5 650v2M1093.5 526v6M683.5 763v6M1184.5 562v4M1240.5 750v5M279.5 573v3M760.5 831v3M594.5 539v3M251.5 531v3M335.5 586v6M553.5 537v4M1164.5 777v6M736.5 508v4M962.5 842v4M795.5 783v4M1180.5 624v4M255.5 800v2M962.5 734v5M878.5 737v5M986.5 693v6M1195.5 561v3M1111.5 663v4M360.5 650v5M893.5 860v3M395.5 847v4M572.5 785v6M625.5 624v5M413.5 821v2M315.5 531v5M1153.5 626v6M400.5 688v5M703.5 584v6M644.5 636v3M555.5 759v5M1242.5 812v5M601.5 535v4M402.5 704v4M994.5 847v5M877.5 641v4M1254.5 656v2M1247.5 662v6M957.5 746v6M857.5 724v4M667.5 584v4M1134.5 698v4M757.5 755v6M697.5 786v6M324.5 538v2M680.5 632v6M542.5 615v2M946.5 588v4M671.5 760v4M633.5 868v3M210.5 864v5M331.5 645v3M754.5 803v4M457.5 752v4M971.5 741v5M965.5 843v4M1192.5 629v6M707.5 713v2M397.5 594v4M750.5 697v5M259.5 703v4M850.5 625v2M379.5 815v3M878.5 626v5M494.5 705v2M383.5 561v2M1140.5 859v4M268.5 584v2M975.5 724v3M1009.5 778v6M245.5 782v3M707.5 776v4M1178.5 746v5M250.5 639v4M332.5 775v2M629.5 626v2M485.5 833v4M231.5 516v2M1084.5 829v6M459.5 706v4M303.5 562v5M622.5 837v6M252.5 656v6M1109.5 641v6M1091.5 716v6M592.5 637v2M1163.5 633v5M882.5 858v5M1254.5 521v2M692.5 574v2M616.5 555v4M1251.5 782v2M213.5 694v3M577.5 842v3M712.5 663v4M893.5 666v3M649.5 625v3M498.5 562v2M326.5 720v2M875.5 651v3M509.5 739v6M374.5 565v4M510.5 598v5M1093.5 595v3M1125.5 568v2M847.5 667v5M512.5 712v5M960.5 645v5M964.5 851v2M494.5 560v5M301.5 731v3M705.5 514v5M525.5 659v4M1194.5 713v4M1116.5 607v6M1003.5 729v3M949.5 657v6M217.5 603v2M269.5 632v2M254.5 617v4M723.5 657v2M930.5 765v3M256.5 691v3M653.5 596v5M887.5 699v3M1254.5 835v5M428.5 873v3M797.5 509v4M476.5 564v3M994.5 661v3M681.5 590v5M214.5 673v5M270.5 849v2M1254.5 846v4M1159.5 619v2M989.5 688v2M214.5 510v4M569.5 829v4M945.5 617v4M850.5 588v6M692.5 634v3M1008.5 737v5M1246.5 700v6M522.5 733v3M848.5 520v3M1010.5 589v5M251.5 850v2M1253.5 714v5M256.5 813v5M964.5 750v2M1191.5 606v2M563.5 834v4M497.5 831v6M967.5 758v5M617.5 850v4M441.5 835v5M1248.5 538v4M433.5 617v5" stroke="#00bf98" stroke-width="1" fill="none"/>
<path d="M1014 723h9v2h-9zM1015 577h9v3h-9zM1015 775h7v3h-7zM1015 757h9v2h-9zM1015 610h8v3h-8zM1015 787h9v3h-9zM1014 511h9v3h-9zM1017 826h6v3h-6zM1015 720h7v2h-7zM1017 700h7v3h-7zM1014 670h9v2h-9zM1015 873h7v3h-7zM1014 807h10v3h-10zM1014 745h9v3h-9zM1015 643h9v3h-9zM1014 538h9v2h-9zM1015 522h6v2h-6zM1015 507h9v2h-9zM1014 538h10v2h-10zM1014 842h6v2h-6zM1016 585h6v3h-6zM1016 878h6v2h-6zM1017 691h7v3h-7zM1016 649h6v3h-6zM1016 508h6v2h-6zM1014 690h10v3h-10zM1014 848h10v2h-10zM1016 781h8v2h-8zM1014 812h7v2h-7zM1014 545h10v2h-10zM1015 589h9v2h-9zM1014 789h9v2h-9zM1015 681h9v2h-9zM1213 748h2v4h-2zM1214 512h2v6h-2zM1211 841h1v3h-1zM1216 622h1v6h-1zM1217 683h2v4h-2zM1211 609h2v2h-2zM1214 585h1v5h-1zM1211 568h2v3h-2zM1212 853h2v5h-2zM1217 594h2v2h-2zM1215 513h1v4h-1zM1215 764h2v3h-2zM1216 741h1v5h-1zM1214 539h2v6h-2zM1212 797h2v4h-2zM1214 608h2v6h-2zM1212 517h2v3h-2zM742 741h2v8h-2zM744 605h2v5h-2zM740 827h1v3h-1zM746 708h1v8h-1zM741 615h1v4h-1zM744 642h1v4h-1zM741 614h1v9h-1zM740 751h2v8h-2zM739 674h1v9h-1zM742 833h1v3h-1z" fill="#ffe000"/>
<path d="M1018 733h6v2h-6zM1017 725h7v3h-7zM1014 621h10v3h-10zM1014 718h6v3h-6zM1015 834h9v2h-9zM1014 874h9v3h-9zM1015 776h9v2h-9zM1014 794h8v2h-8zM1015 667h7v3h-7zM1015 601h9v3h-9zM1015 798h9v3h-9zM1014 820h8v3h-8zM1015 790h9v3h-9zM1015 683h8v2h-8zM1014 679h10v3h-10zM1014 747h10v3h-10zM1015 821h9v2h-9zM1017 512h7v2h-7zM1014 556h8v2h-8zM1015 598h7v3h-7zM1018 553h6v3h-6zM1017 765h7v2h-7zM1015 863h9v2h-9zM1014 513h8v3h-8zM1015 735h8v2h-8zM1015 841h9v2h-9zM1016 847h8v3h-8zM1014 532h10v3h-10zM1015 799h9v3h-9zM1058 581h2v3h-2zM1056 612h1v5h-1zM1059 712h2v2h-2zM1051 535h1v3h-1zM1054 852h2v5h-2zM1053 809h1v3h-1zM1056 782h1v4h-1zM1053 876h2v4h-2zM1057 651h3v4h-3zM1054 745h1v4h-1zM1056 773h3v2h-3zM1057 598h3v4h-3zM1054 511h3v5h-3zM1051 815h2v5h-2zM1055 605h2v3h-2zM1053 522h1v4h-1zM1054 639h2v2h-2zM1060 536h1v2h-1zM1056 764h2v5h-2zM1055 731h3v2h-3zM1053 681h3v3h-3zM1059 743h2v5h-2zM1053 765h1v2h-1zM1058 872h1v3h-1zM1051 788h3v5h-3zM1053 577h1v4h-1zM1054 689h3v5h-3zM1054 759h2v5h-2z" fill="#ff1000"/>
<path d="M1014 782h7v2h-7zM1015 551h7v3h-7zM1014 532h10v2h-10zM1014 669h10v2h-10zM1015 617h6v3h-6zM1017 583h6v3h-6zM1014 512h6v2h-6zM1015 678h7v2h-7zM1014 839h10v2h-10zM1014 857h9v2h-9zM1014 808h10v3h-10zM1015 611h7v3h-7zM1015 820h7v2h-7zM1016 820h8v3h-8zM1014 782h9v2h-9zM1015 835h9v2h-9zM1014 513h10v3h-10zM1016 566h8v3h-8zM1014 617h10v3h-10zM1015 717h9v3h-9zM1015 700h9v3h-9zM1014 762h7v3h-7zM1015 516h7v3h-7zM1014 563h10v2h-10zM1014 645h10v3h-10zM1014 805h6v2h-6zM1015 545h8v2h-8zM1014 768h8v3h-8zM1014 695h10v3h-10zM1017 562h6v3h-6z" fill="#ffff00"/>
<path d="M1014 814h10v3h-10zM1014 826h8v2h-8zM1014 552h10v2h-10zM1014 525h7v3h-7zM1016 703h8v3h-8zM1014 737h9v3h-9zM1016 551h8v3h-8zM1014 831h6v3h-6zM1017 600h7v2h-7zM1014 743h9v2h-9zM1016 736h8v2h-8zM1015 522h9v3h-9zM1016 505h8v3h-8zM1014 587h9v2h-9zM1014 694h9v2h-9zM1014 540h8v3h-8zM1014 814h10v2h-10zM1014 587h6v3h-6zM1212 646h1v4h-1zM1213 594h1v5h-1zM1217 538h2v2h-2zM1213 808h2v3h-2zM1215 542h1v2h-1zM1212 766h2v6h-2zM1214 764h2v3h-2zM1217 573h1v3h-1zM1217 702h1v4h-1zM1212 821h2v3h-2zM1214 609h1v4h-1zM1212 825h1v5h-1zM1218 859h1v2h-1zM1213 552h2v3h-2zM1212 646h1v6h-1zM1213 685h2v5h-2z" fill="#40ff00"/>
<path d="M1017 694h6v2h-6zM1014 555h8v3h-8zM1015 814h8v2h-8zM1014 809h6v2h-6zM1014 503h7v2h-7zM1015 808h6v3h-6zM1014 656h10v2h-10zM1015 625h9v3h-9zM1014 603h10v3h-10zM1014 668h6v2h-6zM1018 554h6v3h-6zM1015 603h8v2h-8zM1015 798h7v2h-7zM1018 601h6v3h-6zM1014 721h9v3h-9zM1015 833h8v2h-8zM1014 567h10v3h-10zM1014 532h10v2h-10zM1014 780h10v2h-10zM1015 642h9v3h-9zM1014 645h9v3h-9zM1016 696h8v2h-8zM1017 690h7v2h-7zM1016 695h6v3h-6zM1016 854h8v3h-8zM1014 634h7v2h-7zM1204 858h3v2h-3zM1204 574h3v4h-3zM1206 749h3v2h-3zM1206 809h3v5h-3zM1204 516h3v5h-3zM1204 810h1v2h-1zM1208 585h1v3h-1zM1204 712h3v5h-3zM1206 632h3v5h-3zM1203 504h3v4h-3zM1204 514h2v2h-2zM1203 727h1v5h-1zM1203 709h3v4h-3zM1205 607h1v3h-1zM1205 728h2v2h-2zM1205 591h2v2h-2zM1203 775h2v3h-2zM1230 712h1v4h-1zM1232 858h1v2h-1zM1231 553h3v3h-3zM1231 742h1v3h-1zM1228 725h3v2h-3zM1236 715h2v2h-2zM1227 657h1v3h-1zM1229 519h2v4h-2zM1230 696h3v3h-3zM1231 744h3v2h-3zM1236 833h1v3h-1zM1230 505h3v4h-3zM1233 867h3v3h-3zM1232 729h3v3h-3zM1233 746h1v2h-1zM1232 682h2v4h-2zM1233 665h3v2h-3zM1236 624h1v4h-1zM1231 665h1v3h-1zM1228 524h3v2h-3zM1236 555h2v4h-2z" fill="#ff9000"/>
<path d="M1018 547h6v2h-6zM1015 865h9v2h-9zM1014 663h10v2h-10zM1016 637h7v3h-7zM1014 575h7v2h-7zM1014 812h8v3h-8zM1015 778h6v3h-6zM1018 796h6v3h-6zM1015 621h8v2h-8zM1014 718h7v3h-7zM1015 759h8v2h-8zM1014 757h9v2h-9zM1014 752h8v3h-8zM1015 621h9v2h-9z" fill="#00e050"/>
<path d="M1025 652h10v21h-10zM1025 549h4v13h-4zM1025 705h9v14h-9zM1025 539h9v6h-9zM1025 673h10v16h-10zM1030 690h4v11h-4zM1025 679h9v7h-9zM1028 613h6v6h-6zM1027 593h8v18h-8zM1026 861h8v19h-8zM1025 690h9v16h-9zM1025 686h10v6h-10zM1025 608h8v7h-8zM1028 540h7v19h-7zM1025 567h9v20h-9zM1025 802h10v14h-10zM1030 564h4v19h-4zM1079 776h3v4h-3zM1076 545h2v4h-2zM1080 747h3v4h-3zM1074 829h1v5h-1zM1079 671h3v3h-3zM1073 574h2v3h-2zM1074 704h1v5h-1zM1079 558h2v2h-2zM1077 827h3v2h-3zM1073 831h1v4h-1zM1073 544h1v5h-1zM1075 730h3v2h-3zM1077 869h1v4h-1zM1075 514h1v2h-1zM1077 857h2v2h-2zM1079 596h1v5h-1zM1075 745h3v5h-3zM1081 762h2v5h-2zM1081 704h1v4h-1zM1073 714h2v2h-2zM1074 673h3v3h-3zM1074 626h3v2h-3zM1075 735h3v3h-3zM1079 532h2v2h-2zM1076 715h3v2h-3zM1076 768h3v5h-3zM1079 784h1v4h-1zM1080 644h3v2h-3zM1200 755h3v6h-3zM1200 703h2v8h-2zM1200 856h3v3h-3zM1199 870h3v4h-3zM1201 578h2v8h-2zM1201 844h3v5h-3zM1200 820h2v5h-2zM1200 619h2v5h-2zM1202 536h2v6h-2zM1201 552h3v7h-3zM1199 830h3v5h-3zM1199 576h3v3h-3zM1200 513h3v7h-3zM1200 842h2v3h-2zM1201 505h3v4h-3zM1200 603h3v5h-3zM1199 835h3v4h-3zM1200 735h2v3h-2zM1201 789h2v7h-2zM1202 552h2v6h-2zM1201 771h3v6h-3zM1199 552h2v8h-2zM1200 516h2v7h-2zM1201 767h3v7h-3zM1200 707h3v4h-3zM1201 828h2v4h-2zM1201 869h3v4h-3zM1201 699h2v5h-2zM1202 722h2v3h-2zM1201 694h3v6h-3zM1200 743h3v8h-3z" fill="#ff5000"/>
<path d="M1026 806h9v16h-9zM1025 563h10v17h-10zM1027 837h4v15h-4zM1025 585h9v20h-9zM1030 818h5v7h-5zM1030 872h4v11h-4zM1028 612h6v7h-6zM1028 738h7v16h-7zM1027 754h8v10h-8zM1025 632h10v6h-10zM1029 688h4v11h-4zM1027 852h7v10h-7zM1026 842h9v16h-9zM1026 694h9v13h-9zM1025 637h10v6h-10z" fill="#ff6000"/>
<path d="M1025 793h10v12h-10zM1026 602h9v18h-9zM1027 786h8v14h-8zM1026 588h9v16h-9zM1027 740h5v19h-5zM1028 549h5v19h-5zM1031 773h4v14h-4zM1028 567h4v14h-4zM1026 774h9v20h-9zM1025 534h10v11h-10zM1025 789h7v19h-7zM1025 767h10v20h-10zM1026 736h9v14h-9zM1081 579h1v4h-1zM1074 645h3v4h-3zM1079 512h1v3h-1zM1082 561h1v5h-1zM1078 830h2v2h-2zM1075 699h3v4h-3zM1073 671h1v2h-1zM1074 785h3v4h-3zM1080 521h1v5h-1zM1075 737h2v4h-2zM1073 588h3v4h-3zM1076 773h1v4h-1zM1079 843h3v3h-3zM1080 677h3v5h-3zM1074 673h1v4h-1zM1079 654h2v4h-2zM1073 587h2v4h-2zM1078 759h2v4h-2zM1076 598h2v2h-2zM1079 545h3v2h-3zM1075 626h1v2h-1zM1077 875h2v2h-2zM1074 849h1v3h-1zM1076 704h2v5h-2zM1074 604h3v3h-3zM1080 536h2v3h-2zM1073 617h3v4h-3zM1080 599h3v3h-3zM1079 557h1v2h-1z" fill="#ff8000"/>
<path d="M1030 719h2v3h-2zM1027 513h1v3h-1zM1029 545h3v2h-3zM1033 631h2v3h-2zM1027 805h2v2h-2zM1031 567h1v3h-1zM1034 676h1v3h-1zM1030 813h1v3h-1zM1025 737h1v2h-1zM1025 835h3v2h-3zM1025 506h2v3h-2zM1031 880h3v3h-3zM1027 705h3v2h-3zM1031 715h3v2h-3zM1029 757h1v2h-1zM1026 659h3v2h-3zM1025 738h3v3h-3zM1031 535h3v3h-3zM1026 878h1v2h-1zM1026 864h1v3h-1zM1027 506h3v2h-3zM1027 781h3v3h-3zM1028 578h1v2h-1zM1030 801h3v2h-3zM1027 638h2v3h-2zM1027 879h1v2h-1zM1077 814h3v3h-3zM1078 847h1v2h-1zM1074 726h1v5h-1zM1080 581h1v3h-1zM1076 684h2v3h-2zM1076 843h3v2h-3zM1079 587h1v2h-1zM1074 871h1v4h-1zM1075 539h1v2h-1zM1082 657h1v4h-1zM1079 542h2v2h-2zM1081 824h2v3h-2zM1076 503h3v3h-3zM1078 730h3v2h-3zM1075 514h3v2h-3zM1078 525h3v4h-3zM1081 827h1v5h-1zM1080 776h1v2h-1zM1076 555h2v5h-2zM1078 636h2v4h-2zM1082 527h1v3h-1zM1079 548h3v5h-3zM1078 568h1v2h-1zM1073 703h2v3h-2zM1073 705h3v4h-3zM1080 684h1v5h-1zM1075 577h2v2h-2zM1073 666h3v3h-3zM1080 604h2v5h-2zM1074 675h2v3h-2zM1073 829h3v5h-3zM1077 780h1v5h-1zM1076 602h1v4h-1z" fill="#ff3000"/>
<path d="M1030 503h1v2h-1zM1033 834h1v2h-1zM1029 609h3v2h-3zM1029 714h3v2h-3zM1029 687h2v2h-2zM1031 826h2v3h-2zM1034 543h1v3h-1zM1025 590h1v3h-1zM1031 542h3v2h-3zM1032 646h3v2h-3zM1028 524h2v3h-2zM1026 834h1v3h-1zM1028 849h3v3h-3zM1028 723h2v2h-2zM1025 848h1v2h-1zM1031 611h3v3h-3zM1027 543h2v3h-2zM1026 517h3v3h-3zM1027 623h3v3h-3zM1026 585h2v3h-2zM1029 804h2v3h-2zM1030 521h2v2h-2zM1026 596h2v3h-2zM1032 566h2v2h-2zM1027 787h3v3h-3zM1030 833h3v3h-3zM1033 532h2v3h-2zM1028 638h1v3h-1zM1027 809h2v3h-2zM1027 723h3v2h-3z" fill="#a0ff00"/>
<path d="M1028 676h1v3h-1zM1026 849h1v2h-1zM1030 667h1v3h-1zM1025 574h3v2h-3zM1027 620h3v2h-3zM1028 733h3v3h-3zM1031 622h3v2h-3zM1028 843h2v2h-2zM1030 545h1v3h-1zM1032 549h1v2h-1zM1028 748h2v3h-2zM1031 568h1v2h-1zM1030 545h2v3h-2zM1028 730h2v3h-2zM1028 623h2v3h-2zM1026 797h1v3h-1zM1028 583h1v3h-1zM1026 591h1v3h-1zM1030 648h3v3h-3zM1026 798h1v3h-1zM1026 850h1v3h-1zM1031 726h2v3h-2zM1029 520h1v3h-1zM1034 697h1v3h-1zM1225 641h1v2h-1zM1225 749h1v3h-1zM1225 603h1v3h-1zM1225 817h1v4h-1zM1225 842h1v2h-1zM1225 856h1v4h-1zM1225 703h1v2h-1zM1225 624h1v4h-1zM1225 689h1v2h-1zM1225 877h1v3h-1zM1225 795h1v2h-1zM1225 663h1v4h-1zM1225 600h1v2h-1zM1225 617h1v3h-1zM1225 808h1v3h-1zM1225 818h1v2h-1zM1225 536h1v3h-1zM1225 724h1v4h-1zM1225 855h1v2h-1zM1225 874h1v4h-1zM1225 557h1v2h-1z" fill="#ffd000"/>
<path d="M1052 651h1v3h-1zM1057 723h2v4h-2zM1055 843h3v4h-3zM1058 835h2v5h-2zM1051 683h2v5h-2zM1056 614h1v5h-1zM1052 775h3v4h-3zM1052 549h2v2h-2zM1050 711h2v2h-2zM1054 545h3v4h-3zM1055 727h1v2h-1zM1055 540h2v4h-2zM1050 749h2v5h-2zM1056 823h2v3h-2zM1050 693h3v2h-3zM1050 863h3v5h-3zM1057 715h1v5h-1zM1051 774h2v2h-2zM1054 693h2v3h-2zM1054 804h1v5h-1zM1056 514h3v4h-3zM1050 597h2v4h-2zM1055 559h1v4h-1zM1051 566h2v5h-2zM1054 638h3v5h-3zM1054 703h2v4h-2zM1058 698h3v2h-3zM1054 738h2v2h-2zM1053 879h2v2h-2zM1058 773h2v5h-2z" fill="#ff6a00"/>
<path d="M1052 746h2v5h-2zM1054 570h2v5h-2zM1052 856h3v5h-3zM1052 877h2v3h-2zM1053 631h3v3h-3zM1054 804h1v3h-1zM1059 637h2v4h-2zM1054 773h3v5h-3zM1053 591h3v5h-3zM1050 669h2v2h-2zM1055 807h1v5h-1zM1054 639h1v4h-1zM1056 584h2v4h-2zM1054 558h1v2h-1zM1059 732h1v5h-1zM1058 656h3v2h-3zM1051 807h1v4h-1zM1053 832h2v3h-2zM1057 714h2v5h-2zM1057 592h3v5h-3zM1057 718h3v3h-3zM1058 751h1v5h-1zM1054 829h3v5h-3zM1054 871h3v3h-3zM1059 708h2v2h-2zM1057 817h2v5h-2zM1060 871h1v5h-1zM1059 565h2v5h-2zM1054 751h2v5h-2zM1053 810h3v3h-3zM1058 728h2v4h-2zM1053 782h3v4h-3z" fill="#ff2800"/>
<path d="M1069 770h2v5h-2zM1069 672h3v2h-3zM1069 573h1v2h-1zM1067 525h2v5h-2zM1069 810h3v4h-3zM1068 604h3v2h-3zM1064 682h1v5h-1zM1066 551h1v5h-1zM1062 693h1v2h-1zM1066 729h2v2h-2zM1069 663h3v2h-3zM1062 704h3v2h-3zM1066 555h3v4h-3zM1069 806h2v5h-2zM1065 629h3v3h-3zM1071 503h1v3h-1zM1062 785h2v2h-2zM1064 630h3v2h-3zM1065 531h2v4h-2zM1069 529h1v4h-1zM1065 744h3v5h-3zM1067 554h3v2h-3zM1064 699h2v3h-2zM1070 650h2v5h-2zM1065 564h1v2h-1zM1062 629h3v2h-3zM1063 754h3v4h-3zM1066 734h2v3h-2zM1062 724h2v5h-2zM1063 557h1v2h-1zM1065 842h1v3h-1zM1066 750h1v2h-1zM1066 677h2v2h-2zM1071 580h1v3h-1zM1065 506h3v4h-3zM1070 716h2v2h-2zM1234 811h1v2h-1zM1227 689h2v3h-2zM1227 542h3v2h-3zM1230 609h2v2h-2zM1228 516h2v2h-2zM1232 801h2v4h-2zM1229 549h1v2h-1zM1227 760h2v2h-2zM1235 784h1v3h-1zM1231 611h1v3h-1zM1228 687h3v4h-3zM1227 590h1v3h-1zM1229 868h2v3h-2zM1228 765h3v2h-3zM1229 648h2v4h-2zM1230 563h2v4h-2zM1232 735h1v4h-1zM1232 708h2v3h-2zM1228 705h3v3h-3zM1230 632h1v3h-1zM1229 749h3v2h-3zM1230 805h2v4h-2zM1234 731h2v3h-2zM1232 781h1v4h-1zM826 852h1v8h-1zM825 835h1v4h-1zM820 588h1v10h-1zM811 649h1v10h-1zM810 510h1v6h-1zM812 708h1v3h-1zM818 736h1v3h-1zM811 774h2v8h-2zM815 549h1v3h-1zM810 518h1v10h-1zM813 688h1v10h-1zM820 814h1v3h-1zM826 757h1v6h-1zM817 521h1v3h-1zM815 525h1v6h-1zM819 779h2v4h-2zM812 728h1v3h-1zM812 514h2v8h-2zM821 743h2v7h-2zM823 834h2v8h-2zM818 612h1v10h-1zM819 823h2v3h-2z" fill="#ffb000"/>
<path d="M1067 736h1v3h-1zM1066 775h3v3h-3zM1066 798h1v3h-1zM1069 615h3v4h-3zM1064 855h3v3h-3zM1067 633h3v2h-3zM1068 662h3v3h-3zM1065 580h1v2h-1zM1062 705h2v4h-2zM1069 749h2v5h-2zM1063 794h1v2h-1zM1063 708h1v2h-1zM1062 797h1v4h-1zM1070 755h1v2h-1zM1068 540h3v5h-3zM1069 717h3v4h-3zM1066 656h2v3h-2zM1064 727h2v5h-2zM1067 697h2v5h-2zM1071 799h1v4h-1zM1069 528h3v3h-3zM1069 750h1v2h-1zM1068 762h2v2h-2zM1064 671h3v4h-3zM1068 821h2v5h-2zM1065 634h1v2h-1zM739 671h1v10h-1zM741 620h2v10h-2zM745 755h2v9h-2zM738 760h1v9h-1zM744 603h1v5h-1zM738 724h2v5h-2zM745 583h2v9h-2zM745 523h1v9h-1zM744 764h1v8h-1zM742 827h1v4h-1z" fill="#e0ff00"/>
<path d="M1062 724h1v2h-1zM1062 742h1v5h-1zM1063 780h3v2h-3zM1068 696h2v3h-2zM1068 669h1v4h-1zM1063 700h3v2h-3zM1065 558h1v3h-1zM1066 664h3v2h-3zM1067 860h2v2h-2zM1068 622h2v4h-2zM1065 730h3v5h-3zM1066 578h2v5h-2zM1068 751h1v5h-1zM1063 548h3v2h-3zM1067 703h2v5h-2zM1066 584h1v3h-1zM1064 607h2v5h-2zM1070 787h2v2h-2zM1070 633h2v2h-2zM1062 548h1v5h-1zM1069 533h2v4h-2zM1071 777h1v3h-1zM1064 748h1v2h-1zM1064 865h3v2h-3zM1066 707h1v5h-1zM1065 841h1v5h-1zM1069 876h3v3h-3zM1070 794h2v2h-2z" fill="#ffff40"/>
<path d="M1201 858h3v7h-3zM1201 695h2v7h-2zM1200 618h3v7h-3zM1200 507h3v3h-3zM1199 641h3v8h-3zM1199 737h3v6h-3zM1199 742h3v4h-3zM1202 571h2v7h-2zM1199 788h3v5h-3zM1199 756h2v8h-2zM1199 505h3v8h-3zM1199 730h3v8h-3zM1199 592h2v5h-2zM1200 768h2v6h-2zM1199 717h3v4h-3zM1201 652h3v4h-3zM1201 674h2v8h-2zM1201 642h3v6h-3zM1200 751h2v4h-2zM1200 860h2v3h-2zM1199 868h3v4h-3zM1201 820h3v6h-3zM1199 629h2v7h-2zM1199 860h2v8h-2zM1202 697h2v5h-2zM1200 602h3v7h-3zM1200 722h3v6h-3zM1199 825h3v4h-3zM1201 856h3v6h-3zM1234 562h3v2h-3zM1233 569h3v3h-3zM1235 549h2v4h-2zM1231 672h2v4h-2zM1231 751h2v4h-2zM1236 772h1v4h-1zM1231 513h1v2h-1zM1228 774h1v3h-1zM1234 828h1v4h-1zM1235 697h1v2h-1zM1235 621h3v3h-3zM1227 639h2v3h-2zM1234 841h2v4h-2zM1232 877h2v3h-2zM1230 857h3v3h-3zM1235 551h1v4h-1zM1235 859h2v4h-2zM1231 555h1v4h-1zM1228 860h3v2h-3zM1232 755h3v2h-3zM1234 855h3v3h-3zM1235 871h1v3h-1zM1233 619h2v3h-2zM1233 796h1v4h-1zM1231 575h3v3h-3z" fill="#ff7000"/>
<path d="M1205 623h3v4h-3zM1205 804h2v2h-2zM1203 592h2v5h-2zM1203 702h2v2h-2zM1203 680h3v3h-3zM1207 682h2v5h-2zM1207 605h1v2h-1zM1206 873h3v3h-3zM1207 616h1v5h-1zM1206 514h3v4h-3zM1203 624h1v3h-1zM1204 655h3v3h-3zM1205 527h2v4h-2zM1203 788h2v3h-2zM1207 616h2v3h-2zM1208 872h1v5h-1zM1203 773h3v5h-3zM1204 839h3v5h-3zM1206 559h2v2h-2zM1205 505h1v3h-1zM1204 698h2v4h-2zM1204 794h2v2h-2zM1206 525h2v5h-2z" fill="#ffc000"/>
<path d="M1215 525h2v3h-2zM1214 753h2v3h-2zM1213 547h1v2h-1zM1218 660h1v3h-1zM1215 672h2v3h-2zM1216 616h2v4h-2zM1213 851h1v5h-1zM1215 537h1v2h-1zM1211 802h1v5h-1zM1213 840h1v4h-1zM1217 503h2v3h-2zM1212 630h1v6h-1zM1212 514h1v2h-1zM1211 511h2v2h-2zM1216 842h1v5h-1zM1216 772h2v6h-2zM1214 870h2v6h-2z" fill="#00c090"/>
<path d="M1225 864h1v3h-1zM1225 798h1v4h-1zM1225 552h1v4h-1zM1225 830h1v4h-1zM1225 717h1v4h-1zM1225 713h1v3h-1zM1225 843h1v3h-1zM1225 721h1v4h-1zM1225 821h1v4h-1zM1225 867h1v3h-1zM1225 599h1v2h-1zM1225 715h1v4h-1zM1225 843h1v2h-1zM1225 733h1v2h-1zM1225 559h1v3h-1zM1225 645h1v4h-1zM1225 860h1v2h-1zM1225 730h1v3h-1zM1225 671h1v4h-1z" fill="#20ff00"/>
<path d="M819 823h2v9h-2zM811 563h2v3h-2zM822 614h1v6h-1zM823 506h1v8h-1zM814 559h2v7h-2zM811 658h2v8h-2zM821 814h2v3h-2zM819 785h1v6h-1zM812 584h1v8h-1zM810 812h1v4h-1zM811 879h2v4h-2zM824 644h1v9h-1zM825 503h1v10h-1zM818 558h1v5h-1zM811 576h1v3h-1zM825 678h2v6h-2zM825 846h2v8h-2zM810 739h1v9h-1z" fill="#e8ff00"/>
<g fill="#fff">
<rect x="205" y="883" width="1077" height="1"/>
<rect x="1281" y="503" width="1" height="380"/>
<rect x="205" y="503" width="1" height="10"/>
<rect x="205" y="874" width="1" height="10"/>
<rect x="473" y="503" width="1" height="10"/>
<rect x="473" y="874" width="1" height="10"/>
<rect x="742" y="503" width="1" height="10"/>
<rect x="742" y="874" width="1" height="10"/>
<rect x="1011" y="503" width="1" height="10"/>
<rect x="1011" y="874" width="1" height="10"/>
<rect x="1281" y="503" width="1" height="10"/>
<rect x="1281" y="874" width="1" height="10"/>
<rect x="205" y="540" width="10" height="1"/>
<rect x="1271" y="540" width="11" height="1"/>
<rect x="205" y="578" width="10" height="1"/>
<rect x="1271" y="578" width="11" height="1"/>
<rect x="205" y="617" width="10" height="1"/>
<rect x="1271" y="617" width="11" height="1"/>
<rect x="205" y="655" width="10" height="1"/>
<rect x="1271" y="655" width="11" height="1"/>
<rect x="205" y="693" width="10" height="1"/>
<rect x="1271" y="693" width="11" height="1"/>
<rect x="205" y="731" width="10" height="1"/>
<rect x="1271" y="731" width="11" height="1"/>
<rect x="205" y="770" width="10" height="1"/>
<rect x="1271" y="770" width="11" height="1"/>
<rect x="205" y="808" width="10" height="1"/>
<rect x="1271" y="808" width="11" height="1"/>
<rect x="205" y="846" width="10" height="1"/>
<rect x="1271" y="846" width="11" height="1"/>
</g>
<text x="201" y="547" font-size="14" fill="#fff" text-anchor="end" font-weight="normal" >1.176</text>
<text x="201" y="585" font-size="14" fill="#fff" text-anchor="end" font-weight="normal" >2.414</text>
<text x="201" y="624" font-size="14" fill="#fff" text-anchor="end" font-weight="normal" >3.59</text>
<text x="201" y="662" font-size="14" fill="#fff" text-anchor="end" font-weight="normal" >4.89</text>
<text x="201" y="700" font-size="14" fill="#fff" text-anchor="end" font-weight="normal" >6.128</text>
<text x="201" y="738" font-size="14" fill="#fff" text-anchor="end" font-weight="normal" >7.366</text>
<text x="201" y="777" font-size="14" fill="#fff" text-anchor="end" font-weight="normal" >8.604</text>
<text x="201" y="815" font-size="14" fill="#fff" text-anchor="end" font-weight="normal" >9.842</text>
<text x="201" y="853" font-size="14" fill="#fff" text-anchor="end" font-weight="normal" >11.08</text>
<text x="200" y="892" font-size="14" fill="#fff" text-anchor="end" font-weight="normal" >12.752</text>
<text x="205" y="904.5" font-size="15" fill="#fff" text-anchor="middle" font-weight="normal" >30M</text>
<text x="474" y="904.5" font-size="15" fill="#fff" text-anchor="middle" font-weight="normal" >272.5M</text>
<text x="743" y="904.5" font-size="15" fill="#fff" text-anchor="middle" font-weight="normal" >515M</text>
<text x="1012" y="904.5" font-size="15" fill="#fff" text-anchor="middle" font-weight="normal" >757.5M</text>
<text x="1282" y="904.5" font-size="15" fill="#fff" text-anchor="middle" font-weight="normal" >1G</text>
<text x="741.5" y="922" font-size="13.5" fill="#fff" text-anchor="middle" font-weight="normal" textLength="93.5" lengthAdjust="spacingAndGlyphs" >Frequency [Hz]</text>
<text x="1278.5" y="917" font-size="11" fill="#fff" text-anchor="middle" font-weight="normal" >8</text>
<text x="1248" y="932" font-size="11.5" fill="#fff" text-anchor="start" font-weight="normal" textLength="26" lengthAdjust="spacingAndGlyphs" >x 10</text>
<text transform="translate(148 696) rotate(-90)" font-size="14" fill="#fff" text-anchor="middle" textLength="62" lengthAdjust="spacingAndGlyphs">Time [sec]</text>
<rect x="1302" y="503" width="50" height="380" fill="url(#cb)"/>
<rect x="1352" y="503" width="1" height="381" fill="#fff"/>
<rect x="1306" y="883" width="46" height="1" fill="#fff"/>
<rect x="1302" y="883" width="3" height="1" fill="#fff"/>
<rect x="1349" y="883" width="3" height="1" fill="#fff"/>
<text x="1356" y="891.5" font-size="14" fill="#fff" text-anchor="start" font-weight="normal" >0</text>
<rect x="1302" y="836" width="3" height="1" fill="#fff"/>
<rect x="1349" y="836" width="3" height="1" fill="#fff"/>
<text x="1356" y="844.5" font-size="14" fill="#fff" text-anchor="start" font-weight="normal" >10</text>
<rect x="1302" y="788" width="3" height="1" fill="#fff"/>
<rect x="1349" y="788" width="3" height="1" fill="#fff"/>
<text x="1356" y="796.5" font-size="14" fill="#fff" text-anchor="start" font-weight="normal" >20</text>
<rect x="1302" y="740" width="3" height="1" fill="#fff"/>
<rect x="1349" y="740" width="3" height="1" fill="#fff"/>
<text x="1356" y="748.5" font-size="14" fill="#fff" text-anchor="start" font-weight="normal" >30</text>
<rect x="1302" y="693" width="3" height="1" fill="#fff"/>
<rect x="1349" y="693" width="3" height="1" fill="#fff"/>
<text x="1356" y="701.5" font-size="14" fill="#fff" text-anchor="start" font-weight="normal" >40</text>
<rect x="1302" y="646" width="3" height="1" fill="#fff"/>
<rect x="1349" y="646" width="3" height="1" fill="#fff"/>
<text x="1356" y="654.5" font-size="14" fill="#fff" text-anchor="start" font-weight="normal" >50</text>
<rect x="1302" y="598" width="3" height="1" fill="#fff"/>
<rect x="1349" y="598" width="3" height="1" fill="#fff"/>
<text x="1356" y="606.5" font-size="14" fill="#fff" text-anchor="start" font-weight="normal" >60</text>
<rect x="1302" y="550" width="3" height="1" fill="#fff"/>
<rect x="1349" y="550" width="3" height="1" fill="#fff"/>
<text x="1356" y="558.5" font-size="14" fill="#fff" text-anchor="start" font-weight="normal" >70</text>
<rect x="1302" y="503" width="3" height="1" fill="#fff"/>
<rect x="1349" y="503" width="3" height="1" fill="#fff"/>
<text x="1356" y="511.5" font-size="14" fill="#fff" text-anchor="start" font-weight="normal" >80</text>
<text transform="translate(1394 695) rotate(-90)" font-size="13.5" fill="#fff" text-anchor="middle" textLength="112" lengthAdjust="spacingAndGlyphs">Magnitude [dBµV]</text>
<rect x="1446" y="1" width="94" height="72" fill="#000"/>
<rect x="1446" y="1" width="94" height="2" fill="#ffffff"/>
<rect x="1446" y="1" width="2" height="72" fill="#ffffff"/>
<rect x="1446" y="71" width="94" height="2" fill="#a0a0a0"/>
<rect x="1538" y="1" width="2" height="72" fill="#a0a0a0"/>
<rect x="1458" y="20" width="69" height="1" fill="#555"/>
<text x="1460" y="48" font-size="27" font-weight="bold" fill="#c0108a" stroke="#c0108a" stroke-width="0.7" textLength="66" lengthAdjust="spacingAndGlyphs">PrtSc</text>
<rect x="1586" y="4" width="79" height="68" rx="9" ry="9" fill="#fff"/>
<g fill="none" stroke="#000" stroke-width="1.9" shape-rendering="auto"><path d="M1586 26 C1590 21 1594 14 1597 10 C1598.5 8 1600.5 7.5 1602 9 C1604 11 1606 16 1608 20 C1610 24 1613 27 1616.4 28.2"/><path d="M1586 31.6 C1590 30.5 1594 28.5 1598 25.5 C1602 22 1606 18.5 1609 16 C1612 13.5 1614 12.6 1616 12.8 C1619 13 1621 15 1624 18 C1627 21 1631 25.5 1635 28 C1639 30 1644 31.5 1647.4 33"/><path d="M1586 36.9 C1591 35.5 1597 33.5 1603 30.5 C1610 27 1617 22 1623.5 18.8 C1626 17.5 1628.5 16.8 1630.5 16.8 C1634 16.8 1637 17.8 1641 20 C1646 23.5 1650 26.5 1655 29.5 C1659 32 1662 34 1665 35.1"/></g>
<text x="1591" y="66" font-size="24" font-weight="bold" fill="#000" stroke="#000" stroke-width="0.8" textLength="68" lengthAdjust="spacingAndGlyphs">GAUSS</text>
<rect x="1350" y="81" width="63" height="48" fill="#000"/>
<rect x="1350" y="81" width="63" height="2" fill="#ffffff"/>
<rect x="1350" y="81" width="2" height="48" fill="#ffffff"/>
<rect x="1350" y="127" width="63" height="2" fill="#a0a0a0"/>
<rect x="1411" y="81" width="2" height="48" fill="#a0a0a0"/>
<rect x="1413" y="81" width="63" height="48" fill="#000"/>
<rect x="1413" y="81" width="63" height="2" fill="#ffffff"/>
<rect x="1413" y="81" width="2" height="48" fill="#ffffff"/>
<rect x="1413" y="127" width="63" height="2" fill="#a0a0a0"/>
<rect x="1474" y="81" width="2" height="48" fill="#a0a0a0"/>
<rect x="1476" y="81" width="62" height="48" fill="#000"/>
<rect x="1476" y="81" width="62" height="2" fill="#ffffff"/>
<rect x="1476" y="81" width="2" height="48" fill="#ffffff"/>
<rect x="1476" y="127" width="62" height="2" fill="#a0a0a0"/>
<rect x="1536" y="81" width="2" height="48" fill="#a0a0a0"/>
<rect x="1538" y="81" width="63" height="48" fill="#000"/>
<rect x="1538" y="81" width="63" height="2" fill="#ffffff"/>
<rect x="1538" y="81" width="2" height="48" fill="#ffffff"/>
<rect x="1538" y="127" width="63" height="2" fill="#a0a0a0"/>
<rect x="1599" y="81" width="2" height="48" fill="#a0a0a0"/>
<rect x="1601" y="81" width="63" height="48" fill="#000"/>
<rect x="1601" y="81" width="63" height="2" fill="#ffffff"/>
<rect x="1601" y="81" width="2" height="48" fill="#ffffff"/>
<rect x="1601" y="127" width="63" height="2" fill="#a0a0a0"/>
<rect x="1662" y="81" width="2" height="48" fill="#a0a0a0"/>
<g shape-rendering="auto"><ellipse cx="1376" cy="100.5" rx="16.5" ry="14" fill="none" stroke="#fff" stroke-width="5"/><path d="M1388 111.5 L1403 123.5" stroke="#fff" stroke-width="8" stroke-linecap="round"/><rect x="1368" y="99" width="15" height="3" fill="#fff"/><rect x="1374" y="94" width="3" height="13" fill="#fff"/></g>
<g shape-rendering="auto"><ellipse cx="1438" cy="100.5" rx="16.5" ry="14" fill="none" stroke="#fff" stroke-width="5"/><path d="M1450 111.5 L1465 123.5" stroke="#fff" stroke-width="8" stroke-linecap="round"/><rect x="1431" y="99" width="14" height="3" fill="#fff"/></g>
<g shape-rendering="auto"><ellipse cx="1501" cy="100.5" rx="16.5" ry="14" fill="none" stroke="#fff" stroke-width="5"/><path d="M1513 111.5 L1528 123.5" stroke="#fff" stroke-width="8" stroke-linecap="round"/><path d="M1493 100 L1501 94 L1509 100 L1507 100 L1507 107 L1495 107 L1495 100 Z" fill="#fff"/></g>
<g shape-rendering="auto" fill="none" stroke="#fff"><path d="M1541.3 108 C1541.5 101 1542 98 1542.7 98.4 C1543.6 99 1544 111.5 1545 111.5 C1546.5 111.5 1549 86 1551.1 86.2 C1553 86.4 1554.5 111 1555.8 111 C1557 111 1558 98 1559.1 97.9 C1560 98 1560.5 101 1561 104" stroke-width="1.2"/><ellipse cx="1572.8" cy="107.3" rx="12" ry="10.4" stroke-width="4.6"/><path d="M1563.4 106 C1564.5 101 1566 102 1567 106 C1568 111 1569 113 1569.5 112 C1570.5 109 1571 106 1571.8 105.4" stroke-width="1.4"/></g>
<path d="M1579 116 L1584 113 L1594.5 120.5 C1597 122.5 1596 126.5 1592 125.8 L1580 119.5 Z" fill="#fff" shape-rendering="auto"/>
<g shape-rendering="auto"><path d="M1611 90.5 L1651 90.5 M1611 90.5 l6 -4 M1611 90.5 l6 4 M1651 90.5 l-6 -4 M1651 90.5 l-6 4" stroke="#fff" stroke-width="1" fill="none"/><ellipse cx="1631.3" cy="90" rx="6.3" ry="5.2" stroke="#fff" stroke-width="1.1" fill="#000"/><path d="M1628.2 92 C1628.2 88.5 1634.8 88.5 1634.8 92 L1634.9 106 L1635.6 104 C1636.3 98.5 1641 98.5 1641.5 103 L1641.7 106 L1642.4 104 C1643.3 99.8 1648 99.8 1648.5 104 L1649.2 107.5 L1649.7 106.8 C1650.4 103.6 1654 103.8 1654.2 107 L1654.2 119.5 C1651 124 1645 126.3 1637.6 125.6 C1630 125 1624 119 1618.2 113 C1617 111.5 1617.2 109 1619 109 C1622.5 109.3 1625 111 1628.3 113.5 Z" fill="#fff"/></g>
<rect x="1446" y="169" width="226" height="73" fill="#000"/>
<rect x="1446" y="169" width="226" height="2" fill="#ffffff"/>
<rect x="1446" y="169" width="2" height="73" fill="#ffffff"/>
<rect x="1446" y="240" width="226" height="2" fill="#a0a0a0"/>
<rect x="1670" y="169" width="2" height="73" fill="#a0a0a0"/>
<rect x="1545" y="189" width="100" height="2" fill="#fff"/>
<text x="1545" y="216.5" font-size="24" font-weight="bold" fill="url(#rpg)" stroke="url(#rpg)" stroke-width="0.7" textLength="100" lengthAdjust="spacingAndGlyphs">SWcount</text>
<rect x="1446" y="257" width="226" height="73" fill="#000"/>
<rect x="1446" y="257" width="226" height="2" fill="#ffffff"/>
<rect x="1446" y="257" width="2" height="73" fill="#ffffff"/>
<rect x="1446" y="328" width="226" height="2" fill="#a0a0a0"/>
<rect x="1670" y="257" width="2" height="73" fill="#a0a0a0"/>
<rect x="1516" y="277" width="129" height="2" fill="#fff"/>
<text x="1516" y="304.5" font-size="24" font-weight="bold" fill="url(#rpg)" stroke="url(#rpg)" stroke-width="0.7" textLength="129" lengthAdjust="spacingAndGlyphs">Transducer</text>
<rect x="1446" y="345" width="226" height="73" fill="#000"/>
<rect x="1446" y="345" width="226" height="2" fill="#ffffff"/>
<rect x="1446" y="345" width="2" height="73" fill="#ffffff"/>
<rect x="1446" y="416" width="226" height="2" fill="#a0a0a0"/>
<rect x="1670" y="345" width="2" height="73" fill="#a0a0a0"/>
<rect x="1520" y="365" width="125" height="2" fill="#fff"/>
<text x="1519" y="392.5" font-size="24" font-weight="bold" fill="url(#rpg)" stroke="url(#rpg)" stroke-width="0.7" textLength="126" lengthAdjust="spacingAndGlyphs">Limit Lines</text>
<rect x="1446" y="433" width="226" height="73" fill="#000"/>
<rect x="1446" y="433" width="226" height="2" fill="#ffffff"/>
<rect x="1446" y="433" width="2" height="73" fill="#ffffff"/>
<rect x="1446" y="504" width="226" height="2" fill="#a0a0a0"/>
<rect x="1670" y="433" width="2" height="73" fill="#a0a0a0"/>
<rect x="1569" y="453" width="76" height="2" fill="#fff"/>
<text x="1569" y="479.5" font-size="24" font-weight="bold" fill="url(#rpg)" stroke="url(#rpg)" stroke-width="0.7" textLength="76" lengthAdjust="spacingAndGlyphs">Curves</text>
<rect x="1446" y="521" width="226" height="73" fill="#000"/>
<rect x="1446" y="521" width="226" height="2" fill="#ffffff"/>
<rect x="1446" y="521" width="2" height="73" fill="#ffffff"/>
<rect x="1446" y="592" width="226" height="2" fill="#a0a0a0"/>
<rect x="1670" y="521" width="2" height="73" fill="#a0a0a0"/>
<rect x="1547" y="540" width="98" height="2" fill="#fff"/>
<text x="1547" y="567.5" font-size="24" font-weight="bold" fill="url(#rpg)" stroke="url(#rpg)" stroke-width="0.7" textLength="98" lengthAdjust="spacingAndGlyphs">Settings</text>
<rect x="1446" y="609" width="226" height="72" fill="#808080"/>
<rect x="1446" y="609" width="226" height="2" fill="#ffffff"/>
<rect x="1446" y="609" width="2" height="72" fill="#ffffff"/>
<rect x="1446" y="679" width="226" height="2" fill="#a0a0a0"/>
<rect x="1670" y="609" width="2" height="72" fill="#a0a0a0"/>
<rect x="1448" y="678" width="222" height="1" fill="#202020"/>
<rect x="1669" y="611" width="1" height="68" fill="#202020"/>
<rect x="1562" y="628" width="83" height="2" fill="#a8a8a8"/>
<text x="1562" y="656" font-size="24" font-weight="bold" fill="#a0a0a0" stroke="#a0a0a0" stroke-width="0.7" textLength="83" lengthAdjust="spacingAndGlyphs">Marker</text>
<rect x="1446" y="697" width="226" height="72" fill="#000"/>
<rect x="1446" y="697" width="226" height="2" fill="#ffffff"/>
<rect x="1446" y="697" width="2" height="72" fill="#ffffff"/>
<rect x="1446" y="767" width="226" height="2" fill="#a0a0a0"/>
<rect x="1670" y="697" width="2" height="72" fill="#a0a0a0"/>
<rect x="1486" y="715" width="159" height="2" fill="#fff"/>
<text x="1488" y="744" font-size="24" font-weight="bold" fill="url(#rpg)" stroke="url(#rpg)" stroke-width="0.7" textLength="157" lengthAdjust="spacingAndGlyphs">Save Settings</text>
<rect x="1446" y="784" width="226" height="73" fill="#808080"/>
<rect x="1446" y="784" width="226" height="2" fill="#ffffff"/>
<rect x="1446" y="784" width="2" height="73" fill="#ffffff"/>
<rect x="1446" y="855" width="226" height="2" fill="#a0a0a0"/>
<rect x="1670" y="784" width="2" height="73" fill="#a0a0a0"/>
<rect x="1448" y="854" width="222" height="1" fill="#202020"/>
<rect x="1669" y="786" width="1" height="69" fill="#202020"/>
<rect x="1506" y="803" width="139" height="2" fill="#a8a8a8"/>
<text x="1511" y="831.5" font-size="24" font-weight="bold" fill="#a0a0a0" stroke="#a0a0a0" stroke-width="0.7" textLength="134" lengthAdjust="spacingAndGlyphs">Trace Math</text>
<rect x="1446" y="922" width="226" height="71" fill="#000"/>
<rect x="1446" y="922" width="226" height="2" fill="#ffffff"/>
<rect x="1446" y="922" width="2" height="71" fill="#ffffff"/>
<rect x="1446" y="991" width="226" height="2" fill="#a0a0a0"/>
<rect x="1670" y="922" width="2" height="71" fill="#a0a0a0"/>
<rect x="1538" y="941" width="107" height="2" fill="#fff"/>
<text x="1597" y="969.5" font-size="24" font-weight="bold" fill="url(#rpg)" stroke="url(#rpg)" stroke-width="0.7" textLength="48" lengthAdjust="spacingAndGlyphs">RUN</text>
<rect x="139" y="947" width="193" height="47" fill="#000"/>
<rect x="139" y="947" width="193" height="2" fill="#ffffff"/>
<rect x="139" y="947" width="2" height="47" fill="#ffffff"/>
<rect x="139" y="992" width="193" height="2" fill="#a0a0a0"/>
<rect x="330" y="947" width="2" height="47" fill="#a0a0a0"/>
<rect x="153" y="954" width="156" height="1" fill="#fff"/>
<text x="153" y="983" font-size="27" font-weight="bold" fill="url(#tabg)" stroke="url(#tabg)" stroke-width="0.8" textLength="156" lengthAdjust="spacingAndGlyphs">Spectrogram</text>
<rect x="334" y="947" width="193" height="47" fill="#000"/>
<rect x="334" y="947" width="193" height="2" fill="#ffffff"/>
<rect x="334" y="947" width="2" height="47" fill="#ffffff"/>
<rect x="334" y="992" width="193" height="2" fill="#a0a0a0"/>
<rect x="525" y="947" width="2" height="47" fill="#a0a0a0"/>
<rect x="348" y="954" width="108" height="1" fill="#fff"/>
<text x="348" y="983" font-size="27" font-weight="bold" fill="url(#tabg)" stroke="url(#tabg)" stroke-width="0.8" textLength="102" lengthAdjust="spacingAndGlyphs">Receiver</text>
<rect x="529" y="947" width="191" height="47" fill="#000"/>
<rect x="529" y="947" width="191" height="2" fill="#ffffff"/>
<rect x="529" y="947" width="2" height="47" fill="#ffffff"/>
<rect x="529" y="992" width="191" height="2" fill="#a0a0a0"/>
<rect x="718" y="947" width="2" height="47" fill="#a0a0a0"/>
<rect x="544" y="954" width="160" height="1" fill="#fff"/>
<text x="544" y="983" font-size="27" font-weight="bold" fill="url(#tabg)" stroke="url(#tabg)" stroke-width="0.8" textLength="159" lengthAdjust="spacingAndGlyphs">Time Domain</text>
<rect x="723" y="947" width="192" height="47" fill="#000"/>
<rect x="723" y="947" width="192" height="2" fill="#ffffff"/>
<rect x="723" y="947" width="2" height="47" fill="#ffffff"/>
<rect x="723" y="992" width="192" height="2" fill="#a0a0a0"/>
<rect x="913" y="947" width="2" height="47" fill="#a0a0a0"/>
<rect x="738" y="954" width="145" height="1" fill="#fff"/>
<text x="738" y="983" font-size="27" font-weight="bold" fill="url(#tabg)" stroke="url(#tabg)" stroke-width="0.8" textLength="140" lengthAdjust="spacingAndGlyphs">SP Analyzer</text>
<rect x="918" y="947" width="193" height="47" fill="#000"/>
<rect x="918" y="947" width="193" height="2" fill="#a0a0a0"/>
<rect x="918" y="947" width="2" height="47" fill="#a0a0a0"/>
<rect x="918" y="992" width="193" height="2" fill="#ffffff"/>
<rect x="1109" y="947" width="2" height="47" fill="#ffffff"/>
<rect x="931" y="954" width="141" height="1" fill="#c0108a"/>
<text x="931" y="983" font-size="27" font-weight="bold" fill="url(#tabg)" stroke="url(#tabg)" stroke-width="0.8" textLength="140" lengthAdjust="spacingAndGlyphs">RT Analyzer</text>
<rect x="1112" y="947" width="143" height="47" fill="#000"/>
<rect x="1112" y="947" width="143" height="2" fill="#ffffff"/>
<rect x="1112" y="947" width="2" height="47" fill="#ffffff"/>
<rect x="1112" y="992" width="143" height="2" fill="#a0a0a0"/>
<rect x="1253" y="947" width="2" height="47" fill="#a0a0a0"/>
<rect x="1124" y="954" width="38" height="1" fill="#fff"/>
<text x="1124" y="983" font-size="27" font-weight="bold" fill="url(#tabg)" stroke="url(#tabg)" stroke-width="0.8" textLength="35" lengthAdjust="spacingAndGlyphs">APD</text>
<rect x="1257" y="947" width="142" height="47" fill="#000"/>
<rect x="1257" y="947" width="142" height="2" fill="#ffffff"/>
<rect x="1257" y="947" width="2" height="47" fill="#ffffff"/>
<rect x="1257" y="992" width="142" height="2" fill="#a0a0a0"/>
<rect x="1397" y="947" width="2" height="47" fill="#a0a0a0"/>
<rect x="1268" y="954" width="38" height="1" fill="#fff"/>
<text x="1268" y="983" font-size="27" font-weight="bold" fill="url(#tabg)" stroke="url(#tabg)" stroke-width="0.8" textLength="18" lengthAdjust="spacingAndGlyphs">IQ</text>
</svg></body></html>
